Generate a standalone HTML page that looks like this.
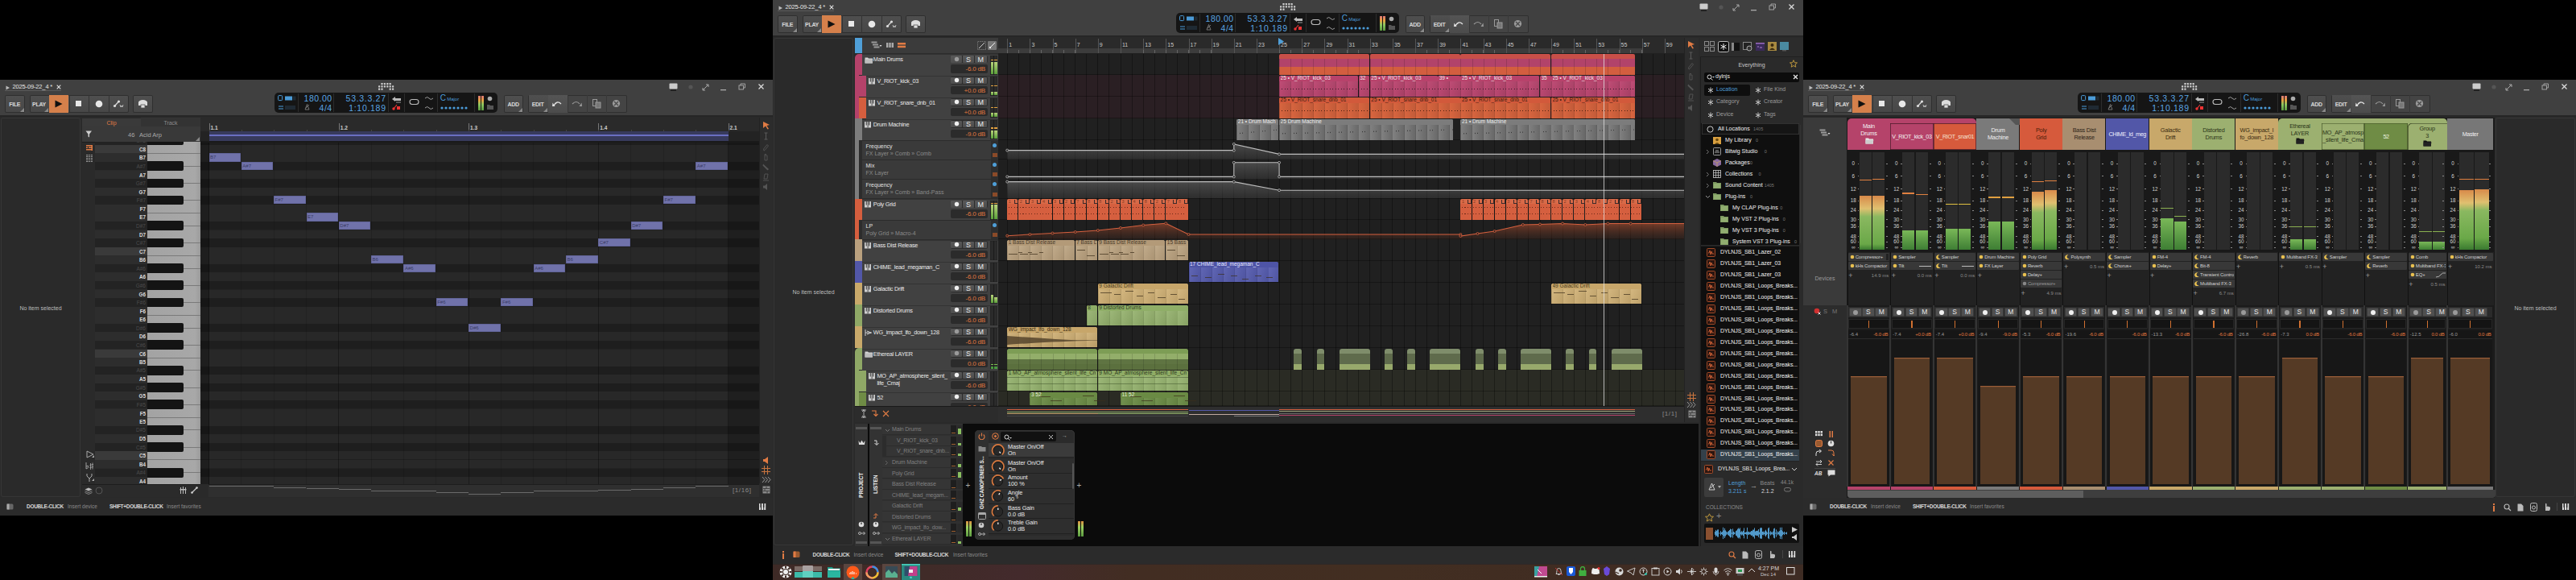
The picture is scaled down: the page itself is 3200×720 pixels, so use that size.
<!DOCTYPE html><html><head><meta charset="utf-8"><style>html,body{margin:0;padding:0;background:#000;width:3200px;height:720px;overflow:hidden;position:relative;}.a,b,svg{position:absolute;display:block;}.t,p{position:absolute;margin:0;font-family:"Liberation Sans",sans-serif;white-space:nowrap;line-height:1.2;}</style></head><body>
<b style="left:0px;top:99px;width:960px;height:541px;background:#2a2a2a"></b>
<b style="left:0px;top:99px;width:960px;height:45px;background:#404040"></b>
<b style="left:0px;top:143px;width:960px;height:2px;background:#262626"></b>
<svg style="left:7px;top:105.5px;" width="6" height="6"><path d="M0.5 0.5 L5 3 L0.5 5.5Z" fill="#bbb"/></svg>
<p style="left:15.5px;top:102.7px;font-size:7.5px;color:#e6e6e6;letter-spacing:-0.15px">2025-09-22_4 *</p>
<svg style="left:69.5px;top:105.2px;" width="6" height="6"><path d="M0.7 0.7 L5.3 5.3 M5.3 0.7 L0.7 5.3" stroke="#e0e0e0" stroke-width="1.1"/></svg>
<b style="left:6px;top:111.8px;width:70px;height:1px;background:#5a5a5a"></b>
<svg style="left:470.2px;top:102.9px;" width="20" height="10"><rect x="3.4" y="0" width="2.2" height="2.2" rx=".4" fill="#cfcfcf"/><rect x="6.8" y="0" width="2.2" height="2.2" rx=".4" fill="#cfcfcf"/><rect x="10.2" y="0" width="2.2" height="2.2" rx=".4" fill="#cfcfcf"/><rect x="13.6" y="0" width="2.2" height="2.2" rx=".4" fill="#cfcfcf"/><rect x="0" y="3.3" width="2.2" height="2.2" rx=".4" fill="#cfcfcf"/><rect x="3.4" y="3.3" width="2.2" height="2.2" rx=".4" fill="#cfcfcf"/><rect x="6.8" y="3.3" width="2.2" height="2.2" rx=".4" fill="#cfcfcf"/><rect x="10.2" y="3.3" width="2.2" height="2.2" rx=".4" fill="#cfcfcf"/><rect x="13.6" y="3.3" width="2.2" height="2.2" rx=".4" fill="#cfcfcf"/><rect x="17" y="3.3" width="2.2" height="2.2" rx=".4" fill="#cfcfcf"/><rect x="0" y="6.6" width="2.2" height="2.2" rx=".4" fill="#cfcfcf"/><rect x="3.4" y="6.6" width="2.2" height="2.2" rx=".4" fill="#cfcfcf"/><rect x="13.6" y="6.6" width="2.2" height="2.2" rx=".4" fill="#cfcfcf"/><rect x="17" y="6.6" width="2.2" height="2.2" rx=".4" fill="#cfcfcf"/></svg>
<b style="left:6px;top:117.5px;width:24.5px;height:22px;background:linear-gradient(#4f4f4f,#474747);border-radius:2px;box-shadow:inset 0 0 0 1px #2f2f2f"></b>
<p style="left:6px;top:126px;font-size:7px;color:#d8d8d8;width:24.5px;text-align:center;font-weight:bold;letter-spacing:-0.3px">FILE</p>
<div class="a" style="left:24.5px;top:133.5px;width:0;height:0;border-left:5px solid transparent;border-bottom:5px solid #8a8a8a;"></div>
<b style="left:36.5px;top:117.5px;width:123px;height:22px;background:linear-gradient(#4f4f4f,#474747);border-radius:2px;box-shadow:inset 0 0 0 1px #2f2f2f"></b>
<p style="left:36.5px;top:126px;font-size:7px;color:#d8d8d8;width:24px;text-align:center;font-weight:bold;letter-spacing:-0.3px">PLAY</p>
<div class="a" style="left:54.5px;top:133.5px;width:0;height:0;border-left:5px solid transparent;border-bottom:5px solid #8a8a8a;"></div>
<b style="left:61px;top:117.5px;width:24px;height:22px;background:#d5804b"></b>
<svg style="left:68px;top:123.5px;" width="10" height="10"><path d="M0.5 0.5 L9.5 5 L0.5 9.5Z" fill="#111"/></svg>
<b style="left:85.5px;top:117.5px;width:1px;height:22px;background:#333"></b>
<b style="left:109.5px;top:117.5px;width:1px;height:22px;background:#333"></b>
<b style="left:134.5px;top:117.5px;width:1px;height:22px;background:#333"></b>
<svg style="left:93.5px;top:125px;" width="8" height="8"><rect x="0" y="0" width="7" height="7" fill="#e8e8e8"/></svg>
<svg style="left:117.5px;top:123.5px;" width="10" height="10"><circle cx="5" cy="5" r="4.3" fill="#e8e8e8"/></svg>
<svg style="left:140px;top:122.5px;" width="14" height="12"><circle cx="2.5" cy="8.5" r="1.6" fill="#ddd"/><circle cx="7.5" cy="3" r="1.6" fill="#ddd"/><path d="M2.5 8.5 L7.5 3" stroke="#ddd" stroke-width="1.2"/><path d="M9 7 l1 3 l1 -2 l1 2 l1 -3" stroke="#ddd" stroke-width="0.7" fill="none"/></svg>
<b style="left:165px;top:117.5px;width:24.5px;height:22px;background:linear-gradient(#4f4f4f,#474747);border-radius:2px;box-shadow:inset 0 0 0 1px #2f2f2f"></b>
<svg style="left:171px;top:122.5px;" width="13" height="12"><ellipse cx="6.5" cy="4" rx="5.5" ry="3" fill="#ddd"/><rect x="1" y="4" width="11" height="4" fill="#ddd"/><rect x="4" y="7" width="5" height="4" fill="#ddd" stroke="#555" stroke-width="0.8"/></svg>
<b style="left:340.7px;top:115.3px;width:277px;height:25px;background:#151515;border-radius:5px"></b>
<b style="left:370.2px;top:116.3px;width:1px;height:23px;background:#2c2c2c"></b>
<b style="left:414.2px;top:116.3px;width:1px;height:23px;background:#2c2c2c"></b>
<b style="left:482.2px;top:116.3px;width:1px;height:23px;background:#2c2c2c"></b>
<b style="left:502.2px;top:116.3px;width:1px;height:23px;background:#2c2c2c"></b>
<b style="left:543.2px;top:116.3px;width:1px;height:23px;background:#2c2c2c"></b>
<b style="left:589.2px;top:116.3px;width:1px;height:23px;background:#2c2c2c"></b>
<svg style="left:344.7px;top:118.3px;" width="26" height="20"><rect x="0.6" y="0.6" width="5" height="6" rx="1" fill="none" stroke="#4b9bd8" stroke-width="1"/><rect x="9" y="1.5" width="9" height="5" fill="#4b9bd8"/><rect x="18.5" y="1.5" width="4" height="5" fill="#1f2a33"/><path d="M1 14 h6 M1 17 h6" stroke="#4b9bd8" stroke-width="1"/><rect x="9" y="13" width="13" height="5" fill="#1f2a33"/></svg>
<p style="left:370.7px;top:116.3px;font-size:10.5px;color:#5aa5e3;width:42px;text-align:right;letter-spacing:0.5px">180.00</p>
<p style="left:370.7px;top:127.9px;font-size:10.5px;color:#5aa5e3;width:42px;text-align:right;letter-spacing:0.5px">4/4</p>
<svg style="left:377.7px;top:129.3px;" width="7" height="8"><path d="M1 7 L3.5 0.5 L6 7Z M2 5 L6 1" stroke="#888" stroke-width="0.8" fill="none"/></svg>
<p style="left:414.7px;top:116.3px;font-size:10.5px;color:#5aa5e3;width:65px;text-align:right;letter-spacing:0.7px">53.3.3.27</p>
<p style="left:414.7px;top:127.9px;font-size:10.5px;color:#5aa5e3;width:65px;text-align:right;letter-spacing:0.7px">1:10.189</p>
<svg style="left:485.7px;top:119.3px;" width="14" height="18"><path d="M1 4 L5 1 L5 7Z" fill="#bbb"/><rect x="5" y="3" width="7" height="3" fill="#bbb"/><path d="M6 8 h6" stroke="#999"/><circle cx="3" cy="16" r="1.7" fill="#e33"/><path d="M3 16 L7 11" stroke="#e33" stroke-width="1.2"/><rect x="7" y="13" width="4" height="4" fill="#e33"/></svg>
<svg style="left:507.7px;top:122.3px;" width="14" height="10"><rect x="1" y="1.5" width="11" height="6" rx="3" fill="none" stroke="#bbb" stroke-width="1.1"/></svg>
<svg style="left:526.7px;top:119.3px;" width="12" height="18"><path d="M1 3 Q4 0 6 3 T11 3" stroke="#aaa" fill="none" stroke-width="0.9"/><path d="M1 15 Q4 12 6 15 T11 15" stroke="#aaa" fill="none" stroke-width="0.9"/></svg>
<p style="left:546.7px;top:116.3px;font-size:10px;color:#4b9bd8">C</p>
<p style="left:555.2px;top:119.8px;font-size:6px;color:#4b9bd8">Major</p>
<svg style="left:546.7px;top:131.3px;" width="40" height="6"><circle cx="2.0" cy="3" r="1.6" fill="#4b9bd8"/><circle cx="7.0" cy="3" r="1.6" fill="#4b9bd8"/><circle cx="12.0" cy="3" r="1.6" fill="#4b9bd8"/><circle cx="17.0" cy="3" r="1.6" fill="#4b9bd8"/><circle cx="22.0" cy="3" r="1.6" fill="#4b9bd8"/><circle cx="27.0" cy="3" r="1.6" fill="#4b9bd8"/><circle cx="32.0" cy="3" r="1.6" fill="#4b9bd8"/></svg>
<b style="left:593.7px;top:119.3px;width:3px;height:18px;background:linear-gradient(#d77,#e9a040 30%,#8cc860 60%,#5a9a40)"></b>
<b style="left:597.7px;top:119.3px;width:3px;height:18px;background:linear-gradient(#d77,#e9a040 30%,#8cc860 60%,#5a9a40)"></b>
<svg style="left:603.7px;top:119.3px;" width="10" height="18"><circle cx="4.5" cy="3.5" r="2.8" fill="#aaa"/><path d="M1 11 h3 l1 1 h4 v5 h-8z" fill="#555"/></svg>
<b style="left:625.5px;top:117.5px;width:24.5px;height:22px;background:linear-gradient(#4f4f4f,#474747);border-radius:2px;box-shadow:inset 0 0 0 1px #2f2f2f"></b>
<p style="left:625.5px;top:126px;font-size:7px;color:#d8d8d8;width:24.5px;text-align:center;font-weight:bold;letter-spacing:-0.3px">ADD</p>
<div class="a" style="left:644.0px;top:133.5px;width:0;height:0;border-left:5px solid transparent;border-bottom:5px solid #8a8a8a;"></div>
<b style="left:656px;top:117.5px;width:122.5px;height:22px;background:#444;border-radius:2px;box-shadow:inset 0 0 0 1px #2f2f2f"></b>
<b style="left:656.5px;top:118px;width:24px;height:21px;background:linear-gradient(#4f4f4f,#474747)"></b>
<b style="left:680.5px;top:117.5px;width:24px;height:22px;background:linear-gradient(#545454,#4c4c4c)"></b>
<p style="left:656px;top:126px;font-size:7px;color:#d8d8d8;width:24px;text-align:center;font-weight:bold;letter-spacing:-0.3px">EDIT</p>
<div class="a" style="left:674.5px;top:133.5px;width:0;height:0;border-left:5px solid transparent;border-bottom:5px solid #8a8a8a;"></div>
<b style="left:704.5px;top:117.5px;width:1px;height:22px;background:#383838"></b>
<b style="left:728.5px;top:117.5px;width:1px;height:22px;background:#383838"></b>
<b style="left:753px;top:117.5px;width:1px;height:22px;background:#383838"></b>
<svg style="left:686px;top:123.5px;" width="14" height="9"><path d="M2 7 Q6 0 11 5" stroke="#e0e0e0" stroke-width="1.3" fill="none"/><path d="M0.5 3.5 L3.5 8 L0 8Z" fill="#e0e0e0"/></svg>
<svg style="left:710px;top:123.5px;" width="14" height="9"><path d="M1 5 Q6 0 10 5" stroke="#999" stroke-width="1.2" fill="none"/><path d="M12.5 3.5 L9.5 8 L13 8Z" fill="#999"/></svg>
<svg style="left:736px;top:122.5px;" width="11" height="12"><rect x="0.5" y="0.5" width="5" height="8" fill="none" stroke="#999"/><rect x="4" y="4" width="6" height="7" fill="#777" stroke="#999"/></svg>
<svg style="left:760px;top:123px;" width="11" height="11"><circle cx="5.5" cy="5.5" r="4.6" fill="#9a9a9a"/><path d="M3 3 L8 8 M8 3 L3 8" stroke="#4a4a4a" stroke-width="1.3"/></svg>
<svg style="left:831px;top:103px;" width="12" height="12"><rect x="0.5" y="0.5" width="10" height="7" rx="1" fill="#ccc"/><rect x="2" y="8" width="7" height="2" fill="#222"/></svg>
<svg style="left:854px;top:104px;" width="8" height="8"><circle cx="4" cy="4" r="2.6" fill="#555"/></svg>
<svg style="left:872px;top:104px;" width="10" height="9"><path d="M1 8 L8 1 M1 8 v-3 M1 8 h3 M8 1 h-3 M8 1 v3" stroke="#aaa" stroke-width="1"/></svg>
<svg style="left:894px;top:104px;" width="10" height="10"><rect x="1" y="7" width="7" height="1.3" fill="#aaa"/></svg>
<svg style="left:917px;top:103px;" width="10" height="10"><rect x="1" y="3" width="5.5" height="5" fill="none" stroke="#aaa" stroke-width="0.9"/><path d="M3 3 V1 H8.5 V6 H6.5" fill="none" stroke="#aaa" stroke-width="0.9"/></svg>
<svg style="left:941px;top:103px;" width="10" height="10"><path d="M1.5 1.5 L7.5 7.5 M7.5 1.5 L1.5 7.5" stroke="#ddd" stroke-width="1.2"/></svg>
<b style="left:960px;top:0px;width:1280px;height:720px;background:#2a2a2a"></b>
<b style="left:960px;top:0px;width:1280px;height:45px;background:#404040"></b>
<b style="left:960px;top:44px;width:1280px;height:2px;background:#262626"></b>
<svg style="left:967px;top:6.5px;" width="6" height="6"><path d="M0.5 0.5 L5 3 L0.5 5.5Z" fill="#bbb"/></svg>
<p style="left:975.5px;top:3.7px;font-size:7.5px;color:#e6e6e6;letter-spacing:-0.15px">2025-09-22_4 *</p>
<svg style="left:1029.5px;top:6.2px;" width="6" height="6"><path d="M0.7 0.7 L5.3 5.3 M5.3 0.7 L0.7 5.3" stroke="#e0e0e0" stroke-width="1.1"/></svg>
<b style="left:966px;top:12.8px;width:70px;height:1px;background:#5a5a5a"></b>
<svg style="left:1590.2px;top:3.9px;" width="20" height="10"><rect x="3.4" y="0" width="2.2" height="2.2" rx=".4" fill="#cfcfcf"/><rect x="6.8" y="0" width="2.2" height="2.2" rx=".4" fill="#cfcfcf"/><rect x="10.2" y="0" width="2.2" height="2.2" rx=".4" fill="#cfcfcf"/><rect x="13.6" y="0" width="2.2" height="2.2" rx=".4" fill="#cfcfcf"/><rect x="0" y="3.3" width="2.2" height="2.2" rx=".4" fill="#cfcfcf"/><rect x="3.4" y="3.3" width="2.2" height="2.2" rx=".4" fill="#cfcfcf"/><rect x="6.8" y="3.3" width="2.2" height="2.2" rx=".4" fill="#cfcfcf"/><rect x="10.2" y="3.3" width="2.2" height="2.2" rx=".4" fill="#cfcfcf"/><rect x="13.6" y="3.3" width="2.2" height="2.2" rx=".4" fill="#cfcfcf"/><rect x="17" y="3.3" width="2.2" height="2.2" rx=".4" fill="#cfcfcf"/><rect x="0" y="6.6" width="2.2" height="2.2" rx=".4" fill="#cfcfcf"/><rect x="3.4" y="6.6" width="2.2" height="2.2" rx=".4" fill="#cfcfcf"/><rect x="13.6" y="6.6" width="2.2" height="2.2" rx=".4" fill="#cfcfcf"/><rect x="17" y="6.6" width="2.2" height="2.2" rx=".4" fill="#cfcfcf"/></svg>
<b style="left:966px;top:18.5px;width:24.5px;height:22px;background:linear-gradient(#4f4f4f,#474747);border-radius:2px;box-shadow:inset 0 0 0 1px #2f2f2f"></b>
<p style="left:966px;top:27px;font-size:7px;color:#d8d8d8;width:24.5px;text-align:center;font-weight:bold;letter-spacing:-0.3px">FILE</p>
<div class="a" style="left:984.5px;top:34.5px;width:0;height:0;border-left:5px solid transparent;border-bottom:5px solid #8a8a8a;"></div>
<b style="left:996.5px;top:18.5px;width:123px;height:22px;background:linear-gradient(#4f4f4f,#474747);border-radius:2px;box-shadow:inset 0 0 0 1px #2f2f2f"></b>
<p style="left:996.5px;top:27px;font-size:7px;color:#d8d8d8;width:24px;text-align:center;font-weight:bold;letter-spacing:-0.3px">PLAY</p>
<div class="a" style="left:1014.5px;top:34.5px;width:0;height:0;border-left:5px solid transparent;border-bottom:5px solid #8a8a8a;"></div>
<b style="left:1021px;top:18.5px;width:24px;height:22px;background:#d5804b"></b>
<svg style="left:1028px;top:24.5px;" width="10" height="10"><path d="M0.5 0.5 L9.5 5 L0.5 9.5Z" fill="#111"/></svg>
<b style="left:1045.5px;top:18.5px;width:1px;height:22px;background:#333"></b>
<b style="left:1069.5px;top:18.5px;width:1px;height:22px;background:#333"></b>
<b style="left:1094.5px;top:18.5px;width:1px;height:22px;background:#333"></b>
<svg style="left:1053.5px;top:26px;" width="8" height="8"><rect x="0" y="0" width="7" height="7" fill="#e8e8e8"/></svg>
<svg style="left:1077.5px;top:24.5px;" width="10" height="10"><circle cx="5" cy="5" r="4.3" fill="#e8e8e8"/></svg>
<svg style="left:1100px;top:23.5px;" width="14" height="12"><circle cx="2.5" cy="8.5" r="1.6" fill="#ddd"/><circle cx="7.5" cy="3" r="1.6" fill="#ddd"/><path d="M2.5 8.5 L7.5 3" stroke="#ddd" stroke-width="1.2"/><path d="M9 7 l1 3 l1 -2 l1 2 l1 -3" stroke="#ddd" stroke-width="0.7" fill="none"/></svg>
<b style="left:1125px;top:18.5px;width:24.5px;height:22px;background:linear-gradient(#4f4f4f,#474747);border-radius:2px;box-shadow:inset 0 0 0 1px #2f2f2f"></b>
<svg style="left:1131px;top:23.5px;" width="13" height="12"><ellipse cx="6.5" cy="4" rx="5.5" ry="3" fill="#ddd"/><rect x="1" y="4" width="11" height="4" fill="#ddd"/><rect x="4" y="7" width="5" height="4" fill="#ddd" stroke="#555" stroke-width="0.8"/></svg>
<b style="left:1460.7px;top:16.3px;width:277px;height:25px;background:#151515;border-radius:5px"></b>
<b style="left:1490.2px;top:17.3px;width:1px;height:23px;background:#2c2c2c"></b>
<b style="left:1534.2px;top:17.3px;width:1px;height:23px;background:#2c2c2c"></b>
<b style="left:1602.2px;top:17.3px;width:1px;height:23px;background:#2c2c2c"></b>
<b style="left:1622.2px;top:17.3px;width:1px;height:23px;background:#2c2c2c"></b>
<b style="left:1663.2px;top:17.3px;width:1px;height:23px;background:#2c2c2c"></b>
<b style="left:1709.2px;top:17.3px;width:1px;height:23px;background:#2c2c2c"></b>
<svg style="left:1464.7px;top:19.3px;" width="26" height="20"><rect x="0.6" y="0.6" width="5" height="6" rx="1" fill="none" stroke="#4b9bd8" stroke-width="1"/><rect x="9" y="1.5" width="9" height="5" fill="#4b9bd8"/><rect x="18.5" y="1.5" width="4" height="5" fill="#1f2a33"/><path d="M1 14 h6 M1 17 h6" stroke="#4b9bd8" stroke-width="1"/><rect x="9" y="13" width="13" height="5" fill="#1f2a33"/></svg>
<p style="left:1490.7px;top:17.3px;font-size:10.5px;color:#5aa5e3;width:42px;text-align:right;letter-spacing:0.5px">180.00</p>
<p style="left:1490.7px;top:28.9px;font-size:10.5px;color:#5aa5e3;width:42px;text-align:right;letter-spacing:0.5px">4/4</p>
<svg style="left:1497.7px;top:30.3px;" width="7" height="8"><path d="M1 7 L3.5 0.5 L6 7Z M2 5 L6 1" stroke="#888" stroke-width="0.8" fill="none"/></svg>
<p style="left:1534.7px;top:17.3px;font-size:10.5px;color:#5aa5e3;width:65px;text-align:right;letter-spacing:0.7px">53.3.3.27</p>
<p style="left:1534.7px;top:28.9px;font-size:10.5px;color:#5aa5e3;width:65px;text-align:right;letter-spacing:0.7px">1:10.189</p>
<svg style="left:1605.7px;top:20.3px;" width="14" height="18"><path d="M1 4 L5 1 L5 7Z" fill="#bbb"/><rect x="5" y="3" width="7" height="3" fill="#bbb"/><path d="M6 8 h6" stroke="#999"/><circle cx="3" cy="16" r="1.7" fill="#e33"/><path d="M3 16 L7 11" stroke="#e33" stroke-width="1.2"/><rect x="7" y="13" width="4" height="4" fill="#e33"/></svg>
<svg style="left:1627.7px;top:23.3px;" width="14" height="10"><rect x="1" y="1.5" width="11" height="6" rx="3" fill="none" stroke="#bbb" stroke-width="1.1"/></svg>
<svg style="left:1646.7px;top:20.3px;" width="12" height="18"><path d="M1 3 Q4 0 6 3 T11 3" stroke="#aaa" fill="none" stroke-width="0.9"/><path d="M1 15 Q4 12 6 15 T11 15" stroke="#aaa" fill="none" stroke-width="0.9"/></svg>
<p style="left:1666.7px;top:17.3px;font-size:10px;color:#4b9bd8">C</p>
<p style="left:1675.2px;top:20.8px;font-size:6px;color:#4b9bd8">Major</p>
<svg style="left:1666.7px;top:32.3px;" width="40" height="6"><circle cx="2.0" cy="3" r="1.6" fill="#4b9bd8"/><circle cx="7.0" cy="3" r="1.6" fill="#4b9bd8"/><circle cx="12.0" cy="3" r="1.6" fill="#4b9bd8"/><circle cx="17.0" cy="3" r="1.6" fill="#4b9bd8"/><circle cx="22.0" cy="3" r="1.6" fill="#4b9bd8"/><circle cx="27.0" cy="3" r="1.6" fill="#4b9bd8"/><circle cx="32.0" cy="3" r="1.6" fill="#4b9bd8"/></svg>
<b style="left:1713.7px;top:20.3px;width:3px;height:18px;background:linear-gradient(#d77,#e9a040 30%,#8cc860 60%,#5a9a40)"></b>
<b style="left:1717.7px;top:20.3px;width:3px;height:18px;background:linear-gradient(#d77,#e9a040 30%,#8cc860 60%,#5a9a40)"></b>
<svg style="left:1723.7px;top:20.3px;" width="10" height="18"><circle cx="4.5" cy="3.5" r="2.8" fill="#aaa"/><path d="M1 11 h3 l1 1 h4 v5 h-8z" fill="#555"/></svg>
<b style="left:1745.5px;top:18.5px;width:24.5px;height:22px;background:linear-gradient(#4f4f4f,#474747);border-radius:2px;box-shadow:inset 0 0 0 1px #2f2f2f"></b>
<p style="left:1745.5px;top:27px;font-size:7px;color:#d8d8d8;width:24.5px;text-align:center;font-weight:bold;letter-spacing:-0.3px">ADD</p>
<div class="a" style="left:1764.0px;top:34.5px;width:0;height:0;border-left:5px solid transparent;border-bottom:5px solid #8a8a8a;"></div>
<b style="left:1776px;top:18.5px;width:122.5px;height:22px;background:#444;border-radius:2px;box-shadow:inset 0 0 0 1px #2f2f2f"></b>
<b style="left:1776.5px;top:19px;width:24px;height:21px;background:linear-gradient(#4f4f4f,#474747)"></b>
<b style="left:1800.5px;top:18.5px;width:24px;height:22px;background:linear-gradient(#545454,#4c4c4c)"></b>
<p style="left:1776px;top:27px;font-size:7px;color:#d8d8d8;width:24px;text-align:center;font-weight:bold;letter-spacing:-0.3px">EDIT</p>
<div class="a" style="left:1794.5px;top:34.5px;width:0;height:0;border-left:5px solid transparent;border-bottom:5px solid #8a8a8a;"></div>
<b style="left:1824.5px;top:18.5px;width:1px;height:22px;background:#383838"></b>
<b style="left:1848.5px;top:18.5px;width:1px;height:22px;background:#383838"></b>
<b style="left:1873px;top:18.5px;width:1px;height:22px;background:#383838"></b>
<svg style="left:1806px;top:24.5px;" width="14" height="9"><path d="M2 7 Q6 0 11 5" stroke="#e0e0e0" stroke-width="1.3" fill="none"/><path d="M0.5 3.5 L3.5 8 L0 8Z" fill="#e0e0e0"/></svg>
<svg style="left:1830px;top:24.5px;" width="14" height="9"><path d="M1 5 Q6 0 10 5" stroke="#999" stroke-width="1.2" fill="none"/><path d="M12.5 3.5 L9.5 8 L13 8Z" fill="#999"/></svg>
<svg style="left:1856px;top:23.5px;" width="11" height="12"><rect x="0.5" y="0.5" width="5" height="8" fill="none" stroke="#999"/><rect x="4" y="4" width="6" height="7" fill="#777" stroke="#999"/></svg>
<svg style="left:1880px;top:24px;" width="11" height="11"><circle cx="5.5" cy="5.5" r="4.6" fill="#9a9a9a"/><path d="M3 3 L8 8 M8 3 L3 8" stroke="#4a4a4a" stroke-width="1.3"/></svg>
<svg style="left:2111px;top:4px;" width="12" height="12"><rect x="0.5" y="0.5" width="10" height="7" rx="1" fill="#ccc"/><rect x="2" y="8" width="7" height="2" fill="#222"/></svg>
<svg style="left:2134px;top:5px;" width="8" height="8"><circle cx="4" cy="4" r="2.6" fill="#555"/></svg>
<svg style="left:2152px;top:5px;" width="10" height="9"><path d="M1 8 L8 1 M1 8 v-3 M1 8 h3 M8 1 h-3 M8 1 v3" stroke="#aaa" stroke-width="1"/></svg>
<svg style="left:2174px;top:5px;" width="10" height="10"><rect x="1" y="7" width="7" height="1.3" fill="#aaa"/></svg>
<svg style="left:2197px;top:4px;" width="10" height="10"><rect x="1" y="3" width="5.5" height="5" fill="none" stroke="#aaa" stroke-width="0.9"/><path d="M3 3 V1 H8.5 V6 H6.5" fill="none" stroke="#aaa" stroke-width="0.9"/></svg>
<svg style="left:2221px;top:4px;" width="10" height="10"><path d="M1.5 1.5 L7.5 7.5 M7.5 1.5 L1.5 7.5" stroke="#ddd" stroke-width="1.2"/></svg>
<b style="left:2240px;top:99px;width:960px;height:541px;background:#2a2a2a"></b>
<b style="left:2240px;top:99px;width:960px;height:45px;background:#404040"></b>
<b style="left:2240px;top:143px;width:960px;height:2px;background:#262626"></b>
<svg style="left:2247px;top:105.5px;" width="6" height="6"><path d="M0.5 0.5 L5 3 L0.5 5.5Z" fill="#bbb"/></svg>
<p style="left:2255.5px;top:102.7px;font-size:7.5px;color:#e6e6e6;letter-spacing:-0.15px">2025-09-22_4 *</p>
<svg style="left:2309.5px;top:105.2px;" width="6" height="6"><path d="M0.7 0.7 L5.3 5.3 M5.3 0.7 L0.7 5.3" stroke="#e0e0e0" stroke-width="1.1"/></svg>
<b style="left:2246px;top:111.8px;width:70px;height:1px;background:#5a5a5a"></b>
<svg style="left:2710.2px;top:102.9px;" width="20" height="10"><rect x="3.4" y="0" width="2.2" height="2.2" rx=".4" fill="#cfcfcf"/><rect x="6.8" y="0" width="2.2" height="2.2" rx=".4" fill="#cfcfcf"/><rect x="10.2" y="0" width="2.2" height="2.2" rx=".4" fill="#cfcfcf"/><rect x="13.6" y="0" width="2.2" height="2.2" rx=".4" fill="#cfcfcf"/><rect x="0" y="3.3" width="2.2" height="2.2" rx=".4" fill="#cfcfcf"/><rect x="3.4" y="3.3" width="2.2" height="2.2" rx=".4" fill="#cfcfcf"/><rect x="6.8" y="3.3" width="2.2" height="2.2" rx=".4" fill="#cfcfcf"/><rect x="10.2" y="3.3" width="2.2" height="2.2" rx=".4" fill="#cfcfcf"/><rect x="13.6" y="3.3" width="2.2" height="2.2" rx=".4" fill="#cfcfcf"/><rect x="17" y="3.3" width="2.2" height="2.2" rx=".4" fill="#cfcfcf"/><rect x="0" y="6.6" width="2.2" height="2.2" rx=".4" fill="#cfcfcf"/><rect x="3.4" y="6.6" width="2.2" height="2.2" rx=".4" fill="#cfcfcf"/><rect x="13.6" y="6.6" width="2.2" height="2.2" rx=".4" fill="#cfcfcf"/><rect x="17" y="6.6" width="2.2" height="2.2" rx=".4" fill="#cfcfcf"/></svg>
<b style="left:2246px;top:117.5px;width:24.5px;height:22px;background:linear-gradient(#4f4f4f,#474747);border-radius:2px;box-shadow:inset 0 0 0 1px #2f2f2f"></b>
<p style="left:2246px;top:126px;font-size:7px;color:#d8d8d8;width:24.5px;text-align:center;font-weight:bold;letter-spacing:-0.3px">FILE</p>
<div class="a" style="left:2264.5px;top:133.5px;width:0;height:0;border-left:5px solid transparent;border-bottom:5px solid #8a8a8a;"></div>
<b style="left:2276.5px;top:117.5px;width:123px;height:22px;background:linear-gradient(#4f4f4f,#474747);border-radius:2px;box-shadow:inset 0 0 0 1px #2f2f2f"></b>
<p style="left:2276.5px;top:126px;font-size:7px;color:#d8d8d8;width:24px;text-align:center;font-weight:bold;letter-spacing:-0.3px">PLAY</p>
<div class="a" style="left:2294.5px;top:133.5px;width:0;height:0;border-left:5px solid transparent;border-bottom:5px solid #8a8a8a;"></div>
<b style="left:2301px;top:117.5px;width:24px;height:22px;background:#d5804b"></b>
<svg style="left:2308px;top:123.5px;" width="10" height="10"><path d="M0.5 0.5 L9.5 5 L0.5 9.5Z" fill="#111"/></svg>
<b style="left:2325.5px;top:117.5px;width:1px;height:22px;background:#333"></b>
<b style="left:2349.5px;top:117.5px;width:1px;height:22px;background:#333"></b>
<b style="left:2374.5px;top:117.5px;width:1px;height:22px;background:#333"></b>
<svg style="left:2333.5px;top:125px;" width="8" height="8"><rect x="0" y="0" width="7" height="7" fill="#e8e8e8"/></svg>
<svg style="left:2357.5px;top:123.5px;" width="10" height="10"><circle cx="5" cy="5" r="4.3" fill="#e8e8e8"/></svg>
<svg style="left:2380px;top:122.5px;" width="14" height="12"><circle cx="2.5" cy="8.5" r="1.6" fill="#ddd"/><circle cx="7.5" cy="3" r="1.6" fill="#ddd"/><path d="M2.5 8.5 L7.5 3" stroke="#ddd" stroke-width="1.2"/><path d="M9 7 l1 3 l1 -2 l1 2 l1 -3" stroke="#ddd" stroke-width="0.7" fill="none"/></svg>
<b style="left:2405px;top:117.5px;width:24.5px;height:22px;background:linear-gradient(#4f4f4f,#474747);border-radius:2px;box-shadow:inset 0 0 0 1px #2f2f2f"></b>
<svg style="left:2411px;top:122.5px;" width="13" height="12"><ellipse cx="6.5" cy="4" rx="5.5" ry="3" fill="#ddd"/><rect x="1" y="4" width="11" height="4" fill="#ddd"/><rect x="4" y="7" width="5" height="4" fill="#ddd" stroke="#555" stroke-width="0.8"/></svg>
<b style="left:2580.7px;top:115.3px;width:277px;height:25px;background:#151515;border-radius:5px"></b>
<b style="left:2610.2px;top:116.3px;width:1px;height:23px;background:#2c2c2c"></b>
<b style="left:2654.2px;top:116.3px;width:1px;height:23px;background:#2c2c2c"></b>
<b style="left:2722.2px;top:116.3px;width:1px;height:23px;background:#2c2c2c"></b>
<b style="left:2742.2px;top:116.3px;width:1px;height:23px;background:#2c2c2c"></b>
<b style="left:2783.2px;top:116.3px;width:1px;height:23px;background:#2c2c2c"></b>
<b style="left:2829.2px;top:116.3px;width:1px;height:23px;background:#2c2c2c"></b>
<svg style="left:2584.7px;top:118.3px;" width="26" height="20"><rect x="0.6" y="0.6" width="5" height="6" rx="1" fill="none" stroke="#4b9bd8" stroke-width="1"/><rect x="9" y="1.5" width="9" height="5" fill="#4b9bd8"/><rect x="18.5" y="1.5" width="4" height="5" fill="#1f2a33"/><path d="M1 14 h6 M1 17 h6" stroke="#4b9bd8" stroke-width="1"/><rect x="9" y="13" width="13" height="5" fill="#1f2a33"/></svg>
<p style="left:2610.7px;top:116.3px;font-size:10.5px;color:#5aa5e3;width:42px;text-align:right;letter-spacing:0.5px">180.00</p>
<p style="left:2610.7px;top:127.9px;font-size:10.5px;color:#5aa5e3;width:42px;text-align:right;letter-spacing:0.5px">4/4</p>
<svg style="left:2617.7px;top:129.3px;" width="7" height="8"><path d="M1 7 L3.5 0.5 L6 7Z M2 5 L6 1" stroke="#888" stroke-width="0.8" fill="none"/></svg>
<p style="left:2654.7px;top:116.3px;font-size:10.5px;color:#5aa5e3;width:65px;text-align:right;letter-spacing:0.7px">53.3.3.27</p>
<p style="left:2654.7px;top:127.9px;font-size:10.5px;color:#5aa5e3;width:65px;text-align:right;letter-spacing:0.7px">1:10.189</p>
<svg style="left:2725.7px;top:119.3px;" width="14" height="18"><path d="M1 4 L5 1 L5 7Z" fill="#bbb"/><rect x="5" y="3" width="7" height="3" fill="#bbb"/><path d="M6 8 h6" stroke="#999"/><circle cx="3" cy="16" r="1.7" fill="#e33"/><path d="M3 16 L7 11" stroke="#e33" stroke-width="1.2"/><rect x="7" y="13" width="4" height="4" fill="#e33"/></svg>
<svg style="left:2747.7px;top:122.3px;" width="14" height="10"><rect x="1" y="1.5" width="11" height="6" rx="3" fill="none" stroke="#bbb" stroke-width="1.1"/></svg>
<svg style="left:2766.7px;top:119.3px;" width="12" height="18"><path d="M1 3 Q4 0 6 3 T11 3" stroke="#aaa" fill="none" stroke-width="0.9"/><path d="M1 15 Q4 12 6 15 T11 15" stroke="#aaa" fill="none" stroke-width="0.9"/></svg>
<p style="left:2786.7px;top:116.3px;font-size:10px;color:#4b9bd8">C</p>
<p style="left:2795.2px;top:119.8px;font-size:6px;color:#4b9bd8">Major</p>
<svg style="left:2786.7px;top:131.3px;" width="40" height="6"><circle cx="2.0" cy="3" r="1.6" fill="#4b9bd8"/><circle cx="7.0" cy="3" r="1.6" fill="#4b9bd8"/><circle cx="12.0" cy="3" r="1.6" fill="#4b9bd8"/><circle cx="17.0" cy="3" r="1.6" fill="#4b9bd8"/><circle cx="22.0" cy="3" r="1.6" fill="#4b9bd8"/><circle cx="27.0" cy="3" r="1.6" fill="#4b9bd8"/><circle cx="32.0" cy="3" r="1.6" fill="#4b9bd8"/></svg>
<b style="left:2833.7px;top:119.3px;width:3px;height:18px;background:linear-gradient(#d77,#e9a040 30%,#8cc860 60%,#5a9a40)"></b>
<b style="left:2837.7px;top:119.3px;width:3px;height:18px;background:linear-gradient(#d77,#e9a040 30%,#8cc860 60%,#5a9a40)"></b>
<svg style="left:2843.7px;top:119.3px;" width="10" height="18"><circle cx="4.5" cy="3.5" r="2.8" fill="#aaa"/><path d="M1 11 h3 l1 1 h4 v5 h-8z" fill="#555"/></svg>
<b style="left:2865.5px;top:117.5px;width:24.5px;height:22px;background:linear-gradient(#4f4f4f,#474747);border-radius:2px;box-shadow:inset 0 0 0 1px #2f2f2f"></b>
<p style="left:2865.5px;top:126px;font-size:7px;color:#d8d8d8;width:24.5px;text-align:center;font-weight:bold;letter-spacing:-0.3px">ADD</p>
<div class="a" style="left:2884.0px;top:133.5px;width:0;height:0;border-left:5px solid transparent;border-bottom:5px solid #8a8a8a;"></div>
<b style="left:2896px;top:117.5px;width:122.5px;height:22px;background:#444;border-radius:2px;box-shadow:inset 0 0 0 1px #2f2f2f"></b>
<b style="left:2896.5px;top:118px;width:24px;height:21px;background:linear-gradient(#4f4f4f,#474747)"></b>
<b style="left:2920.5px;top:117.5px;width:24px;height:22px;background:linear-gradient(#545454,#4c4c4c)"></b>
<p style="left:2896px;top:126px;font-size:7px;color:#d8d8d8;width:24px;text-align:center;font-weight:bold;letter-spacing:-0.3px">EDIT</p>
<div class="a" style="left:2914.5px;top:133.5px;width:0;height:0;border-left:5px solid transparent;border-bottom:5px solid #8a8a8a;"></div>
<b style="left:2944.5px;top:117.5px;width:1px;height:22px;background:#383838"></b>
<b style="left:2968.5px;top:117.5px;width:1px;height:22px;background:#383838"></b>
<b style="left:2993px;top:117.5px;width:1px;height:22px;background:#383838"></b>
<svg style="left:2926px;top:123.5px;" width="14" height="9"><path d="M2 7 Q6 0 11 5" stroke="#e0e0e0" stroke-width="1.3" fill="none"/><path d="M0.5 3.5 L3.5 8 L0 8Z" fill="#e0e0e0"/></svg>
<svg style="left:2950px;top:123.5px;" width="14" height="9"><path d="M1 5 Q6 0 10 5" stroke="#999" stroke-width="1.2" fill="none"/><path d="M12.5 3.5 L9.5 8 L13 8Z" fill="#999"/></svg>
<svg style="left:2976px;top:122.5px;" width="11" height="12"><rect x="0.5" y="0.5" width="5" height="8" fill="none" stroke="#999"/><rect x="4" y="4" width="6" height="7" fill="#777" stroke="#999"/></svg>
<svg style="left:3000px;top:123px;" width="11" height="11"><circle cx="5.5" cy="5.5" r="4.6" fill="#9a9a9a"/><path d="M3 3 L8 8 M8 3 L3 8" stroke="#4a4a4a" stroke-width="1.3"/></svg>
<svg style="left:3071px;top:103px;" width="12" height="12"><rect x="0.5" y="0.5" width="10" height="7" rx="1" fill="#ccc"/><rect x="2" y="8" width="7" height="2" fill="#222"/></svg>
<svg style="left:3094px;top:104px;" width="8" height="8"><circle cx="4" cy="4" r="2.6" fill="#555"/></svg>
<svg style="left:3112px;top:104px;" width="10" height="9"><path d="M1 8 L8 1 M1 8 v-3 M1 8 h3 M8 1 h-3 M8 1 v3" stroke="#aaa" stroke-width="1"/></svg>
<svg style="left:3134px;top:104px;" width="10" height="10"><rect x="1" y="7" width="7" height="1.3" fill="#aaa"/></svg>
<svg style="left:3157px;top:103px;" width="10" height="10"><rect x="1" y="3" width="5.5" height="5" fill="none" stroke="#aaa" stroke-width="0.9"/><path d="M3 3 V1 H8.5 V6 H6.5" fill="none" stroke="#aaa" stroke-width="0.9"/></svg>
<svg style="left:3181px;top:103px;" width="10" height="10"><path d="M1.5 1.5 L7.5 7.5 M7.5 1.5 L1.5 7.5" stroke="#ddd" stroke-width="1.2"/></svg>
<b style="left:1px;top:146px;width:99px;height:471px;background:#2a2a2a;border-radius:3px;box-shadow:inset 0 0 0 1px #363636"></b>
<p style="left:1px;top:378.5px;font-size:7px;color:#bdbdbd;width:99px;text-align:center">No item selected</p>
<b style="left:0px;top:618px;width:960px;height:22px;background:#2b2b2b"></b>
<svg style="left:8px;top:625px;" width="10" height="9"><rect x="0.5" y="0.5" width="8" height="7" rx="1.5" fill="#666"/><rect x="0.5" y="0.5" width="3" height="7" fill="#aaa"/></svg>
<p style="left:33px;top:625px;font-size:6.5px;color:#d8d8d8;font-weight:bold;letter-spacing:-0.3px">DOUBLE-CLICK</p>
<p style="left:84px;top:625px;font-size:6.5px;color:#8a8a8a">Insert device</p>
<p style="left:136px;top:625px;font-size:6.5px;color:#d8d8d8;font-weight:bold;letter-spacing:-0.3px">SHIFT+DOUBLE-CLICK</p>
<p style="left:207px;top:625px;font-size:6.5px;color:#8a8a8a">Insert favorites</p>
<svg style="left:943px;top:625px;" width="9" height="9"><rect x="0" y="0" width="2" height="8" fill="#ddd"/><rect x="3" y="0" width="2.2" height="8" fill="#ddd"/><rect x="6.2" y="0" width="2" height="8" fill="#ddd"/><rect x="1.5" y="0" width="1.4" height="5" fill="#222"/><rect x="4.9" y="0" width="1.4" height="5" fill="#222"/></svg>
<b style="left:102px;top:146px;width:147px;height:454px;background:#2a2a2a"></b>
<b style="left:102px;top:146.5px;width:73px;height:11px;background:#3a3a3a"></b>
<b style="left:175px;top:146px;width:74px;height:11px;background:#333"></b>
<p style="left:102px;top:148.6px;font-size:7px;color:#e07b44;width:73px;text-align:center">Clip</p>
<p style="left:175px;top:148.6px;font-size:7px;color:#8c8c8c;width:74px;text-align:center">Track</p>
<b style="left:102px;top:157.4px;width:147px;height:19px;background:#393939;box-shadow:0 1px 0 #1c1c1c"></b>
<svg style="left:106px;top:162px;" width="9" height="9"><path d="M0.5 0.5 H8 L5 4.5 V8.5 L3.5 7.5 V4.5Z" fill="#cfcfcf"/></svg>
<p style="left:159px;top:162.8px;font-size:7.5px;color:#a8a8a8">46</p>
<p style="left:173px;top:162.8px;font-size:7.5px;color:#a8a8a8">Acid Arp</p>
<div class="a" style="left:243.0px;top:170px;width:0;height:0;border-left:5px solid transparent;border-bottom:5px solid #8a8a8a;"></div>
<svg style="left:107px;top:180px;" width="9" height="8"><path d="M0 0.8 h8 M3 3.3 h5 M0 5.8 h8 M0 3.3 h2" stroke="#e07b44" stroke-width="1.4"/><rect x="6.5" y="0" width="1.5" height="7" fill="#e07b44"/></svg>
<svg style="left:107px;top:192px;" width="9" height="9"><rect x="0" y="0" width="8" height="1" fill="#9a9a9a"/><rect x="0" y="2" width="8" height="1" fill="#9a9a9a"/><rect x="0" y="4" width="8" height="1" fill="#9a9a9a"/><rect x="0" y="6" width="8" height="1" fill="#9a9a9a"/><rect x="0" y="8" width="8" height="1" fill="#9a9a9a"/><rect x="2.5" y="0" width="0.8" height="9" fill="#2a2a2a"/><rect x="5.2" y="0" width="0.8" height="9" fill="#2a2a2a"/></svg>
<svg style="left:107px;top:558.5px;" width="10" height="10"><path d="M1 1 L9 5 L1 9Z" fill="none" stroke="#aaa"/><path d="M7 9 l3 -3 v3z" fill="#aaa"/></svg>
<svg style="left:106px;top:573.5px;" width="12" height="9"><path d="M1 0 V8 Q4 7 4 5 Q4 3.5 1 5" stroke="#aaa" fill="none" stroke-width="0.9"/><path d="M6.5 1 V9 M9 0.5 V8.5 M5.5 3.5 L10 2.5 M5.5 6.5 L10 5.5" stroke="#aaa" stroke-width="0.8"/></svg>
<svg style="left:107px;top:587.5px;" width="10" height="10"><path d="M1 0 v3 l3 3 l3 -3 v-3 M4 6 v4" stroke="#aaa" fill="none"/><path d="M7 9 l3 -3 v3z" fill="#aaa"/></svg>
<div class="a" style="left:118px;top:176.0px;width:131px;height:424.5px;overflow:hidden;">
<b style="left:0px;top:-6.8px;width:65px;height:10.6px;background:#232323"></b>
<p style="left:0px;top:-5px;font-size:6.5px;color:#4c4c4c;width:63px;text-align:right">C#8</p>
<b style="left:0px;top:3.8px;width:65px;height:10.6px;background:#3a3a3a"></b>
<p style="left:0px;top:5.8px;font-size:6.3px;color:#dcdcdc;width:63px;text-align:right;font-weight:bold">C8</p>
<b style="left:0px;top:14.4px;width:65px;height:10.6px;background:#2d2d2d"></b>
<p style="left:0px;top:16.4px;font-size:6.3px;color:#dcdcdc;width:63px;text-align:right;font-weight:bold">B7</p>
<b style="left:0px;top:24.9px;width:65px;height:10.6px;background:#232323"></b>
<p style="left:0px;top:26.7px;font-size:6.5px;color:#4c4c4c;width:63px;text-align:right">A#7</p>
<b style="left:0px;top:35.5px;width:65px;height:10.6px;background:#2d2d2d"></b>
<p style="left:0px;top:37.5px;font-size:6.3px;color:#dcdcdc;width:63px;text-align:right;font-weight:bold">A7</p>
<b style="left:0px;top:46.1px;width:65px;height:10.6px;background:#232323"></b>
<p style="left:0px;top:47.9px;font-size:6.5px;color:#4c4c4c;width:63px;text-align:right">G#7</p>
<b style="left:0px;top:56.7px;width:65px;height:10.6px;background:#2d2d2d"></b>
<p style="left:0px;top:58.7px;font-size:6.3px;color:#dcdcdc;width:63px;text-align:right;font-weight:bold">G7</p>
<b style="left:0px;top:67.2px;width:65px;height:10.6px;background:#232323"></b>
<p style="left:0px;top:69px;font-size:6.5px;color:#4c4c4c;width:63px;text-align:right">F#7</p>
<b style="left:0px;top:77.8px;width:65px;height:10.6px;background:#2d2d2d"></b>
<p style="left:0px;top:79.8px;font-size:6.3px;color:#dcdcdc;width:63px;text-align:right;font-weight:bold">F7</p>
<b style="left:0px;top:88.4px;width:65px;height:10.6px;background:#2d2d2d"></b>
<p style="left:0px;top:90.4px;font-size:6.3px;color:#dcdcdc;width:63px;text-align:right;font-weight:bold">E7</p>
<b style="left:0px;top:98.9px;width:65px;height:10.6px;background:#232323"></b>
<p style="left:0px;top:100.7px;font-size:6.5px;color:#4c4c4c;width:63px;text-align:right">D#7</p>
<b style="left:0px;top:109.5px;width:65px;height:10.6px;background:#2d2d2d"></b>
<p style="left:0px;top:111.5px;font-size:6.3px;color:#dcdcdc;width:63px;text-align:right;font-weight:bold">D7</p>
<b style="left:0px;top:120.1px;width:65px;height:10.6px;background:#232323"></b>
<p style="left:0px;top:121.9px;font-size:6.5px;color:#4c4c4c;width:63px;text-align:right">C#7</p>
<b style="left:0px;top:130.6px;width:65px;height:10.6px;background:#3a3a3a"></b>
<p style="left:0px;top:132.6px;font-size:6.3px;color:#dcdcdc;width:63px;text-align:right;font-weight:bold">C7</p>
<b style="left:0px;top:141.2px;width:65px;height:10.6px;background:#2d2d2d"></b>
<p style="left:0px;top:143.2px;font-size:6.3px;color:#dcdcdc;width:63px;text-align:right;font-weight:bold">B6</p>
<b style="left:0px;top:151.8px;width:65px;height:10.6px;background:#232323"></b>
<p style="left:0px;top:153.6px;font-size:6.5px;color:#4c4c4c;width:63px;text-align:right">A#6</p>
<b style="left:0px;top:162.4px;width:65px;height:10.6px;background:#2d2d2d"></b>
<p style="left:0px;top:164.4px;font-size:6.3px;color:#dcdcdc;width:63px;text-align:right;font-weight:bold">A6</p>
<b style="left:0px;top:172.9px;width:65px;height:10.6px;background:#232323"></b>
<p style="left:0px;top:174.7px;font-size:6.5px;color:#4c4c4c;width:63px;text-align:right">G#6</p>
<b style="left:0px;top:183.5px;width:65px;height:10.6px;background:#2d2d2d"></b>
<p style="left:0px;top:185.5px;font-size:6.3px;color:#dcdcdc;width:63px;text-align:right;font-weight:bold">G6</p>
<b style="left:0px;top:194.1px;width:65px;height:10.6px;background:#232323"></b>
<p style="left:0px;top:195.9px;font-size:6.5px;color:#4c4c4c;width:63px;text-align:right">F#6</p>
<b style="left:0px;top:204.6px;width:65px;height:10.6px;background:#2d2d2d"></b>
<p style="left:0px;top:206.6px;font-size:6.3px;color:#dcdcdc;width:63px;text-align:right;font-weight:bold">F6</p>
<b style="left:0px;top:215.2px;width:65px;height:10.6px;background:#2d2d2d"></b>
<p style="left:0px;top:217.2px;font-size:6.3px;color:#dcdcdc;width:63px;text-align:right;font-weight:bold">E6</p>
<b style="left:0px;top:225.8px;width:65px;height:10.6px;background:#232323"></b>
<p style="left:0px;top:227.6px;font-size:6.5px;color:#4c4c4c;width:63px;text-align:right">D#6</p>
<b style="left:0px;top:236.3px;width:65px;height:10.6px;background:#2d2d2d"></b>
<p style="left:0px;top:238.3px;font-size:6.3px;color:#dcdcdc;width:63px;text-align:right;font-weight:bold">D6</p>
<b style="left:0px;top:246.9px;width:65px;height:10.6px;background:#232323"></b>
<p style="left:0px;top:248.7px;font-size:6.5px;color:#4c4c4c;width:63px;text-align:right">C#6</p>
<b style="left:0px;top:257.5px;width:65px;height:10.6px;background:#3a3a3a"></b>
<p style="left:0px;top:259.5px;font-size:6.3px;color:#dcdcdc;width:63px;text-align:right;font-weight:bold">C6</p>
<b style="left:0px;top:268.1px;width:65px;height:10.6px;background:#2d2d2d"></b>
<p style="left:0px;top:270.1px;font-size:6.3px;color:#dcdcdc;width:63px;text-align:right;font-weight:bold">B5</p>
<b style="left:0px;top:278.6px;width:65px;height:10.6px;background:#232323"></b>
<p style="left:0px;top:280.4px;font-size:6.5px;color:#4c4c4c;width:63px;text-align:right">A#5</p>
<b style="left:0px;top:289.2px;width:65px;height:10.6px;background:#2d2d2d"></b>
<p style="left:0px;top:291.2px;font-size:6.3px;color:#dcdcdc;width:63px;text-align:right;font-weight:bold">A5</p>
<b style="left:0px;top:299.8px;width:65px;height:10.6px;background:#232323"></b>
<p style="left:0px;top:301.6px;font-size:6.5px;color:#4c4c4c;width:63px;text-align:right">G#5</p>
<b style="left:0px;top:310.3px;width:65px;height:10.6px;background:#2d2d2d"></b>
<p style="left:0px;top:312.3px;font-size:6.3px;color:#dcdcdc;width:63px;text-align:right;font-weight:bold">G5</p>
<b style="left:0px;top:320.9px;width:65px;height:10.6px;background:#232323"></b>
<p style="left:0px;top:322.7px;font-size:6.5px;color:#4c4c4c;width:63px;text-align:right">F#5</p>
<b style="left:0px;top:331.5px;width:65px;height:10.6px;background:#2d2d2d"></b>
<p style="left:0px;top:333.5px;font-size:6.3px;color:#dcdcdc;width:63px;text-align:right;font-weight:bold">F5</p>
<b style="left:0px;top:342px;width:65px;height:10.6px;background:#2d2d2d"></b>
<p style="left:0px;top:344px;font-size:6.3px;color:#dcdcdc;width:63px;text-align:right;font-weight:bold">E5</p>
<b style="left:0px;top:352.6px;width:65px;height:10.6px;background:#232323"></b>
<p style="left:0px;top:354.4px;font-size:6.5px;color:#4c4c4c;width:63px;text-align:right">D#5</p>
<b style="left:0px;top:363.2px;width:65px;height:10.6px;background:#2d2d2d"></b>
<p style="left:0px;top:365.2px;font-size:6.3px;color:#dcdcdc;width:63px;text-align:right;font-weight:bold">D5</p>
<b style="left:0px;top:373.8px;width:65px;height:10.6px;background:#232323"></b>
<p style="left:0px;top:375.6px;font-size:6.5px;color:#4c4c4c;width:63px;text-align:right">C#5</p>
<b style="left:0px;top:384.3px;width:65px;height:10.6px;background:#3a3a3a"></b>
<p style="left:0px;top:386.3px;font-size:6.3px;color:#dcdcdc;width:63px;text-align:right;font-weight:bold">C5</p>
<b style="left:0px;top:394.9px;width:65px;height:10.6px;background:#2d2d2d"></b>
<p style="left:0px;top:396.9px;font-size:6.3px;color:#dcdcdc;width:63px;text-align:right;font-weight:bold">B4</p>
<b style="left:0px;top:405.5px;width:65px;height:10.6px;background:#232323"></b>
<p style="left:0px;top:407.3px;font-size:6.5px;color:#4c4c4c;width:63px;text-align:right">A#4</p>
<b style="left:0px;top:416px;width:65px;height:10.6px;background:#2d2d2d"></b>
<p style="left:0px;top:418px;font-size:6.3px;color:#dcdcdc;width:63px;text-align:right;font-weight:bold">A4</p>
</div>
<div class="a" style="left:183px;top:176.0px;width:66px;height:424.5px;overflow:hidden;background:linear-gradient(90deg,#a3a3a3,#a8a8a8 90%,#9a9a9a);">
<b style="left:0px;top:-2px;width:66px;height:1px;background:#7a7a7a"></b>
<b style="left:0px;top:13.9px;width:66px;height:1px;background:#7a7a7a"></b>
<b style="left:0px;top:29.7px;width:66px;height:1px;background:#7a7a7a"></b>
<b style="left:0px;top:50.9px;width:66px;height:1px;background:#7a7a7a"></b>
<b style="left:0px;top:72px;width:66px;height:1px;background:#7a7a7a"></b>
<b style="left:0px;top:87.9px;width:66px;height:1px;background:#7a7a7a"></b>
<b style="left:0px;top:103.7px;width:66px;height:1px;background:#7a7a7a"></b>
<b style="left:0px;top:124.9px;width:66px;height:1px;background:#7a7a7a"></b>
<b style="left:0px;top:140.7px;width:66px;height:1px;background:#7a7a7a"></b>
<b style="left:0px;top:156.6px;width:66px;height:1px;background:#7a7a7a"></b>
<b style="left:0px;top:177.7px;width:66px;height:1px;background:#7a7a7a"></b>
<b style="left:0px;top:198.8px;width:66px;height:1px;background:#7a7a7a"></b>
<b style="left:0px;top:214.7px;width:66px;height:1px;background:#7a7a7a"></b>
<b style="left:0px;top:230.6px;width:66px;height:1px;background:#7a7a7a"></b>
<b style="left:0px;top:251.7px;width:66px;height:1px;background:#7a7a7a"></b>
<b style="left:0px;top:267.6px;width:66px;height:1px;background:#7a7a7a"></b>
<b style="left:0px;top:283.4px;width:66px;height:1px;background:#7a7a7a"></b>
<b style="left:0px;top:304.5px;width:66px;height:1px;background:#7a7a7a"></b>
<b style="left:0px;top:325.7px;width:66px;height:1px;background:#7a7a7a"></b>
<b style="left:0px;top:341.5px;width:66px;height:1px;background:#7a7a7a"></b>
<b style="left:0px;top:357.4px;width:66px;height:1px;background:#7a7a7a"></b>
<b style="left:0px;top:378.5px;width:66px;height:1px;background:#7a7a7a"></b>
<b style="left:0px;top:394.4px;width:66px;height:1px;background:#7a7a7a"></b>
<b style="left:0px;top:410.2px;width:66px;height:1px;background:#7a7a7a"></b>
<b style="left:0px;top:431.4px;width:66px;height:1px;background:#7a7a7a"></b>
<b style="left:0px;top:-7.3px;width:45px;height:11.6px;background:#141414;border-radius:0 2px 2px 0"></b>
<b style="left:0px;top:24.4px;width:45px;height:11.6px;background:#141414;border-radius:0 2px 2px 0"></b>
<b style="left:0px;top:45.6px;width:45px;height:11.6px;background:#141414;border-radius:0 2px 2px 0"></b>
<b style="left:0px;top:66.7px;width:45px;height:11.6px;background:#141414;border-radius:0 2px 2px 0"></b>
<b style="left:0px;top:98.4px;width:45px;height:11.6px;background:#141414;border-radius:0 2px 2px 0"></b>
<b style="left:0px;top:119.6px;width:45px;height:11.6px;background:#141414;border-radius:0 2px 2px 0"></b>
<b style="left:0px;top:151.3px;width:45px;height:11.6px;background:#141414;border-radius:0 2px 2px 0"></b>
<b style="left:0px;top:172.4px;width:45px;height:11.6px;background:#141414;border-radius:0 2px 2px 0"></b>
<b style="left:0px;top:193.6px;width:45px;height:11.6px;background:#141414;border-radius:0 2px 2px 0"></b>
<b style="left:0px;top:225.3px;width:45px;height:11.6px;background:#141414;border-radius:0 2px 2px 0"></b>
<b style="left:0px;top:246.4px;width:45px;height:11.6px;background:#141414;border-radius:0 2px 2px 0"></b>
<b style="left:0px;top:278.1px;width:45px;height:11.6px;background:#141414;border-radius:0 2px 2px 0"></b>
<b style="left:0px;top:299.3px;width:45px;height:11.6px;background:#141414;border-radius:0 2px 2px 0"></b>
<b style="left:0px;top:320.4px;width:45px;height:11.6px;background:#141414;border-radius:0 2px 2px 0"></b>
<b style="left:0px;top:352.1px;width:45px;height:11.6px;background:#141414;border-radius:0 2px 2px 0"></b>
<b style="left:0px;top:373.2px;width:45px;height:11.6px;background:#141414;border-radius:0 2px 2px 0"></b>
<b style="left:0px;top:405px;width:45px;height:11.6px;background:#141414;border-radius:0 2px 2px 0"></b>
<b style="left:0px;top:426.1px;width:45px;height:11.6px;background:#141414;border-radius:0 2px 2px 0"></b>
</div>
<b style="left:249px;top:146px;width:694px;height:454.5px;background:#232323"></b>
<b style="left:249px;top:146px;width:694px;height:17px;background:#2a2a2a"></b>
<div class="a" style="left:249px;top:176.0px;width:694px;height:424.5px;overflow:hidden;">
<b style="left:0px;top:-6.8px;width:694px;height:10.6px;background:#1e1e1e"></b>
<b style="left:0px;top:3.8px;width:694px;height:10.6px;background:#282828"></b>
<b style="left:0px;top:13.9px;width:694px;height:1px;background:#1f1f1f"></b>
<b style="left:0px;top:14.4px;width:694px;height:10.6px;background:#282828"></b>
<b style="left:0px;top:24.9px;width:694px;height:10.6px;background:#1e1e1e"></b>
<b style="left:0px;top:35.5px;width:694px;height:10.6px;background:#282828"></b>
<b style="left:0px;top:46.1px;width:694px;height:10.6px;background:#1e1e1e"></b>
<b style="left:0px;top:56.7px;width:694px;height:10.6px;background:#282828"></b>
<b style="left:0px;top:67.2px;width:694px;height:10.6px;background:#1e1e1e"></b>
<b style="left:0px;top:77.8px;width:694px;height:10.6px;background:#282828"></b>
<b style="left:0px;top:87.9px;width:694px;height:1px;background:#1f1f1f"></b>
<b style="left:0px;top:88.4px;width:694px;height:10.6px;background:#282828"></b>
<b style="left:0px;top:98.9px;width:694px;height:10.6px;background:#1e1e1e"></b>
<b style="left:0px;top:109.5px;width:694px;height:10.6px;background:#282828"></b>
<b style="left:0px;top:120.1px;width:694px;height:10.6px;background:#1e1e1e"></b>
<b style="left:0px;top:130.6px;width:694px;height:10.6px;background:#282828"></b>
<b style="left:0px;top:140.7px;width:694px;height:1px;background:#1f1f1f"></b>
<b style="left:0px;top:141.2px;width:694px;height:10.6px;background:#282828"></b>
<b style="left:0px;top:151.8px;width:694px;height:10.6px;background:#1e1e1e"></b>
<b style="left:0px;top:162.4px;width:694px;height:10.6px;background:#282828"></b>
<b style="left:0px;top:172.9px;width:694px;height:10.6px;background:#1e1e1e"></b>
<b style="left:0px;top:183.5px;width:694px;height:10.6px;background:#282828"></b>
<b style="left:0px;top:194.1px;width:694px;height:10.6px;background:#1e1e1e"></b>
<b style="left:0px;top:204.6px;width:694px;height:10.6px;background:#282828"></b>
<b style="left:0px;top:214.7px;width:694px;height:1px;background:#1f1f1f"></b>
<b style="left:0px;top:215.2px;width:694px;height:10.6px;background:#282828"></b>
<b style="left:0px;top:225.8px;width:694px;height:10.6px;background:#1e1e1e"></b>
<b style="left:0px;top:236.3px;width:694px;height:10.6px;background:#282828"></b>
<b style="left:0px;top:246.9px;width:694px;height:10.6px;background:#1e1e1e"></b>
<b style="left:0px;top:257.5px;width:694px;height:10.6px;background:#282828"></b>
<b style="left:0px;top:267.6px;width:694px;height:1px;background:#1f1f1f"></b>
<b style="left:0px;top:268.1px;width:694px;height:10.6px;background:#282828"></b>
<b style="left:0px;top:278.6px;width:694px;height:10.6px;background:#1e1e1e"></b>
<b style="left:0px;top:289.2px;width:694px;height:10.6px;background:#282828"></b>
<b style="left:0px;top:299.8px;width:694px;height:10.6px;background:#1e1e1e"></b>
<b style="left:0px;top:310.3px;width:694px;height:10.6px;background:#282828"></b>
<b style="left:0px;top:320.9px;width:694px;height:10.6px;background:#1e1e1e"></b>
<b style="left:0px;top:331.5px;width:694px;height:10.6px;background:#282828"></b>
<b style="left:0px;top:341.5px;width:694px;height:1px;background:#1f1f1f"></b>
<b style="left:0px;top:342px;width:694px;height:10.6px;background:#282828"></b>
<b style="left:0px;top:352.6px;width:694px;height:10.6px;background:#1e1e1e"></b>
<b style="left:0px;top:363.2px;width:694px;height:10.6px;background:#282828"></b>
<b style="left:0px;top:373.8px;width:694px;height:10.6px;background:#1e1e1e"></b>
<b style="left:0px;top:384.3px;width:694px;height:10.6px;background:#282828"></b>
<b style="left:0px;top:394.4px;width:694px;height:1px;background:#1f1f1f"></b>
<b style="left:0px;top:394.9px;width:694px;height:10.6px;background:#282828"></b>
<b style="left:0px;top:405.5px;width:694px;height:10.6px;background:#1e1e1e"></b>
<b style="left:0px;top:416px;width:694px;height:10.6px;background:#282828"></b>
<b style="left:0px;top:426.6px;width:694px;height:10.6px;background:#1e1e1e"></b>
<b style="left:0px;top:0px;width:10.5px;height:424.5px;background:rgba(0,0,0,0.25)"></b>
<b style="left:655.6px;top:0px;width:38.4px;height:424.5px;background:rgba(0,0,0,0.22)"></b>
<b style="left:10px;top:0px;width:1px;height:424.5px;background:rgba(0,0,0,.3)"></b>
<b style="left:50.3px;top:0px;width:1px;height:424.5px;background:rgba(0,0,0,.13)"></b>
<b style="left:90.6px;top:0px;width:1px;height:424.5px;background:rgba(0,0,0,.13)"></b>
<b style="left:131px;top:0px;width:1px;height:424.5px;background:rgba(0,0,0,.13)"></b>
<b style="left:171.3px;top:0px;width:1px;height:424.5px;background:rgba(0,0,0,.3)"></b>
<b style="left:211.6px;top:0px;width:1px;height:424.5px;background:rgba(0,0,0,.13)"></b>
<b style="left:251.9px;top:0px;width:1px;height:424.5px;background:rgba(0,0,0,.13)"></b>
<b style="left:292.2px;top:0px;width:1px;height:424.5px;background:rgba(0,0,0,.13)"></b>
<b style="left:332.6px;top:0px;width:1px;height:424.5px;background:rgba(0,0,0,.3)"></b>
<b style="left:372.9px;top:0px;width:1px;height:424.5px;background:rgba(0,0,0,.13)"></b>
<b style="left:413.2px;top:0px;width:1px;height:424.5px;background:rgba(0,0,0,.13)"></b>
<b style="left:453.5px;top:0px;width:1px;height:424.5px;background:rgba(0,0,0,.13)"></b>
<b style="left:493.8px;top:0px;width:1px;height:424.5px;background:rgba(0,0,0,.3)"></b>
<b style="left:534.2px;top:0px;width:1px;height:424.5px;background:rgba(0,0,0,.13)"></b>
<b style="left:574.5px;top:0px;width:1px;height:424.5px;background:rgba(0,0,0,.13)"></b>
<b style="left:614.8px;top:0px;width:1px;height:424.5px;background:rgba(0,0,0,.13)"></b>
<b style="left:655.1px;top:0px;width:1px;height:424.5px;background:rgba(0,0,0,.3)"></b>
<b style="left:695.4px;top:0px;width:1px;height:424.5px;background:rgba(0,0,0,.13)"></b>
</div>
<b style="left:259.5px;top:153px;width:1px;height:10px;background:#777"></b>
<p style="left:261.5px;top:154.5px;font-size:6.5px;color:#d0d0d0;font-weight:bold">1.1</p>
<b style="left:420.8px;top:153px;width:1px;height:10px;background:#777"></b>
<p style="left:422.8px;top:154.5px;font-size:6.5px;color:#d0d0d0;font-weight:bold">1.2</p>
<b style="left:582.1px;top:153px;width:1px;height:10px;background:#777"></b>
<p style="left:584.1px;top:154.5px;font-size:6.5px;color:#d0d0d0;font-weight:bold">1.3</p>
<b style="left:743.3px;top:153px;width:1px;height:10px;background:#777"></b>
<p style="left:745.3px;top:154.5px;font-size:6.5px;color:#d0d0d0;font-weight:bold">1.4</p>
<b style="left:904.6px;top:153px;width:1px;height:10px;background:#777"></b>
<p style="left:906.6px;top:154.5px;font-size:6.5px;color:#d0d0d0;font-weight:bold">2.1</p>
<b style="left:259.5px;top:161px;width:0.6px;height:2px;background:#444"></b>
<b style="left:299.8px;top:161px;width:0.6px;height:2px;background:#444"></b>
<b style="left:340.1px;top:161px;width:0.6px;height:2px;background:#444"></b>
<b style="left:380.5px;top:161px;width:0.6px;height:2px;background:#444"></b>
<b style="left:420.8px;top:161px;width:0.6px;height:2px;background:#444"></b>
<b style="left:461.1px;top:161px;width:0.6px;height:2px;background:#444"></b>
<b style="left:501.4px;top:161px;width:0.6px;height:2px;background:#444"></b>
<b style="left:541.7px;top:161px;width:0.6px;height:2px;background:#444"></b>
<b style="left:582.1px;top:161px;width:0.6px;height:2px;background:#444"></b>
<b style="left:622.4px;top:161px;width:0.6px;height:2px;background:#444"></b>
<b style="left:662.7px;top:161px;width:0.6px;height:2px;background:#444"></b>
<b style="left:703px;top:161px;width:0.6px;height:2px;background:#444"></b>
<b style="left:743.3px;top:161px;width:0.6px;height:2px;background:#444"></b>
<b style="left:783.7px;top:161px;width:0.6px;height:2px;background:#444"></b>
<b style="left:824px;top:161px;width:0.6px;height:2px;background:#444"></b>
<b style="left:864.3px;top:161px;width:0.6px;height:2px;background:#444"></b>
<b style="left:904.6px;top:161px;width:0.6px;height:2px;background:#444"></b>
<b style="left:259.5px;top:163px;width:645.1px;height:12px;background:#373a5c"></b>
<b style="left:259.5px;top:167.3px;width:645.1px;height:1.8px;background:#6a6fc2"></b>
<b style="left:249px;top:175px;width:694px;height:2px;background:#1a1a1a"></b>
<b style="left:259.5px;top:190.4px;width:39.5px;height:10.2px;background:#7072aa;box-shadow:inset 0 0 0 0.5px #55588a"></b>
<p style="left:261px;top:192.2px;font-size:6px;color:#3b3d66">B7</p>
<b style="left:299.8px;top:200.9px;width:39.5px;height:10.2px;background:#7072aa;box-shadow:inset 0 0 0 0.5px #55588a"></b>
<p style="left:301.3px;top:202.7px;font-size:6px;color:#3b3d66">A#7</p>
<b style="left:340.1px;top:243.2px;width:39.5px;height:10.2px;background:#7072aa;box-shadow:inset 0 0 0 0.5px #55588a"></b>
<p style="left:341.6px;top:245px;font-size:6px;color:#3b3d66">F#7</p>
<b style="left:380.5px;top:264.4px;width:39.5px;height:10.2px;background:#7072aa;box-shadow:inset 0 0 0 0.5px #55588a"></b>
<p style="left:382px;top:266.2px;font-size:6px;color:#3b3d66">E7</p>
<b style="left:420.8px;top:274.9px;width:39.5px;height:10.2px;background:#7072aa;box-shadow:inset 0 0 0 0.5px #55588a"></b>
<p style="left:422.3px;top:276.7px;font-size:6px;color:#3b3d66">D#7</p>
<b style="left:461.1px;top:317.2px;width:39.5px;height:10.2px;background:#7072aa;box-shadow:inset 0 0 0 0.5px #55588a"></b>
<p style="left:462.6px;top:319px;font-size:6px;color:#3b3d66">B6</p>
<b style="left:501.4px;top:327.8px;width:39.5px;height:10.2px;background:#7072aa;box-shadow:inset 0 0 0 0.5px #55588a"></b>
<p style="left:502.9px;top:329.6px;font-size:6px;color:#3b3d66">A#6</p>
<b style="left:541.7px;top:370.1px;width:39.5px;height:10.2px;background:#7072aa;box-shadow:inset 0 0 0 0.5px #55588a"></b>
<p style="left:543.2px;top:371.9px;font-size:6px;color:#3b3d66">F#6</p>
<b style="left:582.1px;top:401.8px;width:39.5px;height:10.2px;background:#7072aa;box-shadow:inset 0 0 0 0.5px #55588a"></b>
<p style="left:583.6px;top:403.6px;font-size:6px;color:#3b3d66">D#6</p>
<b style="left:622.4px;top:370.1px;width:39.5px;height:10.2px;background:#7072aa;box-shadow:inset 0 0 0 0.5px #55588a"></b>
<p style="left:623.9px;top:371.9px;font-size:6px;color:#3b3d66">F#6</p>
<b style="left:662.7px;top:327.8px;width:39.5px;height:10.2px;background:#7072aa;box-shadow:inset 0 0 0 0.5px #55588a"></b>
<p style="left:664.2px;top:329.6px;font-size:6px;color:#3b3d66">A#6</p>
<b style="left:703px;top:317.2px;width:39.5px;height:10.2px;background:#7072aa;box-shadow:inset 0 0 0 0.5px #55588a"></b>
<p style="left:704.5px;top:319px;font-size:6px;color:#3b3d66">B6</p>
<b style="left:743.3px;top:296.1px;width:39.5px;height:10.2px;background:#7072aa;box-shadow:inset 0 0 0 0.5px #55588a"></b>
<p style="left:744.8px;top:297.9px;font-size:6px;color:#3b3d66">C#7</p>
<b style="left:783.7px;top:274.9px;width:39.5px;height:10.2px;background:#7072aa;box-shadow:inset 0 0 0 0.5px #55588a"></b>
<p style="left:785.2px;top:276.7px;font-size:6px;color:#3b3d66">D#7</p>
<b style="left:824px;top:243.2px;width:39.5px;height:10.2px;background:#7072aa;box-shadow:inset 0 0 0 0.5px #55588a"></b>
<p style="left:825.5px;top:245px;font-size:6px;color:#3b3d66">F#7</p>
<b style="left:864.3px;top:200.9px;width:39.5px;height:10.2px;background:#7072aa;box-shadow:inset 0 0 0 0.5px #55588a"></b>
<p style="left:865.8px;top:202.7px;font-size:6px;color:#3b3d66">A#7</p>
<b style="left:943px;top:146px;width:17px;height:454px;background:#2c2c2c;box-shadow:inset 1px 0 0 #222"></b>
<svg style="left:947px;top:150px;" width="10" height="11"><path d="M1 1 L9 5 L5.5 6 L8 10 L6.5 10.5 L4 6.5 L1 9Z" fill="#e07b44"/></svg>
<svg style="left:947px;top:164px;" width="10" height="10"><path d="M4.5 1 V9 M2.5 1 H6.5 M2.5 9 H6.5" stroke="#5a5a5a" stroke-width="1"/></svg>
<svg style="left:947px;top:178px;" width="10" height="10"><path d="M2 9 L1.5 7 L6 1.5 L7.5 3 L3 8.5Z" fill="none" stroke="#555" stroke-width="0.9"/></svg>
<svg style="left:947px;top:190px;" width="10" height="10"><path d="M3 3 V1.5 H5 M3 3 H6 V9 H3Z" fill="none" stroke="#555" stroke-width="0.9"/></svg>
<svg style="left:947px;top:202px;" width="10" height="10"><path d="M1 1.5 L8 8 L6.5 9.5 L0.5 3.5Z" fill="#555"/></svg>
<svg style="left:947px;top:215px;" width="10" height="10"><path d="M3 1 H7 L6 7 H2Z M1 9 H8" fill="none" stroke="#555" stroke-width="0.9"/></svg>
<svg style="left:947px;top:227px;" width="10" height="10"><path d="M1 3.5 H3 L6 1 V9 L3 6.5 H1Z" fill="#555"/></svg>
<svg style="left:947px;top:567px;" width="9" height="9"><path d="M1 3 h2 l4 -3 v9 l-4 -3 h-2z" fill="#e07b44"/></svg>
<svg style="left:946px;top:578px;" width="11" height="11"><path d="M3.5 0 v11 M7.5 0 v11 M0 3.5 h11 M0 7.5 h11" stroke="#c8743e" stroke-width="1"/></svg>
<svg style="left:945.5px;top:591px;" width="12" height="9"><path d="M1 1 L4 4.5 L1 8 M4.5 1 L7.5 4.5 L4.5 8 M8 1 L11 4.5 L8 8" stroke="#999" fill="none" stroke-width="1"/></svg>
<svg style="left:947px;top:603px;" width="10" height="10"><rect x="0.5" y="0.5" width="9" height="9" fill="#888"/><path d="M1 3.5 h8 M1 6.5 h8 M5 1 v2.5 M3 3.5 v3 M6 6.5 v3" stroke="#333" stroke-width="0.8"/></svg>
<b style="left:102px;top:600.5px;width:147px;height:16.5px;background:#2b2b2b;box-shadow:inset 0 1px 0 #1d1d1d"></b>
<svg style="left:105px;top:605px;" width="10" height="9"><path d="M5 0.5 L9.5 2.5 L5 4.5 L0.5 2.5Z" fill="#bbb"/><path d="M0.5 4.5 L5 6.5 L9.5 4.5 M0.5 6.5 L5 8.5 L9.5 6.5" stroke="#999" fill="none" stroke-width="0.8"/></svg>
<svg style="left:118px;top:604px;" width="10" height="10"><circle cx="5" cy="5" r="4" fill="none" stroke="#555" stroke-width="1"/></svg>
<svg style="left:223px;top:604px;" width="9" height="9"><path d="M1.5 1 v8 M4.5 0 v9 M7.5 1 v8" stroke="#bbb" stroke-width="1"/><rect x="0.5" y="3" width="8" height="1.5" fill="#bbb"/></svg>
<svg style="left:237px;top:604px;" width="9" height="9"><path d="M1 8 L8 1" stroke="#ccc" stroke-width="1.2"/><circle cx="1.5" cy="7.5" r="1.3" fill="#ccc"/><circle cx="7.5" cy="1.5" r="1.3" fill="#ccc"/></svg>
<b style="left:249px;top:600.5px;width:694px;height:16.5px;background:#2f2f2f;box-shadow:inset 0 1px 0 #1d1d1d"></b>
<b style="left:249px;top:600.5px;width:10px;height:16.5px;background:#2a2a2a"></b>
<b style="left:259.5px;top:602.5px;width:40.3px;height:0.9px;background:#6a6a6a"></b>
<b style="left:299.8px;top:603px;width:40.3px;height:0.9px;background:#6a6a6a"></b>
<b style="left:340.1px;top:605.1px;width:40.3px;height:0.9px;background:#6a6a6a"></b>
<b style="left:380.5px;top:606.1px;width:40.3px;height:0.9px;background:#6a6a6a"></b>
<b style="left:420.8px;top:606.7px;width:40.3px;height:0.9px;background:#6a6a6a"></b>
<b style="left:461.1px;top:608.7px;width:40.3px;height:0.9px;background:#6a6a6a"></b>
<b style="left:501.4px;top:609.3px;width:40.3px;height:0.9px;background:#6a6a6a"></b>
<b style="left:541.7px;top:611.3px;width:40.3px;height:0.9px;background:#6a6a6a"></b>
<b style="left:582.1px;top:612.9px;width:40.3px;height:0.9px;background:#6a6a6a"></b>
<b style="left:622.4px;top:611.3px;width:40.3px;height:0.9px;background:#6a6a6a"></b>
<b style="left:662.7px;top:609.3px;width:40.3px;height:0.9px;background:#6a6a6a"></b>
<b style="left:703px;top:608.7px;width:40.3px;height:0.9px;background:#6a6a6a"></b>
<b style="left:743.3px;top:607.7px;width:40.3px;height:0.9px;background:#6a6a6a"></b>
<b style="left:783.7px;top:606.7px;width:40.3px;height:0.9px;background:#6a6a6a"></b>
<b style="left:824px;top:605.1px;width:40.3px;height:0.9px;background:#6a6a6a"></b>
<b style="left:864.3px;top:603px;width:40.3px;height:0.9px;background:#6a6a6a"></b>
<p style="left:910px;top:604px;font-size:8px;color:#8a8a8a;letter-spacing:0.6px">[1/16]</p>
<b style="left:961px;top:46.5px;width:99px;height:630.5px;background:#2a2a2a;border-radius:3px;box-shadow:inset 0 0 0 1px #363636"></b>
<p style="left:961px;top:358.8px;font-size:7px;color:#bdbdbd;width:99px;text-align:center">No item selected</p>
<b style="left:1240px;top:46.5px;width:852px;height:457.5px;background:#202020"></b>
<b style="left:1062px;top:46.5px;width:178px;height:457.5px;background:#2c2c2c"></b>
<b style="left:1062px;top:47px;width:9px;height:19px;background:#4f9fd8"></b>
<b style="left:1071px;top:47px;width:169px;height:19px;background:#3b3b3b"></b>
<svg style="left:1082px;top:51px;" width="14" height="11"><rect x="0.5" y="0.5" width="7" height="2" fill="#999"/><rect x="2" y="3.5" width="7" height="2" fill="#999"/><rect x="3.5" y="6.5" width="7" height="2" fill="#999"/><path d="M10.5 5 l3 0 l-1.5 2z" fill="#ddd"/></svg>
<svg style="left:1101px;top:53px;" width="10" height="7"><rect x="0.0" y="0" width="2.4" height="6" fill="#aaa"/><rect x="3.3" y="0" width="2.4" height="6" fill="#aaa"/><rect x="6.6" y="0" width="2.4" height="6" fill="#aaa"/></svg>
<svg style="left:1115px;top:53px;" width="10" height="7"><rect x="0" y="0" width="10" height="2.5" fill="#e07b44"/><rect x="0" y="3.7" width="10" height="2.5" fill="#e07b44"/></svg>
<svg style="left:1214px;top:51px;" width="11" height="11"><rect x="0.5" y="0.5" width="10" height="10" fill="none" stroke="#777" stroke-dasharray="1.5 1"/><path d="M2 9 L9 2" stroke="#ccc"/></svg>
<svg style="left:1227px;top:51px;" width="11" height="11"><rect x="0" y="0" width="11" height="11" rx="1" fill="#777"/><path d="M2 9 L9 2" stroke="#eee"/><circle cx="3" cy="8" r="1.2" fill="#eee"/></svg>
<b style="left:1240px;top:47px;width:852px;height:19px;background:#2a2a2a"></b>
<b style="left:1240px;top:60.2px;width:799.7px;height:6px;background:#3c3c3c"></b>
<b style="left:1251.2px;top:48px;width:0.8px;height:18px;background:#555"></b>
<p style="left:1253.2px;top:51.5px;font-size:7px;color:#c9c9c9">1</p>
<b style="left:1279.4px;top:48px;width:0.8px;height:18px;background:#555"></b>
<p style="left:1281.4px;top:51.5px;font-size:7px;color:#c9c9c9">3</p>
<b style="left:1307.5px;top:48px;width:0.8px;height:18px;background:#555"></b>
<p style="left:1309.5px;top:51.5px;font-size:7px;color:#c9c9c9">5</p>
<b style="left:1335.7px;top:48px;width:0.8px;height:18px;background:#555"></b>
<p style="left:1337.7px;top:51.5px;font-size:7px;color:#c9c9c9">7</p>
<b style="left:1363.8px;top:48px;width:0.8px;height:18px;background:#555"></b>
<p style="left:1365.8px;top:51.5px;font-size:7px;color:#c9c9c9">9</p>
<b style="left:1392px;top:48px;width:0.8px;height:18px;background:#555"></b>
<p style="left:1394px;top:51.5px;font-size:7px;color:#c9c9c9">11</p>
<b style="left:1420.2px;top:48px;width:0.8px;height:18px;background:#555"></b>
<p style="left:1422.2px;top:51.5px;font-size:7px;color:#c9c9c9">13</p>
<b style="left:1448.3px;top:48px;width:0.8px;height:18px;background:#555"></b>
<p style="left:1450.3px;top:51.5px;font-size:7px;color:#c9c9c9">15</p>
<b style="left:1476.5px;top:48px;width:0.8px;height:18px;background:#555"></b>
<p style="left:1478.5px;top:51.5px;font-size:7px;color:#c9c9c9">17</p>
<b style="left:1504.6px;top:48px;width:0.8px;height:18px;background:#555"></b>
<p style="left:1506.6px;top:51.5px;font-size:7px;color:#c9c9c9">19</p>
<b style="left:1532.8px;top:48px;width:0.8px;height:18px;background:#555"></b>
<p style="left:1534.8px;top:51.5px;font-size:7px;color:#c9c9c9">21</p>
<b style="left:1561px;top:48px;width:0.8px;height:18px;background:#555"></b>
<p style="left:1563px;top:51.5px;font-size:7px;color:#c9c9c9">23</p>
<b style="left:1589.1px;top:48px;width:0.8px;height:18px;background:#555"></b>
<p style="left:1591.1px;top:51.5px;font-size:7px;color:#c9c9c9">25</p>
<b style="left:1617.3px;top:48px;width:0.8px;height:18px;background:#555"></b>
<p style="left:1619.3px;top:51.5px;font-size:7px;color:#c9c9c9">27</p>
<b style="left:1645.4px;top:48px;width:0.8px;height:18px;background:#555"></b>
<p style="left:1647.4px;top:51.5px;font-size:7px;color:#c9c9c9">29</p>
<b style="left:1673.6px;top:48px;width:0.8px;height:18px;background:#555"></b>
<p style="left:1675.6px;top:51.5px;font-size:7px;color:#c9c9c9">31</p>
<b style="left:1701.8px;top:48px;width:0.8px;height:18px;background:#555"></b>
<p style="left:1703.8px;top:51.5px;font-size:7px;color:#c9c9c9">33</p>
<b style="left:1729.9px;top:48px;width:0.8px;height:18px;background:#555"></b>
<p style="left:1731.9px;top:51.5px;font-size:7px;color:#c9c9c9">35</p>
<b style="left:1758.1px;top:48px;width:0.8px;height:18px;background:#555"></b>
<p style="left:1760.1px;top:51.5px;font-size:7px;color:#c9c9c9">37</p>
<b style="left:1786.2px;top:48px;width:0.8px;height:18px;background:#555"></b>
<p style="left:1788.2px;top:51.5px;font-size:7px;color:#c9c9c9">39</p>
<b style="left:1814.4px;top:48px;width:0.8px;height:18px;background:#555"></b>
<p style="left:1816.4px;top:51.5px;font-size:7px;color:#c9c9c9">41</p>
<b style="left:1842.6px;top:48px;width:0.8px;height:18px;background:#555"></b>
<p style="left:1844.6px;top:51.5px;font-size:7px;color:#c9c9c9">43</p>
<b style="left:1870.7px;top:48px;width:0.8px;height:18px;background:#555"></b>
<p style="left:1872.7px;top:51.5px;font-size:7px;color:#c9c9c9">45</p>
<b style="left:1898.9px;top:48px;width:0.8px;height:18px;background:#555"></b>
<p style="left:1900.9px;top:51.5px;font-size:7px;color:#c9c9c9">47</p>
<b style="left:1927px;top:48px;width:0.8px;height:18px;background:#555"></b>
<p style="left:1929px;top:51.5px;font-size:7px;color:#c9c9c9">49</p>
<b style="left:1955.2px;top:48px;width:0.8px;height:18px;background:#555"></b>
<p style="left:1957.2px;top:51.5px;font-size:7px;color:#c9c9c9">51</p>
<b style="left:1983.4px;top:48px;width:0.8px;height:18px;background:#555"></b>
<p style="left:1985.4px;top:51.5px;font-size:7px;color:#c9c9c9">53</p>
<b style="left:2011.5px;top:48px;width:0.8px;height:18px;background:#555"></b>
<p style="left:2013.5px;top:51.5px;font-size:7px;color:#c9c9c9">55</p>
<b style="left:2039.7px;top:48px;width:0.8px;height:18px;background:#555"></b>
<p style="left:2041.7px;top:51.5px;font-size:7px;color:#c9c9c9">57</p>
<b style="left:2067.8px;top:48px;width:0.8px;height:18px;background:#555"></b>
<p style="left:2069.8px;top:51.5px;font-size:7px;color:#c9c9c9">59</p>
<b style="left:1251.2px;top:62px;width:830.7px;height:4px;background:repeating-linear-gradient(90deg,#666 0 .6px,transparent .6px 14.08px)"></b>
<svg style="left:1588.1px;top:47px;" width="8" height="9"><path d="M0 0 L7 4.5 L0 9Z" fill="#4f9fd8"/></svg>
<b style="left:1240px;top:66.5px;width:852px;height:26.5px;background:#202020"></b>
<b style="left:1240px;top:92.4px;width:852px;height:1px;background:rgba(0,0,0,0.3)"></b>
<b style="left:1240px;top:93px;width:852px;height:27px;background:#2a1f23"></b>
<b style="left:1240px;top:119.4px;width:852px;height:1px;background:rgba(0,0,0,0.3)"></b>
<b style="left:1240px;top:120px;width:852px;height:27px;background:#2a1f23"></b>
<b style="left:1240px;top:146.4px;width:852px;height:1px;background:rgba(0,0,0,0.3)"></b>
<b style="left:1240px;top:147px;width:852px;height:27px;background:#202020"></b>
<b style="left:1240px;top:173.4px;width:852px;height:1px;background:rgba(0,0,0,0.3)"></b>
<b style="left:1240px;top:174px;width:852px;height:24px;background:#1f1f1f"></b>
<b style="left:1240px;top:197.4px;width:852px;height:1px;background:rgba(0,0,0,0.3)"></b>
<b style="left:1240px;top:198px;width:852px;height:24.3px;background:#1f1f1f"></b>
<b style="left:1240px;top:221.7px;width:852px;height:1px;background:rgba(0,0,0,0.3)"></b>
<b style="left:1240px;top:222.3px;width:852px;height:24.2px;background:#1f1f1f"></b>
<b style="left:1240px;top:245.9px;width:852px;height:1px;background:rgba(0,0,0,0.3)"></b>
<b style="left:1240px;top:246.5px;width:852px;height:26.5px;background:#202020"></b>
<b style="left:1240px;top:272.4px;width:852px;height:1px;background:rgba(0,0,0,0.3)"></b>
<b style="left:1240px;top:273px;width:852px;height:24px;background:#1f1f1f"></b>
<b style="left:1240px;top:296.4px;width:852px;height:1px;background:rgba(0,0,0,0.3)"></b>
<b style="left:1240px;top:297px;width:852px;height:27px;background:#202020"></b>
<b style="left:1240px;top:323.4px;width:852px;height:1px;background:rgba(0,0,0,0.3)"></b>
<b style="left:1240px;top:324px;width:852px;height:27px;background:#202020"></b>
<b style="left:1240px;top:350.4px;width:852px;height:1px;background:rgba(0,0,0,0.3)"></b>
<b style="left:1240px;top:351px;width:852px;height:27px;background:#202020"></b>
<b style="left:1240px;top:377.4px;width:852px;height:1px;background:rgba(0,0,0,0.3)"></b>
<b style="left:1240px;top:378px;width:852px;height:27px;background:#202020"></b>
<b style="left:1240px;top:404.4px;width:852px;height:1px;background:rgba(0,0,0,0.3)"></b>
<b style="left:1240px;top:405px;width:852px;height:27px;background:#202020"></b>
<b style="left:1240px;top:431.4px;width:852px;height:1px;background:rgba(0,0,0,0.3)"></b>
<b style="left:1240px;top:432px;width:852px;height:27px;background:#202020"></b>
<b style="left:1240px;top:458.4px;width:852px;height:1px;background:rgba(0,0,0,0.3)"></b>
<b style="left:1240px;top:459px;width:852px;height:27px;background:#2a2b24"></b>
<b style="left:1240px;top:485.4px;width:852px;height:1px;background:rgba(0,0,0,0.3)"></b>
<b style="left:1240px;top:486px;width:852px;height:18px;background:#2a2b24"></b>
<b style="left:1240px;top:503.4px;width:852px;height:1px;background:rgba(0,0,0,0.3)"></b>
<div class="a" style="left:1240px;top:66.5px;width:852px;height:437.5px;overflow:hidden;">
<b style="left:10.7px;top:0px;width:1px;height:437.5px;background:rgba(0,0,0,0.32)"></b>
<b style="left:24.8px;top:0px;width:1px;height:437.5px;background:rgba(0,0,0,0.32)"></b>
<b style="left:38.9px;top:0px;width:1px;height:437.5px;background:rgba(0,0,0,0.32)"></b>
<b style="left:52.9px;top:0px;width:1px;height:437.5px;background:rgba(0,0,0,0.32)"></b>
<b style="left:67px;top:0px;width:1px;height:437.5px;background:rgba(0,0,0,0.32)"></b>
<b style="left:81.1px;top:0px;width:1px;height:437.5px;background:rgba(0,0,0,0.32)"></b>
<b style="left:95.2px;top:0px;width:1px;height:437.5px;background:rgba(0,0,0,0.32)"></b>
<b style="left:109.3px;top:0px;width:1px;height:437.5px;background:rgba(0,0,0,0.32)"></b>
<b style="left:123.3px;top:0px;width:1px;height:437.5px;background:rgba(0,0,0,0.32)"></b>
<b style="left:137.4px;top:0px;width:1px;height:437.5px;background:rgba(0,0,0,0.32)"></b>
<b style="left:151.5px;top:0px;width:1px;height:437.5px;background:rgba(0,0,0,0.32)"></b>
<b style="left:165.6px;top:0px;width:1px;height:437.5px;background:rgba(0,0,0,0.32)"></b>
<b style="left:179.7px;top:0px;width:1px;height:437.5px;background:rgba(0,0,0,0.32)"></b>
<b style="left:193.7px;top:0px;width:1px;height:437.5px;background:rgba(0,0,0,0.32)"></b>
<b style="left:207.8px;top:0px;width:1px;height:437.5px;background:rgba(0,0,0,0.32)"></b>
<b style="left:221.9px;top:0px;width:1px;height:437.5px;background:rgba(0,0,0,0.32)"></b>
<b style="left:236px;top:0px;width:1px;height:437.5px;background:rgba(0,0,0,0.32)"></b>
<b style="left:250.1px;top:0px;width:1px;height:437.5px;background:rgba(0,0,0,0.32)"></b>
<b style="left:264.1px;top:0px;width:1px;height:437.5px;background:rgba(0,0,0,0.32)"></b>
<b style="left:278.2px;top:0px;width:1px;height:437.5px;background:rgba(0,0,0,0.32)"></b>
<b style="left:292.3px;top:0px;width:1px;height:437.5px;background:rgba(0,0,0,0.32)"></b>
<b style="left:306.4px;top:0px;width:1px;height:437.5px;background:rgba(0,0,0,0.32)"></b>
<b style="left:320.5px;top:0px;width:1px;height:437.5px;background:rgba(0,0,0,0.32)"></b>
<b style="left:334.5px;top:0px;width:1px;height:437.5px;background:rgba(0,0,0,0.32)"></b>
<b style="left:348.6px;top:0px;width:1px;height:437.5px;background:rgba(0,0,0,0.32)"></b>
<b style="left:362.7px;top:0px;width:1px;height:437.5px;background:rgba(0,0,0,0.32)"></b>
<b style="left:376.8px;top:0px;width:1px;height:437.5px;background:rgba(0,0,0,0.32)"></b>
<b style="left:390.9px;top:0px;width:1px;height:437.5px;background:rgba(0,0,0,0.32)"></b>
<b style="left:404.9px;top:0px;width:1px;height:437.5px;background:rgba(0,0,0,0.32)"></b>
<b style="left:419px;top:0px;width:1px;height:437.5px;background:rgba(0,0,0,0.32)"></b>
<b style="left:433.1px;top:0px;width:1px;height:437.5px;background:rgba(0,0,0,0.32)"></b>
<b style="left:447.2px;top:0px;width:1px;height:437.5px;background:rgba(0,0,0,0.32)"></b>
<b style="left:461.3px;top:0px;width:1px;height:437.5px;background:rgba(0,0,0,0.32)"></b>
<b style="left:475.3px;top:0px;width:1px;height:437.5px;background:rgba(0,0,0,0.32)"></b>
<b style="left:489.4px;top:0px;width:1px;height:437.5px;background:rgba(0,0,0,0.32)"></b>
<b style="left:503.5px;top:0px;width:1px;height:437.5px;background:rgba(0,0,0,0.32)"></b>
<b style="left:517.6px;top:0px;width:1px;height:437.5px;background:rgba(0,0,0,0.32)"></b>
<b style="left:531.7px;top:0px;width:1px;height:437.5px;background:rgba(0,0,0,0.32)"></b>
<b style="left:545.7px;top:0px;width:1px;height:437.5px;background:rgba(0,0,0,0.32)"></b>
<b style="left:559.8px;top:0px;width:1px;height:437.5px;background:rgba(0,0,0,0.32)"></b>
<b style="left:573.9px;top:0px;width:1px;height:437.5px;background:rgba(0,0,0,0.32)"></b>
<b style="left:588px;top:0px;width:1px;height:437.5px;background:rgba(0,0,0,0.32)"></b>
<b style="left:602.1px;top:0px;width:1px;height:437.5px;background:rgba(0,0,0,0.32)"></b>
<b style="left:616.1px;top:0px;width:1px;height:437.5px;background:rgba(0,0,0,0.32)"></b>
<b style="left:630.2px;top:0px;width:1px;height:437.5px;background:rgba(0,0,0,0.32)"></b>
<b style="left:644.3px;top:0px;width:1px;height:437.5px;background:rgba(0,0,0,0.32)"></b>
<b style="left:658.4px;top:0px;width:1px;height:437.5px;background:rgba(0,0,0,0.32)"></b>
<b style="left:672.5px;top:0px;width:1px;height:437.5px;background:rgba(0,0,0,0.32)"></b>
<b style="left:686.5px;top:0px;width:1px;height:437.5px;background:rgba(0,0,0,0.32)"></b>
<b style="left:700.6px;top:0px;width:1px;height:437.5px;background:rgba(0,0,0,0.32)"></b>
<b style="left:714.7px;top:0px;width:1px;height:437.5px;background:rgba(0,0,0,0.32)"></b>
<b style="left:728.8px;top:0px;width:1px;height:437.5px;background:rgba(0,0,0,0.32)"></b>
<b style="left:742.9px;top:0px;width:1px;height:437.5px;background:rgba(0,0,0,0.32)"></b>
<b style="left:756.9px;top:0px;width:1px;height:437.5px;background:rgba(0,0,0,0.32)"></b>
<b style="left:771px;top:0px;width:1px;height:437.5px;background:rgba(0,0,0,0.32)"></b>
<b style="left:785.1px;top:0px;width:1px;height:437.5px;background:rgba(0,0,0,0.32)"></b>
<b style="left:799.2px;top:0px;width:1px;height:437.5px;background:rgba(0,0,0,0.32)"></b>
<b style="left:813.3px;top:0px;width:1px;height:437.5px;background:rgba(0,0,0,0.32)"></b>
<b style="left:827.3px;top:0px;width:1px;height:437.5px;background:rgba(0,0,0,0.32)"></b>
<b style="left:841.4px;top:0px;width:1px;height:437.5px;background:rgba(0,0,0,0.32)"></b>
</div>
<b style="left:1589.1px;top:67px;width:112.1px;height:6px;background:#c84f48;border-radius:2px 2px 0 0"></b>
<b style="left:1589.1px;top:73px;width:112.1px;height:10px;background:#b2436a"></b>
<b style="left:1589.1px;top:83px;width:112.1px;height:9.5px;background:#d35e3f"></b>
<b style="left:1589.1px;top:73px;width:0.6px;height:19.5px;background:rgba(0,0,0,0.15)"></b>
<b style="left:1603.2px;top:73px;width:0.6px;height:19.5px;background:rgba(0,0,0,0.15)"></b>
<b style="left:1617.3px;top:73px;width:0.6px;height:19.5px;background:rgba(0,0,0,0.15)"></b>
<b style="left:1631.4px;top:73px;width:0.6px;height:19.5px;background:rgba(0,0,0,0.15)"></b>
<b style="left:1645.4px;top:73px;width:0.6px;height:19.5px;background:rgba(0,0,0,0.15)"></b>
<b style="left:1659.5px;top:73px;width:0.6px;height:19.5px;background:rgba(0,0,0,0.15)"></b>
<b style="left:1673.6px;top:73px;width:0.6px;height:19.5px;background:rgba(0,0,0,0.15)"></b>
<b style="left:1687.7px;top:73px;width:0.6px;height:19.5px;background:rgba(0,0,0,0.15)"></b>
<b style="left:1701.8px;top:67px;width:112.1px;height:6px;background:#c84f48;border-radius:2px 2px 0 0"></b>
<b style="left:1701.8px;top:73px;width:112.1px;height:10px;background:#b2436a"></b>
<b style="left:1701.8px;top:83px;width:112.1px;height:9.5px;background:#d35e3f"></b>
<b style="left:1701.8px;top:73px;width:0.6px;height:19.5px;background:rgba(0,0,0,0.15)"></b>
<b style="left:1715.8px;top:73px;width:0.6px;height:19.5px;background:rgba(0,0,0,0.15)"></b>
<b style="left:1729.9px;top:73px;width:0.6px;height:19.5px;background:rgba(0,0,0,0.15)"></b>
<b style="left:1744px;top:73px;width:0.6px;height:19.5px;background:rgba(0,0,0,0.15)"></b>
<b style="left:1758.1px;top:73px;width:0.6px;height:19.5px;background:rgba(0,0,0,0.15)"></b>
<b style="left:1772.2px;top:73px;width:0.6px;height:19.5px;background:rgba(0,0,0,0.15)"></b>
<b style="left:1786.2px;top:73px;width:0.6px;height:19.5px;background:rgba(0,0,0,0.15)"></b>
<b style="left:1800.3px;top:73px;width:0.6px;height:19.5px;background:rgba(0,0,0,0.15)"></b>
<b style="left:1814.4px;top:67px;width:112.1px;height:6px;background:#c84f48;border-radius:2px 2px 0 0"></b>
<b style="left:1814.4px;top:73px;width:112.1px;height:10px;background:#b2436a"></b>
<b style="left:1814.4px;top:83px;width:112.1px;height:9.5px;background:#d35e3f"></b>
<b style="left:1814.4px;top:73px;width:0.6px;height:19.5px;background:rgba(0,0,0,0.15)"></b>
<b style="left:1828.5px;top:73px;width:0.6px;height:19.5px;background:rgba(0,0,0,0.15)"></b>
<b style="left:1842.6px;top:73px;width:0.6px;height:19.5px;background:rgba(0,0,0,0.15)"></b>
<b style="left:1856.6px;top:73px;width:0.6px;height:19.5px;background:rgba(0,0,0,0.15)"></b>
<b style="left:1870.7px;top:73px;width:0.6px;height:19.5px;background:rgba(0,0,0,0.15)"></b>
<b style="left:1884.8px;top:73px;width:0.6px;height:19.5px;background:rgba(0,0,0,0.15)"></b>
<b style="left:1898.9px;top:73px;width:0.6px;height:19.5px;background:rgba(0,0,0,0.15)"></b>
<b style="left:1913px;top:73px;width:0.6px;height:19.5px;background:rgba(0,0,0,0.15)"></b>
<b style="left:1927px;top:67px;width:103.7px;height:6px;background:#c84f48;border-radius:2px 2px 0 0"></b>
<b style="left:1927px;top:73px;width:103.7px;height:10px;background:#b2436a"></b>
<b style="left:1927px;top:83px;width:103.7px;height:9.5px;background:#d35e3f"></b>
<b style="left:1927px;top:73px;width:0.6px;height:19.5px;background:rgba(0,0,0,0.15)"></b>
<b style="left:1941.1px;top:73px;width:0.6px;height:19.5px;background:rgba(0,0,0,0.15)"></b>
<b style="left:1955.2px;top:73px;width:0.6px;height:19.5px;background:rgba(0,0,0,0.15)"></b>
<b style="left:1969.3px;top:73px;width:0.6px;height:19.5px;background:rgba(0,0,0,0.15)"></b>
<b style="left:1983.4px;top:73px;width:0.6px;height:19.5px;background:rgba(0,0,0,0.15)"></b>
<b style="left:1997.4px;top:73px;width:0.6px;height:19.5px;background:rgba(0,0,0,0.15)"></b>
<b style="left:2011.5px;top:73px;width:0.6px;height:19.5px;background:rgba(0,0,0,0.15)"></b>
<b style="left:1589.1px;top:93.5px;width:98px;height:26px;background:linear-gradient(#c24f78,#b8466f);border-radius:2px 2px 0 0"></b>
<b style="left:1589.1px;top:93.5px;width:98px;height:7.5px;background:#b8426b;border-radius:2px 2px 0 0"></b>
<b style="left:1589.1px;top:101px;width:98px;height:18.5px;background:repeating-linear-gradient(90deg,rgba(0,0,0,.18) 0 .7px,rgba(0,0,0,0) .7px,rgba(0,0,0,.1) 14.08px)"></b>
<p style="left:1590.6px;top:93.4px;font-size:6.5px;color:#f0e6ea;width:95px;overflow:hidden">25 &bull; V_RIOT_kick_03</p>
<b style="left:1687.7px;top:93.5px;width:13.5px;height:26px;background:linear-gradient(#c24f78,#b8466f);border-radius:2px 2px 0 0"></b>
<b style="left:1687.7px;top:93.5px;width:13.5px;height:7.5px;background:#b8426b;border-radius:2px 2px 0 0"></b>
<b style="left:1687.7px;top:101px;width:13.5px;height:18.5px;background:repeating-linear-gradient(90deg,rgba(0,0,0,.18) 0 .7px,rgba(0,0,0,0) .7px,rgba(0,0,0,.1) 14.08px)"></b>
<p style="left:1689.2px;top:93.4px;font-size:6.5px;color:#f0e6ea;width:10.5px;overflow:hidden">32</p>
<b style="left:1701.8px;top:93.5px;width:83.9px;height:26px;background:linear-gradient(#c24f78,#b8466f);border-radius:2px 2px 0 0"></b>
<b style="left:1701.8px;top:93.5px;width:83.9px;height:7.5px;background:#b8426b;border-radius:2px 2px 0 0"></b>
<b style="left:1701.8px;top:101px;width:83.9px;height:18.5px;background:repeating-linear-gradient(90deg,rgba(0,0,0,.18) 0 .7px,rgba(0,0,0,0) .7px,rgba(0,0,0,.1) 14.08px)"></b>
<p style="left:1703.3px;top:93.4px;font-size:6.5px;color:#f0e6ea;width:80.9px;overflow:hidden">25 &bull; V_RIOT_kick_03</p>
<b style="left:1786.2px;top:93.5px;width:27.6px;height:26px;background:linear-gradient(#c24f78,#b8466f);border-radius:2px 2px 0 0"></b>
<b style="left:1786.2px;top:93.5px;width:27.6px;height:7.5px;background:#b8426b;border-radius:2px 2px 0 0"></b>
<b style="left:1786.2px;top:101px;width:27.6px;height:18.5px;background:repeating-linear-gradient(90deg,rgba(0,0,0,.18) 0 .7px,rgba(0,0,0,0) .7px,rgba(0,0,0,.1) 14.08px)"></b>
<p style="left:1787.7px;top:93.4px;font-size:6.5px;color:#f0e6ea;width:24.6px;overflow:hidden">39 &bull;</p>
<b style="left:1814.4px;top:93.5px;width:98px;height:26px;background:linear-gradient(#c24f78,#b8466f);border-radius:2px 2px 0 0"></b>
<b style="left:1814.4px;top:93.5px;width:98px;height:7.5px;background:#b8426b;border-radius:2px 2px 0 0"></b>
<b style="left:1814.4px;top:101px;width:98px;height:18.5px;background:repeating-linear-gradient(90deg,rgba(0,0,0,.18) 0 .7px,rgba(0,0,0,0) .7px,rgba(0,0,0,.1) 14.08px)"></b>
<p style="left:1815.9px;top:93.4px;font-size:6.5px;color:#f0e6ea;width:95px;overflow:hidden">25 &bull; V_RIOT_kick_03</p>
<b style="left:1913px;top:93.5px;width:13.5px;height:26px;background:linear-gradient(#c24f78,#b8466f);border-radius:2px 2px 0 0"></b>
<b style="left:1913px;top:93.5px;width:13.5px;height:7.5px;background:#b8426b;border-radius:2px 2px 0 0"></b>
<b style="left:1913px;top:101px;width:13.5px;height:18.5px;background:repeating-linear-gradient(90deg,rgba(0,0,0,.18) 0 .7px,rgba(0,0,0,0) .7px,rgba(0,0,0,.1) 14.08px)"></b>
<p style="left:1914.5px;top:93.4px;font-size:6.5px;color:#f0e6ea;width:10.5px;overflow:hidden">35</p>
<b style="left:1927px;top:93.5px;width:103.6px;height:26px;background:linear-gradient(#c24f78,#b8466f);border-radius:2px 2px 0 0"></b>
<b style="left:1927px;top:93.5px;width:103.6px;height:7.5px;background:#b8426b;border-radius:2px 2px 0 0"></b>
<b style="left:1927px;top:101px;width:103.6px;height:18.5px;background:repeating-linear-gradient(90deg,rgba(0,0,0,.18) 0 .7px,rgba(0,0,0,0) .7px,rgba(0,0,0,.1) 14.08px)"></b>
<p style="left:1928.5px;top:93.4px;font-size:6.5px;color:#f0e6ea;width:100.6px;overflow:hidden">25 &bull; V_RIOT_kick_03</p>
<b style="left:1589.1px;top:120.5px;width:112px;height:26px;background:#d8653f;border-radius:2px 2px 0 0"></b>
<b style="left:1589.1px;top:120.5px;width:112px;height:7.5px;background:#d2593b;border-radius:2px 2px 0 0"></b>
<b style="left:1589.1px;top:128px;width:112px;height:18.5px;background:repeating-linear-gradient(90deg,rgba(0,0,0,.18) 0 .7px,rgba(0,0,0,0) .7px,rgba(0,0,0,.1) 14.08px)"></b>
<p style="left:1590.6px;top:120.4px;font-size:6.5px;color:#3a1a10;width:109px;overflow:hidden">25 &bull; V_RIOT_snare_dnb_01</p>
<b style="left:1701.8px;top:120.5px;width:112px;height:26px;background:#d8653f;border-radius:2px 2px 0 0"></b>
<b style="left:1701.8px;top:120.5px;width:112px;height:7.5px;background:#d2593b;border-radius:2px 2px 0 0"></b>
<b style="left:1701.8px;top:128px;width:112px;height:18.5px;background:repeating-linear-gradient(90deg,rgba(0,0,0,.18) 0 .7px,rgba(0,0,0,0) .7px,rgba(0,0,0,.1) 14.08px)"></b>
<p style="left:1703.3px;top:120.4px;font-size:6.5px;color:#3a1a10;width:109px;overflow:hidden">25 &bull; V_RIOT_snare_dnb_01</p>
<b style="left:1814.4px;top:120.5px;width:112px;height:26px;background:#d8653f;border-radius:2px 2px 0 0"></b>
<b style="left:1814.4px;top:120.5px;width:112px;height:7.5px;background:#d2593b;border-radius:2px 2px 0 0"></b>
<b style="left:1814.4px;top:128px;width:112px;height:18.5px;background:repeating-linear-gradient(90deg,rgba(0,0,0,.18) 0 .7px,rgba(0,0,0,0) .7px,rgba(0,0,0,.1) 14.08px)"></b>
<p style="left:1815.9px;top:120.4px;font-size:6.5px;color:#3a1a10;width:109px;overflow:hidden">25 &bull; V_RIOT_snare_dnb_01</p>
<b style="left:1927px;top:120.5px;width:103.6px;height:26px;background:#d8653f;border-radius:2px 2px 0 0"></b>
<b style="left:1927px;top:120.5px;width:103.6px;height:7.5px;background:#d2593b;border-radius:2px 2px 0 0"></b>
<b style="left:1927px;top:128px;width:103.6px;height:18.5px;background:repeating-linear-gradient(90deg,rgba(0,0,0,.18) 0 .7px,rgba(0,0,0,0) .7px,rgba(0,0,0,.1) 14.08px)"></b>
<p style="left:1928.5px;top:120.4px;font-size:6.5px;color:#3a1a10;width:100.6px;overflow:hidden">25 &bull; V_RIOT_snare_dnb_01</p>
<b style="left:1592.1px;top:109.5px;width:438.1px;height:1px;background:repeating-linear-gradient(90deg,#3b1a28 0 1px,transparent 1px 3.52px)"></b>
<b style="left:1592.1px;top:136.5px;width:438.1px;height:1px;background:repeating-linear-gradient(90deg,#4a2010 0 1px,transparent 1px 3.52px)"></b>
<b style="left:1536.3px;top:147.5px;width:52.2px;height:26px;background:#777;border-radius:2px 2px 0 0"></b>
<b style="left:1536.3px;top:147.5px;width:52.2px;height:7.5px;background:#7c7c7c;border-radius:2px 2px 0 0"></b>
<p style="left:1537.8px;top:147.4px;font-size:6.5px;color:#ededed;width:49.2px;overflow:hidden">21 &bull; Drum Mach</p>
<b style="left:1536.3px;top:155px;width:52.2px;height:18.5px;background:repeating-linear-gradient(90deg,rgba(0,0,0,.2) 0 .7px,rgba(255,255,255,.07) .7px,rgba(0,0,0,.12) 14.08px)"></b>
<b style="left:1536.3px;top:158px;width:52.2px;height:12px;background:repeating-linear-gradient(90deg,transparent 0 4px,rgba(30,30,30,.7) 4px 5px,transparent 5px 7px,rgba(30,30,30,.7) 7px 8px,transparent 8px 14.08px);clip-path:polygon(0 60%,100% 20%,100% 30%,0 70%)"></b>
<b style="left:1589.1px;top:147.5px;width:216.2px;height:26px;background:#777;border-radius:2px 2px 0 0"></b>
<b style="left:1589.1px;top:147.5px;width:216.2px;height:7.5px;background:#7c7c7c;border-radius:2px 2px 0 0"></b>
<p style="left:1590.6px;top:147.4px;font-size:6.5px;color:#ededed;width:213.2px;overflow:hidden">25 Drum Machine</p>
<b style="left:1589.1px;top:155px;width:216.2px;height:18.5px;background:repeating-linear-gradient(90deg,rgba(0,0,0,.2) 0 .7px,rgba(255,255,255,.07) .7px,rgba(0,0,0,.12) 14.08px)"></b>
<b style="left:1589.1px;top:158px;width:216.2px;height:12px;background:repeating-linear-gradient(90deg,transparent 0 4px,rgba(30,30,30,.7) 4px 5px,transparent 5px 7px,rgba(30,30,30,.7) 7px 8px,transparent 8px 14.08px);clip-path:polygon(0 60%,100% 20%,100% 30%,0 70%)"></b>
<b style="left:1814.4px;top:147.5px;width:216.2px;height:26px;background:#777;border-radius:2px 2px 0 0"></b>
<b style="left:1814.4px;top:147.5px;width:216.2px;height:7.5px;background:#7c7c7c;border-radius:2px 2px 0 0"></b>
<p style="left:1815.9px;top:147.4px;font-size:6.5px;color:#ededed;width:213.2px;overflow:hidden">21 &bull; Drum Machine</p>
<b style="left:1814.4px;top:155px;width:216.2px;height:18.5px;background:repeating-linear-gradient(90deg,rgba(0,0,0,.2) 0 .7px,rgba(255,255,255,.07) .7px,rgba(0,0,0,.12) 14.08px)"></b>
<b style="left:1814.4px;top:158px;width:216.2px;height:12px;background:repeating-linear-gradient(90deg,transparent 0 4px,rgba(30,30,30,.7) 4px 5px,transparent 5px 7px,rgba(30,30,30,.7) 7px 8px,transparent 8px 14.08px);clip-path:polygon(0 60%,100% 20%,100% 30%,0 70%)"></b>
<svg style="left:1240px;top:174px;" width="852" height="24"><defs><linearGradient id="g1" x1="0" y1="0" x2="0" y2="1"><stop offset="0" stop-color="rgba(110,110,110,0.55)"/><stop offset="1" stop-color="rgba(90,90,90,0.25)"/></linearGradient></defs><polygon points="11.2,24 11.2,12.6 292.8,12.6 292.8,4.9 349.1,17.4 852.0,17.4 852.0,24" fill="url(#g1)"/><polyline points="11.2,12.6 292.8,12.6 292.8,4.9 349.1,17.4 852.0,17.4" fill="none" stroke="#bdbdbd" stroke-width="1.1"/><circle cx="11.2" cy="12.6" r="1.5" fill="#1d1d1d" stroke="#bdbdbd" stroke-width="0.8"/><circle cx="292.8" cy="12.6" r="1.5" fill="#1d1d1d" stroke="#bdbdbd" stroke-width="0.8"/><circle cx="292.8" cy="4.9" r="1.5" fill="#1d1d1d" stroke="#bdbdbd" stroke-width="0.8"/><circle cx="349.1" cy="17.4" r="1.5" fill="#1d1d1d" stroke="#bdbdbd" stroke-width="0.8"/></svg>
<svg style="left:1240px;top:198px;" width="852" height="24.3"><defs><linearGradient id="g2" x1="0" y1="0" x2="0" y2="1"><stop offset="0" stop-color="rgba(110,110,110,0.55)"/><stop offset="1" stop-color="rgba(90,90,90,0.25)"/></linearGradient></defs><polygon points="11.2,24.30000000000001 11.2,21.4 292.8,21.4 292.8,3.8 349.1,3.8 349.1,21.4 852.0,21.4 852.0,24.30000000000001" fill="url(#g2)"/><polyline points="11.2,21.4 292.8,21.4 292.8,3.8 349.1,3.8 349.1,21.4 852.0,21.4" fill="none" stroke="#bdbdbd" stroke-width="1.1"/><circle cx="11.2" cy="21.4" r="1.5" fill="#1d1d1d" stroke="#bdbdbd" stroke-width="0.8"/><circle cx="292.8" cy="21.4" r="1.5" fill="#1d1d1d" stroke="#bdbdbd" stroke-width="0.8"/><circle cx="292.8" cy="3.8" r="1.5" fill="#1d1d1d" stroke="#bdbdbd" stroke-width="0.8"/><circle cx="349.1" cy="3.8" r="1.5" fill="#1d1d1d" stroke="#bdbdbd" stroke-width="0.8"/><circle cx="349.1" cy="21.4" r="1.5" fill="#1d1d1d" stroke="#bdbdbd" stroke-width="0.8"/></svg>
<svg style="left:1240px;top:222.3px;" width="852" height="24.2"><defs><linearGradient id="g3" x1="0" y1="0" x2="0" y2="1"><stop offset="0" stop-color="rgba(110,110,110,0.55)"/><stop offset="1" stop-color="rgba(90,90,90,0.25)"/></linearGradient></defs><polygon points="11.2,24.19999999999999 11.2,3.6 292.8,3.6 349.1,14.2 852.0,14.2 852.0,24.19999999999999" fill="url(#g3)"/><polyline points="11.2,3.6 292.8,3.6 349.1,14.2 852.0,14.2" fill="none" stroke="#bdbdbd" stroke-width="1.1"/><circle cx="11.2" cy="3.6" r="1.5" fill="#1d1d1d" stroke="#bdbdbd" stroke-width="0.8"/><circle cx="292.8" cy="3.6" r="1.5" fill="#1d1d1d" stroke="#bdbdbd" stroke-width="0.8"/><circle cx="349.1" cy="14.2" r="1.5" fill="#1d1d1d" stroke="#bdbdbd" stroke-width="0.8"/></svg>
<b style="left:1251.2px;top:247px;width:13.3px;height:25.5px;background:linear-gradient(#d96a48 0 6px,#d55f3f 6px);border-radius:2px 2px 0 0"></b>
<p style="left:1252.7px;top:246.6px;font-size:5.5px;color:#8a3a22">1</p>
<b style="left:1260px;top:248px;width:3px;height:4px;border:1px solid #3a2a2a;border-top:0"></b>
<b style="left:1265.3px;top:247px;width:13.3px;height:25.5px;background:linear-gradient(#d96a48 0 6px,#d55f3f 6px);border-radius:2px 2px 0 0"></b>
<p style="left:1266.8px;top:246.6px;font-size:5.5px;color:#8a3a22">2</p>
<b style="left:1274.1px;top:248px;width:3px;height:4px;border:1px solid #3a2a2a;border-top:0"></b>
<b style="left:1279.4px;top:247px;width:13.3px;height:25.5px;background:linear-gradient(#d96a48 0 6px,#d55f3f 6px);border-radius:2px 2px 0 0"></b>
<p style="left:1280.9px;top:246.6px;font-size:5.5px;color:#8a3a22">3</p>
<b style="left:1288.1px;top:248px;width:3px;height:4px;border:1px solid #3a2a2a;border-top:0"></b>
<b style="left:1293.4px;top:247px;width:13.3px;height:25.5px;background:linear-gradient(#d96a48 0 6px,#d55f3f 6px);border-radius:2px 2px 0 0"></b>
<p style="left:1294.9px;top:246.6px;font-size:5.5px;color:#8a3a22">4</p>
<b style="left:1302.2px;top:248px;width:3px;height:4px;border:1px solid #3a2a2a;border-top:0"></b>
<b style="left:1307.5px;top:247px;width:13.3px;height:25.5px;background:linear-gradient(#d96a48 0 6px,#d55f3f 6px);border-radius:2px 2px 0 0"></b>
<p style="left:1309px;top:246.6px;font-size:5.5px;color:#8a3a22">3</p>
<b style="left:1316.3px;top:248px;width:3px;height:4px;border:1px solid #3a2a2a;border-top:0"></b>
<b style="left:1321.6px;top:247px;width:13.3px;height:25.5px;background:linear-gradient(#d96a48 0 6px,#d55f3f 6px);border-radius:2px 2px 0 0"></b>
<p style="left:1323.1px;top:246.6px;font-size:5.5px;color:#8a3a22">2</p>
<b style="left:1330.4px;top:248px;width:3px;height:4px;border:1px solid #3a2a2a;border-top:0"></b>
<b style="left:1335.7px;top:247px;width:13.3px;height:25.5px;background:linear-gradient(#d96a48 0 6px,#d55f3f 6px);border-radius:2px 2px 0 0"></b>
<p style="left:1337.2px;top:246.6px;font-size:5.5px;color:#8a3a22">7</p>
<b style="left:1344.5px;top:248px;width:3px;height:4px;border:1px solid #3a2a2a;border-top:0"></b>
<b style="left:1349.8px;top:247px;width:13.3px;height:25.5px;background:linear-gradient(#d96a48 0 6px,#d55f3f 6px);border-radius:2px 2px 0 0"></b>
<p style="left:1351.3px;top:246.6px;font-size:5.5px;color:#8a3a22">8</p>
<b style="left:1358.5px;top:248px;width:3px;height:4px;border:1px solid #3a2a2a;border-top:0"></b>
<b style="left:1363.8px;top:247px;width:13.3px;height:25.5px;background:linear-gradient(#d96a48 0 6px,#d55f3f 6px);border-radius:2px 2px 0 0"></b>
<p style="left:1365.3px;top:246.6px;font-size:5.5px;color:#8a3a22">8</p>
<b style="left:1372.6px;top:248px;width:3px;height:4px;border:1px solid #3a2a2a;border-top:0"></b>
<b style="left:1377.9px;top:247px;width:13.3px;height:25.5px;background:linear-gradient(#d96a48 0 6px,#d55f3f 6px);border-radius:2px 2px 0 0"></b>
<p style="left:1379.4px;top:246.6px;font-size:5.5px;color:#8a3a22">2</p>
<b style="left:1386.7px;top:248px;width:3px;height:4px;border:1px solid #3a2a2a;border-top:0"></b>
<b style="left:1392px;top:247px;width:13.3px;height:25.5px;background:linear-gradient(#d96a48 0 6px,#d55f3f 6px);border-radius:2px 2px 0 0"></b>
<p style="left:1393.5px;top:246.6px;font-size:5.5px;color:#8a3a22">3</p>
<b style="left:1400.8px;top:248px;width:3px;height:4px;border:1px solid #3a2a2a;border-top:0"></b>
<b style="left:1406.1px;top:247px;width:13.3px;height:25.5px;background:linear-gradient(#d96a48 0 6px,#d55f3f 6px);border-radius:2px 2px 0 0"></b>
<p style="left:1407.6px;top:246.6px;font-size:5.5px;color:#8a3a22">4</p>
<b style="left:1414.9px;top:248px;width:3px;height:4px;border:1px solid #3a2a2a;border-top:0"></b>
<b style="left:1420.2px;top:247px;width:13.3px;height:25.5px;background:linear-gradient(#d96a48 0 6px,#d55f3f 6px);border-radius:2px 2px 0 0"></b>
<p style="left:1421.7px;top:246.6px;font-size:5.5px;color:#8a3a22">8</p>
<b style="left:1428.9px;top:248px;width:3px;height:4px;border:1px solid #3a2a2a;border-top:0"></b>
<b style="left:1434.2px;top:247px;width:13.3px;height:25.5px;background:linear-gradient(#d96a48 0 6px,#d55f3f 6px);border-radius:2px 2px 0 0"></b>
<p style="left:1435.7px;top:246.6px;font-size:5.5px;color:#8a3a22">2</p>
<b style="left:1443px;top:248px;width:3px;height:4px;border:1px solid #3a2a2a;border-top:0"></b>
<b style="left:1448.3px;top:247px;width:13.3px;height:25.5px;background:linear-gradient(#d96a48 0 6px,#d55f3f 6px);border-radius:2px 2px 0 0"></b>
<p style="left:1449.8px;top:246.6px;font-size:5.5px;color:#8a3a22">7</p>
<b style="left:1457.1px;top:248px;width:3px;height:4px;border:1px solid #3a2a2a;border-top:0"></b>
<b style="left:1462.4px;top:247px;width:13.3px;height:25.5px;background:linear-gradient(#d96a48 0 6px,#d55f3f 6px);border-radius:2px 2px 0 0"></b>
<p style="left:1463.9px;top:246.6px;font-size:5.5px;color:#8a3a22">8</p>
<b style="left:1471.2px;top:248px;width:3px;height:4px;border:1px solid #3a2a2a;border-top:0"></b>
<b style="left:1253.2px;top:257px;width:221.3px;height:1px;background:repeating-linear-gradient(90deg,#6b2a18 0 1px,transparent 1px 3.5px)"></b>
<b style="left:1253.2px;top:265px;width:221.3px;height:1px;background:repeating-linear-gradient(90deg,#6b2a18 0 1px,transparent 1px 3.5px)"></b>
<b style="left:1814.4px;top:247px;width:13.3px;height:25.5px;background:linear-gradient(#d96a48 0 6px,#d55f3f 6px);border-radius:2px 2px 0 0"></b>
<p style="left:1815.9px;top:246.6px;font-size:5.5px;color:#8a3a22">1</p>
<b style="left:1823.2px;top:248px;width:3px;height:4px;border:1px solid #3a2a2a;border-top:0"></b>
<b style="left:1828.5px;top:247px;width:13.3px;height:25.5px;background:linear-gradient(#d96a48 0 6px,#d55f3f 6px);border-radius:2px 2px 0 0"></b>
<p style="left:1830px;top:246.6px;font-size:5.5px;color:#8a3a22">2</p>
<b style="left:1837.3px;top:248px;width:3px;height:4px;border:1px solid #3a2a2a;border-top:0"></b>
<b style="left:1842.6px;top:247px;width:13.3px;height:25.5px;background:linear-gradient(#d96a48 0 6px,#d55f3f 6px);border-radius:2px 2px 0 0"></b>
<p style="left:1844.1px;top:246.6px;font-size:5.5px;color:#8a3a22">3</p>
<b style="left:1851.3px;top:248px;width:3px;height:4px;border:1px solid #3a2a2a;border-top:0"></b>
<b style="left:1856.6px;top:247px;width:13.3px;height:25.5px;background:linear-gradient(#d96a48 0 6px,#d55f3f 6px);border-radius:2px 2px 0 0"></b>
<p style="left:1858.1px;top:246.6px;font-size:5.5px;color:#8a3a22">4</p>
<b style="left:1865.4px;top:248px;width:3px;height:4px;border:1px solid #3a2a2a;border-top:0"></b>
<b style="left:1870.7px;top:247px;width:13.3px;height:25.5px;background:linear-gradient(#d96a48 0 6px,#d55f3f 6px);border-radius:2px 2px 0 0"></b>
<p style="left:1872.2px;top:246.6px;font-size:5.5px;color:#8a3a22">3</p>
<b style="left:1879.5px;top:248px;width:3px;height:4px;border:1px solid #3a2a2a;border-top:0"></b>
<b style="left:1884.8px;top:247px;width:13.3px;height:25.5px;background:linear-gradient(#d96a48 0 6px,#d55f3f 6px);border-radius:2px 2px 0 0"></b>
<p style="left:1886.3px;top:246.6px;font-size:5.5px;color:#8a3a22">2</p>
<b style="left:1893.6px;top:248px;width:3px;height:4px;border:1px solid #3a2a2a;border-top:0"></b>
<b style="left:1898.9px;top:247px;width:13.3px;height:25.5px;background:linear-gradient(#d96a48 0 6px,#d55f3f 6px);border-radius:2px 2px 0 0"></b>
<p style="left:1900.4px;top:246.6px;font-size:5.5px;color:#8a3a22">7</p>
<b style="left:1907.7px;top:248px;width:3px;height:4px;border:1px solid #3a2a2a;border-top:0"></b>
<b style="left:1913px;top:247px;width:13.3px;height:25.5px;background:linear-gradient(#d96a48 0 6px,#d55f3f 6px);border-radius:2px 2px 0 0"></b>
<p style="left:1914.5px;top:246.6px;font-size:5.5px;color:#8a3a22">8</p>
<b style="left:1921.7px;top:248px;width:3px;height:4px;border:1px solid #3a2a2a;border-top:0"></b>
<b style="left:1927px;top:247px;width:13.3px;height:25.5px;background:linear-gradient(#d96a48 0 6px,#d55f3f 6px);border-radius:2px 2px 0 0"></b>
<p style="left:1928.5px;top:246.6px;font-size:5.5px;color:#8a3a22">8</p>
<b style="left:1935.8px;top:248px;width:3px;height:4px;border:1px solid #3a2a2a;border-top:0"></b>
<b style="left:1941.1px;top:247px;width:13.3px;height:25.5px;background:linear-gradient(#d96a48 0 6px,#d55f3f 6px);border-radius:2px 2px 0 0"></b>
<p style="left:1942.6px;top:246.6px;font-size:5.5px;color:#8a3a22">2</p>
<b style="left:1949.9px;top:248px;width:3px;height:4px;border:1px solid #3a2a2a;border-top:0"></b>
<b style="left:1955.2px;top:247px;width:13.3px;height:25.5px;background:linear-gradient(#d96a48 0 6px,#d55f3f 6px);border-radius:2px 2px 0 0"></b>
<p style="left:1956.7px;top:246.6px;font-size:5.5px;color:#8a3a22">3</p>
<b style="left:1964px;top:248px;width:3px;height:4px;border:1px solid #3a2a2a;border-top:0"></b>
<b style="left:1969.3px;top:247px;width:13.3px;height:25.5px;background:linear-gradient(#d96a48 0 6px,#d55f3f 6px);border-radius:2px 2px 0 0"></b>
<p style="left:1970.8px;top:246.6px;font-size:5.5px;color:#8a3a22">4</p>
<b style="left:1978.1px;top:248px;width:3px;height:4px;border:1px solid #3a2a2a;border-top:0"></b>
<b style="left:1983.4px;top:247px;width:13.3px;height:25.5px;background:linear-gradient(#d96a48 0 6px,#d55f3f 6px);border-radius:2px 2px 0 0"></b>
<p style="left:1984.9px;top:246.6px;font-size:5.5px;color:#8a3a22">8</p>
<b style="left:1992.1px;top:248px;width:3px;height:4px;border:1px solid #3a2a2a;border-top:0"></b>
<b style="left:1997.4px;top:247px;width:13.3px;height:25.5px;background:linear-gradient(#d96a48 0 6px,#d55f3f 6px);border-radius:2px 2px 0 0"></b>
<p style="left:1998.9px;top:246.6px;font-size:5.5px;color:#8a3a22">2</p>
<b style="left:2006.2px;top:248px;width:3px;height:4px;border:1px solid #3a2a2a;border-top:0"></b>
<b style="left:2011.5px;top:247px;width:13.3px;height:25.5px;background:linear-gradient(#d96a48 0 6px,#d55f3f 6px);border-radius:2px 2px 0 0"></b>
<p style="left:2013px;top:246.6px;font-size:5.5px;color:#8a3a22">7</p>
<b style="left:2020.3px;top:248px;width:3px;height:4px;border:1px solid #3a2a2a;border-top:0"></b>
<b style="left:2025.6px;top:247px;width:13.3px;height:25.5px;background:linear-gradient(#d96a48 0 6px,#d55f3f 6px);border-radius:2px 2px 0 0"></b>
<p style="left:2027.1px;top:246.6px;font-size:5.5px;color:#8a3a22">8</p>
<b style="left:2034.4px;top:248px;width:3px;height:4px;border:1px solid #3a2a2a;border-top:0"></b>
<b style="left:1816.4px;top:257px;width:221.3px;height:1px;background:repeating-linear-gradient(90deg,#6b2a18 0 1px,transparent 1px 3.5px)"></b>
<b style="left:1816.4px;top:265px;width:221.3px;height:1px;background:repeating-linear-gradient(90deg,#6b2a18 0 1px,transparent 1px 3.5px)"></b>
<svg style="left:1240px;top:273px;" width="852" height="24"><defs><linearGradient id="g4" x1="0" y1="0" x2="0" y2="1"><stop offset="0" stop-color="rgba(190,85,50,0.55)"/><stop offset="1" stop-color="rgba(110,50,30,0.15)"/></linearGradient></defs><polygon points="11.2,24 11.2,19.7 39.4,18.0 67.5,16.5 95.7,15.0 123.8,13.0 152.0,10.0 180.2,6.5 208.3,4.3 236.5,18.0 574.4,18.0 574.4,20.0 595.5,17.0 616.6,14.0 651.8,6.0 673.0,5.5 701.1,4.5 729.3,6.0 757.4,4.5 785.6,4.5 852.0,4.5 852.0,24" fill="url(#g4)"/><polyline points="11.2,19.7 39.4,18.0 67.5,16.5 95.7,15.0 123.8,13.0 152.0,10.0 180.2,6.5 208.3,4.3 236.5,18.0 574.4,18.0 574.4,20.0 595.5,17.0 616.6,14.0 651.8,6.0 673.0,5.5 701.1,4.5 729.3,6.0 757.4,4.5 785.6,4.5 852.0,4.5" fill="none" stroke="#d5603f" stroke-width="1.1"/><circle cx="11.2" cy="19.7" r="1.5" fill="#2c211c" stroke="#d5603f" stroke-width="0.8"/><circle cx="39.4" cy="18.0" r="1.5" fill="#2c211c" stroke="#d5603f" stroke-width="0.8"/><circle cx="67.5" cy="16.5" r="1.5" fill="#2c211c" stroke="#d5603f" stroke-width="0.8"/><circle cx="95.7" cy="15.0" r="1.5" fill="#2c211c" stroke="#d5603f" stroke-width="0.8"/><circle cx="123.8" cy="13.0" r="1.5" fill="#2c211c" stroke="#d5603f" stroke-width="0.8"/><circle cx="152.0" cy="10.0" r="1.5" fill="#2c211c" stroke="#d5603f" stroke-width="0.8"/><circle cx="180.2" cy="6.5" r="1.5" fill="#2c211c" stroke="#d5603f" stroke-width="0.8"/><circle cx="208.3" cy="4.3" r="1.5" fill="#2c211c" stroke="#d5603f" stroke-width="0.8"/><circle cx="236.5" cy="18.0" r="1.5" fill="#2c211c" stroke="#d5603f" stroke-width="0.8"/><circle cx="574.4" cy="18.0" r="1.5" fill="#2c211c" stroke="#d5603f" stroke-width="0.8"/><circle cx="574.4" cy="20.0" r="1.5" fill="#2c211c" stroke="#d5603f" stroke-width="0.8"/><circle cx="595.5" cy="17.0" r="1.5" fill="#2c211c" stroke="#d5603f" stroke-width="0.8"/><circle cx="616.6" cy="14.0" r="1.5" fill="#2c211c" stroke="#d5603f" stroke-width="0.8"/><circle cx="651.8" cy="6.0" r="1.5" fill="#2c211c" stroke="#d5603f" stroke-width="0.8"/><circle cx="673.0" cy="5.5" r="1.5" fill="#2c211c" stroke="#d5603f" stroke-width="0.8"/><circle cx="701.1" cy="4.5" r="1.5" fill="#2c211c" stroke="#d5603f" stroke-width="0.8"/><circle cx="729.3" cy="6.0" r="1.5" fill="#2c211c" stroke="#d5603f" stroke-width="0.8"/><circle cx="757.4" cy="4.5" r="1.5" fill="#2c211c" stroke="#d5603f" stroke-width="0.8"/><circle cx="785.6" cy="4.5" r="1.5" fill="#2c211c" stroke="#d5603f" stroke-width="0.8"/></svg>
<b style="left:1251.2px;top:297.6px;width:83.7px;height:25.8px;background:linear-gradient(#c1aa88,#b49c7a);border-radius:2.5px 2.5px 0 0"></b>
<b style="left:1251.2px;top:297.6px;width:83.7px;height:7.6px;background:#b39a78;border-radius:2.5px 2.5px 0 0"></b>
<b style="left:1251.2px;top:305.2px;width:83.7px;height:18.2px;background:repeating-linear-gradient(90deg,rgba(0,0,0,.12) 0 .6px,rgba(255,255,255,.05) .6px,rgba(0,0,0,.06) 14.08px)"></b>
<p style="left:1252.7px;top:297.2px;font-size:6.5px;color:#4a3a2a;width:80.7px;overflow:hidden">1 Bass Dist Release</p>
<b style="left:1253.2px;top:315px;width:11px;height:1.2px;background:rgba(60,45,25,0.7)"></b>
<b style="left:1265.2px;top:313px;width:5px;height:1.2px;background:rgba(60,45,25,0.7)"></b>
<b style="left:1267.2px;top:315px;width:10px;height:1.2px;background:rgba(60,45,25,0.7)"></b>
<b style="left:1277.2px;top:313px;width:5px;height:1.2px;background:rgba(60,45,25,0.7)"></b>
<b style="left:1279.2px;top:315px;width:10px;height:1.2px;background:rgba(60,45,25,0.7)"></b>
<b style="left:1291.2px;top:313px;width:5px;height:1.2px;background:rgba(60,45,25,0.7)"></b>
<b style="left:1335.7px;top:297.6px;width:27.4px;height:25.8px;background:linear-gradient(#c1aa88,#b49c7a);border-radius:2.5px 2.5px 0 0"></b>
<b style="left:1335.7px;top:297.6px;width:27.4px;height:7.6px;background:#b39a78;border-radius:2.5px 2.5px 0 0"></b>
<b style="left:1335.7px;top:305.2px;width:27.4px;height:18.2px;background:repeating-linear-gradient(90deg,rgba(0,0,0,.12) 0 .6px,rgba(255,255,255,.05) .6px,rgba(0,0,0,.06) 14.08px)"></b>
<p style="left:1337.2px;top:297.2px;font-size:6.5px;color:#4a3a2a;width:24.4px;overflow:hidden">7 Bass Dist</p>
<b style="left:1337.7px;top:310px;width:10px;height:1.2px;background:rgba(60,45,25,0.7)"></b>
<b style="left:1349.7px;top:317px;width:10px;height:1.2px;background:rgba(60,45,25,0.7)"></b>
<b style="left:1363.8px;top:297.6px;width:83.7px;height:25.8px;background:linear-gradient(#c1aa88,#b49c7a);border-radius:2.5px 2.5px 0 0"></b>
<b style="left:1363.8px;top:297.6px;width:83.7px;height:7.6px;background:#b39a78;border-radius:2.5px 2.5px 0 0"></b>
<b style="left:1363.8px;top:305.2px;width:83.7px;height:18.2px;background:repeating-linear-gradient(90deg,rgba(0,0,0,.12) 0 .6px,rgba(255,255,255,.05) .6px,rgba(0,0,0,.06) 14.08px)"></b>
<p style="left:1365.3px;top:297.2px;font-size:6.5px;color:#4a3a2a;width:80.7px;overflow:hidden">9 Bass Dist Release</p>
<b style="left:1365.8px;top:315px;width:11px;height:1.2px;background:rgba(60,45,25,0.7)"></b>
<b style="left:1377.8px;top:313px;width:5px;height:1.2px;background:rgba(60,45,25,0.7)"></b>
<b style="left:1379.8px;top:315px;width:10px;height:1.2px;background:rgba(60,45,25,0.7)"></b>
<b style="left:1389.8px;top:313px;width:5px;height:1.2px;background:rgba(60,45,25,0.7)"></b>
<b style="left:1391.8px;top:315px;width:10px;height:1.2px;background:rgba(60,45,25,0.7)"></b>
<b style="left:1403.8px;top:313px;width:5px;height:1.2px;background:rgba(60,45,25,0.7)"></b>
<b style="left:1448.3px;top:297.6px;width:27.4px;height:25.8px;background:linear-gradient(#c1aa88,#b49c7a);border-radius:2.5px 2.5px 0 0"></b>
<b style="left:1448.3px;top:297.6px;width:27.4px;height:7.6px;background:#b39a78;border-radius:2.5px 2.5px 0 0"></b>
<b style="left:1448.3px;top:305.2px;width:27.4px;height:18.2px;background:repeating-linear-gradient(90deg,rgba(0,0,0,.12) 0 .6px,rgba(255,255,255,.05) .6px,rgba(0,0,0,.06) 14.08px)"></b>
<p style="left:1449.8px;top:297.2px;font-size:6.5px;color:#4a3a2a;width:24.4px;overflow:hidden">15 Bass D</p>
<b style="left:1450.3px;top:310px;width:10px;height:1.2px;background:rgba(60,45,25,0.7)"></b>
<b style="left:1462.3px;top:317px;width:10px;height:1.2px;background:rgba(60,45,25,0.7)"></b>
<b style="left:1476.5px;top:324.6px;width:111.8px;height:25.8px;background:linear-gradient(#5a60b4,#5258a8);border-radius:2.5px 2.5px 0 0"></b>
<b style="left:1476.5px;top:324.6px;width:111.8px;height:7.6px;background:#4e54a6;border-radius:2.5px 2.5px 0 0"></b>
<b style="left:1476.5px;top:332.2px;width:111.8px;height:18.2px;background:repeating-linear-gradient(90deg,rgba(0,0,0,.12) 0 .6px,rgba(255,255,255,.05) .6px,rgba(0,0,0,.06) 14.08px)"></b>
<p style="left:1478px;top:324.2px;font-size:6.5px;color:#e6e8ff;width:108.8px;overflow:hidden">17 CHIME_lead_megaman_C</p>
<b style="left:1479.5px;top:342px;width:8px;height:1.2px;background:rgba(60,45,25,0.7)"></b>
<b style="left:1496.5px;top:344px;width:8px;height:1.2px;background:rgba(60,45,25,0.7)"></b>
<b style="left:1512.5px;top:340px;width:8px;height:1.2px;background:rgba(60,45,25,0.7)"></b>
<b style="left:1528.5px;top:342px;width:8px;height:1.2px;background:rgba(60,45,25,0.7)"></b>
<b style="left:1542.5px;top:346px;width:8px;height:1.2px;background:rgba(60,45,25,0.7)"></b>
<b style="left:1558.5px;top:342px;width:8px;height:1.2px;background:rgba(60,45,25,0.7)"></b>
<b style="left:1572.5px;top:344px;width:8px;height:1.2px;background:rgba(60,45,25,0.7)"></b>
<b style="left:1363.8px;top:351.6px;width:111.8px;height:25.8px;background:linear-gradient(#d4b67c,#c9aa70);border-radius:2.5px 2.5px 0 0"></b>
<b style="left:1363.8px;top:351.6px;width:111.8px;height:7.6px;background:#c7a66a;border-radius:2.5px 2.5px 0 0"></b>
<b style="left:1363.8px;top:359.2px;width:111.8px;height:18.2px;background:repeating-linear-gradient(90deg,rgba(0,0,0,.12) 0 .6px,rgba(255,255,255,.05) .6px,rgba(0,0,0,.06) 14.08px)"></b>
<p style="left:1365.3px;top:351.2px;font-size:6.5px;color:#4a3a1a;width:108.8px;overflow:hidden">9 Galactic Drift</p>
<b style="left:1366.8px;top:363px;width:14px;height:1.2px;background:rgba(60,45,25,0.7)"></b>
<b style="left:1383.8px;top:365px;width:8px;height:1.2px;background:rgba(60,45,25,0.7)"></b>
<b style="left:1397.8px;top:361px;width:10px;height:1.2px;background:rgba(60,45,25,0.7)"></b>
<b style="left:1411.8px;top:367px;width:8px;height:1.2px;background:rgba(60,45,25,0.7)"></b>
<b style="left:1425.8px;top:363px;width:8px;height:1.2px;background:rgba(60,45,25,0.7)"></b>
<b style="left:1437.8px;top:369px;width:10px;height:1.2px;background:rgba(60,45,25,0.7)"></b>
<b style="left:1453.8px;top:365px;width:8px;height:1.2px;background:rgba(60,45,25,0.7)"></b>
<b style="left:1463.8px;top:371px;width:8px;height:1.2px;background:rgba(60,45,25,0.7)"></b>
<b style="left:1927px;top:351.6px;width:111.8px;height:25.8px;background:linear-gradient(#d4b67c,#c9aa70);border-radius:2.5px 2.5px 0 0"></b>
<b style="left:1927px;top:351.6px;width:111.8px;height:7.6px;background:#c7a66a;border-radius:2.5px 2.5px 0 0"></b>
<b style="left:1927px;top:359.2px;width:111.8px;height:18.2px;background:repeating-linear-gradient(90deg,rgba(0,0,0,.12) 0 .6px,rgba(255,255,255,.05) .6px,rgba(0,0,0,.06) 14.08px)"></b>
<p style="left:1928.5px;top:351.2px;font-size:6.5px;color:#4a3a1a;width:108.8px;overflow:hidden">49 Galactic Drift</p>
<b style="left:1930px;top:363px;width:14px;height:1.2px;background:rgba(60,45,25,0.7)"></b>
<b style="left:1947px;top:365px;width:8px;height:1.2px;background:rgba(60,45,25,0.7)"></b>
<b style="left:1961px;top:361px;width:10px;height:1.2px;background:rgba(60,45,25,0.7)"></b>
<b style="left:1975px;top:367px;width:8px;height:1.2px;background:rgba(60,45,25,0.7)"></b>
<b style="left:1989px;top:363px;width:8px;height:1.2px;background:rgba(60,45,25,0.7)"></b>
<b style="left:2001px;top:369px;width:10px;height:1.2px;background:rgba(60,45,25,0.7)"></b>
<b style="left:2017px;top:365px;width:8px;height:1.2px;background:rgba(60,45,25,0.7)"></b>
<b style="left:2027px;top:371px;width:8px;height:1.2px;background:rgba(60,45,25,0.7)"></b>
<b style="left:1349.8px;top:378.6px;width:13.3px;height:25.8px;background:linear-gradient(#9cb876,#8eaa68);border-radius:2.5px 2.5px 0 0"></b>
<b style="left:1349.8px;top:378.6px;width:13.3px;height:7.6px;background:#8fae67;border-radius:2.5px 2.5px 0 0"></b>
<b style="left:1349.8px;top:386.2px;width:13.3px;height:18.2px;background:repeating-linear-gradient(90deg,rgba(0,0,0,.12) 0 .6px,rgba(255,255,255,.05) .6px,rgba(0,0,0,.06) 14.08px)"></b>
<p style="left:1351.3px;top:378.2px;font-size:6.5px;color:#2e3a20;width:10.3px;overflow:hidden">8</p>
<b style="left:1363.8px;top:378.6px;width:111.8px;height:25.8px;background:linear-gradient(#9cb876,#8eaa68);border-radius:2.5px 2.5px 0 0"></b>
<b style="left:1363.8px;top:378.6px;width:111.8px;height:7.6px;background:#8fae67;border-radius:2.5px 2.5px 0 0"></b>
<b style="left:1363.8px;top:386.2px;width:111.8px;height:18.2px;background:repeating-linear-gradient(90deg,rgba(0,0,0,.12) 0 .6px,rgba(255,255,255,.05) .6px,rgba(0,0,0,.06) 14.08px)"></b>
<p style="left:1365.3px;top:378.2px;font-size:6.5px;color:#2e3a20;width:108.8px;overflow:hidden">9 Distorted Drums</p>
<b style="left:1251.2px;top:405.6px;width:111.8px;height:25.8px;background:linear-gradient(#d4b67c,#c3a46c);border-radius:2.5px 2.5px 0 0"></b>
<b style="left:1251.2px;top:405.6px;width:111.8px;height:7.6px;background:#c7a66a;border-radius:2.5px 2.5px 0 0"></b>
<b style="left:1251.2px;top:413.2px;width:111.8px;height:18.2px;background:repeating-linear-gradient(90deg,rgba(0,0,0,.12) 0 .6px,rgba(255,255,255,.05) .6px,rgba(0,0,0,.06) 14.08px)"></b>
<p style="left:1252.7px;top:405.2px;font-size:6.5px;color:#3a2a10;width:108.8px;overflow:hidden">WG_impact_lfo_down_128</p>
<svg style="left:1251.2px;top:414px;" width="112.6" height="16"><path d="M0 3 Q30 5 60 7 T112 8 L112 8.5 Q60 10 30 12 T0 14Z" fill="rgba(70,55,35,0.75)"/></svg>
<b style="left:1251.2px;top:433px;width:111.8px;height:26px;background:linear-gradient(#7d9d55 0 6.5px,#93ae6a 6.5px 13px,#5f7442 13px 19px,#5b703e 19px);border-radius:2.5px 2.5px 0 0"></b>
<b style="left:1251.2px;top:439px;width:0.6px;height:19.5px;background:rgba(0,0,0,0.12)"></b>
<b style="left:1265.3px;top:439px;width:0.6px;height:19.5px;background:rgba(0,0,0,0.12)"></b>
<b style="left:1279.4px;top:439px;width:0.6px;height:19.5px;background:rgba(0,0,0,0.12)"></b>
<b style="left:1293.4px;top:439px;width:0.6px;height:19.5px;background:rgba(0,0,0,0.12)"></b>
<b style="left:1307.5px;top:439px;width:0.6px;height:19.5px;background:rgba(0,0,0,0.12)"></b>
<b style="left:1321.6px;top:439px;width:0.6px;height:19.5px;background:rgba(0,0,0,0.12)"></b>
<b style="left:1335.7px;top:439px;width:0.6px;height:19.5px;background:rgba(0,0,0,0.12)"></b>
<b style="left:1349.8px;top:439px;width:0.6px;height:19.5px;background:rgba(0,0,0,0.12)"></b>
<b style="left:1363.8px;top:433px;width:111.8px;height:26px;background:linear-gradient(#7d9d55 0 6.5px,#93ae6a 6.5px 13px,#5f7442 13px 19px,#5b703e 19px);border-radius:2.5px 2.5px 0 0"></b>
<b style="left:1363.8px;top:439px;width:0.6px;height:19.5px;background:rgba(0,0,0,0.12)"></b>
<b style="left:1377.9px;top:439px;width:0.6px;height:19.5px;background:rgba(0,0,0,0.12)"></b>
<b style="left:1392px;top:439px;width:0.6px;height:19.5px;background:rgba(0,0,0,0.12)"></b>
<b style="left:1406.1px;top:439px;width:0.6px;height:19.5px;background:rgba(0,0,0,0.12)"></b>
<b style="left:1420.2px;top:439px;width:0.6px;height:19.5px;background:rgba(0,0,0,0.12)"></b>
<b style="left:1434.2px;top:439px;width:0.6px;height:19.5px;background:rgba(0,0,0,0.12)"></b>
<b style="left:1448.3px;top:439px;width:0.6px;height:19.5px;background:rgba(0,0,0,0.12)"></b>
<b style="left:1462.4px;top:439px;width:0.6px;height:19.5px;background:rgba(0,0,0,0.12)"></b>
<b style="left:1607.4px;top:433px;width:9.9px;height:26px;background:linear-gradient(#7f8d6b 0,#7f8d6b 6px,#5f6b4c 6px,#5f6b4c 19px,#98a96c 19px);border-radius:3px 3px 0 0"></b>
<b style="left:1635.6px;top:433px;width:9.9px;height:26px;background:linear-gradient(#7f8d6b 0,#7f8d6b 6px,#5f6b4c 6px,#5f6b4c 19px,#98a96c 19px);border-radius:3px 3px 0 0"></b>
<b style="left:1663.7px;top:433px;width:38px;height:26px;background:linear-gradient(#7f8d6b 0,#7f8d6b 6px,#5f6b4c 6px,#5f6b4c 19px,#98a96c 19px);border-radius:3px 3px 0 0"></b>
<b style="left:1720.1px;top:433px;width:9.9px;height:26px;background:linear-gradient(#7f8d6b 0,#7f8d6b 6px,#5f6b4c 6px,#5f6b4c 19px,#98a96c 19px);border-radius:3px 3px 0 0"></b>
<b style="left:1748.2px;top:433px;width:9.9px;height:26px;background:linear-gradient(#7f8d6b 0,#7f8d6b 6px,#5f6b4c 6px,#5f6b4c 19px,#98a96c 19px);border-radius:3px 3px 0 0"></b>
<b style="left:1776.4px;top:433px;width:38px;height:26px;background:linear-gradient(#7f8d6b 0,#7f8d6b 6px,#5f6b4c 6px,#5f6b4c 19px,#98a96c 19px);border-radius:3px 3px 0 0"></b>
<b style="left:1832.7px;top:433px;width:9.9px;height:26px;background:linear-gradient(#7f8d6b 0,#7f8d6b 6px,#5f6b4c 6px,#5f6b4c 19px,#98a96c 19px);border-radius:3px 3px 0 0"></b>
<b style="left:1860.9px;top:433px;width:9.9px;height:26px;background:linear-gradient(#7f8d6b 0,#7f8d6b 6px,#5f6b4c 6px,#5f6b4c 19px,#98a96c 19px);border-radius:3px 3px 0 0"></b>
<b style="left:1889px;top:433px;width:38px;height:26px;background:linear-gradient(#7f8d6b 0,#7f8d6b 6px,#5f6b4c 6px,#5f6b4c 19px,#98a96c 19px);border-radius:3px 3px 0 0"></b>
<b style="left:1945.3px;top:433px;width:9.9px;height:26px;background:linear-gradient(#7f8d6b 0,#7f8d6b 6px,#5f6b4c 6px,#5f6b4c 19px,#98a96c 19px);border-radius:3px 3px 0 0"></b>
<b style="left:1973.5px;top:433px;width:9.9px;height:26px;background:linear-gradient(#7f8d6b 0,#7f8d6b 6px,#5f6b4c 6px,#5f6b4c 19px,#98a96c 19px);border-radius:3px 3px 0 0"></b>
<b style="left:2001.7px;top:433px;width:38px;height:26px;background:linear-gradient(#7f8d6b 0,#7f8d6b 6px,#5f6b4c 6px,#5f6b4c 19px,#98a96c 19px);border-radius:3px 3px 0 0"></b>
<b style="left:1251.2px;top:459.6px;width:111.8px;height:25.8px;background:linear-gradient(#9cb876,#91ae6b);border-radius:2.5px 2.5px 0 0"></b>
<b style="left:1251.2px;top:459.6px;width:111.8px;height:7.6px;background:#8fac66;border-radius:2.5px 2.5px 0 0"></b>
<b style="left:1251.2px;top:467.2px;width:111.8px;height:18.2px;background:repeating-linear-gradient(90deg,rgba(0,0,0,.12) 0 .6px,rgba(255,255,255,.05) .6px,rgba(0,0,0,.06) 14.08px)"></b>
<p style="left:1252.7px;top:459.2px;font-size:6.5px;color:#2e3a20;width:108.8px;overflow:hidden">1 MO_AP_atmosphere_silent_life_Cmaj</p>
<b style="left:1251.2px;top:468px;width:111.8px;height:0.8px;background:rgba(60,80,40,0.5)"></b>
<b style="left:1251.2px;top:476px;width:111.8px;height:0.8px;background:rgba(60,80,40,0.5)"></b>
<b style="left:1363.8px;top:459.6px;width:111.8px;height:25.8px;background:linear-gradient(#9cb876,#91ae6b);border-radius:2.5px 2.5px 0 0"></b>
<b style="left:1363.8px;top:459.6px;width:111.8px;height:7.6px;background:#8fac66;border-radius:2.5px 2.5px 0 0"></b>
<b style="left:1363.8px;top:467.2px;width:111.8px;height:18.2px;background:repeating-linear-gradient(90deg,rgba(0,0,0,.12) 0 .6px,rgba(255,255,255,.05) .6px,rgba(0,0,0,.06) 14.08px)"></b>
<p style="left:1365.3px;top:459.2px;font-size:6.5px;color:#2e3a20;width:108.8px;overflow:hidden">9 MO_AP_atmosphere_silent_life_Cmaj</p>
<b style="left:1363.8px;top:468px;width:111.8px;height:0.8px;background:rgba(60,80,40,0.5)"></b>
<b style="left:1363.8px;top:476px;width:111.8px;height:0.8px;background:rgba(60,80,40,0.5)"></b>
<b style="left:1279.4px;top:486.6px;width:83.7px;height:16.8px;background:linear-gradient(#6f8f48,#698944);border-radius:2.5px 2.5px 0 0"></b>
<b style="left:1279.4px;top:486.6px;width:83.7px;height:7.6px;background:#6a8a44;border-radius:2.5px 2.5px 0 0"></b>
<b style="left:1279.4px;top:494.2px;width:83.7px;height:9.2px;background:repeating-linear-gradient(90deg,rgba(0,0,0,.12) 0 .6px,rgba(255,255,255,.05) .6px,rgba(0,0,0,.06) 14.08px)"></b>
<p style="left:1280.9px;top:486.2px;font-size:6.5px;color:#e8f0d8;width:80.7px;overflow:hidden">3 52</p>
<b style="left:1291.4px;top:492px;width:14px;height:1.2px;background:rgba(60,45,25,0.7)"></b>
<b style="left:1305.4px;top:497px;width:14px;height:1.2px;background:rgba(60,45,25,0.7)"></b>
<b style="left:1345.4px;top:491px;width:14px;height:1.2px;background:rgba(60,45,25,0.7)"></b>
<b style="left:1359.4px;top:497px;width:14px;height:1.2px;background:rgba(60,45,25,0.7)"></b>
<b style="left:1392px;top:486.6px;width:83.7px;height:16.8px;background:linear-gradient(#6f8f48,#698944);border-radius:2.5px 2.5px 0 0"></b>
<b style="left:1392px;top:486.6px;width:83.7px;height:7.6px;background:#6a8a44;border-radius:2.5px 2.5px 0 0"></b>
<b style="left:1392px;top:494.2px;width:83.7px;height:9.2px;background:repeating-linear-gradient(90deg,rgba(0,0,0,.12) 0 .6px,rgba(255,255,255,.05) .6px,rgba(0,0,0,.06) 14.08px)"></b>
<p style="left:1393.5px;top:486.2px;font-size:6.5px;color:#e8f0d8;width:80.7px;overflow:hidden">11 52</p>
<b style="left:1404px;top:492px;width:14px;height:1.2px;background:rgba(60,45,25,0.7)"></b>
<b style="left:1418px;top:497px;width:14px;height:1.2px;background:rgba(60,45,25,0.7)"></b>
<b style="left:1458px;top:491px;width:14px;height:1.2px;background:rgba(60,45,25,0.7)"></b>
<b style="left:1472px;top:497px;width:14px;height:1.2px;background:rgba(60,45,25,0.7)"></b>
<b style="left:1991.5px;top:66.5px;width:1px;height:437.5px;background:rgba(230,230,230,0.75)"></b>
<b style="left:2092px;top:46.5px;width:18px;height:478px;background:#2d2d2d;box-shadow:inset 1px 0 0 #222"></b>
<svg style="left:2096px;top:50px;" width="10" height="11"><path d="M1 1 L9 5 L5.5 6 L8 10 L6.5 10.5 L4 6.5 L1 9Z" fill="#e07b44"/></svg>
<svg style="left:2096px;top:64px;" width="10" height="10"><path d="M4.5 1 V9 M2.5 1 H6.5 M2.5 9 H6.5" stroke="#5a5a5a" stroke-width="1"/></svg>
<svg style="left:2096px;top:77px;" width="10" height="10"><path d="M2 9 L1.5 7 L6 1.5 L7.5 3 L3 8.5Z" fill="none" stroke="#555" stroke-width="0.9"/></svg>
<svg style="left:2096px;top:90px;" width="10" height="10"><path d="M3 3 V1.5 H5 M3 3 H6 V9 H3Z" fill="none" stroke="#555" stroke-width="0.9"/></svg>
<svg style="left:2096px;top:103px;" width="10" height="10"><path d="M1 1.5 L8 8 L6.5 9.5 L0.5 3.5Z" fill="#555"/></svg>
<svg style="left:2096px;top:116px;" width="10" height="10"><path d="M3 1 H7 L6 7 H2Z M1 9 H8" fill="none" stroke="#555" stroke-width="0.9"/></svg>
<svg style="left:2096px;top:129px;" width="10" height="10"><path d="M1 3.5 H3 L6 1 V9 L3 6.5 H1Z" fill="#555"/></svg>
<svg style="left:2096px;top:487px;" width="11" height="11"><path d="M3.5 0 v11 M7.5 0 v11 M0 3.5 h11 M0 7.5 h11" stroke="#c8743e" stroke-width="1"/></svg>
<svg style="left:2095px;top:498px;" width="12" height="9"><path d="M1 1 L4 4.5 L1 8 M4.5 1 L7.5 4.5 L4.5 8 M8 1 L11 4.5 L8 8" stroke="#999" fill="none" stroke-width="1"/></svg>
<svg style="left:2097px;top:509px;" width="10" height="10"><rect x="0.5" y="0.5" width="9" height="9" fill="#888"/><path d="M1 3.5 h8 M1 6.5 h8 M5 1 v2.5 M3 3.5 v3 M6 6.5 v3" stroke="#333" stroke-width="0.8"/></svg>
<b style="left:1062px;top:66.5px;width:9.3px;height:26.5px;background:#b5426a;border-top-left-radius:5px"></b>
<b style="left:1071.3px;top:67px;width:168.7px;height:25.5px;background:#414141;border-top:0.5px solid #333"></b>
<svg style="left:1074.3px;top:69.5px;" width="11" height="9"><path d="M0.5 1.5 h3.5 l1 1 h5 v6 h-9.5z" fill="#d6d6d6"/><path d="M0.5 3.5 h10 l-1 5 h-9z" fill="#bdbdbd"/></svg>
<p style="left:1084.8px;top:70.3px;font-size:7.3px;color:#e8e8e8;letter-spacing:-0.25px">Main Drums</p>
<b style="left:1180.5px;top:68.8px;width:46px;height:9.5px;background:#2c2c2c;border-radius:2px"></b>
<b style="left:1181px;top:69.3px;width:14.2px;height:8.5px;background:linear-gradient(#585858,#4e4e4e);border-radius:1px"></b>
<b style="left:1195.8px;top:69.3px;width:14.2px;height:8.5px;background:linear-gradient(#585858,#4e4e4e);border-radius:1px"></b>
<b style="left:1210.6px;top:69.3px;width:15.4px;height:8.5px;background:linear-gradient(#585858,#4e4e4e);border-radius:1px"></b>
<svg style="left:1184.6px;top:69.9px;" width="7" height="7"><circle cx="3.5" cy="3.5" r="2.7" fill="#9a9a9a"/></svg>
<p style="left:1195.8px;top:69.5px;font-size:9px;color:#e8e8e8;width:14.2px;text-align:center;line-height:9.5px">S</p>
<p style="left:1210.6px;top:69.5px;font-size:9px;color:#e8e8e8;width:15.4px;text-align:center;line-height:9.5px">M</p>
<b style="left:1180.5px;top:80.2px;width:46px;height:10.6px;background:#2b2b2b;border-radius:2px"></b>
<p style="left:1181px;top:81.1px;font-size:8px;color:#e07840;width:43px;text-align:right;line-height:9px;letter-spacing:-0.2px">-6.0 dB</p>
<b style="left:1229.8px;top:68.5px;width:9.2px;height:24px;background:#2b2b2b;box-shadow:inset 0 0 0 0.6px #222"></b>
<b style="left:1234.2px;top:68.5px;width:0.6px;height:24px;background:#1a1a1a"></b>
<b style="left:1062px;top:93px;width:4.5px;height:27px;background:#b5426a"></b>
<b style="left:1066.5px;top:93.5px;width:9.5px;height:26px;background:#b5426a"></b>
<b style="left:1076px;top:93.5px;width:164px;height:26px;background:#414141;border-top:0.5px solid #333"></b>
<svg style="left:1079px;top:96.5px;" width="9" height="8"><rect x="0" y="0" width="8" height="7.5" fill="#cfcfcf"/><rect x="1.7" y="0" width="1" height="4.5" fill="#333"/><rect x="3.7" y="0" width="0.8" height="7.5" fill="#333"/><rect x="5.3" y="0" width="1" height="4.5" fill="#333"/></svg>
<p style="left:1089.5px;top:96.8px;font-size:7.3px;color:#e8e8e8;letter-spacing:-0.25px">V_RIOT_kick_03</p>
<b style="left:1180.5px;top:95.3px;width:46px;height:9.5px;background:#2c2c2c;border-radius:2px"></b>
<b style="left:1181px;top:95.8px;width:14.2px;height:8.5px;background:linear-gradient(#585858,#4e4e4e);border-radius:1px"></b>
<b style="left:1195.8px;top:95.8px;width:14.2px;height:8.5px;background:linear-gradient(#585858,#4e4e4e);border-radius:1px"></b>
<b style="left:1210.6px;top:95.8px;width:15.4px;height:8.5px;background:linear-gradient(#585858,#4e4e4e);border-radius:1px"></b>
<svg style="left:1184.6px;top:96.4px;" width="7" height="7"><circle cx="3.5" cy="3.5" r="2.7" fill="#f0f0f0"/></svg>
<p style="left:1195.8px;top:96px;font-size:9px;color:#e8e8e8;width:14.2px;text-align:center;line-height:9.5px">S</p>
<p style="left:1210.6px;top:96px;font-size:9px;color:#e8e8e8;width:15.4px;text-align:center;line-height:9.5px">M</p>
<b style="left:1180.5px;top:106.7px;width:46px;height:10.6px;background:#2b2b2b;border-radius:2px"></b>
<p style="left:1181px;top:107.6px;font-size:8px;color:#e07840;width:43px;text-align:right;line-height:9px;letter-spacing:-0.2px">+0.0 dB</p>
<b style="left:1229.8px;top:95px;width:9.2px;height:24px;background:#2b2b2b;box-shadow:inset 0 0 0 0.6px #222"></b>
<b style="left:1234.2px;top:95px;width:0.6px;height:24px;background:#1a1a1a"></b>
<b style="left:1062px;top:120px;width:4.5px;height:27px;background:#b5426a"></b>
<b style="left:1066.5px;top:120.5px;width:9.5px;height:26px;background:#d55e3e"></b>
<b style="left:1076px;top:120.5px;width:164px;height:26px;background:#414141;border-top:0.5px solid #333"></b>
<svg style="left:1079px;top:123.5px;" width="9" height="8"><rect x="0" y="0" width="8" height="7.5" fill="#cfcfcf"/><rect x="1.7" y="0" width="1" height="4.5" fill="#333"/><rect x="3.7" y="0" width="0.8" height="7.5" fill="#333"/><rect x="5.3" y="0" width="1" height="4.5" fill="#333"/></svg>
<p style="left:1089.5px;top:123.8px;font-size:7.3px;color:#e8e8e8;letter-spacing:-0.25px">V_RIOT_snare_dnb_01</p>
<b style="left:1180.5px;top:122.3px;width:46px;height:9.5px;background:#2c2c2c;border-radius:2px"></b>
<b style="left:1181px;top:122.8px;width:14.2px;height:8.5px;background:linear-gradient(#585858,#4e4e4e);border-radius:1px"></b>
<b style="left:1195.8px;top:122.8px;width:14.2px;height:8.5px;background:linear-gradient(#585858,#4e4e4e);border-radius:1px"></b>
<b style="left:1210.6px;top:122.8px;width:15.4px;height:8.5px;background:linear-gradient(#585858,#4e4e4e);border-radius:1px"></b>
<svg style="left:1184.6px;top:123.4px;" width="7" height="7"><circle cx="3.5" cy="3.5" r="2.7" fill="#f0f0f0"/></svg>
<p style="left:1195.8px;top:123px;font-size:9px;color:#e8e8e8;width:14.2px;text-align:center;line-height:9.5px">S</p>
<p style="left:1210.6px;top:123px;font-size:9px;color:#e8e8e8;width:15.4px;text-align:center;line-height:9.5px">M</p>
<b style="left:1180.5px;top:133.7px;width:46px;height:10.6px;background:#2b2b2b;border-radius:2px"></b>
<p style="left:1181px;top:134.6px;font-size:8px;color:#e07840;width:43px;text-align:right;line-height:9px;letter-spacing:-0.2px">+0.0 dB</p>
<b style="left:1229.8px;top:122px;width:9.2px;height:24px;background:#2b2b2b;box-shadow:inset 0 0 0 0.6px #222"></b>
<b style="left:1234.2px;top:122px;width:0.6px;height:24px;background:#1a1a1a"></b>
<b style="left:1062px;top:147px;width:9.3px;height:27px;background:#7d7d7d"></b>
<b style="left:1071.3px;top:147.5px;width:168.7px;height:26px;background:#414141;border-top:0.5px solid #333"></b>
<svg style="left:1074.3px;top:150.5px;" width="9" height="8"><rect x="0" y="0" width="8" height="7.5" fill="#cfcfcf"/><rect x="1.7" y="0" width="1" height="4.5" fill="#333"/><rect x="3.7" y="0" width="0.8" height="7.5" fill="#333"/><rect x="5.3" y="0" width="1" height="4.5" fill="#333"/></svg>
<p style="left:1084.8px;top:150.8px;font-size:7.3px;color:#e8e8e8;letter-spacing:-0.25px">Drum Machine</p>
<b style="left:1180.5px;top:149.3px;width:46px;height:9.5px;background:#2c2c2c;border-radius:2px"></b>
<b style="left:1181px;top:149.8px;width:14.2px;height:8.5px;background:linear-gradient(#585858,#4e4e4e);border-radius:1px"></b>
<b style="left:1195.8px;top:149.8px;width:14.2px;height:8.5px;background:linear-gradient(#585858,#4e4e4e);border-radius:1px"></b>
<b style="left:1210.6px;top:149.8px;width:15.4px;height:8.5px;background:linear-gradient(#585858,#4e4e4e);border-radius:1px"></b>
<svg style="left:1184.6px;top:150.4px;" width="7" height="7"><circle cx="3.5" cy="3.5" r="2.7" fill="#f0f0f0"/></svg>
<p style="left:1195.8px;top:150px;font-size:9px;color:#e8e8e8;width:14.2px;text-align:center;line-height:9.5px">S</p>
<p style="left:1210.6px;top:150px;font-size:9px;color:#e8e8e8;width:15.4px;text-align:center;line-height:9.5px">M</p>
<b style="left:1180.5px;top:160.7px;width:46px;height:10.6px;background:#2b2b2b;border-radius:2px"></b>
<p style="left:1181px;top:161.6px;font-size:8px;color:#e07840;width:43px;text-align:right;line-height:9px;letter-spacing:-0.2px">-9.0 dB</p>
<b style="left:1229.8px;top:149px;width:9.2px;height:24px;background:#2b2b2b;box-shadow:inset 0 0 0 0.6px #222"></b>
<b style="left:1234.2px;top:149px;width:0.6px;height:24px;background:#1a1a1a"></b>
<b style="left:1062px;top:174px;width:5px;height:24px;background:#7d7d7d"></b>
<b style="left:1067px;top:174px;width:173px;height:24px;background:#2c2c2c"></b>
<b style="left:1068px;top:174.5px;width:163px;height:23px;background:#3a3a3a;border-left:1px solid #2a2a2a"></b>
<p style="left:1075.5px;top:177.5px;font-size:7px;color:#e0e0e0">Frequency</p>
<p style="left:1075.5px;top:187px;font-size:7px;color:#8a8a8a">FX Layer &raquo; Comb &raquo; Comb</p>
<b style="left:1231px;top:174.5px;width:8.5px;height:23px;background:#2e2e2e"></b>
<svg style="left:1232px;top:176.5px;" width="7" height="7"><circle cx="3.5" cy="3.5" r="2.5" fill="#4f9fd8"/></svg>
<b style="left:1232.5px;top:190px;width:6px;height:5px;background:#8a4a28"></b>
<b style="left:1062px;top:198px;width:5px;height:24.3px;background:#7d7d7d"></b>
<b style="left:1067px;top:198px;width:173px;height:24.3px;background:#2c2c2c"></b>
<b style="left:1068px;top:198.5px;width:163px;height:23.3px;background:#3a3a3a;border-left:1px solid #2a2a2a"></b>
<p style="left:1075.5px;top:201.5px;font-size:7px;color:#e0e0e0">Mix</p>
<p style="left:1075.5px;top:211px;font-size:7px;color:#8a8a8a">FX Layer</p>
<b style="left:1231px;top:198.5px;width:8.5px;height:23.3px;background:#2e2e2e"></b>
<svg style="left:1232px;top:200.5px;" width="7" height="7"><circle cx="3.5" cy="3.5" r="2.5" fill="#4f9fd8"/></svg>
<b style="left:1232.5px;top:214.3px;width:6px;height:5px;background:#8a4a28"></b>
<b style="left:1062px;top:222.3px;width:5px;height:24.2px;background:#7d7d7d"></b>
<b style="left:1067px;top:222.3px;width:173px;height:24.2px;background:#2c2c2c"></b>
<b style="left:1068px;top:222.8px;width:163px;height:23.2px;background:#3a3a3a;border-left:1px solid #2a2a2a"></b>
<p style="left:1075.5px;top:225.8px;font-size:7px;color:#e0e0e0">Frequency</p>
<p style="left:1075.5px;top:235.3px;font-size:7px;color:#8a8a8a">FX Layer &raquo; Comb &raquo; Band-Pass</p>
<b style="left:1231px;top:222.8px;width:8.5px;height:23.2px;background:#2e2e2e"></b>
<svg style="left:1232px;top:224.8px;" width="7" height="7"><circle cx="3.5" cy="3.5" r="2.5" fill="#4f9fd8"/></svg>
<b style="left:1232.5px;top:238.5px;width:6px;height:5px;background:#8a4a28"></b>
<b style="left:1062px;top:246.5px;width:9.3px;height:26.5px;background:#d55e3e"></b>
<b style="left:1071.3px;top:247px;width:168.7px;height:25.5px;background:#414141;border-top:0.5px solid #333"></b>
<svg style="left:1074.3px;top:250px;" width="9" height="8"><rect x="0" y="0" width="8" height="7.5" fill="#cfcfcf"/><rect x="1.7" y="0" width="1" height="4.5" fill="#333"/><rect x="3.7" y="0" width="0.8" height="7.5" fill="#333"/><rect x="5.3" y="0" width="1" height="4.5" fill="#333"/></svg>
<p style="left:1084.8px;top:250.3px;font-size:7.3px;color:#e8e8e8;letter-spacing:-0.25px">Poly Grid</p>
<b style="left:1180.5px;top:248.8px;width:46px;height:9.5px;background:#2c2c2c;border-radius:2px"></b>
<b style="left:1181px;top:249.3px;width:14.2px;height:8.5px;background:linear-gradient(#585858,#4e4e4e);border-radius:1px"></b>
<b style="left:1195.8px;top:249.3px;width:14.2px;height:8.5px;background:linear-gradient(#585858,#4e4e4e);border-radius:1px"></b>
<b style="left:1210.6px;top:249.3px;width:15.4px;height:8.5px;background:linear-gradient(#585858,#4e4e4e);border-radius:1px"></b>
<svg style="left:1184.6px;top:249.9px;" width="7" height="7"><circle cx="3.5" cy="3.5" r="2.7" fill="#f0f0f0"/></svg>
<p style="left:1195.8px;top:249.5px;font-size:9px;color:#e8e8e8;width:14.2px;text-align:center;line-height:9.5px">S</p>
<p style="left:1210.6px;top:249.5px;font-size:9px;color:#e8e8e8;width:15.4px;text-align:center;line-height:9.5px">M</p>
<b style="left:1180.5px;top:260.2px;width:46px;height:10.6px;background:#2b2b2b;border-radius:2px"></b>
<p style="left:1181px;top:261.1px;font-size:8px;color:#e07840;width:43px;text-align:right;line-height:9px;letter-spacing:-0.2px">-6.0 dB</p>
<b style="left:1229.8px;top:248.5px;width:9.2px;height:24px;background:#2b2b2b;box-shadow:inset 0 0 0 0.6px #222"></b>
<b style="left:1234.2px;top:248.5px;width:0.6px;height:24px;background:#1a1a1a"></b>
<b style="left:1062px;top:273px;width:5px;height:24px;background:#d55e3e"></b>
<b style="left:1067px;top:273px;width:173px;height:24px;background:#2c2c2c"></b>
<b style="left:1068px;top:273.5px;width:163px;height:23px;background:#3a3a3a;border-left:1px solid #2a2a2a"></b>
<p style="left:1075.5px;top:276.5px;font-size:7px;color:#e0e0e0">LP</p>
<p style="left:1075.5px;top:286px;font-size:7px;color:#8a8a8a">Poly Grid &raquo; Macro-4</p>
<b style="left:1231px;top:273.5px;width:8.5px;height:23px;background:#2e2e2e"></b>
<svg style="left:1232px;top:275.5px;" width="7" height="7"><circle cx="3.5" cy="3.5" r="2.5" fill="#4f9fd8"/></svg>
<b style="left:1232.5px;top:289px;width:6px;height:5px;background:#8a4a28"></b>
<b style="left:1062px;top:297px;width:9.3px;height:27px;background:#b9a07e"></b>
<b style="left:1071.3px;top:297.5px;width:168.7px;height:26px;background:#414141;border-top:0.5px solid #333"></b>
<svg style="left:1074.3px;top:300.5px;" width="9" height="8"><rect x="0" y="0" width="8" height="7.5" fill="#cfcfcf"/><rect x="1.7" y="0" width="1" height="4.5" fill="#333"/><rect x="3.7" y="0" width="0.8" height="7.5" fill="#333"/><rect x="5.3" y="0" width="1" height="4.5" fill="#333"/></svg>
<p style="left:1084.8px;top:300.8px;font-size:7.3px;color:#e8e8e8;letter-spacing:-0.25px">Bass Dist Release</p>
<b style="left:1180.5px;top:299.3px;width:46px;height:9.5px;background:#2c2c2c;border-radius:2px"></b>
<b style="left:1181px;top:299.8px;width:14.2px;height:8.5px;background:linear-gradient(#585858,#4e4e4e);border-radius:1px"></b>
<b style="left:1195.8px;top:299.8px;width:14.2px;height:8.5px;background:linear-gradient(#585858,#4e4e4e);border-radius:1px"></b>
<b style="left:1210.6px;top:299.8px;width:15.4px;height:8.5px;background:linear-gradient(#585858,#4e4e4e);border-radius:1px"></b>
<svg style="left:1184.6px;top:300.4px;" width="7" height="7"><circle cx="3.5" cy="3.5" r="2.7" fill="#f0f0f0"/></svg>
<p style="left:1195.8px;top:300px;font-size:9px;color:#e8e8e8;width:14.2px;text-align:center;line-height:9.5px">S</p>
<p style="left:1210.6px;top:300px;font-size:9px;color:#e8e8e8;width:15.4px;text-align:center;line-height:9.5px">M</p>
<b style="left:1180.5px;top:310.7px;width:46px;height:10.6px;background:#2b2b2b;border-radius:2px"></b>
<p style="left:1181px;top:311.6px;font-size:8px;color:#e07840;width:43px;text-align:right;line-height:9px;letter-spacing:-0.2px">-6.0 dB</p>
<b style="left:1229.8px;top:299px;width:9.2px;height:24px;background:#2b2b2b;box-shadow:inset 0 0 0 0.6px #222"></b>
<b style="left:1234.2px;top:299px;width:0.6px;height:24px;background:#1a1a1a"></b>
<b style="left:1062px;top:324px;width:9.3px;height:27px;background:#5257a8"></b>
<b style="left:1071.3px;top:324.5px;width:168.7px;height:26px;background:#414141;border-top:0.5px solid #333"></b>
<svg style="left:1074.3px;top:327.5px;" width="9" height="8"><rect x="0" y="0" width="8" height="7.5" fill="#cfcfcf"/><rect x="1.7" y="0" width="1" height="4.5" fill="#333"/><rect x="3.7" y="0" width="0.8" height="7.5" fill="#333"/><rect x="5.3" y="0" width="1" height="4.5" fill="#333"/></svg>
<p style="left:1084.8px;top:327.8px;font-size:7.3px;color:#e8e8e8;letter-spacing:-0.25px">CHIME_lead_megaman_C</p>
<b style="left:1180.5px;top:326.3px;width:46px;height:9.5px;background:#2c2c2c;border-radius:2px"></b>
<b style="left:1181px;top:326.8px;width:14.2px;height:8.5px;background:linear-gradient(#585858,#4e4e4e);border-radius:1px"></b>
<b style="left:1195.8px;top:326.8px;width:14.2px;height:8.5px;background:linear-gradient(#585858,#4e4e4e);border-radius:1px"></b>
<b style="left:1210.6px;top:326.8px;width:15.4px;height:8.5px;background:linear-gradient(#585858,#4e4e4e);border-radius:1px"></b>
<svg style="left:1184.6px;top:327.4px;" width="7" height="7"><circle cx="3.5" cy="3.5" r="2.7" fill="#f0f0f0"/></svg>
<p style="left:1195.8px;top:327px;font-size:9px;color:#e8e8e8;width:14.2px;text-align:center;line-height:9.5px">S</p>
<p style="left:1210.6px;top:327px;font-size:9px;color:#e8e8e8;width:15.4px;text-align:center;line-height:9.5px">M</p>
<b style="left:1180.5px;top:337.7px;width:46px;height:10.6px;background:#2b2b2b;border-radius:2px"></b>
<p style="left:1181px;top:338.6px;font-size:8px;color:#e07840;width:43px;text-align:right;line-height:9px;letter-spacing:-0.2px">-6.0 dB</p>
<b style="left:1229.8px;top:326px;width:9.2px;height:24px;background:#2b2b2b;box-shadow:inset 0 0 0 0.6px #222"></b>
<b style="left:1234.2px;top:326px;width:0.6px;height:24px;background:#1a1a1a"></b>
<b style="left:1062px;top:351px;width:9.3px;height:27px;background:#c9a96a"></b>
<b style="left:1071.3px;top:351.5px;width:168.7px;height:26px;background:#414141;border-top:0.5px solid #333"></b>
<svg style="left:1074.3px;top:354.5px;" width="9" height="8"><rect x="0" y="0" width="8" height="7.5" fill="#cfcfcf"/><rect x="1.7" y="0" width="1" height="4.5" fill="#333"/><rect x="3.7" y="0" width="0.8" height="7.5" fill="#333"/><rect x="5.3" y="0" width="1" height="4.5" fill="#333"/></svg>
<p style="left:1084.8px;top:354.8px;font-size:7.3px;color:#e8e8e8;letter-spacing:-0.25px">Galactic Drift</p>
<b style="left:1180.5px;top:353.3px;width:46px;height:9.5px;background:#2c2c2c;border-radius:2px"></b>
<b style="left:1181px;top:353.8px;width:14.2px;height:8.5px;background:linear-gradient(#585858,#4e4e4e);border-radius:1px"></b>
<b style="left:1195.8px;top:353.8px;width:14.2px;height:8.5px;background:linear-gradient(#585858,#4e4e4e);border-radius:1px"></b>
<b style="left:1210.6px;top:353.8px;width:15.4px;height:8.5px;background:linear-gradient(#585858,#4e4e4e);border-radius:1px"></b>
<svg style="left:1184.6px;top:354.4px;" width="7" height="7"><circle cx="3.5" cy="3.5" r="2.7" fill="#f0f0f0"/></svg>
<p style="left:1195.8px;top:354px;font-size:9px;color:#e8e8e8;width:14.2px;text-align:center;line-height:9.5px">S</p>
<p style="left:1210.6px;top:354px;font-size:9px;color:#e8e8e8;width:15.4px;text-align:center;line-height:9.5px">M</p>
<b style="left:1180.5px;top:364.7px;width:46px;height:10.6px;background:#2b2b2b;border-radius:2px"></b>
<p style="left:1181px;top:365.6px;font-size:8px;color:#e07840;width:43px;text-align:right;line-height:9px;letter-spacing:-0.2px">-6.0 dB</p>
<b style="left:1229.8px;top:353px;width:9.2px;height:24px;background:#2b2b2b;box-shadow:inset 0 0 0 0.6px #222"></b>
<b style="left:1234.2px;top:353px;width:0.6px;height:24px;background:#1a1a1a"></b>
<b style="left:1062px;top:378px;width:9.3px;height:27px;background:#8fa866"></b>
<b style="left:1071.3px;top:378.5px;width:168.7px;height:26px;background:#414141;border-top:0.5px solid #333"></b>
<svg style="left:1074.3px;top:381.5px;" width="9" height="8"><rect x="0" y="0" width="8" height="7.5" fill="#cfcfcf"/><rect x="1.7" y="0" width="1" height="4.5" fill="#333"/><rect x="3.7" y="0" width="0.8" height="7.5" fill="#333"/><rect x="5.3" y="0" width="1" height="4.5" fill="#333"/></svg>
<p style="left:1084.8px;top:381.8px;font-size:7.3px;color:#e8e8e8;letter-spacing:-0.25px">Distorted Drums</p>
<b style="left:1180.5px;top:380.3px;width:46px;height:9.5px;background:#2c2c2c;border-radius:2px"></b>
<b style="left:1181px;top:380.8px;width:14.2px;height:8.5px;background:linear-gradient(#585858,#4e4e4e);border-radius:1px"></b>
<b style="left:1195.8px;top:380.8px;width:14.2px;height:8.5px;background:linear-gradient(#585858,#4e4e4e);border-radius:1px"></b>
<b style="left:1210.6px;top:380.8px;width:15.4px;height:8.5px;background:linear-gradient(#585858,#4e4e4e);border-radius:1px"></b>
<svg style="left:1184.6px;top:381.4px;" width="7" height="7"><circle cx="3.5" cy="3.5" r="2.7" fill="#f0f0f0"/></svg>
<p style="left:1195.8px;top:381px;font-size:9px;color:#e8e8e8;width:14.2px;text-align:center;line-height:9.5px">S</p>
<p style="left:1210.6px;top:381px;font-size:9px;color:#e8e8e8;width:15.4px;text-align:center;line-height:9.5px">M</p>
<b style="left:1180.5px;top:391.7px;width:46px;height:10.6px;background:#2b2b2b;border-radius:2px"></b>
<p style="left:1181px;top:392.6px;font-size:8px;color:#e07840;width:43px;text-align:right;line-height:9px;letter-spacing:-0.2px">-6.0 dB</p>
<b style="left:1229.8px;top:380px;width:9.2px;height:24px;background:#2b2b2b;box-shadow:inset 0 0 0 0.6px #222"></b>
<b style="left:1234.2px;top:380px;width:0.6px;height:24px;background:#1a1a1a"></b>
<b style="left:1062px;top:405px;width:9.3px;height:27px;background:#c9a96a"></b>
<b style="left:1071.3px;top:405.5px;width:168.7px;height:26px;background:#414141;border-top:0.5px solid #333"></b>
<svg style="left:1074.3px;top:409px;" width="10" height="8"><path d="M1 0 v8 M1 4 h8 M3 2 L8 4 L3 6" stroke="#cfcfcf" fill="none" stroke-width="1"/></svg>
<p style="left:1084.8px;top:408.8px;font-size:7.3px;color:#e8e8e8;letter-spacing:-0.25px">WG_impact_lfo_down_128</p>
<b style="left:1180.5px;top:407.3px;width:46px;height:9.5px;background:#2c2c2c;border-radius:2px"></b>
<b style="left:1181px;top:407.8px;width:14.2px;height:8.5px;background:linear-gradient(#585858,#4e4e4e);border-radius:1px"></b>
<b style="left:1195.8px;top:407.8px;width:14.2px;height:8.5px;background:linear-gradient(#585858,#4e4e4e);border-radius:1px"></b>
<b style="left:1210.6px;top:407.8px;width:15.4px;height:8.5px;background:linear-gradient(#585858,#4e4e4e);border-radius:1px"></b>
<svg style="left:1184.6px;top:408.4px;" width="7" height="7"><circle cx="3.5" cy="3.5" r="2.7" fill="#9a9a9a"/></svg>
<p style="left:1195.8px;top:408px;font-size:9px;color:#e8e8e8;width:14.2px;text-align:center;line-height:9.5px">S</p>
<p style="left:1210.6px;top:408px;font-size:9px;color:#e8e8e8;width:15.4px;text-align:center;line-height:9.5px">M</p>
<b style="left:1180.5px;top:418.7px;width:46px;height:10.6px;background:#2b2b2b;border-radius:2px"></b>
<p style="left:1181px;top:419.6px;font-size:8px;color:#e07840;width:43px;text-align:right;line-height:9px;letter-spacing:-0.2px">-6.0 dB</p>
<b style="left:1229.8px;top:407px;width:9.2px;height:24px;background:#2b2b2b;box-shadow:inset 0 0 0 0.6px #222"></b>
<b style="left:1234.2px;top:407px;width:0.6px;height:24px;background:#1a1a1a"></b>
<b style="left:1062px;top:432px;width:9.3px;height:27px;background:#8fa866;border-top-left-radius:5px"></b>
<b style="left:1071.3px;top:432.5px;width:168.7px;height:26px;background:#414141;border-top:0.5px solid #333"></b>
<svg style="left:1074.3px;top:435px;" width="11" height="9"><path d="M0.5 1.5 h3.5 l1 1 h5 v6 h-9.5z" fill="#d6d6d6"/><path d="M0.5 3.5 h10 l-1 5 h-9z" fill="#bdbdbd"/></svg>
<p style="left:1084.8px;top:435.8px;font-size:7.3px;color:#e8e8e8;letter-spacing:-0.25px">Ethereal LAYER</p>
<b style="left:1180.5px;top:434.3px;width:46px;height:9.5px;background:#2c2c2c;border-radius:2px"></b>
<b style="left:1181px;top:434.8px;width:14.2px;height:8.5px;background:linear-gradient(#585858,#4e4e4e);border-radius:1px"></b>
<b style="left:1195.8px;top:434.8px;width:14.2px;height:8.5px;background:linear-gradient(#585858,#4e4e4e);border-radius:1px"></b>
<b style="left:1210.6px;top:434.8px;width:15.4px;height:8.5px;background:linear-gradient(#585858,#4e4e4e);border-radius:1px"></b>
<svg style="left:1184.6px;top:435.4px;" width="7" height="7"><circle cx="3.5" cy="3.5" r="2.7" fill="#9a9a9a"/></svg>
<p style="left:1195.8px;top:435px;font-size:9px;color:#e8e8e8;width:14.2px;text-align:center;line-height:9.5px">S</p>
<p style="left:1210.6px;top:435px;font-size:9px;color:#e8e8e8;width:15.4px;text-align:center;line-height:9.5px">M</p>
<b style="left:1180.5px;top:445.7px;width:46px;height:10.6px;background:#2b2b2b;border-radius:2px"></b>
<p style="left:1181px;top:446.6px;font-size:8px;color:#e07840;width:43px;text-align:right;line-height:9px;letter-spacing:-0.2px">0.0 dB</p>
<b style="left:1229.8px;top:434px;width:9.2px;height:24px;background:#2b2b2b;box-shadow:inset 0 0 0 0.6px #222"></b>
<b style="left:1234.2px;top:434px;width:0.6px;height:24px;background:#1a1a1a"></b>
<b style="left:1062px;top:459px;width:4.5px;height:27px;background:#8fa866"></b>
<b style="left:1066.5px;top:459.5px;width:9.5px;height:26px;background:#8fa866"></b>
<b style="left:1076px;top:459.5px;width:164px;height:26px;background:#414141;border-top:0.5px solid #333"></b>
<svg style="left:1079px;top:462.5px;" width="9" height="8"><rect x="0" y="0" width="8" height="7.5" fill="#cfcfcf"/><rect x="1.7" y="0" width="1" height="4.5" fill="#333"/><rect x="3.7" y="0" width="0.8" height="7.5" fill="#333"/><rect x="5.3" y="0" width="1" height="4.5" fill="#333"/></svg>
<p style="left:1089.5px;top:462.8px;font-size:7.3px;color:#e8e8e8;letter-spacing:-0.25px">MO_AP_atmosphere_silent_</p>
<p style="left:1089.5px;top:471.8px;font-size:7.3px;color:#e8e8e8;letter-spacing:-0.25px">life_Cmaj</p>
<b style="left:1180.5px;top:461.3px;width:46px;height:9.5px;background:#2c2c2c;border-radius:2px"></b>
<b style="left:1181px;top:461.8px;width:14.2px;height:8.5px;background:linear-gradient(#585858,#4e4e4e);border-radius:1px"></b>
<b style="left:1195.8px;top:461.8px;width:14.2px;height:8.5px;background:linear-gradient(#585858,#4e4e4e);border-radius:1px"></b>
<b style="left:1210.6px;top:461.8px;width:15.4px;height:8.5px;background:linear-gradient(#585858,#4e4e4e);border-radius:1px"></b>
<svg style="left:1184.6px;top:462.4px;" width="7" height="7"><circle cx="3.5" cy="3.5" r="2.7" fill="#f0f0f0"/></svg>
<p style="left:1195.8px;top:462px;font-size:9px;color:#e8e8e8;width:14.2px;text-align:center;line-height:9.5px">S</p>
<p style="left:1210.6px;top:462px;font-size:9px;color:#e8e8e8;width:15.4px;text-align:center;line-height:9.5px">M</p>
<b style="left:1180.5px;top:472.7px;width:46px;height:10.6px;background:#2b2b2b;border-radius:2px"></b>
<p style="left:1181px;top:473.6px;font-size:8px;color:#e07840;width:43px;text-align:right;line-height:9px;letter-spacing:-0.2px">-6.0 dB</p>
<b style="left:1229.8px;top:461px;width:9.2px;height:24px;background:#2b2b2b;box-shadow:inset 0 0 0 0.6px #222"></b>
<b style="left:1234.2px;top:461px;width:0.6px;height:24px;background:#1a1a1a"></b>
<b style="left:1062px;top:486px;width:4.5px;height:18px;background:#8fa866"></b>
<b style="left:1066.5px;top:486.5px;width:9.5px;height:17px;background:#6f8c45"></b>
<b style="left:1076px;top:486.5px;width:164px;height:26px;background:#414141;border-top:0.5px solid #333"></b>
<svg style="left:1079px;top:489.5px;" width="9" height="8"><rect x="0" y="0" width="8" height="7.5" fill="#cfcfcf"/><rect x="1.7" y="0" width="1" height="4.5" fill="#333"/><rect x="3.7" y="0" width="0.8" height="7.5" fill="#333"/><rect x="5.3" y="0" width="1" height="4.5" fill="#333"/></svg>
<p style="left:1089.5px;top:489.8px;font-size:7.3px;color:#e8e8e8;letter-spacing:-0.25px">52</p>
<b style="left:1180.5px;top:488.3px;width:46px;height:9.5px;background:#2c2c2c;border-radius:2px"></b>
<b style="left:1181px;top:488.8px;width:14.2px;height:8.5px;background:linear-gradient(#585858,#4e4e4e);border-radius:1px"></b>
<b style="left:1195.8px;top:488.8px;width:14.2px;height:8.5px;background:linear-gradient(#585858,#4e4e4e);border-radius:1px"></b>
<b style="left:1210.6px;top:488.8px;width:15.4px;height:8.5px;background:linear-gradient(#585858,#4e4e4e);border-radius:1px"></b>
<svg style="left:1184.6px;top:489.4px;" width="7" height="7"><circle cx="3.5" cy="3.5" r="2.7" fill="#f0f0f0"/></svg>
<p style="left:1195.8px;top:489px;font-size:9px;color:#e8e8e8;width:14.2px;text-align:center;line-height:9.5px">S</p>
<p style="left:1210.6px;top:489px;font-size:9px;color:#e8e8e8;width:15.4px;text-align:center;line-height:9.5px">M</p>
<b style="left:1180.5px;top:499.7px;width:46px;height:10.6px;background:#2b2b2b;border-radius:2px"></b>
<p style="left:1181px;top:500.6px;font-size:8px;color:#e07840;width:43px;text-align:right;line-height:9px;letter-spacing:-0.2px">-6.0 dB</p>
<b style="left:1229.8px;top:488px;width:9.2px;height:16px;background:#2b2b2b;box-shadow:inset 0 0 0 0.6px #222"></b>
<b style="left:1234.2px;top:488px;width:0.6px;height:16px;background:#1a1a1a"></b>
<b style="left:1062px;top:147px;width:9.3px;height:99.5px;background:#7d7d7d"></b>
<b style="left:1067px;top:174px;width:4.3px;height:72.5px;background:#2c2c2c"></b>
<b style="left:1062px;top:273px;width:9.3px;height:24px;background:#d55e3e"></b>
<b style="left:1067px;top:273px;width:4.3px;height:24px;background:#2c2c2c"></b>
<b style="left:1230.8px;top:77.4px;width:3.4px;height:14.6px;background:linear-gradient(#b8d27a,#5aa03a)"></b>
<b style="left:1235.2px;top:77.4px;width:3.4px;height:14.6px;background:linear-gradient(#b8d27a,#5aa03a)"></b>
<b style="left:1230.8px;top:73.7px;width:3.4px;height:1.2px;background:#e0a040"></b>
<b style="left:1235.2px;top:73.7px;width:3.4px;height:1.2px;background:#e0a040"></b>
<b style="left:1230.8px;top:113.8px;width:3.4px;height:4.7px;background:linear-gradient(#b8d27a,#5aa03a)"></b>
<b style="left:1235.2px;top:113.8px;width:3.4px;height:4.7px;background:linear-gradient(#b8d27a,#5aa03a)"></b>
<b style="left:1230.8px;top:105.6px;width:3.4px;height:1.2px;background:#e0a040"></b>
<b style="left:1235.2px;top:105.6px;width:3.4px;height:1.2px;background:#e0a040"></b>
<b style="left:1230.8px;top:139.6px;width:3.4px;height:5.9px;background:linear-gradient(#b8d27a,#5aa03a)"></b>
<b style="left:1235.2px;top:139.6px;width:3.4px;height:5.9px;background:linear-gradient(#b8d27a,#5aa03a)"></b>
<b style="left:1230.8px;top:132.6px;width:3.4px;height:1.2px;background:#e0a040"></b>
<b style="left:1235.2px;top:132.6px;width:3.4px;height:1.2px;background:#e0a040"></b>
<b style="left:1230.8px;top:161.9px;width:3.4px;height:10.6px;background:linear-gradient(#b8d27a,#5aa03a)"></b>
<b style="left:1235.2px;top:161.9px;width:3.4px;height:10.6px;background:linear-gradient(#b8d27a,#5aa03a)"></b>
<b style="left:1230.8px;top:158.4px;width:3.4px;height:1.2px;background:#e0a040"></b>
<b style="left:1235.2px;top:158.4px;width:3.4px;height:1.2px;background:#e0a040"></b>
<b style="left:1230.8px;top:254.4px;width:3.4px;height:17.6px;background:linear-gradient(#b8d27a,#5aa03a)"></b>
<b style="left:1235.2px;top:254.4px;width:3.4px;height:17.6px;background:linear-gradient(#b8d27a,#5aa03a)"></b>
<b style="left:1230.8px;top:252px;width:3.4px;height:1.2px;background:#e0a040"></b>
<b style="left:1235.2px;top:252px;width:3.4px;height:1.2px;background:#e0a040"></b>
<b style="left:1230.8px;top:365.9px;width:3.4px;height:10.6px;background:linear-gradient(#b8d27a,#5aa03a)"></b>
<b style="left:1235.2px;top:369.4px;width:3.4px;height:7px;background:linear-gradient(#b8d27a,#5aa03a)"></b>
<b style="left:1231px;top:452px;width:3.4px;height:1.2px;background:#7bc050"></b>
<b style="left:1235.4px;top:452px;width:3.4px;height:1.2px;background:#7bc050"></b>
<b style="left:1231px;top:455px;width:3.4px;height:3px;background:#4a9a40"></b>
<b style="left:1235.4px;top:455px;width:3.4px;height:3px;background:#4a9a40"></b>
<b style="left:1062px;top:504px;width:178px;height:20px;background:#2c2c2c;box-shadow:inset 0 1px 0 #1a1a1a"></b>
<svg style="left:1069px;top:508px;" width="8" height="11"><path d="M4 0 v11 M1 1 h6 M1 10 h6 M2 3 l2 -2 l2 2 M2 8 l2 2 l2 -2" stroke="#bbb" fill="none" stroke-width="0.9"/></svg>
<svg style="left:1082px;top:509px;" width="9" height="9"><path d="M1 1 h5 v6 M3.5 5 l2.5 2.5 l2.5 -2.5" stroke="#e07b44" fill="none" stroke-width="1.1"/></svg>
<svg style="left:1096px;top:509px;" width="9" height="9"><path d="M1 1 L8 8 M8 1 L1 8" stroke="#e07b44" stroke-width="1.1"/></svg>
<b style="left:1240px;top:504px;width:852px;height:20px;background:#2e2e2e;box-shadow:inset 0 1px 0 #1a1a1a"></b>
<b style="left:1251.2px;top:508px;width:225.3px;height:1.2px;background:#d5603f"></b>
<b style="left:1589.1px;top:507.5px;width:442.1px;height:1.2px;background:#d5603f"></b>
<b style="left:1251.2px;top:510.5px;width:225.3px;height:1.2px;background:#93b06a"></b>
<b style="left:1476.5px;top:509px;width:112.6px;height:1.2px;background:#5257a8"></b>
<b style="left:1589.1px;top:510px;width:442.1px;height:1.2px;background:#9aa07a"></b>
<b style="left:1251.2px;top:512.5px;width:112.6px;height:1.2px;background:#c3a46c"></b>
<b style="left:1363.8px;top:513px;width:112.6px;height:1.2px;background:#93b06a"></b>
<b style="left:1476.5px;top:513.5px;width:112.6px;height:1.2px;background:#c0a9a0"></b>
<b style="left:1589.1px;top:512.8px;width:442.1px;height:1.2px;background:#666"></b>
<b style="left:1589.1px;top:515px;width:442.1px;height:1.2px;background:#b5426a"></b>
<b style="left:1532.8px;top:515.5px;width:56.3px;height:1.2px;background:#777"></b>
<b style="left:1251.2px;top:516px;width:225.3px;height:1.2px;background:#444"></b>
<p style="left:2065px;top:509px;font-size:8px;color:#8a8a8a;letter-spacing:0.6px">[1/1]</p>
<b style="left:2112px;top:46.5px;width:128px;height:631px;background:#2a2a2a;box-shadow:inset 1px 0 0 #1e1e1e"></b>
<b style="left:2112px;top:46.5px;width:128px;height:24px;background:#2c2c2c"></b>
<b style="left:2112px;top:70px;width:128px;height:1px;background:#202020"></b>
<svg style="left:2117px;top:51px;" width="14" height="14"><rect x="0.5" y="0.5" width="5" height="5" fill="none" stroke="#888"/><rect x="7.5" y="0.5" width="5" height="5" fill="none" stroke="#888"/><rect x="0.5" y="7.5" width="5" height="5" fill="none" stroke="#888"/><rect x="7.5" y="7.5" width="5" height="5" fill="none" stroke="#888"/></svg>
<svg style="left:2134px;top:51px;" width="14" height="14"><rect x="0.5" y="0.5" width="13" height="13" rx="2" fill="#111" stroke="#bbb" stroke-width="1"/><path d="M7 3 v8 M3.5 5 l7 4 M10.5 5 l-7 4" stroke="#eee" stroke-width="1"/></svg>
<svg style="left:2151px;top:53px;" width="10" height="10"><rect x="0" y="0" width="10" height="10" fill="#111"/><rect x="0" y="0" width="3" height="10" fill="#888"/></svg>
<svg style="left:2165px;top:52px;" width="12" height="12"><rect x="0.5" y="0.5" width="10" height="9" fill="#222" stroke="#888"/><circle cx="8" cy="8" r="3" fill="#333" stroke="#aaa"/></svg>
<svg style="left:2181px;top:53px;" width="11" height="10"><rect x="0" y="0" width="11" height="10" fill="#3a2a5a"/><rect x="0" y="0" width="11" height="1.5" fill="#9a6ac0"/><path d="M2 5 h2 M5 6 h3" stroke="#b080d0"/></svg>
<svg style="left:2196px;top:52px;" width="12" height="12"><rect x="0" y="0" width="11" height="11" fill="#a88a40"/><circle cx="5.5" cy="4" r="2" fill="#3a2a10"/><path d="M2 10 Q5.5 5 9 10z" fill="#3a2a10"/></svg>
<svg style="left:2211px;top:52px;" width="12" height="12"><rect x="0" y="0" width="11" height="10" fill="#4a8aa0"/><rect x="3" y="10" width="5" height="1.5" fill="#555"/></svg>
<p style="left:2112px;top:76.5px;font-size:7px;color:#c8c8c8;width:128px;text-align:center">Everything</p>
<svg style="left:2223px;top:74px;" width="10" height="10"><path d="M5 0.7 L6.3 3.7 L9.5 3.9 L7 6 L7.8 9.2 L5 7.5 L2.2 9.2 L3 6 L0.5 3.9 L3.7 3.7Z" fill="none" stroke="#c9a040" stroke-width="0.9"/></svg>
<b style="left:2117px;top:89.5px;width:118px;height:12.5px;background:#0c0c0c;border-radius:2px"></b>
<svg style="left:2120px;top:92px;" width="10" height="8"><circle cx="3.5" cy="3.5" r="2.5" fill="none" stroke="#ddd" stroke-width="1"/><path d="M5.3 5.3 L7.5 7.5" stroke="#ddd"/><path d="M7 3 h3 l-1.5 1.5z" fill="#ddd"/></svg>
<p style="left:2131px;top:91px;font-size:7px;color:#e8e8e8">dylnjs</p>
<svg style="left:2227px;top:92px;" width="7" height="7"><path d="M1 1 L6 6 M6 1 L1 6" stroke="#eee" stroke-width="1.2"/></svg>
<b style="left:2117px;top:104.5px;width:57px;height:14px;background:#0e0e0e;border-radius:2px"></b>
<svg style="left:2121px;top:107.5px;" width="8" height="8"><path d="M4 0.5 V7.5 M1 2.2 L7 5.8 M7 2.2 L1 5.8" stroke="#c8c8c8" stroke-width="1"/></svg>
<p style="left:2132px;top:106.5px;font-size:7px;color:#4f9fd8">Location</p>
<svg style="left:2180px;top:107.5px;" width="8" height="8"><path d="M4 0.5 V7.5 M1 2.2 L7 5.8 M7 2.2 L1 5.8" stroke="#c8c8c8" stroke-width="1"/></svg>
<p style="left:2191px;top:106.5px;font-size:7px;color:#9a9a9a">File Kind</p>
<svg style="left:2121px;top:123px;" width="8" height="8"><path d="M4 0.5 V7.5 M1 2.2 L7 5.8 M7 2.2 L1 5.8" stroke="#c8c8c8" stroke-width="1"/></svg>
<p style="left:2132px;top:122px;font-size:7px;color:#9a9a9a">Category</p>
<svg style="left:2180px;top:123px;" width="8" height="8"><path d="M4 0.5 V7.5 M1 2.2 L7 5.8 M7 2.2 L1 5.8" stroke="#c8c8c8" stroke-width="1"/></svg>
<p style="left:2191px;top:122px;font-size:7px;color:#9a9a9a">Creator</p>
<svg style="left:2121px;top:138.5px;" width="8" height="8"><path d="M4 0.5 V7.5 M1 2.2 L7 5.8 M7 2.2 L1 5.8" stroke="#c8c8c8" stroke-width="1"/></svg>
<p style="left:2132px;top:137.5px;font-size:7px;color:#9a9a9a">Device</p>
<svg style="left:2180px;top:138.5px;" width="8" height="8"><path d="M4 0.5 V7.5 M1 2.2 L7 5.8 M7 2.2 L1 5.8" stroke="#c8c8c8" stroke-width="1"/></svg>
<p style="left:2191px;top:137.5px;font-size:7px;color:#9a9a9a">Tags</p>
<b style="left:2113px;top:152.5px;width:122px;height:151.5px;background:#0f0f0f"></b>
<b style="left:2113.5px;top:152.8px;width:121px;height:14.2px;background:#151515;box-shadow:inset 0 0 0 0.7px #3a3a3a"></b>
<svg style="left:2120px;top:156px;" width="9" height="9"><circle cx="4.5" cy="4.5" r="3.6" fill="none" stroke="#ccc" stroke-width="1"/></svg>
<p style="left:2134px;top:156px;font-size:7px;color:#f0f0f0">All Locations</p>
<p style="left:2178px;top:157px;font-size:5.5px;color:#777">1405</p>
<svg style="left:2128px;top:169.1px;" width="10" height="10"><rect x="0" y="1" width="10" height="9" fill="#d9a040"/><circle cx="5" cy="4.5" r="1.8" fill="#6a4a10"/><path d="M2 10 Q5 6 8 10z" fill="#6a4a10"/></svg>
<p style="left:2143px;top:169.6px;font-size:7px;color:#f0f0f0;font-weight:normal">My Library</p>
<p style="left:2181px;top:170.9px;font-size:5.5px;color:#777">0</p>
<svg style="left:2118px;top:185.2px;" width="7" height="7"><path d="M2 1 L4.5 3.5 L2 6" stroke="#777" fill="none"/></svg>
<svg style="left:2128px;top:183.2px;" width="10" height="10"><rect x="0.5" y="0.5" width="9" height="9" rx="1" fill="#111" stroke="#bbb" stroke-width="0.8"/><path d="M2 6 h6 M3 4 h4" stroke="#ccc" stroke-width="0.8"/></svg>
<p style="left:2143px;top:183.7px;font-size:7px;color:#f0f0f0;font-weight:normal">Bitwig Studio</p>
<p style="left:2191.7px;top:185px;font-size:5.5px;color:#777">0</p>
<svg style="left:2128px;top:197px;" width="10" height="10"><path d="M5 0 L10 2.5 V7.5 L5 10 L0 7.5 V2.5Z" fill="#8a6aa0"/><path d="M5 5 L10 2.5 M5 5 V10 M5 5 L0 2.5" stroke="#c0a060" stroke-width="0.8"/></svg>
<p style="left:2143px;top:197.5px;font-size:7px;color:#f0f0f0;font-weight:normal">Packages</p>
<p style="left:2173.9px;top:198.8px;font-size:5.5px;color:#777">0</p>
<svg style="left:2118px;top:213px;" width="7" height="7"><path d="M2 1 L4.5 3.5 L2 6" stroke="#777" fill="none"/></svg>
<svg style="left:2128px;top:211px;" width="10" height="10"><rect x="0.5" y="0.5" width="9" height="9" fill="#111" stroke="#ccc" stroke-width="0.8"/><path d="M3.5 0.5 v9 M6.5 0.5 v9 M0.5 3.5 h9 M0.5 6.5 h9" stroke="#ccc" stroke-width="0.7"/></svg>
<p style="left:2143px;top:211.5px;font-size:7px;color:#f0f0f0;font-weight:normal">Collections</p>
<p style="left:2184.6px;top:212.8px;font-size:5.5px;color:#777">0</p>
<svg style="left:2118px;top:227px;" width="7" height="7"><path d="M2 1 L4.5 3.5 L2 6" stroke="#777" fill="none"/></svg>
<svg style="left:2128px;top:225px;" width="10" height="9"><path d="M0 1 h4 l1 1 h5 v7 h-10z" fill="#7d9a60"/><rect x="1" y="3" width="8" height="5.5" fill="#91ae70"/></svg>
<p style="left:2143px;top:225.5px;font-size:7px;color:#f0f0f0;font-weight:normal">Sound Content</p>
<p style="left:2191.7px;top:226.8px;font-size:5.5px;color:#777">1405</p>
<svg style="left:2118px;top:241px;" width="7" height="7"><path d="M1 2 L3.5 4.5 L6 2" stroke="#999" fill="none"/></svg>
<svg style="left:2128px;top:239px;" width="10" height="9"><path d="M0 1 h4 l1 1 h5 v7 h-10z" fill="#7d9a60"/><rect x="1" y="3" width="8" height="5.5" fill="#91ae70"/></svg>
<p style="left:2143px;top:239.5px;font-size:7px;color:#f0f0f0;font-weight:normal">Plug-ins</p>
<p style="left:2173.9px;top:240.8px;font-size:5.5px;color:#777">0</p>
<svg style="left:2137px;top:253px;" width="10" height="9"><path d="M0 1 h4 l1 1 h5 v7 h-10z" fill="#7d9a60"/><rect x="1" y="3" width="8" height="5.5" fill="#91ae70"/></svg>
<p style="left:2152px;top:253.5px;font-size:7px;color:#f0f0f0;font-weight:normal">My CLAP Plug-ins</p>
<p style="left:2211.3px;top:254.8px;font-size:5.5px;color:#777">0</p>
<svg style="left:2137px;top:267.2px;" width="10" height="9"><path d="M0 1 h4 l1 1 h5 v7 h-10z" fill="#7d9a60"/><rect x="1" y="3" width="8" height="5.5" fill="#91ae70"/></svg>
<p style="left:2152px;top:267.7px;font-size:7px;color:#f0f0f0;font-weight:normal">My VST 2 Plug-ins</p>
<p style="left:2214.8px;top:269px;font-size:5.5px;color:#777">0</p>
<svg style="left:2137px;top:281px;" width="10" height="9"><path d="M0 1 h4 l1 1 h5 v7 h-10z" fill="#7d9a60"/><rect x="1" y="3" width="8" height="5.5" fill="#91ae70"/></svg>
<p style="left:2152px;top:281.5px;font-size:7px;color:#f0f0f0;font-weight:normal">My VST 3 Plug-ins</p>
<p style="left:2214.8px;top:282.8px;font-size:5.5px;color:#777">0</p>
<svg style="left:2137px;top:295px;" width="10" height="9"><path d="M0 1 h4 l1 1 h5 v7 h-10z" fill="#7d9a60"/><rect x="1" y="3" width="8" height="5.5" fill="#91ae70"/></svg>
<p style="left:2152px;top:295.5px;font-size:7px;color:#f0f0f0;font-weight:normal">System VST 3 Plug-ins</p>
<p style="left:2229.1px;top:296.8px;font-size:5.5px;color:#777">0</p>
<b style="left:2235.5px;top:155px;width:1.5px;height:147px;background:#333"></b>
<b style="left:2113px;top:304.5px;width:122px;height:1.5px;background:#222"></b>
<b style="left:2113px;top:306px;width:122px;height:266px;background:#0f0f0f"></b>
<svg style="left:2120px;top:308.1px;" width="11" height="11"><rect x="0.5" y="0.5" width="10" height="10" rx="1" fill="#2a1510" stroke="#b0502a" stroke-width="0.9"/><path d="M2 6 h1 l1 -3 l1 5 l1 -4 l1 3 h2" stroke="#e06a3a" fill="none" stroke-width="0.8"/></svg>
<p style="left:2137px;top:309.1px;font-size:7px;color:#f2f2f2;letter-spacing:-0.1px">DYLNJS_SB1_Lazer_02</p>
<svg style="left:2120px;top:322.1px;" width="11" height="11"><rect x="0.5" y="0.5" width="10" height="10" rx="1" fill="#2a1510" stroke="#b0502a" stroke-width="0.9"/><path d="M2 6 h1 l1 -3 l1 5 l1 -4 l1 3 h2" stroke="#e06a3a" fill="none" stroke-width="0.8"/></svg>
<p style="left:2137px;top:323.1px;font-size:7px;color:#f2f2f2;letter-spacing:-0.1px">DYLNJS_SB1_Lazer_03</p>
<svg style="left:2120px;top:336px;" width="11" height="11"><rect x="0.5" y="0.5" width="10" height="10" rx="1" fill="#2a1510" stroke="#b0502a" stroke-width="0.9"/><path d="M2 6 h1 l1 -3 l1 5 l1 -4 l1 3 h2" stroke="#e06a3a" fill="none" stroke-width="0.8"/></svg>
<p style="left:2137px;top:337px;font-size:7px;color:#f2f2f2;letter-spacing:-0.1px">DYLNJS_SB1_Lazer_03</p>
<svg style="left:2120px;top:350px;" width="11" height="11"><rect x="0.5" y="0.5" width="10" height="10" rx="1" fill="#2a1510" stroke="#b0502a" stroke-width="0.9"/><path d="M2 6 h1 l1 -3 l1 5 l1 -4 l1 3 h2" stroke="#e06a3a" fill="none" stroke-width="0.8"/></svg>
<p style="left:2137px;top:351px;font-size:7px;color:#f2f2f2;letter-spacing:-0.1px">DYLNJS_SB1_Loops_Breaks...</p>
<svg style="left:2120px;top:363.9px;" width="11" height="11"><rect x="0.5" y="0.5" width="10" height="10" rx="1" fill="#2a1510" stroke="#b0502a" stroke-width="0.9"/><path d="M2 6 h1 l1 -3 l1 5 l1 -4 l1 3 h2" stroke="#e06a3a" fill="none" stroke-width="0.8"/></svg>
<p style="left:2137px;top:364.9px;font-size:7px;color:#f2f2f2;letter-spacing:-0.1px">DYLNJS_SB1_Loops_Breaks...</p>
<svg style="left:2120px;top:377.9px;" width="11" height="11"><rect x="0.5" y="0.5" width="10" height="10" rx="1" fill="#2a1510" stroke="#b0502a" stroke-width="0.9"/><path d="M2 6 h1 l1 -3 l1 5 l1 -4 l1 3 h2" stroke="#e06a3a" fill="none" stroke-width="0.8"/></svg>
<p style="left:2137px;top:378.9px;font-size:7px;color:#f2f2f2;letter-spacing:-0.1px">DYLNJS_SB1_Loops_Breaks...</p>
<svg style="left:2120px;top:391.8px;" width="11" height="11"><rect x="0.5" y="0.5" width="10" height="10" rx="1" fill="#2a1510" stroke="#b0502a" stroke-width="0.9"/><path d="M2 6 h1 l1 -3 l1 5 l1 -4 l1 3 h2" stroke="#e06a3a" fill="none" stroke-width="0.8"/></svg>
<p style="left:2137px;top:392.8px;font-size:7px;color:#f2f2f2;letter-spacing:-0.1px">DYLNJS_SB1_Loops_Breaks...</p>
<svg style="left:2120px;top:405.8px;" width="11" height="11"><rect x="0.5" y="0.5" width="10" height="10" rx="1" fill="#2a1510" stroke="#b0502a" stroke-width="0.9"/><path d="M2 6 h1 l1 -3 l1 5 l1 -4 l1 3 h2" stroke="#e06a3a" fill="none" stroke-width="0.8"/></svg>
<p style="left:2137px;top:406.8px;font-size:7px;color:#f2f2f2;letter-spacing:-0.1px">DYLNJS_SB1_Loops_Breaks...</p>
<svg style="left:2120px;top:419.7px;" width="11" height="11"><rect x="0.5" y="0.5" width="10" height="10" rx="1" fill="#2a1510" stroke="#b0502a" stroke-width="0.9"/><path d="M2 6 h1 l1 -3 l1 5 l1 -4 l1 3 h2" stroke="#e06a3a" fill="none" stroke-width="0.8"/></svg>
<p style="left:2137px;top:420.7px;font-size:7px;color:#f2f2f2;letter-spacing:-0.1px">DYLNJS_SB1_Loops_Breaks...</p>
<svg style="left:2120px;top:433.7px;" width="11" height="11"><rect x="0.5" y="0.5" width="10" height="10" rx="1" fill="#2a1510" stroke="#b0502a" stroke-width="0.9"/><path d="M2 6 h1 l1 -3 l1 5 l1 -4 l1 3 h2" stroke="#e06a3a" fill="none" stroke-width="0.8"/></svg>
<p style="left:2137px;top:434.7px;font-size:7px;color:#f2f2f2;letter-spacing:-0.1px">DYLNJS_SB1_Loops_Breaks...</p>
<svg style="left:2120px;top:447.6px;" width="11" height="11"><rect x="0.5" y="0.5" width="10" height="10" rx="1" fill="#2a1510" stroke="#b0502a" stroke-width="0.9"/><path d="M2 6 h1 l1 -3 l1 5 l1 -4 l1 3 h2" stroke="#e06a3a" fill="none" stroke-width="0.8"/></svg>
<p style="left:2137px;top:448.6px;font-size:7px;color:#f2f2f2;letter-spacing:-0.1px">DYLNJS_SB1_Loops_Breaks...</p>
<svg style="left:2120px;top:461.6px;" width="11" height="11"><rect x="0.5" y="0.5" width="10" height="10" rx="1" fill="#2a1510" stroke="#b0502a" stroke-width="0.9"/><path d="M2 6 h1 l1 -3 l1 5 l1 -4 l1 3 h2" stroke="#e06a3a" fill="none" stroke-width="0.8"/></svg>
<p style="left:2137px;top:462.6px;font-size:7px;color:#f2f2f2;letter-spacing:-0.1px">DYLNJS_SB1_Loops_Breaks...</p>
<svg style="left:2120px;top:475.5px;" width="11" height="11"><rect x="0.5" y="0.5" width="10" height="10" rx="1" fill="#2a1510" stroke="#b0502a" stroke-width="0.9"/><path d="M2 6 h1 l1 -3 l1 5 l1 -4 l1 3 h2" stroke="#e06a3a" fill="none" stroke-width="0.8"/></svg>
<p style="left:2137px;top:476.5px;font-size:7px;color:#f2f2f2;letter-spacing:-0.1px">DYLNJS_SB1_Loops_Breaks...</p>
<svg style="left:2120px;top:489.5px;" width="11" height="11"><rect x="0.5" y="0.5" width="10" height="10" rx="1" fill="#2a1510" stroke="#b0502a" stroke-width="0.9"/><path d="M2 6 h1 l1 -3 l1 5 l1 -4 l1 3 h2" stroke="#e06a3a" fill="none" stroke-width="0.8"/></svg>
<p style="left:2137px;top:490.5px;font-size:7px;color:#f2f2f2;letter-spacing:-0.1px">DYLNJS_SB1_Loops_Breaks...</p>
<svg style="left:2120px;top:503.4px;" width="11" height="11"><rect x="0.5" y="0.5" width="10" height="10" rx="1" fill="#2a1510" stroke="#b0502a" stroke-width="0.9"/><path d="M2 6 h1 l1 -3 l1 5 l1 -4 l1 3 h2" stroke="#e06a3a" fill="none" stroke-width="0.8"/></svg>
<p style="left:2137px;top:504.4px;font-size:7px;color:#f2f2f2;letter-spacing:-0.1px">DYLNJS_SB1_Loops_Breaks...</p>
<svg style="left:2120px;top:517.4px;" width="11" height="11"><rect x="0.5" y="0.5" width="10" height="10" rx="1" fill="#2a1510" stroke="#b0502a" stroke-width="0.9"/><path d="M2 6 h1 l1 -3 l1 5 l1 -4 l1 3 h2" stroke="#e06a3a" fill="none" stroke-width="0.8"/></svg>
<p style="left:2137px;top:518.4px;font-size:7px;color:#f2f2f2;letter-spacing:-0.1px">DYLNJS_SB1_Loops_Breaks...</p>
<svg style="left:2120px;top:531.3px;" width="11" height="11"><rect x="0.5" y="0.5" width="10" height="10" rx="1" fill="#2a1510" stroke="#b0502a" stroke-width="0.9"/><path d="M2 6 h1 l1 -3 l1 5 l1 -4 l1 3 h2" stroke="#e06a3a" fill="none" stroke-width="0.8"/></svg>
<p style="left:2137px;top:532.3px;font-size:7px;color:#f2f2f2;letter-spacing:-0.1px">DYLNJS_SB1_Loops_Breaks...</p>
<svg style="left:2120px;top:545.2px;" width="11" height="11"><rect x="0.5" y="0.5" width="10" height="10" rx="1" fill="#2a1510" stroke="#b0502a" stroke-width="0.9"/><path d="M2 6 h1 l1 -3 l1 5 l1 -4 l1 3 h2" stroke="#e06a3a" fill="none" stroke-width="0.8"/></svg>
<p style="left:2137px;top:546.2px;font-size:7px;color:#f2f2f2;letter-spacing:-0.1px">DYLNJS_SB1_Loops_Breaks...</p>
<b style="left:2113px;top:557.7px;width:122px;height:14px;background:#33404a"></b>
<svg style="left:2120px;top:559.2px;" width="11" height="11"><rect x="0.5" y="0.5" width="10" height="10" rx="1" fill="#2a1510" stroke="#b0502a" stroke-width="0.9"/><path d="M2 6 h1 l1 -3 l1 5 l1 -4 l1 3 h2" stroke="#e06a3a" fill="none" stroke-width="0.8"/></svg>
<p style="left:2137px;top:560.2px;font-size:7px;color:#f2f2f2;letter-spacing:-0.1px">DYLNJS_SB1_Loops_Breaks...</p>
<b style="left:2113px;top:572px;width:122px;height:1px;background:#222"></b>
<svg style="left:2117px;top:577px;" width="11" height="11"><rect x="0.5" y="0.5" width="10" height="10" rx="1" fill="#2a1510" stroke="#b0502a" stroke-width="0.9"/><path d="M2 6 h1 l1 -3 l1 5 l1 -4 l1 3 h2" stroke="#e06a3a" fill="none" stroke-width="0.8"/></svg>
<p style="left:2134px;top:578.3px;font-size:7px;color:#e8e8e8;letter-spacing:-0.1px">DYLNJS_SB1_Loops_Brea...</p>
<svg style="left:2225px;top:580px;" width="8" height="5"><path d="M1 1 L4 4 L7 1" stroke="#ccc" fill="none"/></svg>
<b style="left:2117px;top:592.5px;width:24px;height:24.5px;background:#3c3c3c;border-radius:2px"></b>
<svg style="left:2122px;top:599px;" width="9" height="10"><path d="M1 9 L4.5 1 L8 9Z M3 7 L8 2" stroke="#ddd" stroke-width="0.9" fill="none"/></svg>
<svg style="left:2134px;top:603px;" width="5" height="4"><path d="M0 0 H4 L2 3Z" fill="#aaa"/></svg>
<p style="left:2147px;top:595.5px;font-size:7px;color:#4f9fd8">Length</p>
<p style="left:2147px;top:605.5px;font-size:7px;color:#4f9fd8">3.211 s</p>
<p style="left:2174px;top:598px;font-size:9px;color:#aaa">&#8594;</p>
<p style="left:2186.5px;top:595.5px;font-size:7px;color:#8a8a8a">Beats</p>
<p style="left:2188px;top:605.5px;font-size:7px;color:#d8d8d8">2.1.2</p>
<p style="left:2212px;top:594.5px;font-size:6.5px;color:#8a8a8a">44.1k</p>
<svg style="left:2216px;top:605px;" width="10" height="6"><rect x="0.5" y="0.5" width="8" height="4.5" rx="2.2" fill="none" stroke="#888" stroke-width="0.8"/></svg>
<p style="left:2119px;top:626px;font-size:6.5px;color:#8a8a8a">COLLECTIONS</p>
<svg style="left:2118px;top:637px;" width="11" height="11"><path d="M5.5 0.8 L7 4 L10.5 4.3 L7.8 6.6 L8.7 10 L5.5 8.2 L2.3 10 L3.2 6.6 L0.5 4.3 L4 4Z" fill="none" stroke="#c9a040" stroke-width="0.9"/></svg>
<p style="left:2132px;top:634px;font-size:11px;color:#8a8a8a">+</p>
<b style="left:2117px;top:650px;width:118px;height:23.5px;background:#111;border-radius:2px"></b>
<b style="left:2119px;top:655px;width:9px;height:15px;background:#8a5030"></b>
<svg style="left:2117px;top:650px;" width="118" height="23.5"><rect x="13.0" y="10.0" width="0.9" height="3.8" fill="#5aaae0"/><rect x="14.0" y="7.9" width="0.9" height="8.1" fill="#5aaae0"/><rect x="15.0" y="9.1" width="0.9" height="5.7" fill="#5aaae0"/><rect x="16.0" y="7.5" width="0.9" height="9.0" fill="#5aaae0"/><rect x="17.0" y="7.3" width="0.9" height="9.3" fill="#5aaae0"/><rect x="18.0" y="11.5" width="0.9" height="0.9" fill="#5aaae0"/><rect x="19.0" y="11.7" width="0.9" height="0.6" fill="#5aaae0"/><rect x="20.0" y="9.2" width="0.9" height="5.5" fill="#5aaae0"/><rect x="21.0" y="10.9" width="0.9" height="2.1" fill="#5aaae0"/><rect x="22.0" y="10.1" width="0.9" height="3.8" fill="#5aaae0"/><rect x="23.0" y="4.7" width="0.9" height="14.4" fill="#5aaae0"/><rect x="24.0" y="8.4" width="0.9" height="7.1" fill="#5aaae0"/><rect x="25.0" y="5.8" width="0.9" height="12.2" fill="#5aaae0"/><rect x="26.0" y="8.4" width="0.9" height="7.2" fill="#5aaae0"/><rect x="27.0" y="9.8" width="0.9" height="4.3" fill="#5aaae0"/><rect x="28.0" y="11.2" width="0.9" height="1.4" fill="#5aaae0"/><rect x="29.0" y="9.8" width="0.9" height="4.3" fill="#5aaae0"/><rect x="30.0" y="9.1" width="0.9" height="5.7" fill="#5aaae0"/><rect x="31.0" y="8.0" width="0.9" height="7.8" fill="#5aaae0"/><rect x="32.0" y="6.5" width="0.9" height="10.9" fill="#5aaae0"/><rect x="33.0" y="7.0" width="0.9" height="9.9" fill="#5aaae0"/><rect x="34.0" y="11.3" width="0.9" height="1.4" fill="#5aaae0"/><rect x="35.0" y="6.4" width="0.9" height="11.1" fill="#5aaae0"/><rect x="36.0" y="9.9" width="0.9" height="4.0" fill="#5aaae0"/><rect x="37.0" y="10.8" width="0.9" height="2.3" fill="#5aaae0"/><rect x="38.0" y="11.6" width="0.9" height="0.7" fill="#5aaae0"/><rect x="39.0" y="9.1" width="0.9" height="5.7" fill="#5aaae0"/><rect x="40.0" y="8.4" width="0.9" height="7.1" fill="#5aaae0"/><rect x="41.0" y="6.7" width="0.9" height="10.6" fill="#5aaae0"/><rect x="42.0" y="5.5" width="0.9" height="12.8" fill="#5aaae0"/><rect x="43.0" y="6.7" width="0.9" height="10.5" fill="#5aaae0"/><rect x="44.0" y="5.3" width="0.9" height="13.4" fill="#5aaae0"/><rect x="45.0" y="10.5" width="0.9" height="2.9" fill="#5aaae0"/><rect x="46.0" y="9.3" width="0.9" height="5.3" fill="#5aaae0"/><rect x="47.0" y="10.4" width="0.9" height="3.2" fill="#5aaae0"/><rect x="48.0" y="8.9" width="0.9" height="6.1" fill="#5aaae0"/><rect x="49.0" y="5.5" width="0.9" height="12.8" fill="#5aaae0"/><rect x="50.0" y="11.0" width="0.9" height="1.9" fill="#5aaae0"/><rect x="51.0" y="10.7" width="0.9" height="2.4" fill="#5aaae0"/><rect x="52.0" y="10.2" width="0.9" height="3.5" fill="#5aaae0"/><rect x="53.0" y="4.9" width="0.9" height="14.0" fill="#5aaae0"/><rect x="54.0" y="10.4" width="0.9" height="3.1" fill="#5aaae0"/><rect x="55.0" y="9.8" width="0.9" height="4.3" fill="#5aaae0"/><rect x="56.0" y="10.8" width="0.9" height="2.3" fill="#5aaae0"/><rect x="57.0" y="10.2" width="0.9" height="3.5" fill="#5aaae0"/><rect x="58.0" y="9.0" width="0.9" height="5.9" fill="#5aaae0"/><rect x="59.0" y="9.2" width="0.9" height="5.4" fill="#5aaae0"/><rect x="60.0" y="7.6" width="0.9" height="8.7" fill="#5aaae0"/><rect x="61.0" y="7.6" width="0.9" height="8.7" fill="#5aaae0"/><rect x="62.0" y="5.4" width="0.9" height="13.2" fill="#5aaae0"/><rect x="63.0" y="9.7" width="0.9" height="4.6" fill="#5aaae0"/><rect x="64.0" y="8.9" width="0.9" height="6.1" fill="#5aaae0"/><rect x="65.0" y="9.1" width="0.9" height="5.6" fill="#5aaae0"/><rect x="66.0" y="8.7" width="0.9" height="6.4" fill="#5aaae0"/><rect x="67.0" y="7.0" width="0.9" height="9.9" fill="#5aaae0"/><rect x="68.0" y="10.6" width="0.9" height="2.8" fill="#5aaae0"/><rect x="69.0" y="5.7" width="0.9" height="12.5" fill="#5aaae0"/><rect x="70.0" y="4.9" width="0.9" height="14.0" fill="#5aaae0"/><rect x="71.0" y="5.4" width="0.9" height="13.2" fill="#5aaae0"/><rect x="72.0" y="10.0" width="0.9" height="3.9" fill="#5aaae0"/><rect x="73.0" y="9.6" width="0.9" height="4.8" fill="#5aaae0"/><rect x="74.0" y="11.1" width="0.9" height="1.8" fill="#5aaae0"/><rect x="75.0" y="9.2" width="0.9" height="5.5" fill="#5aaae0"/><rect x="76.0" y="7.7" width="0.9" height="8.5" fill="#5aaae0"/><rect x="77.0" y="9.7" width="0.9" height="4.5" fill="#5aaae0"/><rect x="78.0" y="11.3" width="0.9" height="1.4" fill="#5aaae0"/><rect x="79.0" y="5.7" width="0.9" height="12.5" fill="#5aaae0"/><rect x="80.0" y="4.8" width="0.9" height="14.4" fill="#5aaae0"/><rect x="81.0" y="11.4" width="0.9" height="1.0" fill="#5aaae0"/><rect x="82.0" y="9.3" width="0.9" height="5.3" fill="#5aaae0"/><rect x="83.0" y="10.5" width="0.9" height="3.0" fill="#5aaae0"/><rect x="84.0" y="11.2" width="0.9" height="1.4" fill="#5aaae0"/><rect x="85.0" y="9.6" width="0.9" height="4.6" fill="#5aaae0"/><rect x="86.0" y="6.3" width="0.9" height="11.3" fill="#5aaae0"/><rect x="87.0" y="5.6" width="0.9" height="12.7" fill="#5aaae0"/><rect x="88.0" y="11.4" width="0.9" height="1.1" fill="#5aaae0"/><rect x="89.0" y="7.4" width="0.9" height="9.1" fill="#5aaae0"/><rect x="90.0" y="11.6" width="0.9" height="0.8" fill="#5aaae0"/><rect x="91.0" y="9.5" width="0.9" height="4.8" fill="#5aaae0"/><rect x="92.0" y="10.7" width="0.9" height="2.5" fill="#5aaae0"/><rect x="93.0" y="9.1" width="0.9" height="5.8" fill="#5aaae0"/><rect x="94.0" y="4.8" width="0.9" height="14.2" fill="#5aaae0"/><rect x="95.0" y="8.2" width="0.9" height="7.6" fill="#5aaae0"/><rect x="96.0" y="4.7" width="0.9" height="14.5" fill="#5aaae0"/><rect x="97.0" y="9.5" width="0.9" height="4.8" fill="#5aaae0"/><rect x="98.0" y="11.2" width="0.9" height="1.6" fill="#5aaae0"/><rect x="99.0" y="9.9" width="0.9" height="4.1" fill="#5aaae0"/><rect x="100.0" y="11.6" width="0.9" height="0.7" fill="#5aaae0"/><rect x="101.0" y="11.1" width="0.9" height="1.7" fill="#5aaae0"/><rect x="102.0" y="10.5" width="0.9" height="2.9" fill="#5aaae0"/></svg>
<svg style="left:2226px;top:653px;" width="8" height="18"><path d="M0 1 L7 4.5 L0 8Z" fill="#ccc"/><path d="M0 13 h2 l4 -3 v8 l-4 -3 h-2z" fill="#ccc"/></svg>
<b style="left:1060px;top:524px;width:1052px;height:3px;background:#2a2a2a"></b>
<b style="left:1062px;top:526px;width:1048px;height:151.5px;background:#0b0b0b"></b>
<b style="left:1062px;top:526px;width:16px;height:151.5px;background:#333"></b>
<b style="left:1063px;top:530px;width:14px;height:2.5px;background:#555"></b>
<b style="left:1063px;top:672px;width:14px;height:2.5px;background:#555"></b>
<div class="t" style="left:1010.0px;top:597.7px;width:120px;height:8.6px;line-height:8.6px;text-align:center;font-size:6.6px;color:#f0f0f0;transform:rotate(-90deg);font-weight:bold;">PROJECT</div>
<b style="left:1079.5px;top:526px;width:16px;height:151.5px;background:#333"></b>
<b style="left:1080.5px;top:530px;width:14px;height:2.5px;background:#555"></b>
<b style="left:1080.5px;top:672px;width:14px;height:2.5px;background:#555"></b>
<div class="t" style="left:1027.5px;top:596.7px;width:120px;height:8.6px;line-height:8.6px;text-align:center;font-size:6.6px;color:#f0f0f0;transform:rotate(-90deg);font-weight:bold;">LISTEN</div>
<svg style="left:1066px;top:546px;" width="9" height="7"><path d="M0.5 1 L2.5 4 L4.5 0.5 L6.5 4 L8.5 1 L8 6 H1Z" fill="#ddd"/></svg>
<svg style="left:1083.5px;top:546px;" width="9" height="8"><path d="M2 1 h3 v5 M2.5 4 l2.5 2.5 l2.5 -2.5" stroke="#ddd" fill="none" stroke-width="1"/></svg>
<svg style="left:1083.5px;top:636px;" width="9" height="8"><path d="M1 7 h3 v-5 M1.5 4 l2.5 -2.5 l2.5 2.5" stroke="#e07b44" fill="none" stroke-width="1"/></svg>
<svg style="left:1066px;top:647px;" width="8" height="8"><circle cx="4" cy="4" r="3.3" fill="#ddd"/><rect x="3.4" y="1.5" width="1.2" height="2.5" fill="#333"/></svg>
<svg style="left:1066px;top:659px;" width="9" height="6"><circle cx="2" cy="3" r="1.5" fill="none" stroke="#ccc" stroke-width="0.8"/><path d="M3.5 3 h5 M6.5 1 l2 2 l-2 2" stroke="#ccc" fill="none" stroke-width="0.8"/></svg>
<svg style="left:1083.5px;top:647px;" width="8" height="8"><circle cx="4" cy="4" r="3.3" fill="#ddd"/><rect x="3.4" y="1.5" width="1.2" height="2.5" fill="#333"/></svg>
<svg style="left:1083.5px;top:659px;" width="9" height="6"><circle cx="2" cy="3" r="1.5" fill="none" stroke="#ccc" stroke-width="0.8"/><path d="M3.5 3 h5 M6.5 1 l2 2 l-2 2" stroke="#ccc" fill="none" stroke-width="0.8"/></svg>
<b style="left:1096px;top:526px;width:100px;height:151.5px;background:#303030"></b>
<b style="left:1096px;top:527px;width:85px;height:13px;background:#353535;box-shadow:inset 0 -0.7px 0 #2a2a2a"></b>
<p style="left:1108px;top:529.3px;font-size:7px;color:#808080;letter-spacing:-0.15px">Main Drums</p>
<svg style="left:1098.5px;top:531.5px;" width="7" height="5"><path d="M1 1 L3.5 3.5 L6 1" stroke="#777" fill="none"/></svg>
<b style="left:1181px;top:528px;width:7px;height:11px;background:#1e1e1e"></b>
<b style="left:1188.5px;top:528px;width:7px;height:11px;background:#2a2a2a"></b>
<b style="left:1182px;top:537px;width:5px;height:0.8px;background:#a06030"></b>
<b style="left:1096px;top:540.5px;width:85px;height:13px;background:#353535;box-shadow:inset 0 -0.7px 0 #2a2a2a"></b>
<b style="left:1096px;top:540.5px;width:5px;height:13px;background:#2c2c2c"></b>
<p style="left:1114px;top:542.8px;font-size:7px;color:#808080;letter-spacing:-0.15px">V_RIOT_kick_03</p>
<b style="left:1181px;top:541.5px;width:7px;height:11px;background:#1e1e1e"></b>
<b style="left:1188.5px;top:541.5px;width:7px;height:11px;background:#2a2a2a"></b>
<b style="left:1182px;top:550.5px;width:5px;height:0.8px;background:#a06030"></b>
<b style="left:1096px;top:554.1px;width:85px;height:13px;background:#353535;box-shadow:inset 0 -0.7px 0 #2a2a2a"></b>
<b style="left:1096px;top:554.1px;width:5px;height:13px;background:#2c2c2c"></b>
<p style="left:1114px;top:556.4px;font-size:7px;color:#808080;letter-spacing:-0.15px">V_RIOT_snare_dnb...</p>
<b style="left:1181px;top:555.1px;width:7px;height:11px;background:#1e1e1e"></b>
<b style="left:1188.5px;top:555.1px;width:7px;height:11px;background:#2a2a2a"></b>
<b style="left:1182px;top:564.1px;width:5px;height:0.8px;background:#a06030"></b>
<b style="left:1096px;top:567.6px;width:85px;height:13px;background:#353535;box-shadow:inset 0 -0.7px 0 #2a2a2a"></b>
<p style="left:1108px;top:569.9px;font-size:7px;color:#808080;letter-spacing:-0.15px">Drum Machine</p>
<svg style="left:1099px;top:571.1px;" width="5" height="7"><path d="M1 1 L3.5 3.5 L1 6" stroke="#666" fill="none"/></svg>
<b style="left:1181px;top:568.6px;width:7px;height:11px;background:#1e1e1e"></b>
<b style="left:1188.5px;top:568.6px;width:7px;height:11px;background:#2a2a2a"></b>
<b style="left:1182px;top:577.6px;width:5px;height:0.8px;background:#a06030"></b>
<b style="left:1096px;top:581.2px;width:85px;height:13px;background:#353535;box-shadow:inset 0 -0.7px 0 #2a2a2a"></b>
<p style="left:1108px;top:583.5px;font-size:7px;color:#808080;letter-spacing:-0.15px">Poly Grid</p>
<b style="left:1181px;top:582.2px;width:7px;height:11px;background:#1e1e1e"></b>
<b style="left:1188.5px;top:582.2px;width:7px;height:11px;background:#2a2a2a"></b>
<b style="left:1182px;top:591.2px;width:5px;height:0.8px;background:#a06030"></b>
<b style="left:1096px;top:594.8px;width:85px;height:13px;background:#353535;box-shadow:inset 0 -0.7px 0 #2a2a2a"></b>
<p style="left:1108px;top:597px;font-size:7px;color:#808080;letter-spacing:-0.15px">Bass Dist Release</p>
<b style="left:1181px;top:595.8px;width:7px;height:11px;background:#1e1e1e"></b>
<b style="left:1188.5px;top:595.8px;width:7px;height:11px;background:#2a2a2a"></b>
<b style="left:1182px;top:604.8px;width:5px;height:0.8px;background:#a06030"></b>
<b style="left:1096px;top:608.3px;width:85px;height:13px;background:#353535;box-shadow:inset 0 -0.7px 0 #2a2a2a"></b>
<p style="left:1108px;top:610.6px;font-size:7px;color:#808080;letter-spacing:-0.15px">CHIME_lead_megam...</p>
<b style="left:1181px;top:609.3px;width:7px;height:11px;background:#1e1e1e"></b>
<b style="left:1188.5px;top:609.3px;width:7px;height:11px;background:#2a2a2a"></b>
<b style="left:1182px;top:618.3px;width:5px;height:0.8px;background:#a06030"></b>
<b style="left:1096px;top:621.9px;width:85px;height:13px;background:#353535;box-shadow:inset 0 -0.7px 0 #2a2a2a"></b>
<p style="left:1108px;top:624.1px;font-size:7px;color:#808080;letter-spacing:-0.15px">Galactic Drift</p>
<b style="left:1181px;top:622.9px;width:7px;height:11px;background:#1e1e1e"></b>
<b style="left:1188.5px;top:622.9px;width:7px;height:11px;background:#2a2a2a"></b>
<b style="left:1182px;top:631.9px;width:5px;height:0.8px;background:#a06030"></b>
<b style="left:1096px;top:635.4px;width:85px;height:13px;background:#353535;box-shadow:inset 0 -0.7px 0 #2a2a2a"></b>
<p style="left:1108px;top:637.7px;font-size:7px;color:#808080;letter-spacing:-0.15px">Distorted Drums</p>
<b style="left:1181px;top:636.4px;width:7px;height:11px;background:#1e1e1e"></b>
<b style="left:1188.5px;top:636.4px;width:7px;height:11px;background:#2a2a2a"></b>
<b style="left:1182px;top:645.4px;width:5px;height:0.8px;background:#a06030"></b>
<b style="left:1096px;top:649px;width:85px;height:13px;background:#353535;box-shadow:inset 0 -0.7px 0 #2a2a2a"></b>
<p style="left:1108px;top:651.2px;font-size:7px;color:#808080;letter-spacing:-0.15px">WG_impact_lfo_dow...</p>
<b style="left:1181px;top:650px;width:7px;height:11px;background:#1e1e1e"></b>
<b style="left:1188.5px;top:650px;width:7px;height:11px;background:#2a2a2a"></b>
<b style="left:1182px;top:659px;width:5px;height:0.8px;background:#a06030"></b>
<b style="left:1096px;top:662.5px;width:85px;height:13px;background:#353535;box-shadow:inset 0 -0.7px 0 #2a2a2a"></b>
<p style="left:1108px;top:664.8px;font-size:7px;color:#808080;letter-spacing:-0.15px">Ethereal LAYER</p>
<svg style="left:1098.5px;top:667px;" width="7" height="5"><path d="M1 1 L3.5 3.5 L6 1" stroke="#777" fill="none"/></svg>
<b style="left:1181px;top:663.5px;width:7px;height:11px;background:#1e1e1e"></b>
<b style="left:1188.5px;top:663.5px;width:7px;height:11px;background:#2a2a2a"></b>
<b style="left:1182px;top:672.5px;width:5px;height:0.8px;background:#a06030"></b>
<b style="left:1189.5px;top:532px;width:2px;height:7px;background:#8ac060"></b>
<b style="left:1192.3px;top:532px;width:2px;height:7px;background:#8ac060"></b>
<b style="left:1189.5px;top:549.5px;width:2px;height:3px;background:#8ac060"></b>
<b style="left:1192.3px;top:549.5px;width:2px;height:3px;background:#8ac060"></b>
<b style="left:1189.5px;top:563.1px;width:2px;height:3px;background:#8ac060"></b>
<b style="left:1192.3px;top:563.1px;width:2px;height:3px;background:#8ac060"></b>
<b style="left:1189.5px;top:575.6px;width:2px;height:4px;background:#8ac060"></b>
<b style="left:1192.3px;top:575.6px;width:2px;height:4px;background:#8ac060"></b>
<b style="left:1189.5px;top:586.2px;width:2px;height:7px;background:#8ac060"></b>
<b style="left:1192.3px;top:586.2px;width:2px;height:7px;background:#8ac060"></b>
<b style="left:1189.5px;top:630.4px;width:2px;height:3.5px;background:#8ac060"></b>
<b style="left:1192.3px;top:630.4px;width:2px;height:3.5px;background:#8ac060"></b>
<b style="left:1189.5px;top:671.5px;width:2px;height:3px;background:#8ac060"></b>
<b style="left:1192.3px;top:671.5px;width:2px;height:3px;background:#8ac060"></b>
<b style="left:1200px;top:647px;width:3px;height:19px;background:linear-gradient(#e09040,#9ad060 40%,#5a9a40)"></b>
<b style="left:1204px;top:647px;width:3px;height:19px;background:linear-gradient(#e09040,#9ad060 40%,#5a9a40)"></b>
<b style="left:1339px;top:647px;width:3px;height:19px;background:linear-gradient(#e09040,#9ad060 40%,#5a9a40)"></b>
<b style="left:1343px;top:647px;width:3px;height:19px;background:linear-gradient(#e09040,#9ad060 40%,#5a9a40)"></b>
<p style="left:1199.5px;top:597px;font-size:10px;color:#aaa">+</p>
<p style="left:1337.5px;top:597px;font-size:10px;color:#aaa">+</p>
<b style="left:1211px;top:533.5px;width:124px;height:136px;background:#2b2b2b;border-radius:5px;box-shadow:inset 0 0 0 0.7px #3a3a3a"></b>
<b style="left:1211px;top:533.5px;width:17px;height:136px;background:#303030;border-radius:5px 0 0 5px"></b>
<svg style="left:1215px;top:537px;" width="9" height="9"><path d="M2.3 2.5 A3.5 3.5 0 1 0 6.7 2.5 M4.5 0.5 v4" stroke="#e07b44" fill="none" stroke-width="1.1"/></svg>
<svg style="left:1215px;top:553px;" width="10" height="8"><path d="M0.5 1 h3.5 l1 1 h4.5 v5.5 h-9z" fill="#888"/></svg>
<div class="t" style="left:1159.5px;top:595.3px;width:120px;height:8.3px;line-height:8.3px;text-align:center;font-size:6.4px;color:#f0f0f0;transform:rotate(-90deg);font-weight:bold;letter-spacing:-0.1px">GHZ CANOPENER S...</div>
<svg style="left:1215px;top:635.5px;" width="10" height="9"><rect x="0.5" y="0.5" width="9" height="8" rx="1" fill="none" stroke="#aaa"/><rect x="0.5" y="0.5" width="9" height="2.5" fill="#aaa"/></svg>
<svg style="left:1215px;top:648px;" width="8" height="8"><circle cx="4" cy="4" r="3.3" fill="#ccc"/><rect x="3.4" y="1.5" width="1.2" height="2.5" fill="#333"/></svg>
<svg style="left:1215px;top:660px;" width="9" height="6"><circle cx="2" cy="3" r="1.5" fill="none" stroke="#ccc" stroke-width="0.8"/><path d="M3.5 3 h5 M6.5 1 l2 2 l-2 2" stroke="#ccc" fill="none" stroke-width="0.8"/></svg>
<svg style="left:1232px;top:537px;" width="9" height="9"><circle cx="4.5" cy="4.5" r="3.8" fill="none" stroke="#e07b44" stroke-width="1"/><circle cx="4.5" cy="4.5" r="1.5" fill="#e07b44"/></svg>
<b style="left:1243px;top:536px;width:69px;height:12px;background:#111;border-radius:2px"></b>
<svg style="left:1247px;top:539px;" width="10" height="8"><circle cx="3.5" cy="3.5" r="2.5" fill="none" stroke="#ddd" stroke-width="1"/><path d="M5.3 5.3 L7.5 7.5" stroke="#ddd"/><path d="M7 4 h3 l-1.5 1.5z" fill="#ddd"/></svg>
<svg style="left:1302px;top:538.5px;" width="7" height="7"><path d="M1 1 L6 6 M6 1 L1 6" stroke="#ccc" stroke-width="1"/></svg>
<p style="left:1319px;top:537px;font-size:7px;color:#aaa">&#8594;</p>
<b style="left:1228px;top:549.5px;width:106px;height:18.7px;background:#3b3b3b;box-shadow:inset 0 -0.7px 0 #1e1e1e"></b>
<svg style="left:1228px;top:549.5px;" width="26" height="18.7"><circle cx="11.8" cy="9.2" r="5.9" fill="#282828" stroke="#141414" stroke-width="1"/><path d="M6.64 14.36A7.3 7.3 0 1 1 16.96 14.36" stroke="#d8783e" stroke-width="1.7" fill="none"/><path d="M13.36 10.76L15.05 12.45" stroke="#eee" stroke-width="1.3"/></svg>
<p style="left:1252px;top:550.5px;font-size:7.3px;color:#e8e8e8;letter-spacing:-0.1px">Master On/Off</p>
<p style="left:1252px;top:558.8px;font-size:7.3px;color:#e8e8e8">On</p>
<b style="left:1228px;top:569.5px;width:106px;height:18.7px;background:#2e2e2e;box-shadow:inset 0 -0.7px 0 #1e1e1e"></b>
<svg style="left:1228px;top:569.5px;" width="26" height="18.7"><circle cx="11.8" cy="9.2" r="5.9" fill="#282828" stroke="#141414" stroke-width="1"/><path d="M6.64 14.36A7.3 7.3 0 1 1 16.96 14.36" stroke="#d8783e" stroke-width="1.7" fill="none"/><path d="M13.36 10.76L15.05 12.45" stroke="#eee" stroke-width="1.3"/></svg>
<p style="left:1252px;top:570.5px;font-size:7.3px;color:#e8e8e8;letter-spacing:-0.1px">Master On/Off</p>
<p style="left:1252px;top:578.8px;font-size:7.3px;color:#e8e8e8">On</p>
<b style="left:1228px;top:588px;width:106px;height:18.7px;background:#2e2e2e;box-shadow:inset 0 -0.7px 0 #1e1e1e"></b>
<svg style="left:1228px;top:588px;" width="26" height="18.7"><circle cx="11.8" cy="9.2" r="5.9" fill="#282828" stroke="#141414" stroke-width="1"/><path d="M6.64 14.36A7.3 7.3 0 1 1 18.54 6.41" stroke="#d8783e" stroke-width="1.7" fill="none"/><path d="M13.83 8.36L16.05 7.44" stroke="#eee" stroke-width="1.3"/></svg>
<p style="left:1252px;top:589px;font-size:7.3px;color:#e8e8e8;letter-spacing:-0.1px">Amount</p>
<p style="left:1252px;top:597.3px;font-size:7.3px;color:#e8e8e8">100 %</p>
<b style="left:1228px;top:607px;width:106px;height:18.7px;background:#2e2e2e;box-shadow:inset 0 -0.7px 0 #1e1e1e"></b>
<svg style="left:1228px;top:607px;" width="26" height="18.7"><circle cx="11.8" cy="9.2" r="5.9" fill="#282828" stroke="#141414" stroke-width="1"/><path d="M6.64 14.36A7.3 7.3 0 0 1 15.11 2.70" stroke="#d8783e" stroke-width="1.7" fill="none"/><path d="M12.80 7.24L13.89 5.10" stroke="#eee" stroke-width="1.3"/></svg>
<p style="left:1252px;top:608px;font-size:7.3px;color:#e8e8e8;letter-spacing:-0.1px">Angle</p>
<p style="left:1252px;top:616.3px;font-size:7.3px;color:#e8e8e8">60 &deg;</p>
<b style="left:1228px;top:625.5px;width:106px;height:18.7px;background:#2e2e2e;box-shadow:inset 0 -0.7px 0 #1e1e1e"></b>
<svg style="left:1228px;top:625.5px;" width="26" height="18.7"><circle cx="11.8" cy="9.2" r="5.9" fill="#282828" stroke="#141414" stroke-width="1"/><path d="M6.64 14.36A7.3 7.3 0 0 1 11.80 1.90" stroke="#d8783e" stroke-width="1.7" fill="none"/><path d="M11.80 7.00L11.80 4.60" stroke="#eee" stroke-width="1.3"/></svg>
<p style="left:1252px;top:626.5px;font-size:7.3px;color:#e8e8e8;letter-spacing:-0.1px">Bass Gain</p>
<p style="left:1252px;top:634.8px;font-size:7.3px;color:#e8e8e8">0.0 dB</p>
<b style="left:1228px;top:644px;width:106px;height:18.7px;background:#2e2e2e;box-shadow:inset 0 -0.7px 0 #1e1e1e"></b>
<svg style="left:1228px;top:644px;" width="26" height="18.7"><circle cx="11.8" cy="9.2" r="5.9" fill="#282828" stroke="#141414" stroke-width="1"/><path d="M6.64 14.36A7.3 7.3 0 0 1 11.80 1.90" stroke="#d8783e" stroke-width="1.7" fill="none"/><path d="M11.80 7.00L11.80 4.60" stroke="#eee" stroke-width="1.3"/></svg>
<p style="left:1252px;top:645px;font-size:7.3px;color:#e8e8e8;letter-spacing:-0.1px">Treble Gain</p>
<p style="left:1252px;top:653.3px;font-size:7.3px;color:#e8e8e8">0.0 dB</p>
<p style="left:1252px;top:664px;font-size:7px;color:#999;clip-path:inset(0 0 50% 0)">Mono</p>
<b style="left:1332px;top:575px;width:2px;height:32px;background:#555;border-radius:1px"></b>
<b style="left:1228px;top:665px;width:106px;height:4.5px;background:#2f2f2f;border-radius:0 0 5px 0"></b>
<b style="left:960px;top:677.5px;width:1280px;height:22.5px;background:#2b2b2b"></b>
<svg style="left:971px;top:684px;" width="4" height="10"><rect x="1" y="0" width="2" height="2" fill="#e07b44"/><rect x="1" y="3" width="2" height="7" fill="#e07b44"/></svg>
<svg style="left:985px;top:684px;" width="9" height="9"><rect x="0.5" y="0.5" width="8" height="7.5" rx="1.5" fill="#9a5a30"/><rect x="0.5" y="0.5" width="3" height="7.5" fill="#e07b44"/></svg>
<p style="left:1009.5px;top:685px;font-size:6.5px;color:#d8d8d8;font-weight:bold;letter-spacing:-0.3px">DOUBLE-CLICK</p>
<p style="left:1060.5px;top:685px;font-size:6.5px;color:#8a8a8a">Insert device</p>
<p style="left:1111.5px;top:685px;font-size:6.5px;color:#d8d8d8;font-weight:bold;letter-spacing:-0.3px">SHIFT+DOUBLE-CLICK</p>
<p style="left:1184px;top:685px;font-size:6.5px;color:#8a8a8a">Insert favorites</p>
<svg style="left:2147px;top:684px;" width="10" height="10"><circle cx="4" cy="4" r="3" fill="none" stroke="#e07b44" stroke-width="1.1"/><path d="M6.2 6.2 L9 9" stroke="#e07b44" stroke-width="1.3"/></svg>
<svg style="left:2164px;top:684px;" width="8" height="10"><path d="M0.5 0.5 h4.5 l2.5 2.5 v6.5 h-7z" fill="#bbb"/></svg>
<svg style="left:2180px;top:683px;" width="9" height="11"><rect x="0.5" y="0.5" width="8" height="10" rx="2" fill="none" stroke="#bbb"/><circle cx="4.5" cy="6" r="2" fill="none" stroke="#bbb"/></svg>
<svg style="left:2196px;top:683px;" width="10" height="11"><path d="M3 10 V1.5 Q3.5 0 4.5 1.5 V5 Q6 4 7 5 Q8.5 4.5 9 6 V8 L8 10z" fill="#bbb"/></svg>
<b style="left:2214px;top:683px;width:0.8px;height:10px;background:#444"></b>
<svg style="left:2222px;top:684px;" width="9" height="9"><rect x="0" y="0" width="2" height="8" fill="#ddd"/><rect x="3" y="0" width="2.2" height="8" fill="#ddd"/><rect x="6.2" y="0" width="2" height="8" fill="#ddd"/><rect x="1.5" y="0" width="1.4" height="5" fill="#222"/><rect x="4.9" y="0" width="1.4" height="5" fill="#222"/></svg>
<b style="left:960px;top:700px;width:1280px;height:20px;background:linear-gradient(90deg,#3e2a26,#402b28 15%,#432a2c 24%,#422d22 35%,#422e21 60%,#402c22 80%,#3e2c24);box-shadow:inset 0 1px 0 #302826"></b>
<svg style="left:968px;top:702px;" width="16" height="16"><circle cx="8" cy="8" r="7.5" fill="#eee"/><circle cx="8" cy="8" r="4" fill="#3c2a24"/><circle cx="8" cy="8" r="3" fill="#eee"/><rect x="7" y="0.5" width="2" height="3" fill="#3c2a24" transform="rotate(0 8 8)"/><rect x="7" y="0.5" width="2" height="3" fill="#3c2a24" transform="rotate(45 8 8)"/><rect x="7" y="0.5" width="2" height="3" fill="#3c2a24" transform="rotate(90 8 8)"/><rect x="7" y="0.5" width="2" height="3" fill="#3c2a24" transform="rotate(135 8 8)"/><rect x="7" y="0.5" width="2" height="3" fill="#3c2a24" transform="rotate(180 8 8)"/><rect x="7" y="0.5" width="2" height="3" fill="#3c2a24" transform="rotate(225 8 8)"/><rect x="7" y="0.5" width="2" height="3" fill="#3c2a24" transform="rotate(270 8 8)"/><rect x="7" y="0.5" width="2" height="3" fill="#3c2a24" transform="rotate(315 8 8)"/></svg>
<b style="left:987px;top:703px;width:34px;height:6px;background:#8a7a75;opacity:0.8"></b>
<b style="left:997px;top:702px;width:13px;height:7px;background:#a8a0a0;border-radius:1px"></b>
<b style="left:987px;top:710px;width:34px;height:7px;background:#3cbaa8"></b>
<b style="left:997px;top:709px;width:13px;height:8px;background:#5fd0c0"></b>
<svg style="left:1028px;top:703px;" width="16" height="14"><path d="M0 1 h6 l1 1.5 h9 v11.5 h-16z" fill="#1a9a88"/><rect x="1" y="3" width="14" height="2" fill="#fff"/><path d="M0 6 h16 v8 h-16z" fill="#2ab5a0"/></svg>
<b style="left:1048px;top:700px;width:23px;height:20px;background:#5a4640"></b>
<svg style="left:1051px;top:702px;" width="17" height="17"><circle cx="8.5" cy="8.5" r="8" fill="#ff5a1a"/><path d="M4 10 h1 M6 8 v3 M8 7 v4 M10 8 v3 M12 10 h1" stroke="#fff" stroke-width="1"/><circle cx="8.5" cy="16" r="1.8" fill="#2ab5a0"/></svg>
<svg style="left:1075px;top:702px;" width="17" height="17"><circle cx="8.5" cy="8.5" r="7" fill="none" stroke="#e04060" stroke-width="2.5"/><path d="M8.5 1.5 A7 7 0 0 1 15.5 8.5" stroke="#3a90e0" stroke-width="2.5" fill="none"/><path d="M15.5 8.5 A7 7 0 0 1 8.5 15.5" stroke="#e8c030" stroke-width="2.5" fill="none"/><path d="M8.5 15.5 A7 7 0 0 1 1.5 8.5" stroke="#f0a060" stroke-width="2.5" fill="none"/></svg>
<b style="left:1096px;top:700px;width:23px;height:20px;background:#5a4640"></b>
<svg style="left:1100px;top:703px;" width="15" height="14"><rect x="0" y="0" width="15" height="14" fill="#374a55"/><path d="M0 14 L0 8 L4 4 L8 9 L11 6 L15 10 V14Z" fill="#5ab090"/></svg>
<b style="left:1120px;top:700px;width:23px;height:20px;background:#2a8a80;box-shadow:inset 0 1.5px 0 #4ad0c0"></b>
<svg style="left:1123px;top:702px;" width="17" height="16"><rect x="0.5" y="1" width="16" height="12" fill="#2e4e6a"/><path d="M7 1 L16.5 1 V13 L5 13Z" fill="#c0408a"/><rect x="6" y="5" width="5" height="4" fill="#eee"/><circle cx="8.5" cy="15" r="1.5" fill="#4ad0c0"/></svg>
<svg style="left:1906px;top:703px;" width="17" height="14"><rect x="0" y="0" width="16" height="13" fill="#3aa0a0"/><path d="M6 0 L16 0 V13 L3 13Z" fill="#c04a90"/><rect x="0" y="12" width="16" height="1.5" fill="#eee"/><path d="M4 4 L9 9" stroke="#fff"/></svg>
<svg style="left:1931px;top:704px;" width="11" height="11"><path d="M2 8.5 Q3 7 3 4.5 Q3 1.5 5.5 1.5 Q8 1.5 8 4.5 Q8 7 9 8.5Z M4.5 9.5 h2" stroke="#d8d8d8" fill="none" stroke-width="0.9"/><path d="M1 1 L10 10" stroke="#c03030" stroke-width="0.9"/></svg>
<svg style="left:1946px;top:703px;" width="11" height="12"><rect x="0" y="0" width="11" height="12" rx="2" fill="#1a5ad8"/><path d="M3 2 h5 v5 Q5.5 10 5.5 10 Q3 7 3 7z" fill="#fff"/></svg>
<svg style="left:1961px;top:703px;" width="10" height="12"><rect x="0.5" y="5" width="9" height="7" fill="#40b040"/><path d="M2.5 5 V3 A2.5 2.5 0 0 1 7.5 3 V5" stroke="#40b040" fill="none" stroke-width="1.3"/></svg>
<svg style="left:1976px;top:704px;" width="12" height="10"><path d="M1 8 Q1 2 3 1 L5 2 h2 l2 -1 Q11 2 11 8 L8 9 h-4z" fill="#eee"/><circle cx="10" cy="1.5" r="1.5" fill="#e33"/></svg>
<svg style="left:1992px;top:703px;" width="8" height="12"><path d="M4 0 L8 3 L7 10 L4 12 L1 10 L0 3Z" fill="#6a4ad8"/></svg>
<svg style="left:2006px;top:704px;" width="11" height="11"><circle cx="5.5" cy="5.5" r="5" fill="#d8d8d8"/><circle cx="7" cy="4" r="1.8" fill="#3e2c24"/><path d="M0.5 6 L5 8" stroke="#3e2c24" stroke-width="1.2"/></svg>
<svg style="left:2021px;top:704px;" width="11" height="11"><path d="M0.5 5 L10 1 L8 10 L5 7 Z" fill="none" stroke="#d8d8d8" stroke-width="0.9"/></svg>
<svg style="left:2036px;top:704px;" width="11" height="11"><circle cx="5.5" cy="5.5" r="4.5" fill="none" stroke="#d8d8d8" stroke-width="1"/><path d="M5.5 3 V7 M3.8 4.5 L5.5 2.8 L7.2 4.5" stroke="#d8d8d8" fill="none" stroke-width="0.9"/><circle cx="8.5" cy="8.5" r="1.6" fill="#2ab5a0"/></svg>
<svg style="left:2051px;top:704px;" width="11" height="11"><rect x="1" y="1.5" width="9" height="8.5" fill="none" stroke="#d8d8d8" stroke-width="0.9"/><rect x="3" y="0.5" width="5" height="2" fill="#d8d8d8"/></svg>
<svg style="left:2066px;top:704px;" width="11" height="11"><circle cx="5.5" cy="5.5" r="4.5" fill="none" stroke="#d8d8d8" stroke-width="1"/><path d="M4.5 3.5 L7.5 5.5 L4.5 7.5Z" fill="#d8d8d8"/></svg>
<svg style="left:2081px;top:704px;" width="11" height="11"><path d="M1 4 H3 L6 1.5 V9.5 L3 7 H1Z" fill="#d8d8d8"/><path d="M7.5 3.5 Q9 5.5 7.5 7.5" stroke="#d8d8d8" fill="none"/></svg>
<svg style="left:2096px;top:704px;" width="11" height="11"><path d="M0 5.5 H11 M5.5 1 L8 3.5 L3.5 7.5 M5.5 10 L8 7.5 L3.5 3.5 M5.5 1 V10" stroke="#d8d8d8" fill="none" stroke-width="0.9"/></svg>
<svg style="left:2111px;top:704px;" width="11" height="11"><circle cx="5.5" cy="5.5" r="2.8" fill="none" stroke="#d8d8d8" stroke-width="1"/><path d="M5.5 0.5 V2 M5.5 9 V10.5 M0.5 5.5 H2 M9 5.5 H10.5 M2 2 L3 3 M8 8 L9 9 M9 2 L8 3 M2 9 L3 8" stroke="#d8d8d8" stroke-width="0.9"/></svg>
<svg style="left:2126px;top:704px;" width="11" height="11"><rect x="3.5" y="0.5" width="4" height="7" rx="2" fill="#d8d8d8"/><path d="M2 5 Q2 9 5.5 9 Q9 9 9 5 M5.5 9 V10.5" stroke="#d8d8d8" fill="none" stroke-width="0.8"/></svg>
<svg style="left:2141px;top:704px;" width="11" height="11"><path d="M0.5 4 Q5.5 -0.5 10.5 4 M2 6 Q5.5 3 9 6 M3.5 8 Q5.5 6.5 7.5 8" stroke="#d8d8d8" fill="none" stroke-width="0.9"/><circle cx="5.5" cy="9.5" r="1" fill="#d8d8d8"/></svg>
<svg style="left:2156px;top:704px;" width="11" height="11"><rect x="0.5" y="1" width="10" height="7" fill="#c8c8c8"/><rect x="3" y="3" width="5" height="3" fill="#2a9a50"/><rect x="2" y="8.5" width="7" height="2" fill="#555"/></svg>
<svg style="left:2171px;top:705px;" width="10" height="6"><path d="M1 5 L5 1 L9 5" stroke="#ddd" fill="none"/></svg>
<p style="left:2184px;top:701.5px;font-size:7px;color:#d8d8d8">4:27 PM</p>
<p style="left:2187px;top:709.5px;font-size:6px;color:#c8c8c8">Dec 14</p>
<svg style="left:2219px;top:704px;" width="11" height="10"><rect x="0.5" y="0.5" width="9.5" height="8.5" fill="none" stroke="#ddd" stroke-width="1"/></svg>
<b style="left:3100px;top:146px;width:99px;height:471px;background:#2a2a2a;border-radius:3px;box-shadow:inset 0 0 0 1px #363636"></b>
<p style="left:3100px;top:378.5px;font-size:7px;color:#bdbdbd;width:99px;text-align:center">No item selected</p>
<b style="left:2240px;top:618px;width:960px;height:22px;background:#2b2b2b"></b>
<svg style="left:2248px;top:625px;" width="10" height="9"><rect x="0.5" y="0.5" width="8" height="7" rx="1.5" fill="#666"/><rect x="0.5" y="0.5" width="3" height="7" fill="#aaa"/></svg>
<p style="left:2273px;top:625px;font-size:6.5px;color:#d8d8d8;font-weight:bold;letter-spacing:-0.3px">DOUBLE-CLICK</p>
<p style="left:2324px;top:625px;font-size:6.5px;color:#8a8a8a">Insert device</p>
<p style="left:2376px;top:625px;font-size:6.5px;color:#d8d8d8;font-weight:bold;letter-spacing:-0.3px">SHIFT+DOUBLE-CLICK</p>
<p style="left:2447px;top:625px;font-size:6.5px;color:#8a8a8a">Insert favorites</p>
<svg style="left:3096px;top:625px;" width="4" height="10"><rect x="1" y="0" width="2" height="2" fill="#e07b44"/><rect x="1" y="3" width="2" height="7" fill="#e07b44"/></svg>
<svg style="left:3110px;top:625px;" width="10" height="10"><circle cx="4" cy="4" r="3" fill="none" stroke="#bbb" stroke-width="1.1"/><path d="M6.2 6.2 L9 9" stroke="#bbb" stroke-width="1.3"/></svg>
<svg style="left:3127px;top:625px;" width="8" height="10"><path d="M0.5 0.5 h4.5 l2.5 2.5 v6.5 h-7z" fill="#bbb"/></svg>
<svg style="left:3143px;top:624px;" width="9" height="11"><rect x="0.5" y="0.5" width="8" height="10" rx="2" fill="none" stroke="#bbb"/><circle cx="4.5" cy="6" r="2" fill="none" stroke="#bbb"/></svg>
<svg style="left:3159px;top:624px;" width="10" height="11"><path d="M3 10 V1.5 Q3.5 0 4.5 1.5 V5 Q6 4 7 5 Q8.5 4.5 9 6 V8 L8 10z" fill="#bbb"/></svg>
<b style="left:3176px;top:624px;width:0.8px;height:10px;background:#444"></b>
<svg style="left:3183px;top:625px;" width="9" height="9"><rect x="0" y="0" width="2" height="8" fill="#ddd"/><rect x="3" y="0" width="2.2" height="8" fill="#ddd"/><rect x="6.2" y="0" width="2" height="8" fill="#ddd"/><rect x="1.5" y="0" width="1.4" height="5" fill="#222"/><rect x="4.9" y="0" width="1.4" height="5" fill="#222"/></svg>
<b style="left:2240px;top:146px;width:859px;height:472px;background:#1b1b1b"></b>
<b style="left:2240px;top:146px;width:54px;height:233px;background:#3a3a3a"></b>
<svg style="left:2260px;top:160px;" width="14" height="11"><rect x="0.5" y="0.5" width="7" height="2" fill="#999"/><rect x="2" y="3.5" width="7" height="2" fill="#999"/><rect x="3.5" y="6.5" width="7" height="2" fill="#999"/><path d="M10.5 5 l3 0 l-1.5 2z" fill="#ddd"/></svg>
<p style="left:2240px;top:342px;font-size:7px;color:#9a9a9a;width:54px;text-align:center">Devices</p>
<b style="left:2240px;top:379px;width:54px;height:239px;background:#2c2c2c"></b>
<svg style="left:2253px;top:382px;" width="9" height="9"><circle cx="4" cy="4" r="3.3" fill="#d03030"/><path d="M5.5 5.5 L8.5 8.5 M8.5 5.5 L5.5 8.5" stroke="#eee" stroke-width="0.9"/></svg>
<p style="left:2265px;top:382px;font-size:7.5px;color:#777">S</p>
<p style="left:2276px;top:382px;font-size:7.5px;color:#777">M</p>
<svg style="left:2255px;top:535px;" width="10" height="8"><rect x="0.0" y="0.0" width="2.4" height="2.6" fill="#ddd"/><rect x="3.3" y="0.0" width="2.4" height="2.6" fill="#ddd"/><rect x="6.6" y="0.0" width="2.4" height="2.6" fill="#ddd"/><rect x="0.0" y="3.5" width="2.4" height="2.6" fill="#ddd"/><rect x="3.3" y="3.5" width="2.4" height="2.6" fill="#ddd"/><rect x="6.6" y="3.5" width="2.4" height="2.6" fill="#ddd"/></svg>
<svg style="left:2272px;top:535px;" width="6" height="8"><rect x="0.5" y="0" width="1.5" height="8" fill="#e07b44"/><rect x="3.5" y="0" width="1.5" height="8" fill="#e07b44"/></svg>
<svg style="left:2255px;top:546px;" width="9" height="9"><rect x="0.5" y="0.5" width="8" height="8" rx="2" fill="#9a5a30" stroke="#e07b44"/></svg>
<svg style="left:2270px;top:546px;" width="9" height="9"><circle cx="4.5" cy="4.5" r="3.8" fill="#ddd"/><rect x="4" y="1.5" width="1.1" height="3" fill="#333"/></svg>
<svg style="left:2255px;top:558px;" width="9" height="9"><path d="M1 8 L1 5 Q1 2 4 2 H7 M5 0 L7.5 2 L5 4" stroke="#ddd" fill="none" stroke-width="1"/></svg>
<svg style="left:2270px;top:558px;" width="9" height="9"><path d="M1 1 H5 Q8 1 8 4 V7 M6 5.5 L8 8 L10 5.5" stroke="#e07b44" fill="none" stroke-width="1"/></svg>
<svg style="left:2255px;top:570px;" width="9" height="9"><path d="M1 3 H8 M6 1 L8 3 L6 5 M8 6.5 H1 M3 4.5 L1 6.5 L3 8.5" stroke="#ddd" fill="none" stroke-width="0.9"/></svg>
<svg style="left:2270px;top:570px;" width="9" height="9"><path d="M1.5 1.5 L7.5 7.5 M7.5 1.5 L1.5 7.5" stroke="#e07b44" stroke-width="1.2"/></svg>
<b style="left:2254px;top:581px;width:26px;height:0.7px;background:#444"></b>
<p style="left:2254px;top:583.5px;font-size:6.5px;color:#ddd;font-weight:bold"><i>AB</i></p>
<svg style="left:2270px;top:583px;" width="10" height="9"><path d="M0.5 0.5 H9.5 V6.5 H4 L1.5 8.5 V6.5 H0.5Z" fill="#ddd"/></svg>
<b style="left:2294.7px;top:146.8px;width:160.6px;height:38.8px;background:#b5436a;border-radius:5px 5px 0 0"></b>
<b style="left:2830.2px;top:146.8px;width:209.4px;height:38.8px;background:#9cb070;border-radius:5px 5px 0 0"></b>
<p style="left:2294.7px;top:152.7px;font-size:7.3px;color:#f2f2f2;width:53.5px;text-align:center;letter-spacing:-0.2px">Main</p>
<p style="left:2294.7px;top:161.7px;font-size:7.3px;color:#f2f2f2;width:53.5px;text-align:center;letter-spacing:-0.2px">Drums</p>
<svg style="left:2316.5px;top:170.2px;" width="11" height="9"><path d="M0.5 1.5 h3.5 l1 1 h5 v6 h-9.5z" fill="#eee"/><path d="M0.5 3.5 h10 l-1 5 h-9z" fill="#ccc"/></svg>
<b style="left:2294.7px;top:185.6px;width:53.5px;height:127.4px;background:#191919"></b>
<b style="left:2309.5px;top:188.7px;width:15.3px;height:121.3px;background:#2b2b2b"></b>
<b style="left:2309.5px;top:243px;width:15.3px;height:67px;background:linear-gradient(180deg,#d88a4a 0px,#e0c070 16px,#8ab860 26px,#6aa848 60px,#3a7a30 100%)"></b>
<b style="left:2309.5px;top:222.5px;width:15.3px;height:1.3px;background:#e08040"></b>
<b style="left:2326px;top:188.7px;width:15.3px;height:121.3px;background:#2b2b2b"></b>
<b style="left:2326px;top:243px;width:15.3px;height:67px;background:linear-gradient(180deg,#d88a4a 0px,#e0c070 16px,#8ab860 26px,#6aa848 60px,#3a7a30 100%)"></b>
<b style="left:2326px;top:221.5px;width:15.3px;height:1.3px;background:#e08040"></b>
<p style="left:2296.2px;top:199.2px;font-size:6.3px;color:#d0d0d0;width:12px;text-align:center;line-height:7px">0</p>
<b style="left:2307.7px;top:202.7px;width:1.6px;height:0.9px;background:#8a8a8a"></b>
<b style="left:2342.9px;top:202.7px;width:2px;height:0.9px;background:#8a8a8a"></b>
<p style="left:2296.2px;top:214.8px;font-size:6.3px;color:#d0d0d0;width:12px;text-align:center;line-height:7px">6</p>
<b style="left:2307.7px;top:218.3px;width:1.6px;height:0.9px;background:#8a8a8a"></b>
<b style="left:2342.9px;top:218.3px;width:2px;height:0.9px;background:#8a8a8a"></b>
<p style="left:2296.2px;top:230.8px;font-size:6.3px;color:#d0d0d0;width:12px;text-align:center;line-height:7px">12</p>
<b style="left:2307.7px;top:234.3px;width:1.6px;height:0.9px;background:#8a8a8a"></b>
<b style="left:2342.9px;top:234.3px;width:2px;height:0.9px;background:#8a8a8a"></b>
<p style="left:2296.2px;top:245.2px;font-size:6.3px;color:#d0d0d0;width:12px;text-align:center;line-height:7px">18</p>
<b style="left:2307.7px;top:248.7px;width:1.6px;height:0.9px;background:#8a8a8a"></b>
<b style="left:2342.9px;top:248.7px;width:2px;height:0.9px;background:#8a8a8a"></b>
<p style="left:2296.2px;top:257.2px;font-size:6.3px;color:#d0d0d0;width:12px;text-align:center;line-height:7px">24</p>
<b style="left:2307.7px;top:260.7px;width:1.6px;height:0.9px;background:#8a8a8a"></b>
<b style="left:2342.9px;top:260.7px;width:2px;height:0.9px;background:#8a8a8a"></b>
<p style="left:2296.2px;top:268.6px;font-size:6.3px;color:#d0d0d0;width:12px;text-align:center;line-height:7px">30</p>
<b style="left:2307.7px;top:272.1px;width:1.6px;height:0.9px;background:#8a8a8a"></b>
<b style="left:2342.9px;top:272.1px;width:2px;height:0.9px;background:#8a8a8a"></b>
<p style="left:2296.2px;top:277.2px;font-size:6.3px;color:#d0d0d0;width:12px;text-align:center;line-height:7px">36</p>
<b style="left:2307.7px;top:280.7px;width:1.6px;height:0.9px;background:#8a8a8a"></b>
<b style="left:2342.9px;top:280.7px;width:2px;height:0.9px;background:#8a8a8a"></b>
<p style="left:2296.2px;top:289.6px;font-size:6.3px;color:#d0d0d0;width:12px;text-align:center;line-height:7px">48</p>
<b style="left:2307.7px;top:293.1px;width:1.6px;height:0.9px;background:#8a8a8a"></b>
<b style="left:2342.9px;top:293.1px;width:2px;height:0.9px;background:#8a8a8a"></b>
<p style="left:2296.2px;top:296.2px;font-size:6.3px;color:#d0d0d0;width:12px;text-align:center;line-height:7px">60</p>
<b style="left:2307.7px;top:299.7px;width:1.6px;height:0.9px;background:#8a8a8a"></b>
<b style="left:2342.9px;top:299.7px;width:2px;height:0.9px;background:#8a8a8a"></b>
<p style="left:2296.2px;top:303.2px;font-size:6.3px;color:#d0d0d0;width:12px;text-align:center;line-height:7px">&infin;</p>
<b style="left:2307.7px;top:306.7px;width:1.6px;height:0.9px;background:#8a8a8a"></b>
<b style="left:2342.9px;top:306.7px;width:2px;height:0.9px;background:#8a8a8a"></b>
<b style="left:2294.7px;top:313px;width:53.5px;height:66px;background:#222"></b>
<b style="left:2294.7px;top:313px;width:0.6px;height:66px;background:#111"></b>
<b style="left:2295.7px;top:314px;width:51.5px;height:10px;background:#383838;border-radius:1px"></b>
<svg style="left:2297.7px;top:316.2px;" width="6" height="6"><circle cx="3" cy="3" r="2.3" fill="#e8c050"/></svg>
<p style="left:2304.7px;top:315.9px;font-size:6px;color:#d0d0d0;width:42px;overflow:hidden;letter-spacing:-0.15px">Compressor+</p>
<b style="left:2343.2px;top:315px;width:3px;height:8px;background:#222"></b>
<b style="left:2295.7px;top:325px;width:51.5px;height:10px;background:#383838;border-radius:1px"></b>
<svg style="left:2297.7px;top:327.2px;" width="6" height="6"><circle cx="3" cy="3" r="2.3" fill="#e8c050"/></svg>
<p style="left:2304.7px;top:326.9px;font-size:6px;color:#d0d0d0;width:42px;overflow:hidden;letter-spacing:-0.15px">kHs Compactor</p>
<p style="left:2296.2px;top:336.5px;font-size:9px;color:#9a9a9a;line-height:10px">+</p>
<p style="left:2318.2px;top:338.6px;font-size:6px;color:#8a8a8a;width:28px;text-align:right">14.9 ms</p>
<b style="left:2294.7px;top:379px;width:53.5px;height:239px;background:#1b1b1b"></b>
<b style="left:2296.2px;top:381px;width:50.5px;height:12.5px;background:#2a2a2a"></b>
<b style="left:2297px;top:381.5px;width:15.5px;height:11.5px;background:#4f4f4f;border-radius:1.5px;box-shadow:inset 0 0 0 0.6px #2c2c2c"></b>
<b style="left:2313.2px;top:381.5px;width:15.5px;height:11.5px;background:#4f4f4f;border-radius:1.5px;box-shadow:inset 0 0 0 0.6px #2c2c2c"></b>
<b style="left:2329.3px;top:381.5px;width:16px;height:11.5px;background:#4f4f4f;border-radius:1.5px;box-shadow:inset 0 0 0 0.6px #2c2c2c"></b>
<svg style="left:2301.2px;top:383.5px;" width="8" height="8"><circle cx="4" cy="4" r="3" fill="#9a9a9a"/></svg>
<p style="left:2313.2px;top:382px;font-size:8.5px;color:#e8e8e8;width:15.5px;text-align:center;line-height:10px">S</p>
<p style="left:2329.3px;top:382px;font-size:8.5px;color:#e8e8e8;width:16px;text-align:center;line-height:10px">M</p>
<b style="left:2296.2px;top:395.5px;width:50.5px;height:12.5px;background:#141414;border-radius:1px;box-shadow:inset 0 0 0 0.7px #2e2e2e"></b>
<b style="left:2320.9px;top:397.5px;width:1.3px;height:9px;background:#d07030"></b>
<b style="left:2296.2px;top:409.5px;width:50.5px;height:11.5px;background:#161616;box-shadow:inset 0 -0.7px 0 #333"></b>
<p style="left:2297.7px;top:410.8px;font-size:6px;color:#9a9a9a;line-height:8px">-6.4</p>
<p style="left:2295.7px;top:410.8px;font-size:6px;color:#e07840;width:49.5px;text-align:right;line-height:8px;letter-spacing:-0.2px">-6.0 dB</p>
<b style="left:2296.2px;top:421px;width:50.5px;height:183px;background:#171717"></b>
<b style="left:2293.7px;top:379px;width:2px;height:225px;background:#343434"></b>
<b style="left:2299.2px;top:467px;width:44.5px;height:133.5px;background:#553a25;box-shadow:inset 0 1.3px 0 #9a5e38"></b>
<b style="left:2295.2px;top:604.3px;width:52.5px;height:3.8px;background:#b5436a"></b>
<b style="left:2348.2px;top:153px;width:53.5px;height:32.6px;background:#b5436a;box-shadow:inset 0 0 0 0.7px #4a1a2a"></b>
<p style="left:2345.2px;top:165.8px;font-size:7.2px;color:#f2f2f2;width:59.5px;text-align:center;letter-spacing:-0.35px">V_RIOT_kick_03</p>
<b style="left:2348.2px;top:185.6px;width:53.5px;height:127.4px;background:#191919"></b>
<b style="left:2363.1px;top:188.7px;width:15.3px;height:121.3px;background:#2b2b2b"></b>
<b style="left:2363.1px;top:286px;width:15.3px;height:24px;background:linear-gradient(180deg,#7ab858,#3e7e34)"></b>
<b style="left:2363.1px;top:239.4px;width:15.3px;height:1.3px;background:#e08040"></b>
<b style="left:2379.6px;top:188.7px;width:15.3px;height:121.3px;background:#2b2b2b"></b>
<b style="left:2379.6px;top:286px;width:15.3px;height:24px;background:linear-gradient(180deg,#7ab858,#3e7e34)"></b>
<b style="left:2379.6px;top:240.6px;width:15.3px;height:1.3px;background:#e08040"></b>
<p style="left:2349.8px;top:199.2px;font-size:6.3px;color:#d0d0d0;width:12px;text-align:center;line-height:7px">0</p>
<b style="left:2361.2px;top:202.7px;width:1.6px;height:0.9px;background:#8a8a8a"></b>
<b style="left:2396.5px;top:202.7px;width:2px;height:0.9px;background:#8a8a8a"></b>
<p style="left:2349.8px;top:214.8px;font-size:6.3px;color:#d0d0d0;width:12px;text-align:center;line-height:7px">6</p>
<b style="left:2361.2px;top:218.3px;width:1.6px;height:0.9px;background:#8a8a8a"></b>
<b style="left:2396.5px;top:218.3px;width:2px;height:0.9px;background:#8a8a8a"></b>
<p style="left:2349.8px;top:230.8px;font-size:6.3px;color:#d0d0d0;width:12px;text-align:center;line-height:7px">12</p>
<b style="left:2361.2px;top:234.3px;width:1.6px;height:0.9px;background:#8a8a8a"></b>
<b style="left:2396.5px;top:234.3px;width:2px;height:0.9px;background:#8a8a8a"></b>
<p style="left:2349.8px;top:245.2px;font-size:6.3px;color:#d0d0d0;width:12px;text-align:center;line-height:7px">18</p>
<b style="left:2361.2px;top:248.7px;width:1.6px;height:0.9px;background:#8a8a8a"></b>
<b style="left:2396.5px;top:248.7px;width:2px;height:0.9px;background:#8a8a8a"></b>
<p style="left:2349.8px;top:257.2px;font-size:6.3px;color:#d0d0d0;width:12px;text-align:center;line-height:7px">24</p>
<b style="left:2361.2px;top:260.7px;width:1.6px;height:0.9px;background:#8a8a8a"></b>
<b style="left:2396.5px;top:260.7px;width:2px;height:0.9px;background:#8a8a8a"></b>
<p style="left:2349.8px;top:268.6px;font-size:6.3px;color:#d0d0d0;width:12px;text-align:center;line-height:7px">30</p>
<b style="left:2361.2px;top:272.1px;width:1.6px;height:0.9px;background:#8a8a8a"></b>
<b style="left:2396.5px;top:272.1px;width:2px;height:0.9px;background:#8a8a8a"></b>
<p style="left:2349.8px;top:277.2px;font-size:6.3px;color:#d0d0d0;width:12px;text-align:center;line-height:7px">36</p>
<b style="left:2361.2px;top:280.7px;width:1.6px;height:0.9px;background:#8a8a8a"></b>
<b style="left:2396.5px;top:280.7px;width:2px;height:0.9px;background:#8a8a8a"></b>
<p style="left:2349.8px;top:289.6px;font-size:6.3px;color:#d0d0d0;width:12px;text-align:center;line-height:7px">48</p>
<b style="left:2361.2px;top:293.1px;width:1.6px;height:0.9px;background:#8a8a8a"></b>
<b style="left:2396.5px;top:293.1px;width:2px;height:0.9px;background:#8a8a8a"></b>
<p style="left:2349.8px;top:296.2px;font-size:6.3px;color:#d0d0d0;width:12px;text-align:center;line-height:7px">60</p>
<b style="left:2361.2px;top:299.7px;width:1.6px;height:0.9px;background:#8a8a8a"></b>
<b style="left:2396.5px;top:299.7px;width:2px;height:0.9px;background:#8a8a8a"></b>
<p style="left:2349.8px;top:303.2px;font-size:6.3px;color:#d0d0d0;width:12px;text-align:center;line-height:7px">&infin;</p>
<b style="left:2361.2px;top:306.7px;width:1.6px;height:0.9px;background:#8a8a8a"></b>
<b style="left:2396.5px;top:306.7px;width:2px;height:0.9px;background:#8a8a8a"></b>
<b style="left:2348.2px;top:313px;width:53.5px;height:66px;background:#222"></b>
<b style="left:2348.2px;top:313px;width:0.6px;height:66px;background:#111"></b>
<b style="left:2349.2px;top:314px;width:51.5px;height:10px;background:#383838;border-radius:1px"></b>
<svg style="left:2351.2px;top:316.2px;" width="6" height="6"><circle cx="3" cy="3" r="2.3" fill="#e8c050"/></svg>
<p style="left:2358.2px;top:315.9px;font-size:6px;color:#d0d0d0;width:42px;overflow:hidden;letter-spacing:-0.15px">Sampler</p>
<b style="left:2349.2px;top:325px;width:51.5px;height:10px;background:#383838;border-radius:1px"></b>
<svg style="left:2351.2px;top:327.2px;" width="6" height="6"><circle cx="3" cy="3" r="2.3" fill="#e8c050"/></svg>
<p style="left:2358.2px;top:326.9px;font-size:6px;color:#d0d0d0;width:42px;overflow:hidden;letter-spacing:-0.15px">Tilt</p>
<b style="left:2383.8px;top:329.8px;width:15px;height:0.8px;background:#bbb"></b>
<p style="left:2349.8px;top:336.5px;font-size:9px;color:#9a9a9a;line-height:10px">+</p>
<p style="left:2371.8px;top:338.6px;font-size:6px;color:#8a8a8a;width:28px;text-align:right">0.0 ms</p>
<b style="left:2348.2px;top:379px;width:53.5px;height:239px;background:#1b1b1b"></b>
<b style="left:2349.8px;top:381px;width:50.5px;height:12.5px;background:#2a2a2a"></b>
<b style="left:2350.6px;top:381.5px;width:15.5px;height:11.5px;background:#4f4f4f;border-radius:1.5px;box-shadow:inset 0 0 0 0.6px #2c2c2c"></b>
<b style="left:2366.8px;top:381.5px;width:15.5px;height:11.5px;background:#4f4f4f;border-radius:1.5px;box-shadow:inset 0 0 0 0.6px #2c2c2c"></b>
<b style="left:2382.8px;top:381.5px;width:16px;height:11.5px;background:#4f4f4f;border-radius:1.5px;box-shadow:inset 0 0 0 0.6px #2c2c2c"></b>
<svg style="left:2354.8px;top:383.5px;" width="8" height="8"><circle cx="4" cy="4" r="3" fill="#f0f0f0"/></svg>
<p style="left:2366.8px;top:382px;font-size:8.5px;color:#e8e8e8;width:15.5px;text-align:center;line-height:10px">S</p>
<p style="left:2382.8px;top:382px;font-size:8.5px;color:#e8e8e8;width:16px;text-align:center;line-height:10px">M</p>
<b style="left:2349.8px;top:395.5px;width:50.5px;height:12.5px;background:#141414;border-radius:1px;box-shadow:inset 0 0 0 0.7px #2e2e2e"></b>
<b style="left:2374.4px;top:397.5px;width:1.3px;height:9px;background:#d07030"></b>
<b style="left:2349.8px;top:409.5px;width:50.5px;height:11.5px;background:#161616;box-shadow:inset 0 -0.7px 0 #333"></b>
<p style="left:2351.2px;top:410.8px;font-size:6px;color:#9a9a9a;line-height:8px">-7.4</p>
<p style="left:2349.2px;top:410.8px;font-size:6px;color:#e07840;width:49.5px;text-align:right;line-height:8px;letter-spacing:-0.2px">+0.0 dB</p>
<b style="left:2349.8px;top:421px;width:50.5px;height:183px;background:#171717"></b>
<b style="left:2347.2px;top:379px;width:2px;height:225px;background:#343434"></b>
<b style="left:2352.8px;top:444px;width:44.5px;height:156.5px;background:#553a25;box-shadow:inset 0 1.3px 0 #9a5e38"></b>
<b style="left:2348.8px;top:604.3px;width:52.5px;height:3.8px;background:#b5436a"></b>
<b style="left:2401.8px;top:153px;width:53.5px;height:32.6px;background:#d65a3c;box-shadow:inset 0 0 0 0.7px #4a1a2a"></b>
<p style="left:2398.8px;top:165.8px;font-size:7.2px;color:#f5e0d0;width:59.5px;text-align:center;letter-spacing:-0.35px">V_RIOT_snar01</p>
<b style="left:2401.8px;top:185.6px;width:53.5px;height:127.4px;background:#191919"></b>
<b style="left:2416.6px;top:188.7px;width:15.3px;height:121.3px;background:#2b2b2b"></b>
<b style="left:2416.6px;top:283.5px;width:15.3px;height:26.5px;background:linear-gradient(180deg,#7ab858,#3e7e34)"></b>
<b style="left:2416.6px;top:252.6px;width:15.3px;height:1.3px;background:#e0c040"></b>
<b style="left:2433.1px;top:188.7px;width:15.3px;height:121.3px;background:#2b2b2b"></b>
<b style="left:2433.1px;top:283.5px;width:15.3px;height:26.5px;background:linear-gradient(180deg,#7ab858,#3e7e34)"></b>
<b style="left:2433.1px;top:252.6px;width:15.3px;height:1.3px;background:#e0c040"></b>
<p style="left:2403.3px;top:199.2px;font-size:6.3px;color:#d0d0d0;width:12px;text-align:center;line-height:7px">0</p>
<b style="left:2414.8px;top:202.7px;width:1.6px;height:0.9px;background:#8a8a8a"></b>
<b style="left:2450px;top:202.7px;width:2px;height:0.9px;background:#8a8a8a"></b>
<p style="left:2403.3px;top:214.8px;font-size:6.3px;color:#d0d0d0;width:12px;text-align:center;line-height:7px">6</p>
<b style="left:2414.8px;top:218.3px;width:1.6px;height:0.9px;background:#8a8a8a"></b>
<b style="left:2450px;top:218.3px;width:2px;height:0.9px;background:#8a8a8a"></b>
<p style="left:2403.3px;top:230.8px;font-size:6.3px;color:#d0d0d0;width:12px;text-align:center;line-height:7px">12</p>
<b style="left:2414.8px;top:234.3px;width:1.6px;height:0.9px;background:#8a8a8a"></b>
<b style="left:2450px;top:234.3px;width:2px;height:0.9px;background:#8a8a8a"></b>
<p style="left:2403.3px;top:245.2px;font-size:6.3px;color:#d0d0d0;width:12px;text-align:center;line-height:7px">18</p>
<b style="left:2414.8px;top:248.7px;width:1.6px;height:0.9px;background:#8a8a8a"></b>
<b style="left:2450px;top:248.7px;width:2px;height:0.9px;background:#8a8a8a"></b>
<p style="left:2403.3px;top:257.2px;font-size:6.3px;color:#d0d0d0;width:12px;text-align:center;line-height:7px">24</p>
<b style="left:2414.8px;top:260.7px;width:1.6px;height:0.9px;background:#8a8a8a"></b>
<b style="left:2450px;top:260.7px;width:2px;height:0.9px;background:#8a8a8a"></b>
<p style="left:2403.3px;top:268.6px;font-size:6.3px;color:#d0d0d0;width:12px;text-align:center;line-height:7px">30</p>
<b style="left:2414.8px;top:272.1px;width:1.6px;height:0.9px;background:#8a8a8a"></b>
<b style="left:2450px;top:272.1px;width:2px;height:0.9px;background:#8a8a8a"></b>
<p style="left:2403.3px;top:277.2px;font-size:6.3px;color:#d0d0d0;width:12px;text-align:center;line-height:7px">36</p>
<b style="left:2414.8px;top:280.7px;width:1.6px;height:0.9px;background:#8a8a8a"></b>
<b style="left:2450px;top:280.7px;width:2px;height:0.9px;background:#8a8a8a"></b>
<p style="left:2403.3px;top:289.6px;font-size:6.3px;color:#d0d0d0;width:12px;text-align:center;line-height:7px">48</p>
<b style="left:2414.8px;top:293.1px;width:1.6px;height:0.9px;background:#8a8a8a"></b>
<b style="left:2450px;top:293.1px;width:2px;height:0.9px;background:#8a8a8a"></b>
<p style="left:2403.3px;top:296.2px;font-size:6.3px;color:#d0d0d0;width:12px;text-align:center;line-height:7px">60</p>
<b style="left:2414.8px;top:299.7px;width:1.6px;height:0.9px;background:#8a8a8a"></b>
<b style="left:2450px;top:299.7px;width:2px;height:0.9px;background:#8a8a8a"></b>
<p style="left:2403.3px;top:303.2px;font-size:6.3px;color:#d0d0d0;width:12px;text-align:center;line-height:7px">&infin;</p>
<b style="left:2414.8px;top:306.7px;width:1.6px;height:0.9px;background:#8a8a8a"></b>
<b style="left:2450px;top:306.7px;width:2px;height:0.9px;background:#8a8a8a"></b>
<b style="left:2401.8px;top:313px;width:53.5px;height:66px;background:#222"></b>
<b style="left:2401.8px;top:313px;width:0.6px;height:66px;background:#111"></b>
<b style="left:2402.8px;top:314px;width:51.5px;height:10px;background:#383838;border-radius:1px"></b>
<svg style="left:2404.8px;top:316px;" width="6" height="6"><path d="M4.5 0.5 A3 3 0 1 0 5.5 5.2 A2.3 2.3 0 1 1 4.5 0.5z" fill="#e8c050"/></svg>
<p style="left:2411.8px;top:315.9px;font-size:6px;color:#d0d0d0;width:42px;overflow:hidden;letter-spacing:-0.15px">Sampler</p>
<b style="left:2402.8px;top:325px;width:51.5px;height:10px;background:#383838;border-radius:1px"></b>
<svg style="left:2404.8px;top:327px;" width="6" height="6"><path d="M4.5 0.5 A3 3 0 1 0 5.5 5.2 A2.3 2.3 0 1 1 4.5 0.5z" fill="#e8c050"/></svg>
<p style="left:2411.8px;top:326.9px;font-size:6px;color:#d0d0d0;width:42px;overflow:hidden;letter-spacing:-0.15px">Tilt</p>
<b style="left:2437.3px;top:329.8px;width:15px;height:0.8px;background:#bbb"></b>
<p style="left:2403.3px;top:336.5px;font-size:9px;color:#9a9a9a;line-height:10px">+</p>
<p style="left:2425.3px;top:338.6px;font-size:6px;color:#8a8a8a;width:28px;text-align:right">0.0 ms</p>
<b style="left:2401.8px;top:379px;width:53.5px;height:239px;background:#1b1b1b"></b>
<b style="left:2403.3px;top:381px;width:50.5px;height:12.5px;background:#2a2a2a"></b>
<b style="left:2404.1px;top:381.5px;width:15.5px;height:11.5px;background:#4f4f4f;border-radius:1.5px;box-shadow:inset 0 0 0 0.6px #2c2c2c"></b>
<b style="left:2420.3px;top:381.5px;width:15.5px;height:11.5px;background:#4f4f4f;border-radius:1.5px;box-shadow:inset 0 0 0 0.6px #2c2c2c"></b>
<b style="left:2436.4px;top:381.5px;width:16px;height:11.5px;background:#4f4f4f;border-radius:1.5px;box-shadow:inset 0 0 0 0.6px #2c2c2c"></b>
<svg style="left:2408.3px;top:383.5px;" width="8" height="8"><circle cx="4" cy="4" r="3" fill="#f0f0f0"/></svg>
<p style="left:2420.3px;top:382px;font-size:8.5px;color:#e8e8e8;width:15.5px;text-align:center;line-height:10px">S</p>
<p style="left:2436.4px;top:382px;font-size:8.5px;color:#e8e8e8;width:16px;text-align:center;line-height:10px">M</p>
<b style="left:2403.3px;top:395.5px;width:50.5px;height:12.5px;background:#141414;border-radius:1px;box-shadow:inset 0 0 0 0.7px #2e2e2e"></b>
<b style="left:2428px;top:397.5px;width:1.3px;height:9px;background:#d07030"></b>
<b style="left:2403.3px;top:409.5px;width:50.5px;height:11.5px;background:#161616;box-shadow:inset 0 -0.7px 0 #333"></b>
<p style="left:2404.8px;top:410.8px;font-size:6px;color:#9a9a9a;line-height:8px">-7.4</p>
<p style="left:2402.8px;top:410.8px;font-size:6px;color:#e07840;width:49.5px;text-align:right;line-height:8px;letter-spacing:-0.2px">+0.0 dB</p>
<b style="left:2403.3px;top:421px;width:50.5px;height:183px;background:#171717"></b>
<b style="left:2400.8px;top:379px;width:2px;height:225px;background:#343434"></b>
<b style="left:2406.3px;top:444px;width:44.5px;height:156.5px;background:#553a25;box-shadow:inset 0 1.3px 0 #9a5e38"></b>
<b style="left:2402.3px;top:604.3px;width:52.5px;height:3.8px;background:#d65a3c"></b>
<b style="left:2455.3px;top:146.8px;width:53px;height:38.8px;background:#7a7a7a"></b>
<svg style="left:2495.9px;top:146.8px;" width="13" height="8"><path d="M0 0 L13 0 L13 8 L8 8Z" fill="#555"/></svg>
<p style="left:2455.3px;top:158.2px;font-size:7.3px;color:#f0f0f0;width:53.5px;text-align:center;letter-spacing:-0.2px">Drum</p>
<p style="left:2455.3px;top:167.2px;font-size:7.3px;color:#f0f0f0;width:53.5px;text-align:center;letter-spacing:-0.2px">Machine</p>
<b style="left:2455.3px;top:185.6px;width:53.5px;height:127.4px;background:#191919"></b>
<b style="left:2470.2px;top:188.7px;width:15.3px;height:121.3px;background:#2b2b2b"></b>
<b style="left:2470.2px;top:274.5px;width:15.3px;height:35.5px;background:linear-gradient(180deg,#7ab858,#3e7e34)"></b>
<b style="left:2470.2px;top:244.4px;width:15.3px;height:1.3px;background:#e0a040"></b>
<b style="left:2486.7px;top:188.7px;width:15.3px;height:121.3px;background:#2b2b2b"></b>
<b style="left:2486.7px;top:274.5px;width:15.3px;height:35.5px;background:linear-gradient(180deg,#7ab858,#3e7e34)"></b>
<b style="left:2486.7px;top:244.4px;width:15.3px;height:1.3px;background:#e0a040"></b>
<p style="left:2456.8px;top:199.2px;font-size:6.3px;color:#d0d0d0;width:12px;text-align:center;line-height:7px">0</p>
<b style="left:2468.3px;top:202.7px;width:1.6px;height:0.9px;background:#8a8a8a"></b>
<b style="left:2503.6px;top:202.7px;width:2px;height:0.9px;background:#8a8a8a"></b>
<p style="left:2456.8px;top:214.8px;font-size:6.3px;color:#d0d0d0;width:12px;text-align:center;line-height:7px">6</p>
<b style="left:2468.3px;top:218.3px;width:1.6px;height:0.9px;background:#8a8a8a"></b>
<b style="left:2503.6px;top:218.3px;width:2px;height:0.9px;background:#8a8a8a"></b>
<p style="left:2456.8px;top:230.8px;font-size:6.3px;color:#d0d0d0;width:12px;text-align:center;line-height:7px">12</p>
<b style="left:2468.3px;top:234.3px;width:1.6px;height:0.9px;background:#8a8a8a"></b>
<b style="left:2503.6px;top:234.3px;width:2px;height:0.9px;background:#8a8a8a"></b>
<p style="left:2456.8px;top:245.2px;font-size:6.3px;color:#d0d0d0;width:12px;text-align:center;line-height:7px">18</p>
<b style="left:2468.3px;top:248.7px;width:1.6px;height:0.9px;background:#8a8a8a"></b>
<b style="left:2503.6px;top:248.7px;width:2px;height:0.9px;background:#8a8a8a"></b>
<p style="left:2456.8px;top:257.2px;font-size:6.3px;color:#d0d0d0;width:12px;text-align:center;line-height:7px">24</p>
<b style="left:2468.3px;top:260.7px;width:1.6px;height:0.9px;background:#8a8a8a"></b>
<b style="left:2503.6px;top:260.7px;width:2px;height:0.9px;background:#8a8a8a"></b>
<p style="left:2456.8px;top:268.6px;font-size:6.3px;color:#d0d0d0;width:12px;text-align:center;line-height:7px">30</p>
<b style="left:2468.3px;top:272.1px;width:1.6px;height:0.9px;background:#8a8a8a"></b>
<b style="left:2503.6px;top:272.1px;width:2px;height:0.9px;background:#8a8a8a"></b>
<p style="left:2456.8px;top:277.2px;font-size:6.3px;color:#d0d0d0;width:12px;text-align:center;line-height:7px">36</p>
<b style="left:2468.3px;top:280.7px;width:1.6px;height:0.9px;background:#8a8a8a"></b>
<b style="left:2503.6px;top:280.7px;width:2px;height:0.9px;background:#8a8a8a"></b>
<p style="left:2456.8px;top:289.6px;font-size:6.3px;color:#d0d0d0;width:12px;text-align:center;line-height:7px">48</p>
<b style="left:2468.3px;top:293.1px;width:1.6px;height:0.9px;background:#8a8a8a"></b>
<b style="left:2503.6px;top:293.1px;width:2px;height:0.9px;background:#8a8a8a"></b>
<p style="left:2456.8px;top:296.2px;font-size:6.3px;color:#d0d0d0;width:12px;text-align:center;line-height:7px">60</p>
<b style="left:2468.3px;top:299.7px;width:1.6px;height:0.9px;background:#8a8a8a"></b>
<b style="left:2503.6px;top:299.7px;width:2px;height:0.9px;background:#8a8a8a"></b>
<p style="left:2456.8px;top:303.2px;font-size:6.3px;color:#d0d0d0;width:12px;text-align:center;line-height:7px">&infin;</p>
<b style="left:2468.3px;top:306.7px;width:1.6px;height:0.9px;background:#8a8a8a"></b>
<b style="left:2503.6px;top:306.7px;width:2px;height:0.9px;background:#8a8a8a"></b>
<b style="left:2455.3px;top:313px;width:53.5px;height:66px;background:#222"></b>
<b style="left:2455.3px;top:313px;width:0.6px;height:66px;background:#111"></b>
<b style="left:2456.3px;top:314px;width:51.5px;height:10px;background:#383838;border-radius:1px"></b>
<svg style="left:2458.3px;top:316.2px;" width="6" height="6"><circle cx="3" cy="3" r="2.3" fill="#e8c050"/></svg>
<p style="left:2465.3px;top:315.9px;font-size:6px;color:#d0d0d0;width:42px;overflow:hidden;letter-spacing:-0.15px">Drum Machine</p>
<b style="left:2456.3px;top:325px;width:51.5px;height:10px;background:#383838;border-radius:1px"></b>
<svg style="left:2458.3px;top:327.2px;" width="6" height="6"><circle cx="3" cy="3" r="2.3" fill="#e8c050"/></svg>
<p style="left:2465.3px;top:326.9px;font-size:6px;color:#d0d0d0;width:42px;overflow:hidden;letter-spacing:-0.15px">FX Layer</p>
<p style="left:2456.8px;top:336.5px;font-size:9px;color:#9a9a9a;line-height:10px">+</p>
<b style="left:2455.3px;top:379px;width:53.5px;height:239px;background:#1b1b1b"></b>
<b style="left:2456.8px;top:381px;width:50.5px;height:12.5px;background:#2a2a2a"></b>
<b style="left:2457.7px;top:381.5px;width:15.5px;height:11.5px;background:#4f4f4f;border-radius:1.5px;box-shadow:inset 0 0 0 0.6px #2c2c2c"></b>
<b style="left:2473.8px;top:381.5px;width:15.5px;height:11.5px;background:#4f4f4f;border-radius:1.5px;box-shadow:inset 0 0 0 0.6px #2c2c2c"></b>
<b style="left:2489.9px;top:381.5px;width:16px;height:11.5px;background:#4f4f4f;border-radius:1.5px;box-shadow:inset 0 0 0 0.6px #2c2c2c"></b>
<svg style="left:2461.8px;top:383.5px;" width="8" height="8"><circle cx="4" cy="4" r="3" fill="#f0f0f0"/></svg>
<p style="left:2473.8px;top:382px;font-size:8.5px;color:#e8e8e8;width:15.5px;text-align:center;line-height:10px">S</p>
<p style="left:2489.9px;top:382px;font-size:8.5px;color:#e8e8e8;width:16px;text-align:center;line-height:10px">M</p>
<b style="left:2456.8px;top:395.5px;width:50.5px;height:12.5px;background:#141414;border-radius:1px;box-shadow:inset 0 0 0 0.7px #2e2e2e"></b>
<b style="left:2481.5px;top:397.5px;width:1.3px;height:9px;background:#d07030"></b>
<b style="left:2456.8px;top:409.5px;width:50.5px;height:11.5px;background:#161616;box-shadow:inset 0 -0.7px 0 #333"></b>
<p style="left:2458.3px;top:410.8px;font-size:6px;color:#9a9a9a;line-height:8px">-9.4</p>
<p style="left:2456.3px;top:410.8px;font-size:6px;color:#e07840;width:49.5px;text-align:right;line-height:8px;letter-spacing:-0.2px">-9.0 dB</p>
<b style="left:2456.8px;top:421px;width:50.5px;height:183px;background:#171717"></b>
<b style="left:2454.3px;top:379px;width:2px;height:225px;background:#343434"></b>
<b style="left:2459.8px;top:479px;width:44.5px;height:121.5px;background:#553a25;box-shadow:inset 0 1.3px 0 #9a5e38"></b>
<b style="left:2455.8px;top:604.3px;width:52.5px;height:3.8px;background:#7a7a7a"></b>
<b style="left:2508.9px;top:146.8px;width:53px;height:38.8px;background:#d65a3c"></b>
<p style="left:2508.9px;top:158.2px;font-size:7.3px;color:#4a1a08;width:53.5px;text-align:center;letter-spacing:-0.2px">Poly</p>
<p style="left:2508.9px;top:167.2px;font-size:7.3px;color:#4a1a08;width:53.5px;text-align:center;letter-spacing:-0.2px">Grid</p>
<b style="left:2508.9px;top:185.6px;width:53.5px;height:127.4px;background:#191919"></b>
<b style="left:2523.7px;top:188.7px;width:15.3px;height:121.3px;background:#2b2b2b"></b>
<b style="left:2523.7px;top:237.7px;width:15.3px;height:72.3px;background:linear-gradient(180deg,#d88a4a 0px,#e0c070 16px,#8ab860 26px,#6aa848 60px,#3a7a30 100%)"></b>
<b style="left:2523.7px;top:225px;width:15.3px;height:1.3px;background:#e08040"></b>
<b style="left:2540.2px;top:188.7px;width:15.3px;height:121.3px;background:#2b2b2b"></b>
<b style="left:2540.2px;top:235.8px;width:15.3px;height:74.2px;background:linear-gradient(180deg,#d88a4a 0px,#e0c070 16px,#8ab860 26px,#6aa848 60px,#3a7a30 100%)"></b>
<b style="left:2540.2px;top:224px;width:15.3px;height:1.3px;background:#e08040"></b>
<p style="left:2510.4px;top:199.2px;font-size:6.3px;color:#d0d0d0;width:12px;text-align:center;line-height:7px">0</p>
<b style="left:2521.9px;top:202.7px;width:1.6px;height:0.9px;background:#8a8a8a"></b>
<b style="left:2557.1px;top:202.7px;width:2px;height:0.9px;background:#8a8a8a"></b>
<p style="left:2510.4px;top:214.8px;font-size:6.3px;color:#d0d0d0;width:12px;text-align:center;line-height:7px">6</p>
<b style="left:2521.9px;top:218.3px;width:1.6px;height:0.9px;background:#8a8a8a"></b>
<b style="left:2557.1px;top:218.3px;width:2px;height:0.9px;background:#8a8a8a"></b>
<p style="left:2510.4px;top:230.8px;font-size:6.3px;color:#d0d0d0;width:12px;text-align:center;line-height:7px">12</p>
<b style="left:2521.9px;top:234.3px;width:1.6px;height:0.9px;background:#8a8a8a"></b>
<b style="left:2557.1px;top:234.3px;width:2px;height:0.9px;background:#8a8a8a"></b>
<p style="left:2510.4px;top:245.2px;font-size:6.3px;color:#d0d0d0;width:12px;text-align:center;line-height:7px">18</p>
<b style="left:2521.9px;top:248.7px;width:1.6px;height:0.9px;background:#8a8a8a"></b>
<b style="left:2557.1px;top:248.7px;width:2px;height:0.9px;background:#8a8a8a"></b>
<p style="left:2510.4px;top:257.2px;font-size:6.3px;color:#d0d0d0;width:12px;text-align:center;line-height:7px">24</p>
<b style="left:2521.9px;top:260.7px;width:1.6px;height:0.9px;background:#8a8a8a"></b>
<b style="left:2557.1px;top:260.7px;width:2px;height:0.9px;background:#8a8a8a"></b>
<p style="left:2510.4px;top:268.6px;font-size:6.3px;color:#d0d0d0;width:12px;text-align:center;line-height:7px">30</p>
<b style="left:2521.9px;top:272.1px;width:1.6px;height:0.9px;background:#8a8a8a"></b>
<b style="left:2557.1px;top:272.1px;width:2px;height:0.9px;background:#8a8a8a"></b>
<p style="left:2510.4px;top:277.2px;font-size:6.3px;color:#d0d0d0;width:12px;text-align:center;line-height:7px">36</p>
<b style="left:2521.9px;top:280.7px;width:1.6px;height:0.9px;background:#8a8a8a"></b>
<b style="left:2557.1px;top:280.7px;width:2px;height:0.9px;background:#8a8a8a"></b>
<p style="left:2510.4px;top:289.6px;font-size:6.3px;color:#d0d0d0;width:12px;text-align:center;line-height:7px">48</p>
<b style="left:2521.9px;top:293.1px;width:1.6px;height:0.9px;background:#8a8a8a"></b>
<b style="left:2557.1px;top:293.1px;width:2px;height:0.9px;background:#8a8a8a"></b>
<p style="left:2510.4px;top:296.2px;font-size:6.3px;color:#d0d0d0;width:12px;text-align:center;line-height:7px">60</p>
<b style="left:2521.9px;top:299.7px;width:1.6px;height:0.9px;background:#8a8a8a"></b>
<b style="left:2557.1px;top:299.7px;width:2px;height:0.9px;background:#8a8a8a"></b>
<p style="left:2510.4px;top:303.2px;font-size:6.3px;color:#d0d0d0;width:12px;text-align:center;line-height:7px">&infin;</p>
<b style="left:2521.9px;top:306.7px;width:1.6px;height:0.9px;background:#8a8a8a"></b>
<b style="left:2557.1px;top:306.7px;width:2px;height:0.9px;background:#8a8a8a"></b>
<b style="left:2508.9px;top:313px;width:53.5px;height:66px;background:#222"></b>
<b style="left:2508.9px;top:313px;width:0.6px;height:66px;background:#111"></b>
<b style="left:2509.9px;top:314px;width:51.5px;height:10px;background:#383838;border-radius:1px"></b>
<svg style="left:2511.9px;top:316.2px;" width="6" height="6"><circle cx="3" cy="3" r="2.3" fill="#e8c050"/></svg>
<p style="left:2518.9px;top:315.9px;font-size:6px;color:#d0d0d0;width:42px;overflow:hidden;letter-spacing:-0.15px">Poly Grid</p>
<b style="left:2509.9px;top:325px;width:51.5px;height:10px;background:#383838;border-radius:1px"></b>
<svg style="left:2511.9px;top:327.2px;" width="6" height="6"><circle cx="3" cy="3" r="2.3" fill="#e8c050"/></svg>
<p style="left:2518.9px;top:326.9px;font-size:6px;color:#d0d0d0;width:42px;overflow:hidden;letter-spacing:-0.15px">Reverb</p>
<b style="left:2509.9px;top:336px;width:51.5px;height:10px;background:#383838;border-radius:1px"></b>
<svg style="left:2511.9px;top:338.2px;" width="6" height="6"><circle cx="3" cy="3" r="2.3" fill="#e8c050"/></svg>
<p style="left:2518.9px;top:337.9px;font-size:6px;color:#d0d0d0;width:42px;overflow:hidden;letter-spacing:-0.15px">Delay+</p>
<b style="left:2509.9px;top:347px;width:51.5px;height:10px;background:#383838;border-radius:1px"></b>
<svg style="left:2511.9px;top:349.2px;" width="6" height="6"><circle cx="3" cy="3" r="2.3" fill="#888"/></svg>
<p style="left:2518.9px;top:348.9px;font-size:6px;color:#9a9a9a;width:42px;overflow:hidden;letter-spacing:-0.15px">Compressor+</p>
<p style="left:2510.4px;top:358.5px;font-size:9px;color:#9a9a9a;line-height:10px">+</p>
<p style="left:2532.4px;top:360.6px;font-size:6px;color:#8a8a8a;width:28px;text-align:right">4.9 ms</p>
<b style="left:2508.9px;top:379px;width:53.5px;height:239px;background:#1b1b1b"></b>
<b style="left:2510.4px;top:381px;width:50.5px;height:12.5px;background:#2a2a2a"></b>
<b style="left:2511.2px;top:381.5px;width:15.5px;height:11.5px;background:#4f4f4f;border-radius:1.5px;box-shadow:inset 0 0 0 0.6px #2c2c2c"></b>
<b style="left:2527.4px;top:381.5px;width:15.5px;height:11.5px;background:#4f4f4f;border-radius:1.5px;box-shadow:inset 0 0 0 0.6px #2c2c2c"></b>
<b style="left:2543.5px;top:381.5px;width:16px;height:11.5px;background:#4f4f4f;border-radius:1.5px;box-shadow:inset 0 0 0 0.6px #2c2c2c"></b>
<svg style="left:2515.4px;top:383.5px;" width="8" height="8"><circle cx="4" cy="4" r="3" fill="#f0f0f0"/></svg>
<p style="left:2527.4px;top:382px;font-size:8.5px;color:#e8e8e8;width:15.5px;text-align:center;line-height:10px">S</p>
<p style="left:2543.5px;top:382px;font-size:8.5px;color:#e8e8e8;width:16px;text-align:center;line-height:10px">M</p>
<b style="left:2510.4px;top:395.5px;width:50.5px;height:12.5px;background:#141414;border-radius:1px;box-shadow:inset 0 0 0 0.7px #2e2e2e"></b>
<b style="left:2535.1px;top:397.5px;width:1.3px;height:9px;background:#d07030"></b>
<b style="left:2510.4px;top:409.5px;width:50.5px;height:11.5px;background:#161616;box-shadow:inset 0 -0.7px 0 #333"></b>
<p style="left:2511.9px;top:410.8px;font-size:6px;color:#9a9a9a;line-height:8px">-5.3</p>
<p style="left:2509.9px;top:410.8px;font-size:6px;color:#e07840;width:49.5px;text-align:right;line-height:8px;letter-spacing:-0.2px">-6.0 dB</p>
<b style="left:2510.4px;top:421px;width:50.5px;height:183px;background:#171717"></b>
<b style="left:2507.9px;top:379px;width:2px;height:225px;background:#343434"></b>
<b style="left:2513.4px;top:467px;width:44.5px;height:133.5px;background:#553a25;box-shadow:inset 0 1.3px 0 #9a5e38"></b>
<b style="left:2509.4px;top:604.3px;width:52.5px;height:3.8px;background:#d65a3c"></b>
<b style="left:2562.4px;top:146.8px;width:53px;height:38.8px;background:#a88e70"></b>
<p style="left:2562.4px;top:158.2px;font-size:7.3px;color:#2e2418;width:53.5px;text-align:center;letter-spacing:-0.2px">Bass Dist</p>
<p style="left:2562.4px;top:167.2px;font-size:7.3px;color:#2e2418;width:53.5px;text-align:center;letter-spacing:-0.2px">Release</p>
<b style="left:2562.4px;top:185.6px;width:53.5px;height:127.4px;background:#191919"></b>
<b style="left:2577.2px;top:188.7px;width:15.3px;height:121.3px;background:#2b2b2b"></b>
<b style="left:2593.8px;top:188.7px;width:15.3px;height:121.3px;background:#2b2b2b"></b>
<p style="left:2563.9px;top:199.2px;font-size:6.3px;color:#d0d0d0;width:12px;text-align:center;line-height:7px">0</p>
<b style="left:2575.4px;top:202.7px;width:1.6px;height:0.9px;background:#8a8a8a"></b>
<b style="left:2610.7px;top:202.7px;width:2px;height:0.9px;background:#8a8a8a"></b>
<p style="left:2563.9px;top:214.8px;font-size:6.3px;color:#d0d0d0;width:12px;text-align:center;line-height:7px">6</p>
<b style="left:2575.4px;top:218.3px;width:1.6px;height:0.9px;background:#8a8a8a"></b>
<b style="left:2610.7px;top:218.3px;width:2px;height:0.9px;background:#8a8a8a"></b>
<p style="left:2563.9px;top:230.8px;font-size:6.3px;color:#d0d0d0;width:12px;text-align:center;line-height:7px">12</p>
<b style="left:2575.4px;top:234.3px;width:1.6px;height:0.9px;background:#8a8a8a"></b>
<b style="left:2610.7px;top:234.3px;width:2px;height:0.9px;background:#8a8a8a"></b>
<p style="left:2563.9px;top:245.2px;font-size:6.3px;color:#d0d0d0;width:12px;text-align:center;line-height:7px">18</p>
<b style="left:2575.4px;top:248.7px;width:1.6px;height:0.9px;background:#8a8a8a"></b>
<b style="left:2610.7px;top:248.7px;width:2px;height:0.9px;background:#8a8a8a"></b>
<p style="left:2563.9px;top:257.2px;font-size:6.3px;color:#d0d0d0;width:12px;text-align:center;line-height:7px">24</p>
<b style="left:2575.4px;top:260.7px;width:1.6px;height:0.9px;background:#8a8a8a"></b>
<b style="left:2610.7px;top:260.7px;width:2px;height:0.9px;background:#8a8a8a"></b>
<p style="left:2563.9px;top:268.6px;font-size:6.3px;color:#d0d0d0;width:12px;text-align:center;line-height:7px">30</p>
<b style="left:2575.4px;top:272.1px;width:1.6px;height:0.9px;background:#8a8a8a"></b>
<b style="left:2610.7px;top:272.1px;width:2px;height:0.9px;background:#8a8a8a"></b>
<p style="left:2563.9px;top:277.2px;font-size:6.3px;color:#d0d0d0;width:12px;text-align:center;line-height:7px">36</p>
<b style="left:2575.4px;top:280.7px;width:1.6px;height:0.9px;background:#8a8a8a"></b>
<b style="left:2610.7px;top:280.7px;width:2px;height:0.9px;background:#8a8a8a"></b>
<p style="left:2563.9px;top:289.6px;font-size:6.3px;color:#d0d0d0;width:12px;text-align:center;line-height:7px">48</p>
<b style="left:2575.4px;top:293.1px;width:1.6px;height:0.9px;background:#8a8a8a"></b>
<b style="left:2610.7px;top:293.1px;width:2px;height:0.9px;background:#8a8a8a"></b>
<p style="left:2563.9px;top:296.2px;font-size:6.3px;color:#d0d0d0;width:12px;text-align:center;line-height:7px">60</p>
<b style="left:2575.4px;top:299.7px;width:1.6px;height:0.9px;background:#8a8a8a"></b>
<b style="left:2610.7px;top:299.7px;width:2px;height:0.9px;background:#8a8a8a"></b>
<p style="left:2563.9px;top:303.2px;font-size:6.3px;color:#d0d0d0;width:12px;text-align:center;line-height:7px">&infin;</p>
<b style="left:2575.4px;top:306.7px;width:1.6px;height:0.9px;background:#8a8a8a"></b>
<b style="left:2610.7px;top:306.7px;width:2px;height:0.9px;background:#8a8a8a"></b>
<b style="left:2562.4px;top:313px;width:53.5px;height:66px;background:#222"></b>
<b style="left:2562.4px;top:313px;width:0.6px;height:66px;background:#111"></b>
<b style="left:2563.4px;top:314px;width:51.5px;height:10px;background:#383838;border-radius:1px"></b>
<svg style="left:2565.4px;top:316px;" width="6" height="6"><path d="M4.5 0.5 A3 3 0 1 0 5.5 5.2 A2.3 2.3 0 1 1 4.5 0.5z" fill="#e8c050"/></svg>
<p style="left:2572.4px;top:315.9px;font-size:6px;color:#d0d0d0;width:42px;overflow:hidden;letter-spacing:-0.15px">Polysynth</p>
<p style="left:2563.9px;top:325.5px;font-size:9px;color:#9a9a9a;line-height:10px">+</p>
<p style="left:2586px;top:327.6px;font-size:6px;color:#8a8a8a;width:28px;text-align:right">0.5 ms</p>
<b style="left:2562.4px;top:379px;width:53.5px;height:239px;background:#1b1b1b"></b>
<b style="left:2563.9px;top:381px;width:50.5px;height:12.5px;background:#2a2a2a"></b>
<b style="left:2564.8px;top:381.5px;width:15.5px;height:11.5px;background:#4f4f4f;border-radius:1.5px;box-shadow:inset 0 0 0 0.6px #2c2c2c"></b>
<b style="left:2580.9px;top:381.5px;width:15.5px;height:11.5px;background:#4f4f4f;border-radius:1.5px;box-shadow:inset 0 0 0 0.6px #2c2c2c"></b>
<b style="left:2597px;top:381.5px;width:16px;height:11.5px;background:#4f4f4f;border-radius:1.5px;box-shadow:inset 0 0 0 0.6px #2c2c2c"></b>
<svg style="left:2568.9px;top:383.5px;" width="8" height="8"><circle cx="4" cy="4" r="3" fill="#f0f0f0"/></svg>
<p style="left:2580.9px;top:382px;font-size:8.5px;color:#e8e8e8;width:15.5px;text-align:center;line-height:10px">S</p>
<p style="left:2597px;top:382px;font-size:8.5px;color:#e8e8e8;width:16px;text-align:center;line-height:10px">M</p>
<b style="left:2563.9px;top:395.5px;width:50.5px;height:12.5px;background:#141414;border-radius:1px;box-shadow:inset 0 0 0 0.7px #2e2e2e"></b>
<b style="left:2588.6px;top:397.5px;width:1.3px;height:9px;background:#d07030"></b>
<b style="left:2563.9px;top:409.5px;width:50.5px;height:11.5px;background:#161616;box-shadow:inset 0 -0.7px 0 #333"></b>
<p style="left:2565.4px;top:410.8px;font-size:6px;color:#9a9a9a;line-height:8px">-19.6</p>
<p style="left:2563.4px;top:410.8px;font-size:6px;color:#e07840;width:49.5px;text-align:right;line-height:8px;letter-spacing:-0.2px">-6.0 dB</p>
<b style="left:2563.9px;top:421px;width:50.5px;height:183px;background:#171717"></b>
<b style="left:2561.4px;top:379px;width:2px;height:225px;background:#343434"></b>
<b style="left:2566.9px;top:467px;width:44.5px;height:133.5px;background:#553a25;box-shadow:inset 0 1.3px 0 #9a5e38"></b>
<b style="left:2562.9px;top:604.3px;width:52.5px;height:3.8px;background:#a88e70"></b>
<b style="left:2616px;top:146.8px;width:53px;height:38.8px;background:#5257a8"></b>
<p style="left:2613px;top:162.7px;font-size:7.2px;color:#f0f0ff;width:59.5px;text-align:center;letter-spacing:-0.35px">CHIME_ld_meg</p>
<b style="left:2616px;top:185.6px;width:53.5px;height:127.4px;background:#191919"></b>
<b style="left:2630.8px;top:188.7px;width:15.3px;height:121.3px;background:#2b2b2b"></b>
<b style="left:2647.3px;top:188.7px;width:15.3px;height:121.3px;background:#2b2b2b"></b>
<p style="left:2617.5px;top:199.2px;font-size:6.3px;color:#d0d0d0;width:12px;text-align:center;line-height:7px">0</p>
<b style="left:2629px;top:202.7px;width:1.6px;height:0.9px;background:#8a8a8a"></b>
<b style="left:2664.2px;top:202.7px;width:2px;height:0.9px;background:#8a8a8a"></b>
<p style="left:2617.5px;top:214.8px;font-size:6.3px;color:#d0d0d0;width:12px;text-align:center;line-height:7px">6</p>
<b style="left:2629px;top:218.3px;width:1.6px;height:0.9px;background:#8a8a8a"></b>
<b style="left:2664.2px;top:218.3px;width:2px;height:0.9px;background:#8a8a8a"></b>
<p style="left:2617.5px;top:230.8px;font-size:6.3px;color:#d0d0d0;width:12px;text-align:center;line-height:7px">12</p>
<b style="left:2629px;top:234.3px;width:1.6px;height:0.9px;background:#8a8a8a"></b>
<b style="left:2664.2px;top:234.3px;width:2px;height:0.9px;background:#8a8a8a"></b>
<p style="left:2617.5px;top:245.2px;font-size:6.3px;color:#d0d0d0;width:12px;text-align:center;line-height:7px">18</p>
<b style="left:2629px;top:248.7px;width:1.6px;height:0.9px;background:#8a8a8a"></b>
<b style="left:2664.2px;top:248.7px;width:2px;height:0.9px;background:#8a8a8a"></b>
<p style="left:2617.5px;top:257.2px;font-size:6.3px;color:#d0d0d0;width:12px;text-align:center;line-height:7px">24</p>
<b style="left:2629px;top:260.7px;width:1.6px;height:0.9px;background:#8a8a8a"></b>
<b style="left:2664.2px;top:260.7px;width:2px;height:0.9px;background:#8a8a8a"></b>
<p style="left:2617.5px;top:268.6px;font-size:6.3px;color:#d0d0d0;width:12px;text-align:center;line-height:7px">30</p>
<b style="left:2629px;top:272.1px;width:1.6px;height:0.9px;background:#8a8a8a"></b>
<b style="left:2664.2px;top:272.1px;width:2px;height:0.9px;background:#8a8a8a"></b>
<p style="left:2617.5px;top:277.2px;font-size:6.3px;color:#d0d0d0;width:12px;text-align:center;line-height:7px">36</p>
<b style="left:2629px;top:280.7px;width:1.6px;height:0.9px;background:#8a8a8a"></b>
<b style="left:2664.2px;top:280.7px;width:2px;height:0.9px;background:#8a8a8a"></b>
<p style="left:2617.5px;top:289.6px;font-size:6.3px;color:#d0d0d0;width:12px;text-align:center;line-height:7px">48</p>
<b style="left:2629px;top:293.1px;width:1.6px;height:0.9px;background:#8a8a8a"></b>
<b style="left:2664.2px;top:293.1px;width:2px;height:0.9px;background:#8a8a8a"></b>
<p style="left:2617.5px;top:296.2px;font-size:6.3px;color:#d0d0d0;width:12px;text-align:center;line-height:7px">60</p>
<b style="left:2629px;top:299.7px;width:1.6px;height:0.9px;background:#8a8a8a"></b>
<b style="left:2664.2px;top:299.7px;width:2px;height:0.9px;background:#8a8a8a"></b>
<p style="left:2617.5px;top:303.2px;font-size:6.3px;color:#d0d0d0;width:12px;text-align:center;line-height:7px">&infin;</p>
<b style="left:2629px;top:306.7px;width:1.6px;height:0.9px;background:#8a8a8a"></b>
<b style="left:2664.2px;top:306.7px;width:2px;height:0.9px;background:#8a8a8a"></b>
<b style="left:2616px;top:313px;width:53.5px;height:66px;background:#222"></b>
<b style="left:2616px;top:313px;width:0.6px;height:66px;background:#111"></b>
<b style="left:2617px;top:314px;width:51.5px;height:10px;background:#383838;border-radius:1px"></b>
<svg style="left:2619px;top:316px;" width="6" height="6"><path d="M4.5 0.5 A3 3 0 1 0 5.5 5.2 A2.3 2.3 0 1 1 4.5 0.5z" fill="#e8c050"/></svg>
<p style="left:2626px;top:315.9px;font-size:6px;color:#d0d0d0;width:42px;overflow:hidden;letter-spacing:-0.15px">Sampler</p>
<b style="left:2617px;top:325px;width:51.5px;height:10px;background:#383838;border-radius:1px"></b>
<svg style="left:2619px;top:327px;" width="6" height="6"><path d="M4.5 0.5 A3 3 0 1 0 5.5 5.2 A2.3 2.3 0 1 1 4.5 0.5z" fill="#e8c050"/></svg>
<p style="left:2626px;top:326.9px;font-size:6px;color:#d0d0d0;width:42px;overflow:hidden;letter-spacing:-0.15px">Chorus+</p>
<p style="left:2617.5px;top:336.5px;font-size:9px;color:#9a9a9a;line-height:10px">+</p>
<b style="left:2616px;top:379px;width:53.5px;height:239px;background:#1b1b1b"></b>
<b style="left:2617.5px;top:381px;width:50.5px;height:12.5px;background:#2a2a2a"></b>
<b style="left:2618.3px;top:381.5px;width:15.5px;height:11.5px;background:#4f4f4f;border-radius:1.5px;box-shadow:inset 0 0 0 0.6px #2c2c2c"></b>
<b style="left:2634.5px;top:381.5px;width:15.5px;height:11.5px;background:#4f4f4f;border-radius:1.5px;box-shadow:inset 0 0 0 0.6px #2c2c2c"></b>
<b style="left:2650.6px;top:381.5px;width:16px;height:11.5px;background:#4f4f4f;border-radius:1.5px;box-shadow:inset 0 0 0 0.6px #2c2c2c"></b>
<svg style="left:2622.5px;top:383.5px;" width="8" height="8"><circle cx="4" cy="4" r="3" fill="#f0f0f0"/></svg>
<p style="left:2634.5px;top:382px;font-size:8.5px;color:#e8e8e8;width:15.5px;text-align:center;line-height:10px">S</p>
<p style="left:2650.6px;top:382px;font-size:8.5px;color:#e8e8e8;width:16px;text-align:center;line-height:10px">M</p>
<b style="left:2617.5px;top:395.5px;width:50.5px;height:12.5px;background:#141414;border-radius:1px;box-shadow:inset 0 0 0 0.7px #2e2e2e"></b>
<b style="left:2642.2px;top:397.5px;width:1.3px;height:9px;background:#d07030"></b>
<b style="left:2617.5px;top:409.5px;width:50.5px;height:11.5px;background:#161616;box-shadow:inset 0 -0.7px 0 #333"></b>
<p style="left:2617px;top:410.8px;font-size:6px;color:#e07840;width:49.5px;text-align:right;line-height:8px;letter-spacing:-0.2px">-6.0 dB</p>
<b style="left:2617.5px;top:421px;width:50.5px;height:183px;background:#171717"></b>
<b style="left:2615px;top:379px;width:2px;height:225px;background:#343434"></b>
<b style="left:2620.5px;top:467px;width:44.5px;height:133.5px;background:#553a25;box-shadow:inset 0 1.3px 0 #9a5e38"></b>
<b style="left:2616.5px;top:604.3px;width:52.5px;height:3.8px;background:#5257a8"></b>
<b style="left:2669.5px;top:146.8px;width:53px;height:38.8px;background:#c8a86a"></b>
<p style="left:2669.5px;top:158.2px;font-size:7.3px;color:#3a2a10;width:53.5px;text-align:center;letter-spacing:-0.2px">Galactic</p>
<p style="left:2669.5px;top:167.2px;font-size:7.3px;color:#3a2a10;width:53.5px;text-align:center;letter-spacing:-0.2px">Drift</p>
<b style="left:2669.5px;top:185.6px;width:53.5px;height:127.4px;background:#191919"></b>
<b style="left:2684.3px;top:188.7px;width:15.3px;height:121.3px;background:#2b2b2b"></b>
<b style="left:2684.3px;top:270.9px;width:15.3px;height:39.1px;background:linear-gradient(180deg,#7ab858,#3e7e34)"></b>
<b style="left:2684.3px;top:258px;width:15.3px;height:1.3px;background:#8ab050"></b>
<b style="left:2700.8px;top:188.7px;width:15.3px;height:121.3px;background:#2b2b2b"></b>
<b style="left:2700.8px;top:274.5px;width:15.3px;height:35.5px;background:linear-gradient(180deg,#7ab858,#3e7e34)"></b>
<b style="left:2700.8px;top:267.6px;width:15.3px;height:1.3px;background:#8ab050"></b>
<p style="left:2671px;top:199.2px;font-size:6.3px;color:#d0d0d0;width:12px;text-align:center;line-height:7px">0</p>
<b style="left:2682.5px;top:202.7px;width:1.6px;height:0.9px;background:#8a8a8a"></b>
<b style="left:2717.8px;top:202.7px;width:2px;height:0.9px;background:#8a8a8a"></b>
<p style="left:2671px;top:214.8px;font-size:6.3px;color:#d0d0d0;width:12px;text-align:center;line-height:7px">6</p>
<b style="left:2682.5px;top:218.3px;width:1.6px;height:0.9px;background:#8a8a8a"></b>
<b style="left:2717.8px;top:218.3px;width:2px;height:0.9px;background:#8a8a8a"></b>
<p style="left:2671px;top:230.8px;font-size:6.3px;color:#d0d0d0;width:12px;text-align:center;line-height:7px">12</p>
<b style="left:2682.5px;top:234.3px;width:1.6px;height:0.9px;background:#8a8a8a"></b>
<b style="left:2717.8px;top:234.3px;width:2px;height:0.9px;background:#8a8a8a"></b>
<p style="left:2671px;top:245.2px;font-size:6.3px;color:#d0d0d0;width:12px;text-align:center;line-height:7px">18</p>
<b style="left:2682.5px;top:248.7px;width:1.6px;height:0.9px;background:#8a8a8a"></b>
<b style="left:2717.8px;top:248.7px;width:2px;height:0.9px;background:#8a8a8a"></b>
<p style="left:2671px;top:257.2px;font-size:6.3px;color:#d0d0d0;width:12px;text-align:center;line-height:7px">24</p>
<b style="left:2682.5px;top:260.7px;width:1.6px;height:0.9px;background:#8a8a8a"></b>
<b style="left:2717.8px;top:260.7px;width:2px;height:0.9px;background:#8a8a8a"></b>
<p style="left:2671px;top:268.6px;font-size:6.3px;color:#d0d0d0;width:12px;text-align:center;line-height:7px">30</p>
<b style="left:2682.5px;top:272.1px;width:1.6px;height:0.9px;background:#8a8a8a"></b>
<b style="left:2717.8px;top:272.1px;width:2px;height:0.9px;background:#8a8a8a"></b>
<p style="left:2671px;top:277.2px;font-size:6.3px;color:#d0d0d0;width:12px;text-align:center;line-height:7px">36</p>
<b style="left:2682.5px;top:280.7px;width:1.6px;height:0.9px;background:#8a8a8a"></b>
<b style="left:2717.8px;top:280.7px;width:2px;height:0.9px;background:#8a8a8a"></b>
<p style="left:2671px;top:289.6px;font-size:6.3px;color:#d0d0d0;width:12px;text-align:center;line-height:7px">48</p>
<b style="left:2682.5px;top:293.1px;width:1.6px;height:0.9px;background:#8a8a8a"></b>
<b style="left:2717.8px;top:293.1px;width:2px;height:0.9px;background:#8a8a8a"></b>
<p style="left:2671px;top:296.2px;font-size:6.3px;color:#d0d0d0;width:12px;text-align:center;line-height:7px">60</p>
<b style="left:2682.5px;top:299.7px;width:1.6px;height:0.9px;background:#8a8a8a"></b>
<b style="left:2717.8px;top:299.7px;width:2px;height:0.9px;background:#8a8a8a"></b>
<p style="left:2671px;top:303.2px;font-size:6.3px;color:#d0d0d0;width:12px;text-align:center;line-height:7px">&infin;</p>
<b style="left:2682.5px;top:306.7px;width:1.6px;height:0.9px;background:#8a8a8a"></b>
<b style="left:2717.8px;top:306.7px;width:2px;height:0.9px;background:#8a8a8a"></b>
<b style="left:2669.5px;top:313px;width:53.5px;height:66px;background:#222"></b>
<b style="left:2669.5px;top:313px;width:0.6px;height:66px;background:#111"></b>
<b style="left:2670.5px;top:314px;width:51.5px;height:10px;background:#383838;border-radius:1px"></b>
<svg style="left:2672.5px;top:316.2px;" width="6" height="6"><circle cx="3" cy="3" r="2.3" fill="#e8c050"/></svg>
<p style="left:2679.5px;top:315.9px;font-size:6px;color:#d0d0d0;width:42px;overflow:hidden;letter-spacing:-0.15px">FM-4</p>
<b style="left:2670.5px;top:325px;width:51.5px;height:10px;background:#383838;border-radius:1px"></b>
<svg style="left:2672.5px;top:327.2px;" width="6" height="6"><circle cx="3" cy="3" r="2.3" fill="#e8c050"/></svg>
<p style="left:2679.5px;top:326.9px;font-size:6px;color:#d0d0d0;width:42px;overflow:hidden;letter-spacing:-0.15px">Delay+</p>
<p style="left:2671px;top:336.5px;font-size:9px;color:#9a9a9a;line-height:10px">+</p>
<b style="left:2669.5px;top:379px;width:53.5px;height:239px;background:#1b1b1b"></b>
<b style="left:2671px;top:381px;width:50.5px;height:12.5px;background:#2a2a2a"></b>
<b style="left:2671.8px;top:381.5px;width:15.5px;height:11.5px;background:#4f4f4f;border-radius:1.5px;box-shadow:inset 0 0 0 0.6px #2c2c2c"></b>
<b style="left:2688px;top:381.5px;width:15.5px;height:11.5px;background:#4f4f4f;border-radius:1.5px;box-shadow:inset 0 0 0 0.6px #2c2c2c"></b>
<b style="left:2704.1px;top:381.5px;width:16px;height:11.5px;background:#4f4f4f;border-radius:1.5px;box-shadow:inset 0 0 0 0.6px #2c2c2c"></b>
<svg style="left:2676px;top:383.5px;" width="8" height="8"><circle cx="4" cy="4" r="3" fill="#f0f0f0"/></svg>
<p style="left:2688px;top:382px;font-size:8.5px;color:#e8e8e8;width:15.5px;text-align:center;line-height:10px">S</p>
<p style="left:2704.1px;top:382px;font-size:8.5px;color:#e8e8e8;width:16px;text-align:center;line-height:10px">M</p>
<b style="left:2671px;top:395.5px;width:50.5px;height:12.5px;background:#141414;border-radius:1px;box-shadow:inset 0 0 0 0.7px #2e2e2e"></b>
<b style="left:2695.7px;top:397.5px;width:1.3px;height:9px;background:#d07030"></b>
<b style="left:2671px;top:409.5px;width:50.5px;height:11.5px;background:#161616;box-shadow:inset 0 -0.7px 0 #333"></b>
<p style="left:2672.5px;top:410.8px;font-size:6px;color:#9a9a9a;line-height:8px">-13.3</p>
<p style="left:2670.5px;top:410.8px;font-size:6px;color:#e07840;width:49.5px;text-align:right;line-height:8px;letter-spacing:-0.2px">-6.0 dB</p>
<b style="left:2671px;top:421px;width:50.5px;height:183px;background:#171717"></b>
<b style="left:2668.5px;top:379px;width:2px;height:225px;background:#343434"></b>
<b style="left:2674px;top:467px;width:44.5px;height:133.5px;background:#553a25;box-shadow:inset 0 1.3px 0 #9a5e38"></b>
<b style="left:2670px;top:604.3px;width:52.5px;height:3.8px;background:#c8a86a"></b>
<b style="left:2723.1px;top:146.8px;width:53px;height:38.8px;background:#9cb070"></b>
<p style="left:2723.1px;top:158.2px;font-size:7.3px;color:#2a3418;width:53.5px;text-align:center;letter-spacing:-0.2px">Distorted</p>
<p style="left:2723.1px;top:167.2px;font-size:7.3px;color:#2a3418;width:53.5px;text-align:center;letter-spacing:-0.2px">Drums</p>
<b style="left:2723.1px;top:185.6px;width:53.5px;height:127.4px;background:#191919"></b>
<b style="left:2737.9px;top:188.7px;width:15.3px;height:121.3px;background:#2b2b2b"></b>
<b style="left:2754.4px;top:188.7px;width:15.3px;height:121.3px;background:#2b2b2b"></b>
<p style="left:2724.6px;top:199.2px;font-size:6.3px;color:#d0d0d0;width:12px;text-align:center;line-height:7px">0</p>
<b style="left:2736.1px;top:202.7px;width:1.6px;height:0.9px;background:#8a8a8a"></b>
<b style="left:2771.3px;top:202.7px;width:2px;height:0.9px;background:#8a8a8a"></b>
<p style="left:2724.6px;top:214.8px;font-size:6.3px;color:#d0d0d0;width:12px;text-align:center;line-height:7px">6</p>
<b style="left:2736.1px;top:218.3px;width:1.6px;height:0.9px;background:#8a8a8a"></b>
<b style="left:2771.3px;top:218.3px;width:2px;height:0.9px;background:#8a8a8a"></b>
<p style="left:2724.6px;top:230.8px;font-size:6.3px;color:#d0d0d0;width:12px;text-align:center;line-height:7px">12</p>
<b style="left:2736.1px;top:234.3px;width:1.6px;height:0.9px;background:#8a8a8a"></b>
<b style="left:2771.3px;top:234.3px;width:2px;height:0.9px;background:#8a8a8a"></b>
<p style="left:2724.6px;top:245.2px;font-size:6.3px;color:#d0d0d0;width:12px;text-align:center;line-height:7px">18</p>
<b style="left:2736.1px;top:248.7px;width:1.6px;height:0.9px;background:#8a8a8a"></b>
<b style="left:2771.3px;top:248.7px;width:2px;height:0.9px;background:#8a8a8a"></b>
<p style="left:2724.6px;top:257.2px;font-size:6.3px;color:#d0d0d0;width:12px;text-align:center;line-height:7px">24</p>
<b style="left:2736.1px;top:260.7px;width:1.6px;height:0.9px;background:#8a8a8a"></b>
<b style="left:2771.3px;top:260.7px;width:2px;height:0.9px;background:#8a8a8a"></b>
<p style="left:2724.6px;top:268.6px;font-size:6.3px;color:#d0d0d0;width:12px;text-align:center;line-height:7px">30</p>
<b style="left:2736.1px;top:272.1px;width:1.6px;height:0.9px;background:#8a8a8a"></b>
<b style="left:2771.3px;top:272.1px;width:2px;height:0.9px;background:#8a8a8a"></b>
<p style="left:2724.6px;top:277.2px;font-size:6.3px;color:#d0d0d0;width:12px;text-align:center;line-height:7px">36</p>
<b style="left:2736.1px;top:280.7px;width:1.6px;height:0.9px;background:#8a8a8a"></b>
<b style="left:2771.3px;top:280.7px;width:2px;height:0.9px;background:#8a8a8a"></b>
<p style="left:2724.6px;top:289.6px;font-size:6.3px;color:#d0d0d0;width:12px;text-align:center;line-height:7px">48</p>
<b style="left:2736.1px;top:293.1px;width:1.6px;height:0.9px;background:#8a8a8a"></b>
<b style="left:2771.3px;top:293.1px;width:2px;height:0.9px;background:#8a8a8a"></b>
<p style="left:2724.6px;top:296.2px;font-size:6.3px;color:#d0d0d0;width:12px;text-align:center;line-height:7px">60</p>
<b style="left:2736.1px;top:299.7px;width:1.6px;height:0.9px;background:#8a8a8a"></b>
<b style="left:2771.3px;top:299.7px;width:2px;height:0.9px;background:#8a8a8a"></b>
<p style="left:2724.6px;top:303.2px;font-size:6.3px;color:#d0d0d0;width:12px;text-align:center;line-height:7px">&infin;</p>
<b style="left:2736.1px;top:306.7px;width:1.6px;height:0.9px;background:#8a8a8a"></b>
<b style="left:2771.3px;top:306.7px;width:2px;height:0.9px;background:#8a8a8a"></b>
<b style="left:2723.1px;top:313px;width:53.5px;height:66px;background:#222"></b>
<b style="left:2723.1px;top:313px;width:0.6px;height:66px;background:#111"></b>
<b style="left:2724.1px;top:314px;width:51.5px;height:10px;background:#383838;border-radius:1px"></b>
<svg style="left:2726.1px;top:316px;" width="6" height="6"><path d="M4.5 0.5 A3 3 0 1 0 5.5 5.2 A2.3 2.3 0 1 1 4.5 0.5z" fill="#e8c050"/></svg>
<p style="left:2733.1px;top:315.9px;font-size:6px;color:#d0d0d0;width:42px;overflow:hidden;letter-spacing:-0.15px">FM-4</p>
<b style="left:2724.1px;top:325px;width:51.5px;height:10px;background:#383838;border-radius:1px"></b>
<svg style="left:2726.1px;top:327px;" width="6" height="6"><path d="M4.5 0.5 A3 3 0 1 0 5.5 5.2 A2.3 2.3 0 1 1 4.5 0.5z" fill="#e8c050"/></svg>
<p style="left:2733.1px;top:326.9px;font-size:6px;color:#d0d0d0;width:42px;overflow:hidden;letter-spacing:-0.15px">Bit-8</p>
<b style="left:2724.1px;top:336px;width:51.5px;height:10px;background:#383838;border-radius:1px"></b>
<svg style="left:2726.1px;top:338px;" width="6" height="6"><path d="M4.5 0.5 A3 3 0 1 0 5.5 5.2 A2.3 2.3 0 1 1 4.5 0.5z" fill="#e8c050"/></svg>
<p style="left:2733.1px;top:337.9px;font-size:6px;color:#d0d0d0;width:42px;overflow:hidden;letter-spacing:-0.15px">Transient Control</p>
<b style="left:2724.1px;top:347px;width:51.5px;height:10px;background:#383838;border-radius:1px"></b>
<svg style="left:2726.1px;top:349px;" width="6" height="6"><path d="M4.5 0.5 A3 3 0 1 0 5.5 5.2 A2.3 2.3 0 1 1 4.5 0.5z" fill="#e8c050"/></svg>
<p style="left:2733.1px;top:348.9px;font-size:6px;color:#d0d0d0;width:42px;overflow:hidden;letter-spacing:-0.15px">Multiband FX-3</p>
<p style="left:2724.6px;top:358.5px;font-size:9px;color:#9a9a9a;line-height:10px">+</p>
<p style="left:2746.7px;top:360.6px;font-size:6px;color:#8a8a8a;width:28px;text-align:right">6.7 ms</p>
<b style="left:2723.1px;top:379px;width:53.5px;height:239px;background:#1b1b1b"></b>
<b style="left:2724.6px;top:381px;width:50.5px;height:12.5px;background:#2a2a2a"></b>
<b style="left:2725.4px;top:381.5px;width:15.5px;height:11.5px;background:#4f4f4f;border-radius:1.5px;box-shadow:inset 0 0 0 0.6px #2c2c2c"></b>
<b style="left:2741.6px;top:381.5px;width:15.5px;height:11.5px;background:#4f4f4f;border-radius:1.5px;box-shadow:inset 0 0 0 0.6px #2c2c2c"></b>
<b style="left:2757.7px;top:381.5px;width:16px;height:11.5px;background:#4f4f4f;border-radius:1.5px;box-shadow:inset 0 0 0 0.6px #2c2c2c"></b>
<svg style="left:2729.6px;top:383.5px;" width="8" height="8"><circle cx="4" cy="4" r="3" fill="#f0f0f0"/></svg>
<p style="left:2741.6px;top:382px;font-size:8.5px;color:#e8e8e8;width:15.5px;text-align:center;line-height:10px">S</p>
<p style="left:2757.7px;top:382px;font-size:8.5px;color:#e8e8e8;width:16px;text-align:center;line-height:10px">M</p>
<b style="left:2724.6px;top:395.5px;width:50.5px;height:12.5px;background:#141414;border-radius:1px;box-shadow:inset 0 0 0 0.7px #2e2e2e"></b>
<b style="left:2749.3px;top:397.5px;width:1.3px;height:9px;background:#d07030"></b>
<b style="left:2724.6px;top:409.5px;width:50.5px;height:11.5px;background:#161616;box-shadow:inset 0 -0.7px 0 #333"></b>
<p style="left:2724.1px;top:410.8px;font-size:6px;color:#e07840;width:49.5px;text-align:right;line-height:8px;letter-spacing:-0.2px">-6.0 dB</p>
<b style="left:2724.6px;top:421px;width:50.5px;height:183px;background:#171717"></b>
<b style="left:2722.1px;top:379px;width:2px;height:225px;background:#343434"></b>
<b style="left:2727.6px;top:467px;width:44.5px;height:133.5px;background:#553a25;box-shadow:inset 0 1.3px 0 #9a5e38"></b>
<b style="left:2723.6px;top:604.3px;width:52.5px;height:3.8px;background:#9cb070"></b>
<b style="left:2776.6px;top:146.8px;width:53px;height:38.8px;background:#c8a86a"></b>
<p style="left:2776.6px;top:158.2px;font-size:7.3px;color:#3a2a10;width:53.5px;text-align:center;letter-spacing:-0.2px">WG_impact_l</p>
<p style="left:2776.6px;top:167.2px;font-size:7.3px;color:#3a2a10;width:53.5px;text-align:center;letter-spacing:-0.2px">fo_down_128</p>
<b style="left:2776.6px;top:185.6px;width:53.5px;height:127.4px;background:#191919"></b>
<b style="left:2791.4px;top:188.7px;width:15.3px;height:121.3px;background:#2b2b2b"></b>
<b style="left:2807.9px;top:188.7px;width:15.3px;height:121.3px;background:#2b2b2b"></b>
<p style="left:2778.1px;top:199.2px;font-size:6.3px;color:#d0d0d0;width:12px;text-align:center;line-height:7px">0</p>
<b style="left:2789.6px;top:202.7px;width:1.6px;height:0.9px;background:#8a8a8a"></b>
<b style="left:2824.9px;top:202.7px;width:2px;height:0.9px;background:#8a8a8a"></b>
<p style="left:2778.1px;top:214.8px;font-size:6.3px;color:#d0d0d0;width:12px;text-align:center;line-height:7px">6</p>
<b style="left:2789.6px;top:218.3px;width:1.6px;height:0.9px;background:#8a8a8a"></b>
<b style="left:2824.9px;top:218.3px;width:2px;height:0.9px;background:#8a8a8a"></b>
<p style="left:2778.1px;top:230.8px;font-size:6.3px;color:#d0d0d0;width:12px;text-align:center;line-height:7px">12</p>
<b style="left:2789.6px;top:234.3px;width:1.6px;height:0.9px;background:#8a8a8a"></b>
<b style="left:2824.9px;top:234.3px;width:2px;height:0.9px;background:#8a8a8a"></b>
<p style="left:2778.1px;top:245.2px;font-size:6.3px;color:#d0d0d0;width:12px;text-align:center;line-height:7px">18</p>
<b style="left:2789.6px;top:248.7px;width:1.6px;height:0.9px;background:#8a8a8a"></b>
<b style="left:2824.9px;top:248.7px;width:2px;height:0.9px;background:#8a8a8a"></b>
<p style="left:2778.1px;top:257.2px;font-size:6.3px;color:#d0d0d0;width:12px;text-align:center;line-height:7px">24</p>
<b style="left:2789.6px;top:260.7px;width:1.6px;height:0.9px;background:#8a8a8a"></b>
<b style="left:2824.9px;top:260.7px;width:2px;height:0.9px;background:#8a8a8a"></b>
<p style="left:2778.1px;top:268.6px;font-size:6.3px;color:#d0d0d0;width:12px;text-align:center;line-height:7px">30</p>
<b style="left:2789.6px;top:272.1px;width:1.6px;height:0.9px;background:#8a8a8a"></b>
<b style="left:2824.9px;top:272.1px;width:2px;height:0.9px;background:#8a8a8a"></b>
<p style="left:2778.1px;top:277.2px;font-size:6.3px;color:#d0d0d0;width:12px;text-align:center;line-height:7px">36</p>
<b style="left:2789.6px;top:280.7px;width:1.6px;height:0.9px;background:#8a8a8a"></b>
<b style="left:2824.9px;top:280.7px;width:2px;height:0.9px;background:#8a8a8a"></b>
<p style="left:2778.1px;top:289.6px;font-size:6.3px;color:#d0d0d0;width:12px;text-align:center;line-height:7px">48</p>
<b style="left:2789.6px;top:293.1px;width:1.6px;height:0.9px;background:#8a8a8a"></b>
<b style="left:2824.9px;top:293.1px;width:2px;height:0.9px;background:#8a8a8a"></b>
<p style="left:2778.1px;top:296.2px;font-size:6.3px;color:#d0d0d0;width:12px;text-align:center;line-height:7px">60</p>
<b style="left:2789.6px;top:299.7px;width:1.6px;height:0.9px;background:#8a8a8a"></b>
<b style="left:2824.9px;top:299.7px;width:2px;height:0.9px;background:#8a8a8a"></b>
<p style="left:2778.1px;top:303.2px;font-size:6.3px;color:#d0d0d0;width:12px;text-align:center;line-height:7px">&infin;</p>
<b style="left:2789.6px;top:306.7px;width:1.6px;height:0.9px;background:#8a8a8a"></b>
<b style="left:2824.9px;top:306.7px;width:2px;height:0.9px;background:#8a8a8a"></b>
<b style="left:2776.6px;top:313px;width:53.5px;height:66px;background:#222"></b>
<b style="left:2776.6px;top:313px;width:0.6px;height:66px;background:#111"></b>
<b style="left:2777.6px;top:314px;width:51.5px;height:10px;background:#383838;border-radius:1px"></b>
<svg style="left:2779.6px;top:316px;" width="6" height="6"><path d="M4.5 0.5 A3 3 0 1 0 5.5 5.2 A2.3 2.3 0 1 1 4.5 0.5z" fill="#e8c050"/></svg>
<p style="left:2786.6px;top:315.9px;font-size:6px;color:#d0d0d0;width:42px;overflow:hidden;letter-spacing:-0.15px">Reverb</p>
<p style="left:2778.1px;top:325.5px;font-size:9px;color:#9a9a9a;line-height:10px">+</p>
<b style="left:2776.6px;top:379px;width:53.5px;height:239px;background:#1b1b1b"></b>
<b style="left:2778.1px;top:381px;width:50.5px;height:12.5px;background:#2a2a2a"></b>
<b style="left:2778.9px;top:381.5px;width:15.5px;height:11.5px;background:#4f4f4f;border-radius:1.5px;box-shadow:inset 0 0 0 0.6px #2c2c2c"></b>
<b style="left:2795.1px;top:381.5px;width:15.5px;height:11.5px;background:#4f4f4f;border-radius:1.5px;box-shadow:inset 0 0 0 0.6px #2c2c2c"></b>
<b style="left:2811.2px;top:381.5px;width:16px;height:11.5px;background:#4f4f4f;border-radius:1.5px;box-shadow:inset 0 0 0 0.6px #2c2c2c"></b>
<svg style="left:2783.1px;top:383.5px;" width="8" height="8"><circle cx="4" cy="4" r="3" fill="#9a9a9a"/></svg>
<p style="left:2795.1px;top:382px;font-size:8.5px;color:#e8e8e8;width:15.5px;text-align:center;line-height:10px">S</p>
<p style="left:2811.2px;top:382px;font-size:8.5px;color:#e8e8e8;width:16px;text-align:center;line-height:10px">M</p>
<b style="left:2778.1px;top:395.5px;width:50.5px;height:12.5px;background:#141414;border-radius:1px;box-shadow:inset 0 0 0 0.7px #2e2e2e"></b>
<b style="left:2802.8px;top:397.5px;width:1.3px;height:9px;background:#d07030"></b>
<b style="left:2778.1px;top:409.5px;width:50.5px;height:11.5px;background:#161616;box-shadow:inset 0 -0.7px 0 #333"></b>
<p style="left:2779.6px;top:410.8px;font-size:6px;color:#9a9a9a;line-height:8px">-26.8</p>
<p style="left:2777.6px;top:410.8px;font-size:6px;color:#e07840;width:49.5px;text-align:right;line-height:8px;letter-spacing:-0.2px">-6.0 dB</p>
<b style="left:2778.1px;top:421px;width:50.5px;height:183px;background:#171717"></b>
<b style="left:2775.6px;top:379px;width:2px;height:225px;background:#343434"></b>
<b style="left:2781.1px;top:467px;width:44.5px;height:133.5px;background:#553a25;box-shadow:inset 0 1.3px 0 #9a5e38"></b>
<b style="left:2777.1px;top:604.3px;width:52.5px;height:3.8px;background:#c8a86a"></b>
<p style="left:2830.2px;top:152.7px;font-size:7.3px;color:#2a3418;width:53.5px;text-align:center;letter-spacing:-0.2px">Ethereal</p>
<p style="left:2830.2px;top:161.7px;font-size:7.3px;color:#2a3418;width:53.5px;text-align:center;letter-spacing:-0.2px">LAYER</p>
<svg style="left:2852px;top:170.2px;" width="11" height="9"><path d="M0.5 1.5 h3.5 l1 1 h5 v6 h-9.5z" fill="#111"/><path d="M0.5 3.5 h10 l-1 5 h-9z" fill="#222"/></svg>
<b style="left:2830.2px;top:185.6px;width:53.5px;height:127.4px;background:#191919"></b>
<b style="left:2845px;top:188.7px;width:15.3px;height:121.3px;background:#2b2b2b"></b>
<b style="left:2845px;top:296.9px;width:15.3px;height:13.1px;background:linear-gradient(180deg,#7ab858,#3e7e34)"></b>
<b style="left:2845px;top:280.6px;width:15.3px;height:1.3px;background:#8ab050"></b>
<b style="left:2861.5px;top:188.7px;width:15.3px;height:121.3px;background:#2b2b2b"></b>
<b style="left:2861.5px;top:296.9px;width:15.3px;height:13.1px;background:linear-gradient(180deg,#7ab858,#3e7e34)"></b>
<b style="left:2861.5px;top:280.6px;width:15.3px;height:1.3px;background:#8ab050"></b>
<p style="left:2831.7px;top:199.2px;font-size:6.3px;color:#d0d0d0;width:12px;text-align:center;line-height:7px">0</p>
<b style="left:2843.2px;top:202.7px;width:1.6px;height:0.9px;background:#8a8a8a"></b>
<b style="left:2878.4px;top:202.7px;width:2px;height:0.9px;background:#8a8a8a"></b>
<p style="left:2831.7px;top:214.8px;font-size:6.3px;color:#d0d0d0;width:12px;text-align:center;line-height:7px">6</p>
<b style="left:2843.2px;top:218.3px;width:1.6px;height:0.9px;background:#8a8a8a"></b>
<b style="left:2878.4px;top:218.3px;width:2px;height:0.9px;background:#8a8a8a"></b>
<p style="left:2831.7px;top:230.8px;font-size:6.3px;color:#d0d0d0;width:12px;text-align:center;line-height:7px">12</p>
<b style="left:2843.2px;top:234.3px;width:1.6px;height:0.9px;background:#8a8a8a"></b>
<b style="left:2878.4px;top:234.3px;width:2px;height:0.9px;background:#8a8a8a"></b>
<p style="left:2831.7px;top:245.2px;font-size:6.3px;color:#d0d0d0;width:12px;text-align:center;line-height:7px">18</p>
<b style="left:2843.2px;top:248.7px;width:1.6px;height:0.9px;background:#8a8a8a"></b>
<b style="left:2878.4px;top:248.7px;width:2px;height:0.9px;background:#8a8a8a"></b>
<p style="left:2831.7px;top:257.2px;font-size:6.3px;color:#d0d0d0;width:12px;text-align:center;line-height:7px">24</p>
<b style="left:2843.2px;top:260.7px;width:1.6px;height:0.9px;background:#8a8a8a"></b>
<b style="left:2878.4px;top:260.7px;width:2px;height:0.9px;background:#8a8a8a"></b>
<p style="left:2831.7px;top:268.6px;font-size:6.3px;color:#d0d0d0;width:12px;text-align:center;line-height:7px">30</p>
<b style="left:2843.2px;top:272.1px;width:1.6px;height:0.9px;background:#8a8a8a"></b>
<b style="left:2878.4px;top:272.1px;width:2px;height:0.9px;background:#8a8a8a"></b>
<p style="left:2831.7px;top:277.2px;font-size:6.3px;color:#d0d0d0;width:12px;text-align:center;line-height:7px">36</p>
<b style="left:2843.2px;top:280.7px;width:1.6px;height:0.9px;background:#8a8a8a"></b>
<b style="left:2878.4px;top:280.7px;width:2px;height:0.9px;background:#8a8a8a"></b>
<p style="left:2831.7px;top:289.6px;font-size:6.3px;color:#d0d0d0;width:12px;text-align:center;line-height:7px">48</p>
<b style="left:2843.2px;top:293.1px;width:1.6px;height:0.9px;background:#8a8a8a"></b>
<b style="left:2878.4px;top:293.1px;width:2px;height:0.9px;background:#8a8a8a"></b>
<p style="left:2831.7px;top:296.2px;font-size:6.3px;color:#d0d0d0;width:12px;text-align:center;line-height:7px">60</p>
<b style="left:2843.2px;top:299.7px;width:1.6px;height:0.9px;background:#8a8a8a"></b>
<b style="left:2878.4px;top:299.7px;width:2px;height:0.9px;background:#8a8a8a"></b>
<p style="left:2831.7px;top:303.2px;font-size:6.3px;color:#d0d0d0;width:12px;text-align:center;line-height:7px">&infin;</p>
<b style="left:2843.2px;top:306.7px;width:1.6px;height:0.9px;background:#8a8a8a"></b>
<b style="left:2878.4px;top:306.7px;width:2px;height:0.9px;background:#8a8a8a"></b>
<b style="left:2830.2px;top:313px;width:53.5px;height:66px;background:#222"></b>
<b style="left:2830.2px;top:313px;width:0.6px;height:66px;background:#111"></b>
<b style="left:2831.2px;top:314px;width:51.5px;height:10px;background:#383838;border-radius:1px"></b>
<svg style="left:2833.2px;top:316.2px;" width="6" height="6"><circle cx="3" cy="3" r="2.3" fill="#e8c050"/></svg>
<p style="left:2840.2px;top:315.9px;font-size:6px;color:#d0d0d0;width:42px;overflow:hidden;letter-spacing:-0.15px">Multiband FX-3</p>
<p style="left:2831.7px;top:325.5px;font-size:9px;color:#9a9a9a;line-height:10px">+</p>
<p style="left:2853.8px;top:327.6px;font-size:6px;color:#8a8a8a;width:28px;text-align:right">0.5 ms</p>
<b style="left:2830.2px;top:379px;width:53.5px;height:239px;background:#1b1b1b"></b>
<b style="left:2831.7px;top:381px;width:50.5px;height:12.5px;background:#2a2a2a"></b>
<b style="left:2832.5px;top:381.5px;width:15.5px;height:11.5px;background:#4f4f4f;border-radius:1.5px;box-shadow:inset 0 0 0 0.6px #2c2c2c"></b>
<b style="left:2848.7px;top:381.5px;width:15.5px;height:11.5px;background:#4f4f4f;border-radius:1.5px;box-shadow:inset 0 0 0 0.6px #2c2c2c"></b>
<b style="left:2864.8px;top:381.5px;width:16px;height:11.5px;background:#4f4f4f;border-radius:1.5px;box-shadow:inset 0 0 0 0.6px #2c2c2c"></b>
<svg style="left:2836.7px;top:383.5px;" width="8" height="8"><circle cx="4" cy="4" r="3" fill="#9a9a9a"/></svg>
<p style="left:2848.7px;top:382px;font-size:8.5px;color:#e8e8e8;width:15.5px;text-align:center;line-height:10px">S</p>
<p style="left:2864.8px;top:382px;font-size:8.5px;color:#e8e8e8;width:16px;text-align:center;line-height:10px">M</p>
<b style="left:2831.7px;top:395.5px;width:50.5px;height:12.5px;background:#141414;border-radius:1px;box-shadow:inset 0 0 0 0.7px #2e2e2e"></b>
<b style="left:2856.4px;top:397.5px;width:1.3px;height:9px;background:#d07030"></b>
<b style="left:2831.7px;top:409.5px;width:50.5px;height:11.5px;background:#161616;box-shadow:inset 0 -0.7px 0 #333"></b>
<p style="left:2833.2px;top:410.8px;font-size:6px;color:#9a9a9a;line-height:8px">-7.3</p>
<p style="left:2831.2px;top:410.8px;font-size:6px;color:#e07840;width:49.5px;text-align:right;line-height:8px;letter-spacing:-0.2px">0.0 dB</p>
<b style="left:2831.7px;top:421px;width:50.5px;height:183px;background:#171717"></b>
<b style="left:2829.2px;top:379px;width:2px;height:225px;background:#343434"></b>
<b style="left:2834.7px;top:444px;width:44.5px;height:156.5px;background:#553a25;box-shadow:inset 0 1.3px 0 #9a5e38"></b>
<b style="left:2830.7px;top:604.3px;width:52.5px;height:3.8px;background:#9cb070"></b>
<b style="left:2883.8px;top:153px;width:53.5px;height:32.6px;background:#9cb070;box-shadow:inset 0 0 0 0.6px #3a4a20"></b>
<p style="left:2883.8px;top:161.3px;font-size:7.3px;color:#2a3418;width:53.5px;text-align:center;letter-spacing:-0.2px">MO_AP_atmosp</p>
<p style="left:2883.8px;top:170.3px;font-size:7.3px;color:#2a3418;width:53.5px;text-align:center;letter-spacing:-0.2px">_silent_life_Cma</p>
<b style="left:2883.8px;top:185.6px;width:53.5px;height:127.4px;background:#191919"></b>
<b style="left:2898.6px;top:188.7px;width:15.3px;height:121.3px;background:#2b2b2b"></b>
<b style="left:2915.1px;top:188.7px;width:15.3px;height:121.3px;background:#2b2b2b"></b>
<p style="left:2885.2px;top:199.2px;font-size:6.3px;color:#d0d0d0;width:12px;text-align:center;line-height:7px">0</p>
<b style="left:2896.8px;top:202.7px;width:1.6px;height:0.9px;background:#8a8a8a"></b>
<b style="left:2932px;top:202.7px;width:2px;height:0.9px;background:#8a8a8a"></b>
<p style="left:2885.2px;top:214.8px;font-size:6.3px;color:#d0d0d0;width:12px;text-align:center;line-height:7px">6</p>
<b style="left:2896.8px;top:218.3px;width:1.6px;height:0.9px;background:#8a8a8a"></b>
<b style="left:2932px;top:218.3px;width:2px;height:0.9px;background:#8a8a8a"></b>
<p style="left:2885.2px;top:230.8px;font-size:6.3px;color:#d0d0d0;width:12px;text-align:center;line-height:7px">12</p>
<b style="left:2896.8px;top:234.3px;width:1.6px;height:0.9px;background:#8a8a8a"></b>
<b style="left:2932px;top:234.3px;width:2px;height:0.9px;background:#8a8a8a"></b>
<p style="left:2885.2px;top:245.2px;font-size:6.3px;color:#d0d0d0;width:12px;text-align:center;line-height:7px">18</p>
<b style="left:2896.8px;top:248.7px;width:1.6px;height:0.9px;background:#8a8a8a"></b>
<b style="left:2932px;top:248.7px;width:2px;height:0.9px;background:#8a8a8a"></b>
<p style="left:2885.2px;top:257.2px;font-size:6.3px;color:#d0d0d0;width:12px;text-align:center;line-height:7px">24</p>
<b style="left:2896.8px;top:260.7px;width:1.6px;height:0.9px;background:#8a8a8a"></b>
<b style="left:2932px;top:260.7px;width:2px;height:0.9px;background:#8a8a8a"></b>
<p style="left:2885.2px;top:268.6px;font-size:6.3px;color:#d0d0d0;width:12px;text-align:center;line-height:7px">30</p>
<b style="left:2896.8px;top:272.1px;width:1.6px;height:0.9px;background:#8a8a8a"></b>
<b style="left:2932px;top:272.1px;width:2px;height:0.9px;background:#8a8a8a"></b>
<p style="left:2885.2px;top:277.2px;font-size:6.3px;color:#d0d0d0;width:12px;text-align:center;line-height:7px">36</p>
<b style="left:2896.8px;top:280.7px;width:1.6px;height:0.9px;background:#8a8a8a"></b>
<b style="left:2932px;top:280.7px;width:2px;height:0.9px;background:#8a8a8a"></b>
<p style="left:2885.2px;top:289.6px;font-size:6.3px;color:#d0d0d0;width:12px;text-align:center;line-height:7px">48</p>
<b style="left:2896.8px;top:293.1px;width:1.6px;height:0.9px;background:#8a8a8a"></b>
<b style="left:2932px;top:293.1px;width:2px;height:0.9px;background:#8a8a8a"></b>
<p style="left:2885.2px;top:296.2px;font-size:6.3px;color:#d0d0d0;width:12px;text-align:center;line-height:7px">60</p>
<b style="left:2896.8px;top:299.7px;width:1.6px;height:0.9px;background:#8a8a8a"></b>
<b style="left:2932px;top:299.7px;width:2px;height:0.9px;background:#8a8a8a"></b>
<p style="left:2885.2px;top:303.2px;font-size:6.3px;color:#d0d0d0;width:12px;text-align:center;line-height:7px">&infin;</p>
<b style="left:2896.8px;top:306.7px;width:1.6px;height:0.9px;background:#8a8a8a"></b>
<b style="left:2932px;top:306.7px;width:2px;height:0.9px;background:#8a8a8a"></b>
<b style="left:2883.8px;top:313px;width:53.5px;height:66px;background:#222"></b>
<b style="left:2883.8px;top:313px;width:0.6px;height:66px;background:#111"></b>
<b style="left:2884.8px;top:314px;width:51.5px;height:10px;background:#383838;border-radius:1px"></b>
<svg style="left:2886.8px;top:316px;" width="6" height="6"><path d="M4.5 0.5 A3 3 0 1 0 5.5 5.2 A2.3 2.3 0 1 1 4.5 0.5z" fill="#e8c050"/></svg>
<p style="left:2893.8px;top:315.9px;font-size:6px;color:#d0d0d0;width:42px;overflow:hidden;letter-spacing:-0.15px">Sampler</p>
<p style="left:2885.2px;top:325.5px;font-size:9px;color:#9a9a9a;line-height:10px">+</p>
<b style="left:2883.8px;top:379px;width:53.5px;height:239px;background:#1b1b1b"></b>
<b style="left:2885.2px;top:381px;width:50.5px;height:12.5px;background:#2a2a2a"></b>
<b style="left:2886.1px;top:381.5px;width:15.5px;height:11.5px;background:#4f4f4f;border-radius:1.5px;box-shadow:inset 0 0 0 0.6px #2c2c2c"></b>
<b style="left:2902.2px;top:381.5px;width:15.5px;height:11.5px;background:#4f4f4f;border-radius:1.5px;box-shadow:inset 0 0 0 0.6px #2c2c2c"></b>
<b style="left:2918.3px;top:381.5px;width:16px;height:11.5px;background:#4f4f4f;border-radius:1.5px;box-shadow:inset 0 0 0 0.6px #2c2c2c"></b>
<svg style="left:2890.2px;top:383.5px;" width="8" height="8"><circle cx="4" cy="4" r="3" fill="#f0f0f0"/></svg>
<p style="left:2902.2px;top:382px;font-size:8.5px;color:#e8e8e8;width:15.5px;text-align:center;line-height:10px">S</p>
<p style="left:2918.3px;top:382px;font-size:8.5px;color:#e8e8e8;width:16px;text-align:center;line-height:10px">M</p>
<b style="left:2885.2px;top:395.5px;width:50.5px;height:12.5px;background:#141414;border-radius:1px;box-shadow:inset 0 0 0 0.7px #2e2e2e"></b>
<b style="left:2909.9px;top:397.5px;width:1.3px;height:9px;background:#d07030"></b>
<b style="left:2885.2px;top:409.5px;width:50.5px;height:11.5px;background:#161616;box-shadow:inset 0 -0.7px 0 #333"></b>
<p style="left:2884.8px;top:410.8px;font-size:6px;color:#e07840;width:49.5px;text-align:right;line-height:8px;letter-spacing:-0.2px">-6.0 dB</p>
<b style="left:2885.2px;top:421px;width:50.5px;height:183px;background:#171717"></b>
<b style="left:2882.8px;top:379px;width:2px;height:225px;background:#343434"></b>
<b style="left:2888.2px;top:467px;width:44.5px;height:133.5px;background:#553a25;box-shadow:inset 0 1.3px 0 #9a5e38"></b>
<b style="left:2884.2px;top:604.3px;width:52.5px;height:3.8px;background:#9cb070"></b>
<b style="left:2937.3px;top:153px;width:53.5px;height:32.6px;background:#6f8c45;box-shadow:inset 0 0 0 0.6px #3a4a20"></b>
<p style="left:2934.3px;top:165.8px;font-size:7.2px;color:#eef4e0;width:59.5px;text-align:center;letter-spacing:-0.35px">52</p>
<b style="left:2937.3px;top:185.6px;width:53.5px;height:127.4px;background:#191919"></b>
<b style="left:2952.1px;top:188.7px;width:15.3px;height:121.3px;background:#2b2b2b"></b>
<b style="left:2968.6px;top:188.7px;width:15.3px;height:121.3px;background:#2b2b2b"></b>
<p style="left:2938.8px;top:199.2px;font-size:6.3px;color:#d0d0d0;width:12px;text-align:center;line-height:7px">0</p>
<b style="left:2950.3px;top:202.7px;width:1.6px;height:0.9px;background:#8a8a8a"></b>
<b style="left:2985.5px;top:202.7px;width:2px;height:0.9px;background:#8a8a8a"></b>
<p style="left:2938.8px;top:214.8px;font-size:6.3px;color:#d0d0d0;width:12px;text-align:center;line-height:7px">6</p>
<b style="left:2950.3px;top:218.3px;width:1.6px;height:0.9px;background:#8a8a8a"></b>
<b style="left:2985.5px;top:218.3px;width:2px;height:0.9px;background:#8a8a8a"></b>
<p style="left:2938.8px;top:230.8px;font-size:6.3px;color:#d0d0d0;width:12px;text-align:center;line-height:7px">12</p>
<b style="left:2950.3px;top:234.3px;width:1.6px;height:0.9px;background:#8a8a8a"></b>
<b style="left:2985.5px;top:234.3px;width:2px;height:0.9px;background:#8a8a8a"></b>
<p style="left:2938.8px;top:245.2px;font-size:6.3px;color:#d0d0d0;width:12px;text-align:center;line-height:7px">18</p>
<b style="left:2950.3px;top:248.7px;width:1.6px;height:0.9px;background:#8a8a8a"></b>
<b style="left:2985.5px;top:248.7px;width:2px;height:0.9px;background:#8a8a8a"></b>
<p style="left:2938.8px;top:257.2px;font-size:6.3px;color:#d0d0d0;width:12px;text-align:center;line-height:7px">24</p>
<b style="left:2950.3px;top:260.7px;width:1.6px;height:0.9px;background:#8a8a8a"></b>
<b style="left:2985.5px;top:260.7px;width:2px;height:0.9px;background:#8a8a8a"></b>
<p style="left:2938.8px;top:268.6px;font-size:6.3px;color:#d0d0d0;width:12px;text-align:center;line-height:7px">30</p>
<b style="left:2950.3px;top:272.1px;width:1.6px;height:0.9px;background:#8a8a8a"></b>
<b style="left:2985.5px;top:272.1px;width:2px;height:0.9px;background:#8a8a8a"></b>
<p style="left:2938.8px;top:277.2px;font-size:6.3px;color:#d0d0d0;width:12px;text-align:center;line-height:7px">36</p>
<b style="left:2950.3px;top:280.7px;width:1.6px;height:0.9px;background:#8a8a8a"></b>
<b style="left:2985.5px;top:280.7px;width:2px;height:0.9px;background:#8a8a8a"></b>
<p style="left:2938.8px;top:289.6px;font-size:6.3px;color:#d0d0d0;width:12px;text-align:center;line-height:7px">48</p>
<b style="left:2950.3px;top:293.1px;width:1.6px;height:0.9px;background:#8a8a8a"></b>
<b style="left:2985.5px;top:293.1px;width:2px;height:0.9px;background:#8a8a8a"></b>
<p style="left:2938.8px;top:296.2px;font-size:6.3px;color:#d0d0d0;width:12px;text-align:center;line-height:7px">60</p>
<b style="left:2950.3px;top:299.7px;width:1.6px;height:0.9px;background:#8a8a8a"></b>
<b style="left:2985.5px;top:299.7px;width:2px;height:0.9px;background:#8a8a8a"></b>
<p style="left:2938.8px;top:303.2px;font-size:6.3px;color:#d0d0d0;width:12px;text-align:center;line-height:7px">&infin;</p>
<b style="left:2950.3px;top:306.7px;width:1.6px;height:0.9px;background:#8a8a8a"></b>
<b style="left:2985.5px;top:306.7px;width:2px;height:0.9px;background:#8a8a8a"></b>
<b style="left:2937.3px;top:313px;width:53.5px;height:66px;background:#222"></b>
<b style="left:2937.3px;top:313px;width:0.6px;height:66px;background:#111"></b>
<b style="left:2938.3px;top:314px;width:51.5px;height:10px;background:#383838;border-radius:1px"></b>
<svg style="left:2940.3px;top:316px;" width="6" height="6"><path d="M4.5 0.5 A3 3 0 1 0 5.5 5.2 A2.3 2.3 0 1 1 4.5 0.5z" fill="#e8c050"/></svg>
<p style="left:2947.3px;top:315.9px;font-size:6px;color:#d0d0d0;width:42px;overflow:hidden;letter-spacing:-0.15px">Sampler</p>
<b style="left:2938.3px;top:325px;width:51.5px;height:10px;background:#383838;border-radius:1px"></b>
<svg style="left:2940.3px;top:327px;" width="6" height="6"><path d="M4.5 0.5 A3 3 0 1 0 5.5 5.2 A2.3 2.3 0 1 1 4.5 0.5z" fill="#e8c050"/></svg>
<p style="left:2947.3px;top:326.9px;font-size:6px;color:#d0d0d0;width:42px;overflow:hidden;letter-spacing:-0.15px">Reverb</p>
<p style="left:2938.8px;top:336.5px;font-size:9px;color:#9a9a9a;line-height:10px">+</p>
<b style="left:2937.3px;top:379px;width:53.5px;height:239px;background:#1b1b1b"></b>
<b style="left:2938.8px;top:381px;width:50.5px;height:12.5px;background:#2a2a2a"></b>
<b style="left:2939.6px;top:381.5px;width:15.5px;height:11.5px;background:#4f4f4f;border-radius:1.5px;box-shadow:inset 0 0 0 0.6px #2c2c2c"></b>
<b style="left:2955.8px;top:381.5px;width:15.5px;height:11.5px;background:#4f4f4f;border-radius:1.5px;box-shadow:inset 0 0 0 0.6px #2c2c2c"></b>
<b style="left:2971.9px;top:381.5px;width:16px;height:11.5px;background:#4f4f4f;border-radius:1.5px;box-shadow:inset 0 0 0 0.6px #2c2c2c"></b>
<svg style="left:2943.8px;top:383.5px;" width="8" height="8"><circle cx="4" cy="4" r="3" fill="#f0f0f0"/></svg>
<p style="left:2955.8px;top:382px;font-size:8.5px;color:#e8e8e8;width:15.5px;text-align:center;line-height:10px">S</p>
<p style="left:2971.9px;top:382px;font-size:8.5px;color:#e8e8e8;width:16px;text-align:center;line-height:10px">M</p>
<b style="left:2938.8px;top:395.5px;width:50.5px;height:12.5px;background:#141414;border-radius:1px;box-shadow:inset 0 0 0 0.7px #2e2e2e"></b>
<b style="left:2963.5px;top:397.5px;width:1.3px;height:9px;background:#d07030"></b>
<b style="left:2938.8px;top:409.5px;width:50.5px;height:11.5px;background:#161616;box-shadow:inset 0 -0.7px 0 #333"></b>
<p style="left:2938.3px;top:410.8px;font-size:6px;color:#e07840;width:49.5px;text-align:right;line-height:8px;letter-spacing:-0.2px">-6.0 dB</p>
<b style="left:2938.8px;top:421px;width:50.5px;height:183px;background:#171717"></b>
<b style="left:2936.3px;top:379px;width:2px;height:225px;background:#343434"></b>
<b style="left:2941.8px;top:467px;width:44.5px;height:133.5px;background:#553a25;box-shadow:inset 0 1.3px 0 #9a5e38"></b>
<b style="left:2937.8px;top:604.3px;width:52.5px;height:3.8px;background:#6f8c45"></b>
<b style="left:2990.8px;top:153px;width:48.8px;height:32.6px;background:#9cb070;border-radius:5px 0 0 0;box-shadow:inset 0.6px 0.6px 0 #2a3418"></b>
<p style="left:2990.8px;top:155.8px;font-size:7.3px;color:#2a3418;width:48.8px;text-align:center;letter-spacing:-0.2px">Group</p>
<p style="left:2990.8px;top:164.8px;font-size:7.3px;color:#2a3418;width:48.8px;text-align:center;letter-spacing:-0.2px">3</p>
<svg style="left:3010.2px;top:173.3px;" width="11" height="9"><path d="M0.5 1.5 h3.5 l1 1 h5 v6 h-9.5z" fill="#111"/><path d="M0.5 3.5 h10 l-1 5 h-9z" fill="#222"/></svg>
<b style="left:2990.8px;top:185.6px;width:48.8px;height:127.4px;background:#191919"></b>
<b style="left:3005.3px;top:188.7px;width:15.5px;height:121.3px;background:#2b2b2b"></b>
<b style="left:3005.3px;top:300.4px;width:15.5px;height:9.6px;background:linear-gradient(180deg,#7ab858,#3e7e34)"></b>
<b style="left:3005.3px;top:286.8px;width:15.5px;height:1.3px;background:#8ab050"></b>
<b style="left:3021.8px;top:188.7px;width:15.5px;height:121.3px;background:#2b2b2b"></b>
<b style="left:3021.8px;top:300.4px;width:15.5px;height:9.6px;background:linear-gradient(180deg,#7ab858,#3e7e34)"></b>
<b style="left:3021.8px;top:286.8px;width:15.5px;height:1.3px;background:#8ab050"></b>
<p style="left:2992.3px;top:199.2px;font-size:6.3px;color:#d0d0d0;width:12px;text-align:center;line-height:7px">0</p>
<b style="left:3003.8px;top:202.7px;width:1.6px;height:0.9px;background:#8a8a8a"></b>
<b style="left:3034.3px;top:202.7px;width:2px;height:0.9px;background:#8a8a8a"></b>
<p style="left:2992.3px;top:214.8px;font-size:6.3px;color:#d0d0d0;width:12px;text-align:center;line-height:7px">6</p>
<b style="left:3003.8px;top:218.3px;width:1.6px;height:0.9px;background:#8a8a8a"></b>
<b style="left:3034.3px;top:218.3px;width:2px;height:0.9px;background:#8a8a8a"></b>
<p style="left:2992.3px;top:230.8px;font-size:6.3px;color:#d0d0d0;width:12px;text-align:center;line-height:7px">12</p>
<b style="left:3003.8px;top:234.3px;width:1.6px;height:0.9px;background:#8a8a8a"></b>
<b style="left:3034.3px;top:234.3px;width:2px;height:0.9px;background:#8a8a8a"></b>
<p style="left:2992.3px;top:245.2px;font-size:6.3px;color:#d0d0d0;width:12px;text-align:center;line-height:7px">18</p>
<b style="left:3003.8px;top:248.7px;width:1.6px;height:0.9px;background:#8a8a8a"></b>
<b style="left:3034.3px;top:248.7px;width:2px;height:0.9px;background:#8a8a8a"></b>
<p style="left:2992.3px;top:257.2px;font-size:6.3px;color:#d0d0d0;width:12px;text-align:center;line-height:7px">24</p>
<b style="left:3003.8px;top:260.7px;width:1.6px;height:0.9px;background:#8a8a8a"></b>
<b style="left:3034.3px;top:260.7px;width:2px;height:0.9px;background:#8a8a8a"></b>
<p style="left:2992.3px;top:268.6px;font-size:6.3px;color:#d0d0d0;width:12px;text-align:center;line-height:7px">30</p>
<b style="left:3003.8px;top:272.1px;width:1.6px;height:0.9px;background:#8a8a8a"></b>
<b style="left:3034.3px;top:272.1px;width:2px;height:0.9px;background:#8a8a8a"></b>
<p style="left:2992.3px;top:277.2px;font-size:6.3px;color:#d0d0d0;width:12px;text-align:center;line-height:7px">36</p>
<b style="left:3003.8px;top:280.7px;width:1.6px;height:0.9px;background:#8a8a8a"></b>
<b style="left:3034.3px;top:280.7px;width:2px;height:0.9px;background:#8a8a8a"></b>
<p style="left:2992.3px;top:289.6px;font-size:6.3px;color:#d0d0d0;width:12px;text-align:center;line-height:7px">48</p>
<b style="left:3003.8px;top:293.1px;width:1.6px;height:0.9px;background:#8a8a8a"></b>
<b style="left:3034.3px;top:293.1px;width:2px;height:0.9px;background:#8a8a8a"></b>
<p style="left:2992.3px;top:296.2px;font-size:6.3px;color:#d0d0d0;width:12px;text-align:center;line-height:7px">60</p>
<b style="left:3003.8px;top:299.7px;width:1.6px;height:0.9px;background:#8a8a8a"></b>
<b style="left:3034.3px;top:299.7px;width:2px;height:0.9px;background:#8a8a8a"></b>
<p style="left:2992.3px;top:303.2px;font-size:6.3px;color:#d0d0d0;width:12px;text-align:center;line-height:7px">&infin;</p>
<b style="left:3003.8px;top:306.7px;width:1.6px;height:0.9px;background:#8a8a8a"></b>
<b style="left:3034.3px;top:306.7px;width:2px;height:0.9px;background:#8a8a8a"></b>
<b style="left:2990.8px;top:313px;width:48.8px;height:66px;background:#222"></b>
<b style="left:2990.8px;top:313px;width:0.6px;height:66px;background:#111"></b>
<b style="left:2991.8px;top:314px;width:46.8px;height:10px;background:#383838;border-radius:1px"></b>
<svg style="left:2993.8px;top:316.2px;" width="6" height="6"><circle cx="3" cy="3" r="2.3" fill="#e8c050"/></svg>
<p style="left:3000.8px;top:315.9px;font-size:6px;color:#d0d0d0;width:37.2px;overflow:hidden;letter-spacing:-0.15px">Comb</p>
<b style="left:2991.8px;top:325px;width:46.8px;height:10px;background:#383838;border-radius:1px"></b>
<svg style="left:2993.8px;top:327.2px;" width="6" height="6"><circle cx="3" cy="3" r="2.3" fill="#e8c050"/></svg>
<p style="left:3000.8px;top:326.9px;font-size:6px;color:#d0d0d0;width:37.2px;overflow:hidden;letter-spacing:-0.15px">Multiband FX-3</p>
<b style="left:2991.8px;top:336px;width:46.8px;height:10px;background:#383838;border-radius:1px"></b>
<svg style="left:2993.8px;top:338.2px;" width="6" height="6"><circle cx="3" cy="3" r="2.3" fill="#e8c050"/></svg>
<p style="left:3000.8px;top:337.9px;font-size:6px;color:#d0d0d0;width:37.2px;overflow:hidden;letter-spacing:-0.15px">EQ+</p>
<svg style="left:3025.6px;top:338px;" width="12" height="7"><path d="M0 6 Q4 6 6 3 T12 1" stroke="#ccc" fill="none" stroke-width="0.8"/></svg>
<p style="left:2992.3px;top:347.5px;font-size:9px;color:#9a9a9a;line-height:10px">+</p>
<p style="left:3009.6px;top:349.6px;font-size:6px;color:#8a8a8a;width:28px;text-align:right">0.5 ms</p>
<b style="left:2990.8px;top:379px;width:48.8px;height:239px;background:#1b1b1b"></b>
<b style="left:2992.3px;top:381px;width:45.8px;height:12.5px;background:#2a2a2a"></b>
<b style="left:2993.2px;top:381.5px;width:15.5px;height:11.5px;background:#4f4f4f;border-radius:1.5px;box-shadow:inset 0 0 0 0.6px #2c2c2c"></b>
<b style="left:3009.3px;top:381.5px;width:15.5px;height:11.5px;background:#4f4f4f;border-radius:1.5px;box-shadow:inset 0 0 0 0.6px #2c2c2c"></b>
<b style="left:3025.4px;top:381.5px;width:16px;height:11.5px;background:#4f4f4f;border-radius:1.5px;box-shadow:inset 0 0 0 0.6px #2c2c2c"></b>
<svg style="left:2997.3px;top:383.5px;" width="8" height="8"><circle cx="4" cy="4" r="3" fill="#9a9a9a"/></svg>
<p style="left:3009.3px;top:382px;font-size:8.5px;color:#e8e8e8;width:15.5px;text-align:center;line-height:10px">S</p>
<p style="left:3025.4px;top:382px;font-size:8.5px;color:#e8e8e8;width:16px;text-align:center;line-height:10px">M</p>
<b style="left:2992.3px;top:395.5px;width:45.8px;height:12.5px;background:#141414;border-radius:1px;box-shadow:inset 0 0 0 0.7px #2e2e2e"></b>
<b style="left:3014.6px;top:397.5px;width:1.3px;height:9px;background:#d07030"></b>
<b style="left:2992.3px;top:409.5px;width:45.8px;height:11.5px;background:#161616;box-shadow:inset 0 -0.7px 0 #333"></b>
<p style="left:2993.8px;top:410.8px;font-size:6px;color:#9a9a9a;line-height:8px">-12.5</p>
<p style="left:2991.8px;top:410.8px;font-size:6px;color:#e07840;width:44.8px;text-align:right;line-height:8px;letter-spacing:-0.2px">0.0 dB</p>
<b style="left:2992.3px;top:421px;width:45.8px;height:183px;background:#171717"></b>
<b style="left:2989.8px;top:379px;width:2px;height:225px;background:#343434"></b>
<b style="left:2995.3px;top:444px;width:39.8px;height:156.5px;background:#553a25;box-shadow:inset 0 1.3px 0 #9a5e38"></b>
<b style="left:2991.3px;top:604.3px;width:47.8px;height:3.8px;background:#9cb070"></b>
<b style="left:3039.6px;top:146.8px;width:57.5px;height:38.8px;background:#777777"></b>
<p style="left:3036.6px;top:162.7px;font-size:7.2px;color:#f0f0f0;width:64px;text-align:center;letter-spacing:-0.35px">Master</p>
<b style="left:3039.6px;top:185.6px;width:58px;height:127.4px;background:#191919"></b>
<b style="left:3054.6px;top:188.7px;width:18px;height:121.3px;background:#2b2b2b"></b>
<b style="left:3054.6px;top:236.4px;width:18px;height:73.6px;background:linear-gradient(180deg,#d88a4a 0px,#e0c070 16px,#8ab860 26px,#6aa848 60px,#3a7a30 100%)"></b>
<b style="left:3054.6px;top:221.5px;width:18px;height:1.3px;background:#e08040"></b>
<b style="left:3073.6px;top:188.7px;width:18px;height:121.3px;background:#2b2b2b"></b>
<b style="left:3073.6px;top:235px;width:18px;height:75px;background:linear-gradient(180deg,#d88a4a 0px,#e0c070 16px,#8ab860 26px,#6aa848 60px,#3a7a30 100%)"></b>
<b style="left:3073.6px;top:221.5px;width:18px;height:1.3px;background:#e08040"></b>
<p style="left:3041.1px;top:199.2px;font-size:6.3px;color:#d0d0d0;width:12px;text-align:center;line-height:7px">0</p>
<b style="left:3052.6px;top:202.7px;width:1.6px;height:0.9px;background:#8a8a8a"></b>
<b style="left:3092.3px;top:202.7px;width:2px;height:0.9px;background:#8a8a8a"></b>
<p style="left:3041.1px;top:214.8px;font-size:6.3px;color:#d0d0d0;width:12px;text-align:center;line-height:7px">6</p>
<b style="left:3052.6px;top:218.3px;width:1.6px;height:0.9px;background:#8a8a8a"></b>
<b style="left:3092.3px;top:218.3px;width:2px;height:0.9px;background:#8a8a8a"></b>
<p style="left:3041.1px;top:230.8px;font-size:6.3px;color:#d0d0d0;width:12px;text-align:center;line-height:7px">12</p>
<b style="left:3052.6px;top:234.3px;width:1.6px;height:0.9px;background:#8a8a8a"></b>
<b style="left:3092.3px;top:234.3px;width:2px;height:0.9px;background:#8a8a8a"></b>
<p style="left:3041.1px;top:245.2px;font-size:6.3px;color:#d0d0d0;width:12px;text-align:center;line-height:7px">18</p>
<b style="left:3052.6px;top:248.7px;width:1.6px;height:0.9px;background:#8a8a8a"></b>
<b style="left:3092.3px;top:248.7px;width:2px;height:0.9px;background:#8a8a8a"></b>
<p style="left:3041.1px;top:257.2px;font-size:6.3px;color:#d0d0d0;width:12px;text-align:center;line-height:7px">24</p>
<b style="left:3052.6px;top:260.7px;width:1.6px;height:0.9px;background:#8a8a8a"></b>
<b style="left:3092.3px;top:260.7px;width:2px;height:0.9px;background:#8a8a8a"></b>
<p style="left:3041.1px;top:268.6px;font-size:6.3px;color:#d0d0d0;width:12px;text-align:center;line-height:7px">30</p>
<b style="left:3052.6px;top:272.1px;width:1.6px;height:0.9px;background:#8a8a8a"></b>
<b style="left:3092.3px;top:272.1px;width:2px;height:0.9px;background:#8a8a8a"></b>
<p style="left:3041.1px;top:277.2px;font-size:6.3px;color:#d0d0d0;width:12px;text-align:center;line-height:7px">36</p>
<b style="left:3052.6px;top:280.7px;width:1.6px;height:0.9px;background:#8a8a8a"></b>
<b style="left:3092.3px;top:280.7px;width:2px;height:0.9px;background:#8a8a8a"></b>
<p style="left:3041.1px;top:289.6px;font-size:6.3px;color:#d0d0d0;width:12px;text-align:center;line-height:7px">48</p>
<b style="left:3052.6px;top:293.1px;width:1.6px;height:0.9px;background:#8a8a8a"></b>
<b style="left:3092.3px;top:293.1px;width:2px;height:0.9px;background:#8a8a8a"></b>
<p style="left:3041.1px;top:296.2px;font-size:6.3px;color:#d0d0d0;width:12px;text-align:center;line-height:7px">60</p>
<b style="left:3052.6px;top:299.7px;width:1.6px;height:0.9px;background:#8a8a8a"></b>
<b style="left:3092.3px;top:299.7px;width:2px;height:0.9px;background:#8a8a8a"></b>
<p style="left:3041.1px;top:303.2px;font-size:6.3px;color:#d0d0d0;width:12px;text-align:center;line-height:7px">&infin;</p>
<b style="left:3052.6px;top:306.7px;width:1.6px;height:0.9px;background:#8a8a8a"></b>
<b style="left:3092.3px;top:306.7px;width:2px;height:0.9px;background:#8a8a8a"></b>
<b style="left:3039.6px;top:313px;width:58px;height:66px;background:#222"></b>
<b style="left:3039.6px;top:313px;width:0.6px;height:66px;background:#111"></b>
<b style="left:3040.6px;top:314px;width:56px;height:10px;background:#383838;border-radius:1px"></b>
<svg style="left:3042.6px;top:316.2px;" width="6" height="6"><circle cx="3" cy="3" r="2.3" fill="#e8c050"/></svg>
<p style="left:3049.6px;top:315.9px;font-size:6px;color:#d0d0d0;width:46.5px;overflow:hidden;letter-spacing:-0.15px">kHs Compactor</p>
<p style="left:3041.1px;top:325.5px;font-size:9px;color:#9a9a9a;line-height:10px">+</p>
<p style="left:3067.6px;top:327.6px;font-size:6px;color:#8a8a8a;width:28px;text-align:right">10.2 ms</p>
<b style="left:3039.6px;top:379px;width:58px;height:239px;background:#1b1b1b"></b>
<b style="left:3041.1px;top:381px;width:55px;height:12.5px;background:#2a2a2a"></b>
<b style="left:3041.9px;top:381.5px;width:15.5px;height:11.5px;background:#4f4f4f;border-radius:1.5px;box-shadow:inset 0 0 0 0.6px #2c2c2c"></b>
<b style="left:3058.1px;top:381.5px;width:15.5px;height:11.5px;background:#4f4f4f;border-radius:1.5px;box-shadow:inset 0 0 0 0.6px #2c2c2c"></b>
<b style="left:3074.2px;top:381.5px;width:16px;height:11.5px;background:#4f4f4f;border-radius:1.5px;box-shadow:inset 0 0 0 0.6px #2c2c2c"></b>
<svg style="left:3046.1px;top:383.5px;" width="8" height="8"><circle cx="4" cy="4" r="3" fill="#9a9a9a"/></svg>
<p style="left:3058.1px;top:382px;font-size:8.5px;color:#e8e8e8;width:15.5px;text-align:center;line-height:10px">S</p>
<p style="left:3074.2px;top:382px;font-size:8.5px;color:#e8e8e8;width:16px;text-align:center;line-height:10px">M</p>
<b style="left:3041.1px;top:395.5px;width:55px;height:12.5px;background:#141414;border-radius:1px;box-shadow:inset 0 0 0 0.7px #2e2e2e"></b>
<b style="left:3068px;top:397.5px;width:1.3px;height:9px;background:#d07030"></b>
<b style="left:3041.1px;top:409.5px;width:55px;height:11.5px;background:#161616;box-shadow:inset 0 -0.7px 0 #333"></b>
<p style="left:3042.6px;top:410.8px;font-size:6px;color:#9a9a9a;line-height:8px">-6.0</p>
<p style="left:3040.6px;top:410.8px;font-size:6px;color:#e07840;width:54px;text-align:right;line-height:8px;letter-spacing:-0.2px">0.0 dB</p>
<b style="left:3041.1px;top:421px;width:55px;height:183px;background:#171717"></b>
<b style="left:3038.6px;top:379px;width:2px;height:225px;background:#343434"></b>
<b style="left:3044.1px;top:444px;width:49px;height:156.5px;background:#553a25;box-shadow:inset 0 1.3px 0 #9a5e38"></b>
<b style="left:3040.1px;top:604.3px;width:57px;height:3.8px;background:#777777"></b>
<b style="left:2294.7px;top:608px;width:805px;height:10px;background:#3e3e3e;border-radius:0 0 4px 4px"></b>
<b style="left:2294.7px;top:608.5px;width:293.5px;height:9px;background:#5e5e5e;border-radius:0 0 0 4px"></b>
</body></html>
